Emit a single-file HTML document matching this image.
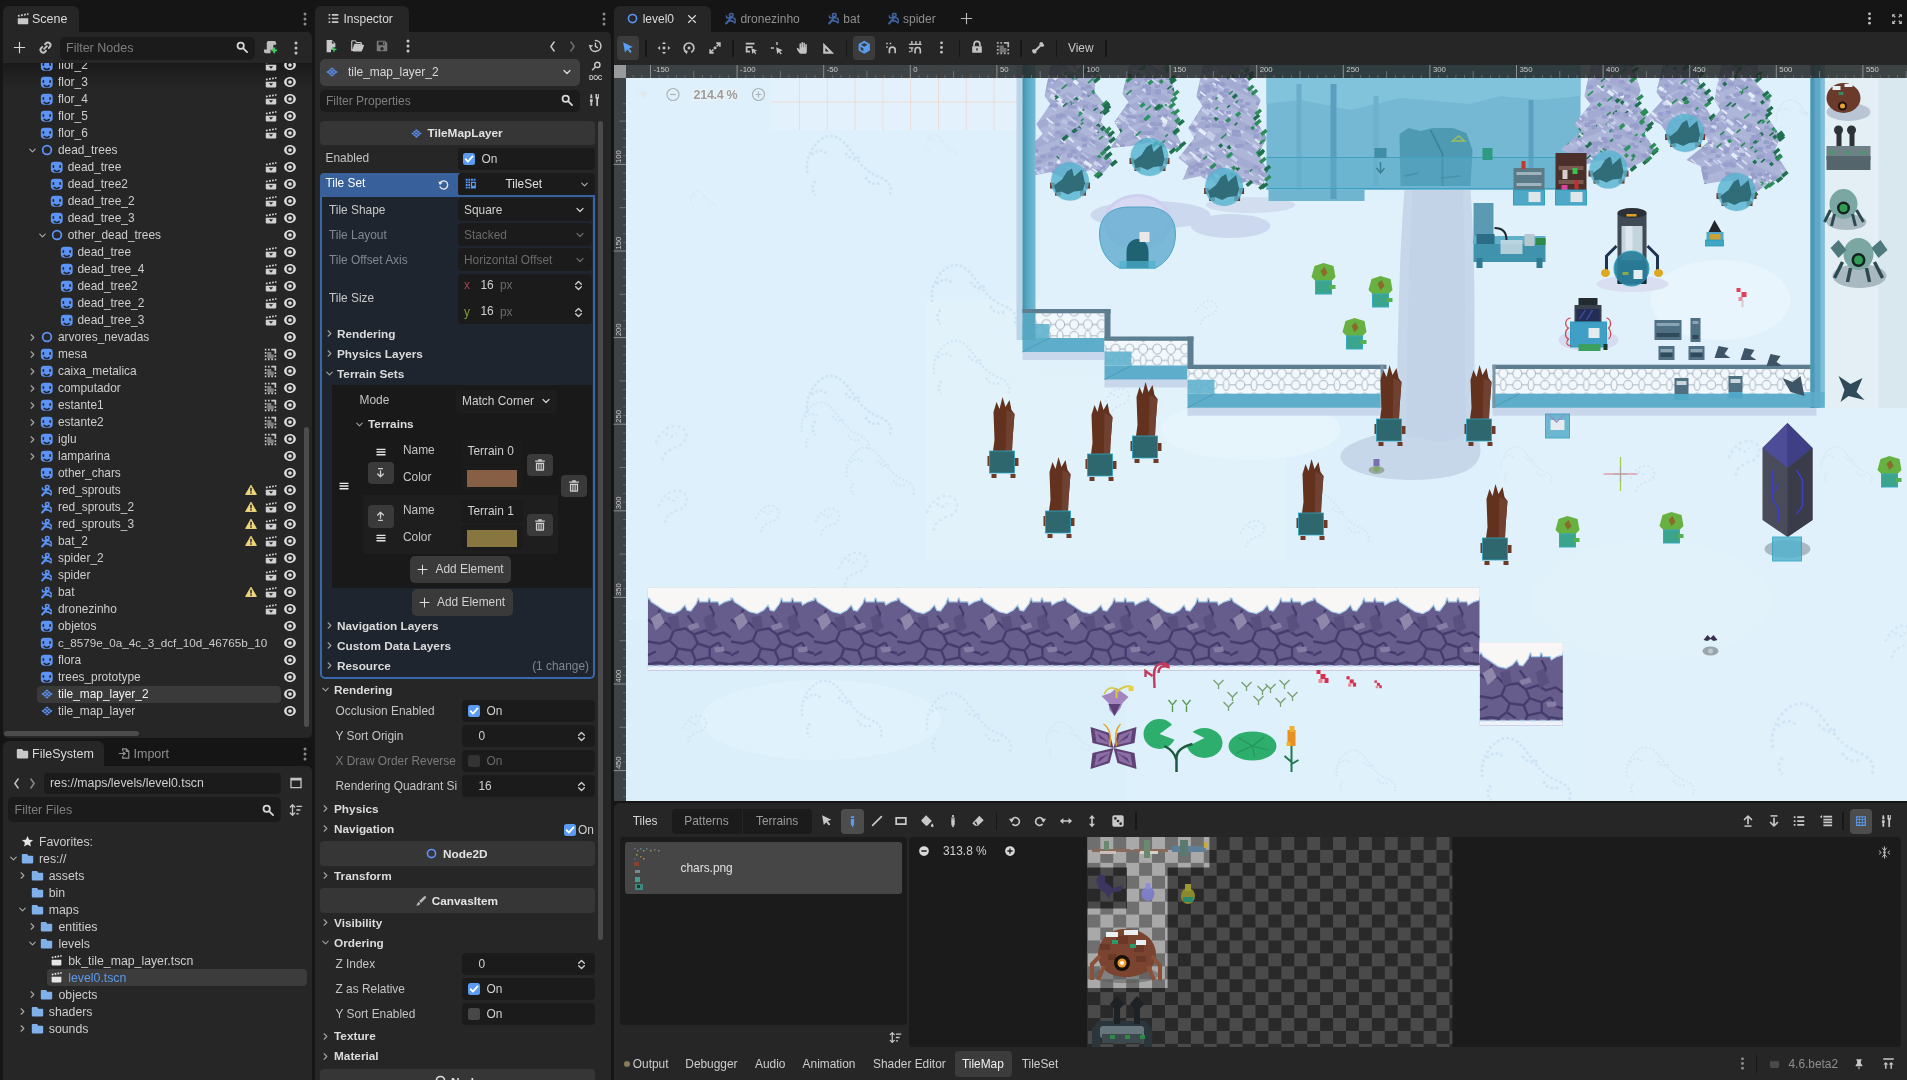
<!DOCTYPE html>
<html><head><meta charset="utf-8"><title>Godot</title>
<style>
html,body{margin:0;padding:0;background:#151515;}
body{width:1907px;height:1080px;overflow:hidden;position:relative;font-family:"Liberation Sans", sans-serif;font-size:12px;color:#d2d2d2;}
body div, body svg{position:absolute;box-sizing:border-box;}
svg text{font-family:"Liberation Sans", sans-serif;}
#root{left:0;top:0;width:1907px;height:1080px;will-change:transform;}
</style></head><body><div id="root">
<div style="left:3px;top:6px;width:76px;height:27px;background:#262626;border-radius:6px 6px 0 0;"></div>
<div style="left:3px;top:32px;width:309px;height:706px;background:#262626;border-radius:0 5px 5px 5px;"></div>
<svg viewBox="0 0 16 16" preserveAspectRatio="none" style="left:15.5px;top:11.5px;width:14px;height:14px;color:#c8c8c8;fill:#c8c8c8;"><path d="M2 7h12v6a1 1 0 0 1-1 1H3a1 1 0 0 1-1-1zM2 3.5l2-.5.5 2-2 .5zM5.5 2.8l2-.5.5 2-2 .5zM9 2.2l2-.5.5 2-2 .5zM12.4 1.6l1.6-.4.5 2-1.6.4z"/></svg>
<div style="left:32px;top:10.5px;height:16px;line-height:16px;font-size:12.5px;color:#dadada;white-space:nowrap;">Scene</div>
<svg viewBox="0 0 16 16" preserveAspectRatio="none" style="left:296.5px;top:10.5px;width:16px;height:16px;color:#8a8a8a;fill:#8a8a8a;"><circle cx="8" cy="3" r="1.5"/><circle cx="8" cy="8" r="1.5"/><circle cx="8" cy="13" r="1.5"/></svg>
<svg viewBox="0 0 16 16" preserveAspectRatio="none" style="left:12px;top:40px;width:15px;height:15px;color:#d8d8d8;fill:#d8d8d8;"><path d="M7.4 2h1.2v5.4H14v1.2H8.6V14H7.4V8.6H2V7.4h5.4z"/></svg>
<svg viewBox="0 0 16 16" preserveAspectRatio="none" style="left:38px;top:40px;width:15px;height:15px;color:#c4c4c4;fill:#c4c4c4;"><g fill="none" stroke="currentColor" stroke-width="2" stroke-linecap="round"><path d="M6.5 9.5l3-3"/><path d="M7.5 4.5l1-1a2.8 2.8 0 0 1 4 4l-1 1"/><path d="M8.5 11.500l-1 1a2.8 2.8 0 0 1-4-4l1-1"/></g></svg>
<div style="left:60px;top:36.5px;width:195px;height:23.5px;background:#1b1b1b;border-radius:5px;"></div>
<div style="left:66px;top:39.5px;height:16px;line-height:16px;font-size:12.5px;color:#7e7e7e;white-space:nowrap;">Filter Nodes</div>
<svg viewBox="0 0 16 16" preserveAspectRatio="none" style="left:235px;top:40px;width:14px;height:14px;color:#d8d8d8;fill:#d8d8d8;"><g fill="none" stroke="currentColor" stroke-width="2" stroke-linecap="round"><circle cx="6.5" cy="6.5" r="3.6"/><path d="M9.5 9.500l4.300 4.300"/></g></svg>
<svg viewBox="0 0 16 16" preserveAspectRatio="none" style="left:263px;top:40px;width:15px;height:15px;color:#cfcfcf;fill:#cfcfcf;"><path d="M6 1a2 2 0 0 0-2 2v7H1v2a2 2 0 0 0 2 2h5v-3.500h3V5h3V3a2 2 0 0 0-2-2z" fill="#bdbdbd"/><path d="M12 9v2h-2v2h2v2h2v-2h2v-2h-2V9z" fill="#45d160" transform="translate(-1 -1)"/></svg>
<svg viewBox="0 0 16 16" preserveAspectRatio="none" style="left:287.5px;top:39.5px;width:16px;height:16px;color:#c4c4c4;fill:#c4c4c4;"><circle cx="8" cy="3" r="1.5"/><circle cx="8" cy="8" r="1.5"/><circle cx="8" cy="13" r="1.5"/></svg>
<div style="left:3px;top:62.500px;width:309px;height:24px;background:linear-gradient(#1a1a1a,#262626);"></div>
<div style="left:3px;top:62.500px;width:309px;height:670px;overflow:hidden;">
<svg viewBox="0 0 16 16" preserveAspectRatio="none" style="left:37px;top:-3.55px;width:13.5px;height:12.5px;color:#cfcfcf;fill:#cfcfcf;"><path fill="#5c93f7" fill-rule="evenodd" d="M5 1a4 4 0 0 0-4 4v6a4 4 0 0 0 4 4h6a4 4 0 0 0 4-4V5a4 4 0 0 0-4-4zM4 5a1 1 0 0 1 1 1v2a1 1 0 0 1-2 0V6a1 1 0 0 1 1-1zm8 0a1 1 0 0 1 1 1v2a1 1 0 0 1-2 0V6a1 1 0 0 1 1-1zM5 11a1 1 0 0 1 .7.300 3.300 3.300 0 0 0 4.600 0 1 1 0 0 1 1.400 1.400 5.300 5.300 0 0 1-7.400 0A1 1 0 0 1 5 11z"/></svg>
<div style="left:55.0px;top:-5.299999999999997px;height:16px;line-height:16px;font-size:11.9px;color:#cdcdcd;white-space:nowrap;">flor_2</div>
<svg viewBox="0 0 16 16" preserveAspectRatio="none" style="left:260.75px;top:-3.8px;width:14px;height:13px;color:#d0d0d0;fill:#d0d0d0;"><path d="M2 7h12v6a1 1 0 0 1-1 1H3a1 1 0 0 1-1-1zm3.5 2L8 12l2.5-3zM2 3.5l2-.5.5 2-2 .5zM5.5 2.8l2-.5.5 2-2 .5zM9 2.2l2-.5.5 2-2 .5zM12.4 1.6l1.6-.4.5 2-1.6.4z" fill-rule="evenodd"/></svg>
<svg viewBox="0 0 16 16" preserveAspectRatio="none" style="left:280px;top:-4.3px;width:14px;height:14px;color:#dcdcdc;fill:#dcdcdc;"><path d="M8 2.300C4.300 2.300 1.300 5 1.300 8s3 5.700 6.700 5.700S14.700 11 14.700 8 11.700 2.300 8 2.300zM8 4.100a3.900 3.900 0 1 1 0 7.800 3.900 3.900 0 0 1 0-7.800zM8 5.900a2.100 2.100 0 1 0 0 4.200 2.100 2.100 0 0 0 0-4.200z" fill-rule="evenodd"/></svg>
<svg viewBox="0 0 16 16" preserveAspectRatio="none" style="left:37px;top:13.45px;width:13.5px;height:12.5px;color:#cfcfcf;fill:#cfcfcf;"><path fill="#5c93f7" fill-rule="evenodd" d="M5 1a4 4 0 0 0-4 4v6a4 4 0 0 0 4 4h6a4 4 0 0 0 4-4V5a4 4 0 0 0-4-4zM4 5a1 1 0 0 1 1 1v2a1 1 0 0 1-2 0V6a1 1 0 0 1 1-1zm8 0a1 1 0 0 1 1 1v2a1 1 0 0 1-2 0V6a1 1 0 0 1 1-1zM5 11a1 1 0 0 1 .7.300 3.300 3.300 0 0 0 4.600 0 1 1 0 0 1 1.400 1.400 5.300 5.300 0 0 1-7.400 0A1 1 0 0 1 5 11z"/></svg>
<div style="left:55.0px;top:11.700000000000003px;height:16px;line-height:16px;font-size:11.9px;color:#cdcdcd;white-space:nowrap;">flor_3</div>
<svg viewBox="0 0 16 16" preserveAspectRatio="none" style="left:260.75px;top:13.2px;width:14px;height:13px;color:#d0d0d0;fill:#d0d0d0;"><path d="M2 7h12v6a1 1 0 0 1-1 1H3a1 1 0 0 1-1-1zm3.5 2L8 12l2.5-3zM2 3.5l2-.5.5 2-2 .5zM5.5 2.8l2-.5.5 2-2 .5zM9 2.2l2-.5.5 2-2 .5zM12.4 1.6l1.6-.4.5 2-1.6.4z" fill-rule="evenodd"/></svg>
<svg viewBox="0 0 16 16" preserveAspectRatio="none" style="left:280px;top:12.7px;width:14px;height:14px;color:#dcdcdc;fill:#dcdcdc;"><path d="M8 2.300C4.300 2.300 1.300 5 1.300 8s3 5.700 6.700 5.700S14.700 11 14.700 8 11.700 2.300 8 2.300zM8 4.100a3.900 3.900 0 1 1 0 7.800 3.900 3.900 0 0 1 0-7.800zM8 5.900a2.100 2.100 0 1 0 0 4.200 2.100 2.100 0 0 0 0-4.200z" fill-rule="evenodd"/></svg>
<svg viewBox="0 0 16 16" preserveAspectRatio="none" style="left:37px;top:30.45px;width:13.5px;height:12.5px;color:#cfcfcf;fill:#cfcfcf;"><path fill="#5c93f7" fill-rule="evenodd" d="M5 1a4 4 0 0 0-4 4v6a4 4 0 0 0 4 4h6a4 4 0 0 0 4-4V5a4 4 0 0 0-4-4zM4 5a1 1 0 0 1 1 1v2a1 1 0 0 1-2 0V6a1 1 0 0 1 1-1zm8 0a1 1 0 0 1 1 1v2a1 1 0 0 1-2 0V6a1 1 0 0 1 1-1zM5 11a1 1 0 0 1 .7.300 3.300 3.300 0 0 0 4.600 0 1 1 0 0 1 1.400 1.400 5.300 5.300 0 0 1-7.400 0A1 1 0 0 1 5 11z"/></svg>
<div style="left:55.0px;top:28.700000000000003px;height:16px;line-height:16px;font-size:11.9px;color:#cdcdcd;white-space:nowrap;">flor_4</div>
<svg viewBox="0 0 16 16" preserveAspectRatio="none" style="left:260.75px;top:30.2px;width:14px;height:13px;color:#d0d0d0;fill:#d0d0d0;"><path d="M2 7h12v6a1 1 0 0 1-1 1H3a1 1 0 0 1-1-1zm3.5 2L8 12l2.5-3zM2 3.5l2-.5.5 2-2 .5zM5.5 2.8l2-.5.5 2-2 .5zM9 2.2l2-.5.5 2-2 .5zM12.4 1.6l1.6-.4.5 2-1.6.4z" fill-rule="evenodd"/></svg>
<svg viewBox="0 0 16 16" preserveAspectRatio="none" style="left:280px;top:29.7px;width:14px;height:14px;color:#dcdcdc;fill:#dcdcdc;"><path d="M8 2.300C4.300 2.300 1.300 5 1.300 8s3 5.700 6.700 5.700S14.700 11 14.700 8 11.700 2.300 8 2.300zM8 4.100a3.900 3.900 0 1 1 0 7.800 3.900 3.900 0 0 1 0-7.800zM8 5.900a2.100 2.100 0 1 0 0 4.200 2.100 2.100 0 0 0 0-4.200z" fill-rule="evenodd"/></svg>
<svg viewBox="0 0 16 16" preserveAspectRatio="none" style="left:37px;top:47.45px;width:13.5px;height:12.5px;color:#cfcfcf;fill:#cfcfcf;"><path fill="#5c93f7" fill-rule="evenodd" d="M5 1a4 4 0 0 0-4 4v6a4 4 0 0 0 4 4h6a4 4 0 0 0 4-4V5a4 4 0 0 0-4-4zM4 5a1 1 0 0 1 1 1v2a1 1 0 0 1-2 0V6a1 1 0 0 1 1-1zm8 0a1 1 0 0 1 1 1v2a1 1 0 0 1-2 0V6a1 1 0 0 1 1-1zM5 11a1 1 0 0 1 .7.300 3.300 3.300 0 0 0 4.600 0 1 1 0 0 1 1.400 1.400 5.300 5.300 0 0 1-7.400 0A1 1 0 0 1 5 11z"/></svg>
<div style="left:55.0px;top:45.7px;height:16px;line-height:16px;font-size:11.9px;color:#cdcdcd;white-space:nowrap;">flor_5</div>
<svg viewBox="0 0 16 16" preserveAspectRatio="none" style="left:260.75px;top:47.2px;width:14px;height:13px;color:#d0d0d0;fill:#d0d0d0;"><path d="M2 7h12v6a1 1 0 0 1-1 1H3a1 1 0 0 1-1-1zm3.5 2L8 12l2.5-3zM2 3.5l2-.5.5 2-2 .5zM5.5 2.8l2-.5.5 2-2 .5zM9 2.2l2-.5.5 2-2 .5zM12.4 1.6l1.6-.4.5 2-1.6.4z" fill-rule="evenodd"/></svg>
<svg viewBox="0 0 16 16" preserveAspectRatio="none" style="left:280px;top:46.7px;width:14px;height:14px;color:#dcdcdc;fill:#dcdcdc;"><path d="M8 2.300C4.300 2.300 1.300 5 1.300 8s3 5.700 6.700 5.700S14.700 11 14.700 8 11.700 2.300 8 2.300zM8 4.100a3.900 3.900 0 1 1 0 7.800 3.900 3.900 0 0 1 0-7.800zM8 5.900a2.100 2.100 0 1 0 0 4.200 2.100 2.100 0 0 0 0-4.200z" fill-rule="evenodd"/></svg>
<svg viewBox="0 0 16 16" preserveAspectRatio="none" style="left:37px;top:64.45px;width:13.5px;height:12.5px;color:#cfcfcf;fill:#cfcfcf;"><path fill="#5c93f7" fill-rule="evenodd" d="M5 1a4 4 0 0 0-4 4v6a4 4 0 0 0 4 4h6a4 4 0 0 0 4-4V5a4 4 0 0 0-4-4zM4 5a1 1 0 0 1 1 1v2a1 1 0 0 1-2 0V6a1 1 0 0 1 1-1zm8 0a1 1 0 0 1 1 1v2a1 1 0 0 1-2 0V6a1 1 0 0 1 1-1zM5 11a1 1 0 0 1 .7.300 3.300 3.300 0 0 0 4.600 0 1 1 0 0 1 1.400 1.400 5.300 5.300 0 0 1-7.400 0A1 1 0 0 1 5 11z"/></svg>
<div style="left:55.0px;top:62.69999999999999px;height:16px;line-height:16px;font-size:11.9px;color:#cdcdcd;white-space:nowrap;">flor_6</div>
<svg viewBox="0 0 16 16" preserveAspectRatio="none" style="left:260.75px;top:64.2px;width:14px;height:13px;color:#d0d0d0;fill:#d0d0d0;"><path d="M2 7h12v6a1 1 0 0 1-1 1H3a1 1 0 0 1-1-1zm3.5 2L8 12l2.5-3zM2 3.5l2-.5.5 2-2 .5zM5.5 2.8l2-.5.5 2-2 .5zM9 2.2l2-.5.5 2-2 .5zM12.4 1.6l1.6-.4.5 2-1.6.4z" fill-rule="evenodd"/></svg>
<svg viewBox="0 0 16 16" preserveAspectRatio="none" style="left:280px;top:63.7px;width:14px;height:14px;color:#dcdcdc;fill:#dcdcdc;"><path d="M8 2.300C4.300 2.300 1.300 5 1.300 8s3 5.700 6.700 5.700S14.700 11 14.700 8 11.700 2.300 8 2.300zM8 4.100a3.900 3.900 0 1 1 0 7.800 3.900 3.900 0 0 1 0-7.800zM8 5.900a2.100 2.100 0 1 0 0 4.200 2.100 2.100 0 0 0 0-4.200z" fill-rule="evenodd"/></svg>
<svg viewBox="0 0 16 16" preserveAspectRatio="none" style="left:23.75px;top:82.2px;width:11px;height:11px;color:#a8a8a8;fill:#a8a8a8;"><path d="M4 6l4 4 4-4" fill="none" stroke="currentColor" stroke-width="1.600" stroke-linecap="round" stroke-linejoin="round"/></svg>
<svg viewBox="0 0 16 16" preserveAspectRatio="none" style="left:36.75px;top:80.7px;width:14px;height:14px;color:#cfcfcf;fill:#cfcfcf;"><circle cx="8" cy="8" r="5" fill="none" stroke="#5c93f7" stroke-width="2"/></svg>
<div style="left:55.0px;top:79.69999999999999px;height:16px;line-height:16px;font-size:11.9px;color:#cdcdcd;white-space:nowrap;">dead_trees</div>
<svg viewBox="0 0 16 16" preserveAspectRatio="none" style="left:280px;top:80.7px;width:14px;height:14px;color:#dcdcdc;fill:#dcdcdc;"><path d="M8 2.300C4.300 2.300 1.300 5 1.300 8s3 5.700 6.700 5.700S14.700 11 14.700 8 11.700 2.300 8 2.300zM8 4.100a3.900 3.900 0 1 1 0 7.800 3.900 3.900 0 0 1 0-7.800zM8 5.900a2.100 2.100 0 1 0 0 4.200 2.100 2.100 0 0 0 0-4.200z" fill-rule="evenodd"/></svg>
<svg viewBox="0 0 16 16" preserveAspectRatio="none" style="left:46.75px;top:98.45px;width:13.5px;height:12.5px;color:#cfcfcf;fill:#cfcfcf;"><path fill="#5c93f7" fill-rule="evenodd" d="M5 1a4 4 0 0 0-4 4v6a4 4 0 0 0 4 4h6a4 4 0 0 0 4-4V5a4 4 0 0 0-4-4zM4 5a1 1 0 0 1 1 1v2a1 1 0 0 1-2 0V6a1 1 0 0 1 1-1zm8 0a1 1 0 0 1 1 1v2a1 1 0 0 1-2 0V6a1 1 0 0 1 1-1zM5 11a1 1 0 0 1 .7.300 3.300 3.300 0 0 0 4.600 0 1 1 0 0 1 1.400 1.400 5.300 5.300 0 0 1-7.400 0A1 1 0 0 1 5 11z"/></svg>
<div style="left:64.75px;top:96.69999999999999px;height:16px;line-height:16px;font-size:11.9px;color:#cdcdcd;white-space:nowrap;">dead_tree</div>
<svg viewBox="0 0 16 16" preserveAspectRatio="none" style="left:260.75px;top:98.2px;width:14px;height:13px;color:#d0d0d0;fill:#d0d0d0;"><path d="M2 7h12v6a1 1 0 0 1-1 1H3a1 1 0 0 1-1-1zm3.5 2L8 12l2.5-3zM2 3.5l2-.5.5 2-2 .5zM5.5 2.8l2-.5.5 2-2 .5zM9 2.2l2-.5.5 2-2 .5zM12.4 1.6l1.6-.4.5 2-1.6.4z" fill-rule="evenodd"/></svg>
<svg viewBox="0 0 16 16" preserveAspectRatio="none" style="left:280px;top:97.7px;width:14px;height:14px;color:#dcdcdc;fill:#dcdcdc;"><path d="M8 2.300C4.300 2.300 1.300 5 1.300 8s3 5.700 6.700 5.700S14.700 11 14.700 8 11.700 2.300 8 2.300zM8 4.100a3.900 3.900 0 1 1 0 7.800 3.900 3.900 0 0 1 0-7.800zM8 5.900a2.100 2.100 0 1 0 0 4.200 2.100 2.100 0 0 0 0-4.200z" fill-rule="evenodd"/></svg>
<svg viewBox="0 0 16 16" preserveAspectRatio="none" style="left:46.75px;top:115.45px;width:13.5px;height:12.5px;color:#cfcfcf;fill:#cfcfcf;"><path fill="#5c93f7" fill-rule="evenodd" d="M5 1a4 4 0 0 0-4 4v6a4 4 0 0 0 4 4h6a4 4 0 0 0 4-4V5a4 4 0 0 0-4-4zM4 5a1 1 0 0 1 1 1v2a1 1 0 0 1-2 0V6a1 1 0 0 1 1-1zm8 0a1 1 0 0 1 1 1v2a1 1 0 0 1-2 0V6a1 1 0 0 1 1-1zM5 11a1 1 0 0 1 .7.300 3.300 3.300 0 0 0 4.600 0 1 1 0 0 1 1.400 1.400 5.300 5.300 0 0 1-7.400 0A1 1 0 0 1 5 11z"/></svg>
<div style="left:64.75px;top:113.69999999999999px;height:16px;line-height:16px;font-size:11.9px;color:#cdcdcd;white-space:nowrap;">dead_tree2</div>
<svg viewBox="0 0 16 16" preserveAspectRatio="none" style="left:260.75px;top:115.2px;width:14px;height:13px;color:#d0d0d0;fill:#d0d0d0;"><path d="M2 7h12v6a1 1 0 0 1-1 1H3a1 1 0 0 1-1-1zm3.5 2L8 12l2.5-3zM2 3.5l2-.5.5 2-2 .5zM5.5 2.8l2-.5.5 2-2 .5zM9 2.2l2-.5.5 2-2 .5zM12.4 1.6l1.6-.4.5 2-1.6.4z" fill-rule="evenodd"/></svg>
<svg viewBox="0 0 16 16" preserveAspectRatio="none" style="left:280px;top:114.7px;width:14px;height:14px;color:#dcdcdc;fill:#dcdcdc;"><path d="M8 2.300C4.300 2.300 1.300 5 1.300 8s3 5.700 6.700 5.700S14.700 11 14.700 8 11.700 2.300 8 2.300zM8 4.100a3.900 3.900 0 1 1 0 7.800 3.900 3.900 0 0 1 0-7.800zM8 5.900a2.100 2.100 0 1 0 0 4.200 2.100 2.100 0 0 0 0-4.200z" fill-rule="evenodd"/></svg>
<svg viewBox="0 0 16 16" preserveAspectRatio="none" style="left:46.75px;top:132.45px;width:13.5px;height:12.5px;color:#cfcfcf;fill:#cfcfcf;"><path fill="#5c93f7" fill-rule="evenodd" d="M5 1a4 4 0 0 0-4 4v6a4 4 0 0 0 4 4h6a4 4 0 0 0 4-4V5a4 4 0 0 0-4-4zM4 5a1 1 0 0 1 1 1v2a1 1 0 0 1-2 0V6a1 1 0 0 1 1-1zm8 0a1 1 0 0 1 1 1v2a1 1 0 0 1-2 0V6a1 1 0 0 1 1-1zM5 11a1 1 0 0 1 .7.300 3.300 3.300 0 0 0 4.600 0 1 1 0 0 1 1.400 1.400 5.300 5.300 0 0 1-7.400 0A1 1 0 0 1 5 11z"/></svg>
<div style="left:64.75px;top:130.7px;height:16px;line-height:16px;font-size:11.9px;color:#cdcdcd;white-space:nowrap;">dead_tree_2</div>
<svg viewBox="0 0 16 16" preserveAspectRatio="none" style="left:260.75px;top:132.2px;width:14px;height:13px;color:#d0d0d0;fill:#d0d0d0;"><path d="M2 7h12v6a1 1 0 0 1-1 1H3a1 1 0 0 1-1-1zm3.5 2L8 12l2.5-3zM2 3.5l2-.5.5 2-2 .5zM5.5 2.8l2-.5.5 2-2 .5zM9 2.2l2-.5.5 2-2 .5zM12.4 1.6l1.6-.4.5 2-1.6.4z" fill-rule="evenodd"/></svg>
<svg viewBox="0 0 16 16" preserveAspectRatio="none" style="left:280px;top:131.7px;width:14px;height:14px;color:#dcdcdc;fill:#dcdcdc;"><path d="M8 2.300C4.300 2.300 1.300 5 1.300 8s3 5.700 6.700 5.700S14.700 11 14.700 8 11.700 2.300 8 2.300zM8 4.100a3.900 3.900 0 1 1 0 7.800 3.900 3.900 0 0 1 0-7.800zM8 5.900a2.100 2.100 0 1 0 0 4.200 2.100 2.100 0 0 0 0-4.200z" fill-rule="evenodd"/></svg>
<svg viewBox="0 0 16 16" preserveAspectRatio="none" style="left:46.75px;top:149.45px;width:13.5px;height:12.5px;color:#cfcfcf;fill:#cfcfcf;"><path fill="#5c93f7" fill-rule="evenodd" d="M5 1a4 4 0 0 0-4 4v6a4 4 0 0 0 4 4h6a4 4 0 0 0 4-4V5a4 4 0 0 0-4-4zM4 5a1 1 0 0 1 1 1v2a1 1 0 0 1-2 0V6a1 1 0 0 1 1-1zm8 0a1 1 0 0 1 1 1v2a1 1 0 0 1-2 0V6a1 1 0 0 1 1-1zM5 11a1 1 0 0 1 .7.300 3.300 3.300 0 0 0 4.600 0 1 1 0 0 1 1.400 1.400 5.300 5.300 0 0 1-7.400 0A1 1 0 0 1 5 11z"/></svg>
<div style="left:64.75px;top:147.7px;height:16px;line-height:16px;font-size:11.9px;color:#cdcdcd;white-space:nowrap;">dead_tree_3</div>
<svg viewBox="0 0 16 16" preserveAspectRatio="none" style="left:260.75px;top:149.2px;width:14px;height:13px;color:#d0d0d0;fill:#d0d0d0;"><path d="M2 7h12v6a1 1 0 0 1-1 1H3a1 1 0 0 1-1-1zm3.5 2L8 12l2.5-3zM2 3.5l2-.5.5 2-2 .5zM5.5 2.8l2-.5.5 2-2 .5zM9 2.2l2-.5.5 2-2 .5zM12.4 1.6l1.6-.4.5 2-1.6.4z" fill-rule="evenodd"/></svg>
<svg viewBox="0 0 16 16" preserveAspectRatio="none" style="left:280px;top:148.7px;width:14px;height:14px;color:#dcdcdc;fill:#dcdcdc;"><path d="M8 2.300C4.300 2.300 1.300 5 1.300 8s3 5.700 6.700 5.700S14.700 11 14.700 8 11.700 2.300 8 2.300zM8 4.100a3.900 3.900 0 1 1 0 7.800 3.900 3.900 0 0 1 0-7.800zM8 5.900a2.100 2.100 0 1 0 0 4.200 2.100 2.100 0 0 0 0-4.200z" fill-rule="evenodd"/></svg>
<svg viewBox="0 0 16 16" preserveAspectRatio="none" style="left:33.5px;top:167.2px;width:11px;height:11px;color:#a8a8a8;fill:#a8a8a8;"><path d="M4 6l4 4 4-4" fill="none" stroke="currentColor" stroke-width="1.600" stroke-linecap="round" stroke-linejoin="round"/></svg>
<svg viewBox="0 0 16 16" preserveAspectRatio="none" style="left:46.5px;top:165.7px;width:14px;height:14px;color:#cfcfcf;fill:#cfcfcf;"><circle cx="8" cy="8" r="5" fill="none" stroke="#5c93f7" stroke-width="2"/></svg>
<div style="left:64.75px;top:164.7px;height:16px;line-height:16px;font-size:11.9px;color:#cdcdcd;white-space:nowrap;">other_dead_trees</div>
<svg viewBox="0 0 16 16" preserveAspectRatio="none" style="left:280px;top:165.7px;width:14px;height:14px;color:#dcdcdc;fill:#dcdcdc;"><path d="M8 2.300C4.300 2.300 1.300 5 1.300 8s3 5.700 6.700 5.700S14.700 11 14.700 8 11.700 2.300 8 2.300zM8 4.100a3.900 3.900 0 1 1 0 7.800 3.900 3.900 0 0 1 0-7.800zM8 5.900a2.100 2.100 0 1 0 0 4.200 2.100 2.100 0 0 0 0-4.200z" fill-rule="evenodd"/></svg>
<svg viewBox="0 0 16 16" preserveAspectRatio="none" style="left:56.5px;top:183.45px;width:13.5px;height:12.5px;color:#cfcfcf;fill:#cfcfcf;"><path fill="#5c93f7" fill-rule="evenodd" d="M5 1a4 4 0 0 0-4 4v6a4 4 0 0 0 4 4h6a4 4 0 0 0 4-4V5a4 4 0 0 0-4-4zM4 5a1 1 0 0 1 1 1v2a1 1 0 0 1-2 0V6a1 1 0 0 1 1-1zm8 0a1 1 0 0 1 1 1v2a1 1 0 0 1-2 0V6a1 1 0 0 1 1-1zM5 11a1 1 0 0 1 .7.300 3.300 3.300 0 0 0 4.600 0 1 1 0 0 1 1.400 1.400 5.300 5.300 0 0 1-7.400 0A1 1 0 0 1 5 11z"/></svg>
<div style="left:74.5px;top:181.7px;height:16px;line-height:16px;font-size:11.9px;color:#cdcdcd;white-space:nowrap;">dead_tree</div>
<svg viewBox="0 0 16 16" preserveAspectRatio="none" style="left:260.75px;top:183.2px;width:14px;height:13px;color:#d0d0d0;fill:#d0d0d0;"><path d="M2 7h12v6a1 1 0 0 1-1 1H3a1 1 0 0 1-1-1zm3.5 2L8 12l2.5-3zM2 3.5l2-.5.5 2-2 .5zM5.5 2.8l2-.5.5 2-2 .5zM9 2.2l2-.5.5 2-2 .5zM12.4 1.6l1.6-.4.5 2-1.6.4z" fill-rule="evenodd"/></svg>
<svg viewBox="0 0 16 16" preserveAspectRatio="none" style="left:280px;top:182.7px;width:14px;height:14px;color:#dcdcdc;fill:#dcdcdc;"><path d="M8 2.300C4.300 2.300 1.300 5 1.300 8s3 5.700 6.700 5.700S14.700 11 14.700 8 11.700 2.300 8 2.300zM8 4.100a3.900 3.900 0 1 1 0 7.800 3.900 3.900 0 0 1 0-7.800zM8 5.900a2.100 2.100 0 1 0 0 4.200 2.100 2.100 0 0 0 0-4.200z" fill-rule="evenodd"/></svg>
<svg viewBox="0 0 16 16" preserveAspectRatio="none" style="left:56.5px;top:200.45px;width:13.5px;height:12.5px;color:#cfcfcf;fill:#cfcfcf;"><path fill="#5c93f7" fill-rule="evenodd" d="M5 1a4 4 0 0 0-4 4v6a4 4 0 0 0 4 4h6a4 4 0 0 0 4-4V5a4 4 0 0 0-4-4zM4 5a1 1 0 0 1 1 1v2a1 1 0 0 1-2 0V6a1 1 0 0 1 1-1zm8 0a1 1 0 0 1 1 1v2a1 1 0 0 1-2 0V6a1 1 0 0 1 1-1zM5 11a1 1 0 0 1 .7.300 3.300 3.300 0 0 0 4.600 0 1 1 0 0 1 1.400 1.400 5.300 5.300 0 0 1-7.400 0A1 1 0 0 1 5 11z"/></svg>
<div style="left:74.5px;top:198.7px;height:16px;line-height:16px;font-size:11.9px;color:#cdcdcd;white-space:nowrap;">dead_tree_4</div>
<svg viewBox="0 0 16 16" preserveAspectRatio="none" style="left:260.75px;top:200.2px;width:14px;height:13px;color:#d0d0d0;fill:#d0d0d0;"><path d="M2 7h12v6a1 1 0 0 1-1 1H3a1 1 0 0 1-1-1zm3.5 2L8 12l2.5-3zM2 3.5l2-.5.5 2-2 .5zM5.5 2.8l2-.5.5 2-2 .5zM9 2.2l2-.5.5 2-2 .5zM12.4 1.6l1.6-.4.5 2-1.6.4z" fill-rule="evenodd"/></svg>
<svg viewBox="0 0 16 16" preserveAspectRatio="none" style="left:280px;top:199.7px;width:14px;height:14px;color:#dcdcdc;fill:#dcdcdc;"><path d="M8 2.300C4.300 2.300 1.300 5 1.300 8s3 5.700 6.700 5.700S14.700 11 14.700 8 11.700 2.300 8 2.300zM8 4.100a3.900 3.900 0 1 1 0 7.800 3.900 3.900 0 0 1 0-7.800zM8 5.900a2.100 2.100 0 1 0 0 4.200 2.100 2.100 0 0 0 0-4.200z" fill-rule="evenodd"/></svg>
<svg viewBox="0 0 16 16" preserveAspectRatio="none" style="left:56.5px;top:217.45px;width:13.5px;height:12.5px;color:#cfcfcf;fill:#cfcfcf;"><path fill="#5c93f7" fill-rule="evenodd" d="M5 1a4 4 0 0 0-4 4v6a4 4 0 0 0 4 4h6a4 4 0 0 0 4-4V5a4 4 0 0 0-4-4zM4 5a1 1 0 0 1 1 1v2a1 1 0 0 1-2 0V6a1 1 0 0 1 1-1zm8 0a1 1 0 0 1 1 1v2a1 1 0 0 1-2 0V6a1 1 0 0 1 1-1zM5 11a1 1 0 0 1 .7.300 3.300 3.300 0 0 0 4.600 0 1 1 0 0 1 1.400 1.400 5.300 5.300 0 0 1-7.400 0A1 1 0 0 1 5 11z"/></svg>
<div style="left:74.5px;top:215.7px;height:16px;line-height:16px;font-size:11.9px;color:#cdcdcd;white-space:nowrap;">dead_tree2</div>
<svg viewBox="0 0 16 16" preserveAspectRatio="none" style="left:260.75px;top:217.2px;width:14px;height:13px;color:#d0d0d0;fill:#d0d0d0;"><path d="M2 7h12v6a1 1 0 0 1-1 1H3a1 1 0 0 1-1-1zm3.5 2L8 12l2.5-3zM2 3.5l2-.5.5 2-2 .5zM5.5 2.8l2-.5.5 2-2 .5zM9 2.2l2-.5.5 2-2 .5zM12.4 1.6l1.6-.4.5 2-1.6.4z" fill-rule="evenodd"/></svg>
<svg viewBox="0 0 16 16" preserveAspectRatio="none" style="left:280px;top:216.7px;width:14px;height:14px;color:#dcdcdc;fill:#dcdcdc;"><path d="M8 2.300C4.300 2.300 1.300 5 1.300 8s3 5.700 6.700 5.700S14.700 11 14.700 8 11.700 2.300 8 2.300zM8 4.100a3.900 3.900 0 1 1 0 7.800 3.900 3.900 0 0 1 0-7.800zM8 5.900a2.100 2.100 0 1 0 0 4.200 2.100 2.100 0 0 0 0-4.200z" fill-rule="evenodd"/></svg>
<svg viewBox="0 0 16 16" preserveAspectRatio="none" style="left:56.5px;top:234.45px;width:13.5px;height:12.5px;color:#cfcfcf;fill:#cfcfcf;"><path fill="#5c93f7" fill-rule="evenodd" d="M5 1a4 4 0 0 0-4 4v6a4 4 0 0 0 4 4h6a4 4 0 0 0 4-4V5a4 4 0 0 0-4-4zM4 5a1 1 0 0 1 1 1v2a1 1 0 0 1-2 0V6a1 1 0 0 1 1-1zm8 0a1 1 0 0 1 1 1v2a1 1 0 0 1-2 0V6a1 1 0 0 1 1-1zM5 11a1 1 0 0 1 .7.300 3.300 3.300 0 0 0 4.600 0 1 1 0 0 1 1.400 1.400 5.300 5.300 0 0 1-7.400 0A1 1 0 0 1 5 11z"/></svg>
<div style="left:74.5px;top:232.7px;height:16px;line-height:16px;font-size:11.9px;color:#cdcdcd;white-space:nowrap;">dead_tree_2</div>
<svg viewBox="0 0 16 16" preserveAspectRatio="none" style="left:260.75px;top:234.2px;width:14px;height:13px;color:#d0d0d0;fill:#d0d0d0;"><path d="M2 7h12v6a1 1 0 0 1-1 1H3a1 1 0 0 1-1-1zm3.5 2L8 12l2.5-3zM2 3.5l2-.5.5 2-2 .5zM5.5 2.8l2-.5.5 2-2 .5zM9 2.2l2-.5.5 2-2 .5zM12.4 1.6l1.6-.4.5 2-1.6.4z" fill-rule="evenodd"/></svg>
<svg viewBox="0 0 16 16" preserveAspectRatio="none" style="left:280px;top:233.7px;width:14px;height:14px;color:#dcdcdc;fill:#dcdcdc;"><path d="M8 2.300C4.300 2.300 1.300 5 1.300 8s3 5.700 6.700 5.700S14.700 11 14.700 8 11.700 2.300 8 2.300zM8 4.100a3.900 3.900 0 1 1 0 7.800 3.900 3.900 0 0 1 0-7.800zM8 5.900a2.100 2.100 0 1 0 0 4.200 2.100 2.100 0 0 0 0-4.200z" fill-rule="evenodd"/></svg>
<svg viewBox="0 0 16 16" preserveAspectRatio="none" style="left:56.5px;top:251.45px;width:13.5px;height:12.5px;color:#cfcfcf;fill:#cfcfcf;"><path fill="#5c93f7" fill-rule="evenodd" d="M5 1a4 4 0 0 0-4 4v6a4 4 0 0 0 4 4h6a4 4 0 0 0 4-4V5a4 4 0 0 0-4-4zM4 5a1 1 0 0 1 1 1v2a1 1 0 0 1-2 0V6a1 1 0 0 1 1-1zm8 0a1 1 0 0 1 1 1v2a1 1 0 0 1-2 0V6a1 1 0 0 1 1-1zM5 11a1 1 0 0 1 .7.300 3.300 3.300 0 0 0 4.600 0 1 1 0 0 1 1.400 1.400 5.300 5.300 0 0 1-7.400 0A1 1 0 0 1 5 11z"/></svg>
<div style="left:74.5px;top:249.7px;height:16px;line-height:16px;font-size:11.9px;color:#cdcdcd;white-space:nowrap;">dead_tree_3</div>
<svg viewBox="0 0 16 16" preserveAspectRatio="none" style="left:260.75px;top:251.2px;width:14px;height:13px;color:#d0d0d0;fill:#d0d0d0;"><path d="M2 7h12v6a1 1 0 0 1-1 1H3a1 1 0 0 1-1-1zm3.5 2L8 12l2.5-3zM2 3.5l2-.5.5 2-2 .5zM5.5 2.8l2-.5.5 2-2 .5zM9 2.2l2-.5.5 2-2 .5zM12.4 1.6l1.6-.4.5 2-1.6.4z" fill-rule="evenodd"/></svg>
<svg viewBox="0 0 16 16" preserveAspectRatio="none" style="left:280px;top:250.7px;width:14px;height:14px;color:#dcdcdc;fill:#dcdcdc;"><path d="M8 2.300C4.300 2.300 1.300 5 1.300 8s3 5.700 6.700 5.700S14.700 11 14.700 8 11.700 2.300 8 2.300zM8 4.100a3.900 3.900 0 1 1 0 7.800 3.900 3.900 0 0 1 0-7.800zM8 5.900a2.100 2.100 0 1 0 0 4.200 2.100 2.100 0 0 0 0-4.200z" fill-rule="evenodd"/></svg>
<svg viewBox="0 0 16 16" preserveAspectRatio="none" style="left:23.75px;top:269.2px;width:11px;height:11px;color:#a8a8a8;fill:#a8a8a8;"><path d="M6 4l4 4-4 4" fill="none" stroke="currentColor" stroke-width="1.600" stroke-linecap="round" stroke-linejoin="round"/></svg>
<svg viewBox="0 0 16 16" preserveAspectRatio="none" style="left:36.75px;top:267.7px;width:14px;height:14px;color:#cfcfcf;fill:#cfcfcf;"><circle cx="8" cy="8" r="5" fill="none" stroke="#5c93f7" stroke-width="2"/></svg>
<div style="left:55.0px;top:266.7px;height:16px;line-height:16px;font-size:11.9px;color:#cdcdcd;white-space:nowrap;">arvores_nevadas</div>
<svg viewBox="0 0 16 16" preserveAspectRatio="none" style="left:280px;top:267.7px;width:14px;height:14px;color:#dcdcdc;fill:#dcdcdc;"><path d="M8 2.300C4.300 2.300 1.300 5 1.300 8s3 5.700 6.700 5.700S14.700 11 14.700 8 11.700 2.300 8 2.300zM8 4.100a3.900 3.900 0 1 1 0 7.800 3.900 3.900 0 0 1 0-7.800zM8 5.900a2.100 2.100 0 1 0 0 4.200 2.100 2.100 0 0 0 0-4.200z" fill-rule="evenodd"/></svg>
<svg viewBox="0 0 16 16" preserveAspectRatio="none" style="left:23.75px;top:286.2px;width:11px;height:11px;color:#a8a8a8;fill:#a8a8a8;"><path d="M6 4l4 4-4 4" fill="none" stroke="currentColor" stroke-width="1.600" stroke-linecap="round" stroke-linejoin="round"/></svg>
<svg viewBox="0 0 16 16" preserveAspectRatio="none" style="left:37px;top:285.45px;width:13.5px;height:12.5px;color:#cfcfcf;fill:#cfcfcf;"><path fill="#5c93f7" fill-rule="evenodd" d="M5 1a4 4 0 0 0-4 4v6a4 4 0 0 0 4 4h6a4 4 0 0 0 4-4V5a4 4 0 0 0-4-4zM4 5a1 1 0 0 1 1 1v2a1 1 0 0 1-2 0V6a1 1 0 0 1 1-1zm8 0a1 1 0 0 1 1 1v2a1 1 0 0 1-2 0V6a1 1 0 0 1 1-1zM5 11a1 1 0 0 1 .7.300 3.300 3.300 0 0 0 4.600 0 1 1 0 0 1 1.400 1.400 5.300 5.300 0 0 1-7.400 0A1 1 0 0 1 5 11z"/></svg>
<div style="left:55.0px;top:283.7px;height:16px;line-height:16px;font-size:11.9px;color:#cdcdcd;white-space:nowrap;">mesa</div>
<svg viewBox="0 0 16 16" preserveAspectRatio="none" style="left:261.25px;top:285.2px;width:13px;height:13px;color:#c9c9c9;fill:#c9c9c9;"><path d="M1 1h2v2H1zM5 1h2v2H5zM9 1h6v6h-2V3H9zM1 5h2v2H1zM1 9h2v2H1zM13 9h2v2h-2zM1 13h2v2H1zM5 13h2v2H5zM9 13h2v2H9zM13 13h2v2h-2z"/><path d="M4 5h5v3h3v5H4z" opacity=".55"/></svg>
<svg viewBox="0 0 16 16" preserveAspectRatio="none" style="left:280px;top:284.7px;width:14px;height:14px;color:#dcdcdc;fill:#dcdcdc;"><path d="M8 2.300C4.300 2.300 1.300 5 1.300 8s3 5.700 6.700 5.700S14.700 11 14.700 8 11.700 2.300 8 2.300zM8 4.100a3.900 3.900 0 1 1 0 7.800 3.900 3.900 0 0 1 0-7.800zM8 5.900a2.100 2.100 0 1 0 0 4.200 2.100 2.100 0 0 0 0-4.200z" fill-rule="evenodd"/></svg>
<svg viewBox="0 0 16 16" preserveAspectRatio="none" style="left:23.75px;top:303.2px;width:11px;height:11px;color:#a8a8a8;fill:#a8a8a8;"><path d="M6 4l4 4-4 4" fill="none" stroke="currentColor" stroke-width="1.600" stroke-linecap="round" stroke-linejoin="round"/></svg>
<svg viewBox="0 0 16 16" preserveAspectRatio="none" style="left:37px;top:302.45px;width:13.5px;height:12.5px;color:#cfcfcf;fill:#cfcfcf;"><path fill="#5c93f7" fill-rule="evenodd" d="M5 1a4 4 0 0 0-4 4v6a4 4 0 0 0 4 4h6a4 4 0 0 0 4-4V5a4 4 0 0 0-4-4zM4 5a1 1 0 0 1 1 1v2a1 1 0 0 1-2 0V6a1 1 0 0 1 1-1zm8 0a1 1 0 0 1 1 1v2a1 1 0 0 1-2 0V6a1 1 0 0 1 1-1zM5 11a1 1 0 0 1 .7.300 3.300 3.300 0 0 0 4.600 0 1 1 0 0 1 1.400 1.400 5.300 5.300 0 0 1-7.400 0A1 1 0 0 1 5 11z"/></svg>
<div style="left:55.0px;top:300.7px;height:16px;line-height:16px;font-size:11.9px;color:#cdcdcd;white-space:nowrap;">caixa_metalica</div>
<svg viewBox="0 0 16 16" preserveAspectRatio="none" style="left:261.25px;top:302.2px;width:13px;height:13px;color:#c9c9c9;fill:#c9c9c9;"><path d="M1 1h2v2H1zM5 1h2v2H5zM9 1h6v6h-2V3H9zM1 5h2v2H1zM1 9h2v2H1zM13 9h2v2h-2zM1 13h2v2H1zM5 13h2v2H5zM9 13h2v2H9zM13 13h2v2h-2z"/><path d="M4 5h5v3h3v5H4z" opacity=".55"/></svg>
<svg viewBox="0 0 16 16" preserveAspectRatio="none" style="left:280px;top:301.7px;width:14px;height:14px;color:#dcdcdc;fill:#dcdcdc;"><path d="M8 2.300C4.300 2.300 1.300 5 1.300 8s3 5.700 6.700 5.700S14.700 11 14.700 8 11.700 2.300 8 2.300zM8 4.100a3.900 3.900 0 1 1 0 7.800 3.900 3.900 0 0 1 0-7.800zM8 5.900a2.100 2.100 0 1 0 0 4.200 2.100 2.100 0 0 0 0-4.200z" fill-rule="evenodd"/></svg>
<svg viewBox="0 0 16 16" preserveAspectRatio="none" style="left:23.75px;top:320.2px;width:11px;height:11px;color:#a8a8a8;fill:#a8a8a8;"><path d="M6 4l4 4-4 4" fill="none" stroke="currentColor" stroke-width="1.600" stroke-linecap="round" stroke-linejoin="round"/></svg>
<svg viewBox="0 0 16 16" preserveAspectRatio="none" style="left:37px;top:319.45px;width:13.5px;height:12.5px;color:#cfcfcf;fill:#cfcfcf;"><path fill="#5c93f7" fill-rule="evenodd" d="M5 1a4 4 0 0 0-4 4v6a4 4 0 0 0 4 4h6a4 4 0 0 0 4-4V5a4 4 0 0 0-4-4zM4 5a1 1 0 0 1 1 1v2a1 1 0 0 1-2 0V6a1 1 0 0 1 1-1zm8 0a1 1 0 0 1 1 1v2a1 1 0 0 1-2 0V6a1 1 0 0 1 1-1zM5 11a1 1 0 0 1 .7.300 3.300 3.300 0 0 0 4.600 0 1 1 0 0 1 1.400 1.400 5.300 5.300 0 0 1-7.400 0A1 1 0 0 1 5 11z"/></svg>
<div style="left:55.0px;top:317.7px;height:16px;line-height:16px;font-size:11.9px;color:#cdcdcd;white-space:nowrap;">computador</div>
<svg viewBox="0 0 16 16" preserveAspectRatio="none" style="left:261.25px;top:319.2px;width:13px;height:13px;color:#c9c9c9;fill:#c9c9c9;"><path d="M1 1h2v2H1zM5 1h2v2H5zM9 1h6v6h-2V3H9zM1 5h2v2H1zM1 9h2v2H1zM13 9h2v2h-2zM1 13h2v2H1zM5 13h2v2H5zM9 13h2v2H9zM13 13h2v2h-2z"/><path d="M4 5h5v3h3v5H4z" opacity=".55"/></svg>
<svg viewBox="0 0 16 16" preserveAspectRatio="none" style="left:280px;top:318.7px;width:14px;height:14px;color:#dcdcdc;fill:#dcdcdc;"><path d="M8 2.300C4.300 2.300 1.300 5 1.300 8s3 5.700 6.700 5.700S14.700 11 14.700 8 11.700 2.300 8 2.300zM8 4.100a3.900 3.900 0 1 1 0 7.800 3.900 3.900 0 0 1 0-7.800zM8 5.900a2.100 2.100 0 1 0 0 4.200 2.100 2.100 0 0 0 0-4.200z" fill-rule="evenodd"/></svg>
<svg viewBox="0 0 16 16" preserveAspectRatio="none" style="left:23.75px;top:337.2px;width:11px;height:11px;color:#a8a8a8;fill:#a8a8a8;"><path d="M6 4l4 4-4 4" fill="none" stroke="currentColor" stroke-width="1.600" stroke-linecap="round" stroke-linejoin="round"/></svg>
<svg viewBox="0 0 16 16" preserveAspectRatio="none" style="left:37px;top:336.45px;width:13.5px;height:12.5px;color:#cfcfcf;fill:#cfcfcf;"><path fill="#5c93f7" fill-rule="evenodd" d="M5 1a4 4 0 0 0-4 4v6a4 4 0 0 0 4 4h6a4 4 0 0 0 4-4V5a4 4 0 0 0-4-4zM4 5a1 1 0 0 1 1 1v2a1 1 0 0 1-2 0V6a1 1 0 0 1 1-1zm8 0a1 1 0 0 1 1 1v2a1 1 0 0 1-2 0V6a1 1 0 0 1 1-1zM5 11a1 1 0 0 1 .7.300 3.300 3.300 0 0 0 4.600 0 1 1 0 0 1 1.400 1.400 5.300 5.300 0 0 1-7.400 0A1 1 0 0 1 5 11z"/></svg>
<div style="left:55.0px;top:334.7px;height:16px;line-height:16px;font-size:11.9px;color:#cdcdcd;white-space:nowrap;">estante1</div>
<svg viewBox="0 0 16 16" preserveAspectRatio="none" style="left:261.25px;top:336.2px;width:13px;height:13px;color:#c9c9c9;fill:#c9c9c9;"><path d="M1 1h2v2H1zM5 1h2v2H5zM9 1h6v6h-2V3H9zM1 5h2v2H1zM1 9h2v2H1zM13 9h2v2h-2zM1 13h2v2H1zM5 13h2v2H5zM9 13h2v2H9zM13 13h2v2h-2z"/><path d="M4 5h5v3h3v5H4z" opacity=".55"/></svg>
<svg viewBox="0 0 16 16" preserveAspectRatio="none" style="left:280px;top:335.7px;width:14px;height:14px;color:#dcdcdc;fill:#dcdcdc;"><path d="M8 2.300C4.300 2.300 1.300 5 1.300 8s3 5.700 6.700 5.700S14.700 11 14.700 8 11.700 2.300 8 2.300zM8 4.100a3.900 3.900 0 1 1 0 7.800 3.900 3.900 0 0 1 0-7.800zM8 5.900a2.100 2.100 0 1 0 0 4.200 2.100 2.100 0 0 0 0-4.200z" fill-rule="evenodd"/></svg>
<svg viewBox="0 0 16 16" preserveAspectRatio="none" style="left:23.75px;top:354.2px;width:11px;height:11px;color:#a8a8a8;fill:#a8a8a8;"><path d="M6 4l4 4-4 4" fill="none" stroke="currentColor" stroke-width="1.600" stroke-linecap="round" stroke-linejoin="round"/></svg>
<svg viewBox="0 0 16 16" preserveAspectRatio="none" style="left:37px;top:353.45px;width:13.5px;height:12.5px;color:#cfcfcf;fill:#cfcfcf;"><path fill="#5c93f7" fill-rule="evenodd" d="M5 1a4 4 0 0 0-4 4v6a4 4 0 0 0 4 4h6a4 4 0 0 0 4-4V5a4 4 0 0 0-4-4zM4 5a1 1 0 0 1 1 1v2a1 1 0 0 1-2 0V6a1 1 0 0 1 1-1zm8 0a1 1 0 0 1 1 1v2a1 1 0 0 1-2 0V6a1 1 0 0 1 1-1zM5 11a1 1 0 0 1 .7.300 3.300 3.300 0 0 0 4.600 0 1 1 0 0 1 1.400 1.400 5.300 5.300 0 0 1-7.400 0A1 1 0 0 1 5 11z"/></svg>
<div style="left:55.0px;top:351.7px;height:16px;line-height:16px;font-size:11.9px;color:#cdcdcd;white-space:nowrap;">estante2</div>
<svg viewBox="0 0 16 16" preserveAspectRatio="none" style="left:261.25px;top:353.2px;width:13px;height:13px;color:#c9c9c9;fill:#c9c9c9;"><path d="M1 1h2v2H1zM5 1h2v2H5zM9 1h6v6h-2V3H9zM1 5h2v2H1zM1 9h2v2H1zM13 9h2v2h-2zM1 13h2v2H1zM5 13h2v2H5zM9 13h2v2H9zM13 13h2v2h-2z"/><path d="M4 5h5v3h3v5H4z" opacity=".55"/></svg>
<svg viewBox="0 0 16 16" preserveAspectRatio="none" style="left:280px;top:352.7px;width:14px;height:14px;color:#dcdcdc;fill:#dcdcdc;"><path d="M8 2.300C4.300 2.300 1.300 5 1.300 8s3 5.700 6.700 5.700S14.700 11 14.700 8 11.700 2.300 8 2.300zM8 4.100a3.900 3.900 0 1 1 0 7.800 3.900 3.900 0 0 1 0-7.800zM8 5.900a2.100 2.100 0 1 0 0 4.200 2.100 2.100 0 0 0 0-4.200z" fill-rule="evenodd"/></svg>
<svg viewBox="0 0 16 16" preserveAspectRatio="none" style="left:23.75px;top:371.2px;width:11px;height:11px;color:#a8a8a8;fill:#a8a8a8;"><path d="M6 4l4 4-4 4" fill="none" stroke="currentColor" stroke-width="1.600" stroke-linecap="round" stroke-linejoin="round"/></svg>
<svg viewBox="0 0 16 16" preserveAspectRatio="none" style="left:37px;top:370.45px;width:13.5px;height:12.5px;color:#cfcfcf;fill:#cfcfcf;"><path fill="#5c93f7" fill-rule="evenodd" d="M5 1a4 4 0 0 0-4 4v6a4 4 0 0 0 4 4h6a4 4 0 0 0 4-4V5a4 4 0 0 0-4-4zM4 5a1 1 0 0 1 1 1v2a1 1 0 0 1-2 0V6a1 1 0 0 1 1-1zm8 0a1 1 0 0 1 1 1v2a1 1 0 0 1-2 0V6a1 1 0 0 1 1-1zM5 11a1 1 0 0 1 .7.300 3.300 3.300 0 0 0 4.600 0 1 1 0 0 1 1.400 1.400 5.300 5.300 0 0 1-7.400 0A1 1 0 0 1 5 11z"/></svg>
<div style="left:55.0px;top:368.7px;height:16px;line-height:16px;font-size:11.9px;color:#cdcdcd;white-space:nowrap;">iglu</div>
<svg viewBox="0 0 16 16" preserveAspectRatio="none" style="left:261.25px;top:370.2px;width:13px;height:13px;color:#c9c9c9;fill:#c9c9c9;"><path d="M1 1h2v2H1zM5 1h2v2H5zM9 1h6v6h-2V3H9zM1 5h2v2H1zM1 9h2v2H1zM13 9h2v2h-2zM1 13h2v2H1zM5 13h2v2H5zM9 13h2v2H9zM13 13h2v2h-2z"/><path d="M4 5h5v3h3v5H4z" opacity=".55"/></svg>
<svg viewBox="0 0 16 16" preserveAspectRatio="none" style="left:280px;top:369.7px;width:14px;height:14px;color:#dcdcdc;fill:#dcdcdc;"><path d="M8 2.300C4.300 2.300 1.300 5 1.300 8s3 5.700 6.700 5.700S14.700 11 14.700 8 11.700 2.300 8 2.300zM8 4.100a3.900 3.900 0 1 1 0 7.800 3.900 3.900 0 0 1 0-7.800zM8 5.900a2.100 2.100 0 1 0 0 4.200 2.100 2.100 0 0 0 0-4.200z" fill-rule="evenodd"/></svg>
<svg viewBox="0 0 16 16" preserveAspectRatio="none" style="left:23.75px;top:388.2px;width:11px;height:11px;color:#a8a8a8;fill:#a8a8a8;"><path d="M6 4l4 4-4 4" fill="none" stroke="currentColor" stroke-width="1.600" stroke-linecap="round" stroke-linejoin="round"/></svg>
<svg viewBox="0 0 16 16" preserveAspectRatio="none" style="left:37px;top:387.45px;width:13.5px;height:12.5px;color:#cfcfcf;fill:#cfcfcf;"><path fill="#5c93f7" fill-rule="evenodd" d="M5 1a4 4 0 0 0-4 4v6a4 4 0 0 0 4 4h6a4 4 0 0 0 4-4V5a4 4 0 0 0-4-4zM4 5a1 1 0 0 1 1 1v2a1 1 0 0 1-2 0V6a1 1 0 0 1 1-1zm8 0a1 1 0 0 1 1 1v2a1 1 0 0 1-2 0V6a1 1 0 0 1 1-1zM5 11a1 1 0 0 1 .7.300 3.300 3.300 0 0 0 4.600 0 1 1 0 0 1 1.400 1.400 5.300 5.300 0 0 1-7.400 0A1 1 0 0 1 5 11z"/></svg>
<div style="left:55.0px;top:385.7px;height:16px;line-height:16px;font-size:11.9px;color:#cdcdcd;white-space:nowrap;">lamparina</div>
<svg viewBox="0 0 16 16" preserveAspectRatio="none" style="left:280px;top:386.7px;width:14px;height:14px;color:#dcdcdc;fill:#dcdcdc;"><path d="M8 2.300C4.300 2.300 1.300 5 1.300 8s3 5.700 6.700 5.700S14.700 11 14.700 8 11.700 2.300 8 2.300zM8 4.100a3.900 3.900 0 1 1 0 7.800 3.900 3.900 0 0 1 0-7.800zM8 5.900a2.100 2.100 0 1 0 0 4.200 2.100 2.100 0 0 0 0-4.200z" fill-rule="evenodd"/></svg>
<svg viewBox="0 0 16 16" preserveAspectRatio="none" style="left:37px;top:404.45px;width:13.5px;height:12.5px;color:#cfcfcf;fill:#cfcfcf;"><path fill="#5c93f7" fill-rule="evenodd" d="M5 1a4 4 0 0 0-4 4v6a4 4 0 0 0 4 4h6a4 4 0 0 0 4-4V5a4 4 0 0 0-4-4zM4 5a1 1 0 0 1 1 1v2a1 1 0 0 1-2 0V6a1 1 0 0 1 1-1zm8 0a1 1 0 0 1 1 1v2a1 1 0 0 1-2 0V6a1 1 0 0 1 1-1zM5 11a1 1 0 0 1 .7.300 3.300 3.300 0 0 0 4.600 0 1 1 0 0 1 1.400 1.400 5.300 5.300 0 0 1-7.400 0A1 1 0 0 1 5 11z"/></svg>
<div style="left:55.0px;top:402.7px;height:16px;line-height:16px;font-size:11.9px;color:#cdcdcd;white-space:nowrap;">other_chars</div>
<svg viewBox="0 0 16 16" preserveAspectRatio="none" style="left:280px;top:403.7px;width:14px;height:14px;color:#dcdcdc;fill:#dcdcdc;"><path d="M8 2.300C4.300 2.300 1.300 5 1.300 8s3 5.700 6.700 5.700S14.700 11 14.700 8 11.700 2.300 8 2.300zM8 4.100a3.900 3.900 0 1 1 0 7.800 3.900 3.900 0 0 1 0-7.800zM8 5.900a2.100 2.100 0 1 0 0 4.200 2.100 2.100 0 0 0 0-4.200z" fill-rule="evenodd"/></svg>
<svg viewBox="0 0 16 16" preserveAspectRatio="none" style="left:36.25px;top:420.2px;width:15px;height:15px;color:#cfcfcf;fill:#cfcfcf;"><g fill="none" stroke="#5c93f7" stroke-linecap="round" stroke-linejoin="round"><rect x="7" y="2.600" width="3.600" height="3.400" rx="1.200" stroke-width="1.700"/><path d="M8.300 7L6.200 10.200 3.300 13.300" stroke-width="2.200"/><path d="M7.400 7.300L4 7.300 3.600 5.300" stroke-width="1.600"/><path d="M9.300 7.300l2.700.300 1 1.500" stroke-width="1.600"/><path d="M7 10.300l3.200.500 2.600 1.700" stroke-width="1.700"/><path d="M12.800 9.200c.700 1.200.600 2.300-.200 3.300" stroke-width="1.200"/></g></svg>
<div style="left:55.0px;top:419.7px;height:16px;line-height:16px;font-size:11.9px;color:#cdcdcd;white-space:nowrap;">red_sprouts</div>
<svg viewBox="0 0 16 16" preserveAspectRatio="none" style="left:242px;top:421.7px;width:12px;height:12px;color:#cfcfcf;fill:#cfcfcf;"><path d="M8 1.500L.800 14h14.400z" fill="#f0d67c" stroke="#f0d67c" stroke-width="1.200" stroke-linejoin="round"/><path d="M7 5h2v5H7zM7 11h2v2H7z" fill="#262626"/></svg>
<svg viewBox="0 0 16 16" preserveAspectRatio="none" style="left:260.75px;top:421.2px;width:14px;height:13px;color:#d0d0d0;fill:#d0d0d0;"><path d="M2 7h12v6a1 1 0 0 1-1 1H3a1 1 0 0 1-1-1zm3.5 2L8 12l2.5-3zM2 3.5l2-.5.5 2-2 .5zM5.5 2.8l2-.5.5 2-2 .5zM9 2.2l2-.5.5 2-2 .5zM12.4 1.6l1.6-.4.5 2-1.6.4z" fill-rule="evenodd"/></svg>
<svg viewBox="0 0 16 16" preserveAspectRatio="none" style="left:280px;top:420.7px;width:14px;height:14px;color:#dcdcdc;fill:#dcdcdc;"><path d="M8 2.300C4.300 2.300 1.300 5 1.300 8s3 5.700 6.700 5.700S14.700 11 14.700 8 11.700 2.300 8 2.300zM8 4.100a3.900 3.900 0 1 1 0 7.800 3.900 3.900 0 0 1 0-7.800zM8 5.900a2.100 2.100 0 1 0 0 4.200 2.100 2.100 0 0 0 0-4.200z" fill-rule="evenodd"/></svg>
<svg viewBox="0 0 16 16" preserveAspectRatio="none" style="left:36.25px;top:437.2px;width:15px;height:15px;color:#cfcfcf;fill:#cfcfcf;"><g fill="none" stroke="#5c93f7" stroke-linecap="round" stroke-linejoin="round"><rect x="7" y="2.600" width="3.600" height="3.400" rx="1.200" stroke-width="1.700"/><path d="M8.300 7L6.200 10.200 3.300 13.300" stroke-width="2.200"/><path d="M7.400 7.300L4 7.300 3.600 5.300" stroke-width="1.600"/><path d="M9.300 7.300l2.700.300 1 1.500" stroke-width="1.600"/><path d="M7 10.300l3.200.500 2.600 1.700" stroke-width="1.700"/><path d="M12.800 9.200c.700 1.200.600 2.300-.200 3.300" stroke-width="1.200"/></g></svg>
<div style="left:55.0px;top:436.7px;height:16px;line-height:16px;font-size:11.9px;color:#cdcdcd;white-space:nowrap;">red_sprouts_2</div>
<svg viewBox="0 0 16 16" preserveAspectRatio="none" style="left:242px;top:438.7px;width:12px;height:12px;color:#cfcfcf;fill:#cfcfcf;"><path d="M8 1.500L.800 14h14.400z" fill="#f0d67c" stroke="#f0d67c" stroke-width="1.200" stroke-linejoin="round"/><path d="M7 5h2v5H7zM7 11h2v2H7z" fill="#262626"/></svg>
<svg viewBox="0 0 16 16" preserveAspectRatio="none" style="left:260.75px;top:438.2px;width:14px;height:13px;color:#d0d0d0;fill:#d0d0d0;"><path d="M2 7h12v6a1 1 0 0 1-1 1H3a1 1 0 0 1-1-1zm3.5 2L8 12l2.5-3zM2 3.5l2-.5.5 2-2 .5zM5.5 2.8l2-.5.5 2-2 .5zM9 2.2l2-.5.5 2-2 .5zM12.4 1.6l1.6-.4.5 2-1.6.4z" fill-rule="evenodd"/></svg>
<svg viewBox="0 0 16 16" preserveAspectRatio="none" style="left:280px;top:437.7px;width:14px;height:14px;color:#dcdcdc;fill:#dcdcdc;"><path d="M8 2.300C4.300 2.300 1.300 5 1.300 8s3 5.700 6.700 5.700S14.700 11 14.700 8 11.700 2.300 8 2.300zM8 4.100a3.900 3.900 0 1 1 0 7.800 3.900 3.900 0 0 1 0-7.800zM8 5.900a2.100 2.100 0 1 0 0 4.200 2.100 2.100 0 0 0 0-4.200z" fill-rule="evenodd"/></svg>
<svg viewBox="0 0 16 16" preserveAspectRatio="none" style="left:36.25px;top:454.2px;width:15px;height:15px;color:#cfcfcf;fill:#cfcfcf;"><g fill="none" stroke="#5c93f7" stroke-linecap="round" stroke-linejoin="round"><rect x="7" y="2.600" width="3.600" height="3.400" rx="1.200" stroke-width="1.700"/><path d="M8.300 7L6.200 10.200 3.300 13.300" stroke-width="2.200"/><path d="M7.400 7.300L4 7.300 3.600 5.300" stroke-width="1.600"/><path d="M9.300 7.300l2.700.300 1 1.500" stroke-width="1.600"/><path d="M7 10.300l3.200.500 2.600 1.700" stroke-width="1.700"/><path d="M12.800 9.200c.700 1.200.600 2.300-.200 3.300" stroke-width="1.200"/></g></svg>
<div style="left:55.0px;top:453.70000000000005px;height:16px;line-height:16px;font-size:11.9px;color:#cdcdcd;white-space:nowrap;">red_sprouts_3</div>
<svg viewBox="0 0 16 16" preserveAspectRatio="none" style="left:242px;top:455.7px;width:12px;height:12px;color:#cfcfcf;fill:#cfcfcf;"><path d="M8 1.500L.800 14h14.400z" fill="#f0d67c" stroke="#f0d67c" stroke-width="1.200" stroke-linejoin="round"/><path d="M7 5h2v5H7zM7 11h2v2H7z" fill="#262626"/></svg>
<svg viewBox="0 0 16 16" preserveAspectRatio="none" style="left:260.75px;top:455.2px;width:14px;height:13px;color:#d0d0d0;fill:#d0d0d0;"><path d="M2 7h12v6a1 1 0 0 1-1 1H3a1 1 0 0 1-1-1zm3.5 2L8 12l2.5-3zM2 3.5l2-.5.5 2-2 .5zM5.5 2.8l2-.5.5 2-2 .5zM9 2.2l2-.5.5 2-2 .5zM12.4 1.6l1.6-.4.5 2-1.6.4z" fill-rule="evenodd"/></svg>
<svg viewBox="0 0 16 16" preserveAspectRatio="none" style="left:280px;top:454.7px;width:14px;height:14px;color:#dcdcdc;fill:#dcdcdc;"><path d="M8 2.300C4.300 2.300 1.300 5 1.300 8s3 5.700 6.700 5.700S14.700 11 14.700 8 11.700 2.300 8 2.300zM8 4.100a3.900 3.900 0 1 1 0 7.800 3.900 3.900 0 0 1 0-7.800zM8 5.900a2.100 2.100 0 1 0 0 4.200 2.100 2.100 0 0 0 0-4.200z" fill-rule="evenodd"/></svg>
<svg viewBox="0 0 16 16" preserveAspectRatio="none" style="left:36.25px;top:471.2px;width:15px;height:15px;color:#cfcfcf;fill:#cfcfcf;"><g fill="none" stroke="#5c93f7" stroke-linecap="round" stroke-linejoin="round"><rect x="7" y="2.600" width="3.600" height="3.400" rx="1.200" stroke-width="1.700"/><path d="M8.300 7L6.200 10.200 3.300 13.300" stroke-width="2.200"/><path d="M7.400 7.300L4 7.300 3.600 5.300" stroke-width="1.600"/><path d="M9.300 7.300l2.700.300 1 1.500" stroke-width="1.600"/><path d="M7 10.300l3.200.500 2.600 1.700" stroke-width="1.700"/><path d="M12.800 9.200c.700 1.200.600 2.300-.200 3.300" stroke-width="1.200"/></g></svg>
<div style="left:55.0px;top:470.70000000000005px;height:16px;line-height:16px;font-size:11.9px;color:#cdcdcd;white-space:nowrap;">bat_2</div>
<svg viewBox="0 0 16 16" preserveAspectRatio="none" style="left:242px;top:472.7px;width:12px;height:12px;color:#cfcfcf;fill:#cfcfcf;"><path d="M8 1.500L.800 14h14.400z" fill="#f0d67c" stroke="#f0d67c" stroke-width="1.200" stroke-linejoin="round"/><path d="M7 5h2v5H7zM7 11h2v2H7z" fill="#262626"/></svg>
<svg viewBox="0 0 16 16" preserveAspectRatio="none" style="left:260.75px;top:472.2px;width:14px;height:13px;color:#d0d0d0;fill:#d0d0d0;"><path d="M2 7h12v6a1 1 0 0 1-1 1H3a1 1 0 0 1-1-1zm3.5 2L8 12l2.5-3zM2 3.5l2-.5.5 2-2 .5zM5.5 2.8l2-.5.5 2-2 .5zM9 2.2l2-.5.5 2-2 .5zM12.4 1.6l1.6-.4.5 2-1.6.4z" fill-rule="evenodd"/></svg>
<svg viewBox="0 0 16 16" preserveAspectRatio="none" style="left:280px;top:471.7px;width:14px;height:14px;color:#dcdcdc;fill:#dcdcdc;"><path d="M8 2.300C4.300 2.300 1.300 5 1.300 8s3 5.700 6.700 5.700S14.700 11 14.700 8 11.700 2.300 8 2.300zM8 4.100a3.900 3.900 0 1 1 0 7.800 3.900 3.900 0 0 1 0-7.800zM8 5.900a2.100 2.100 0 1 0 0 4.200 2.100 2.100 0 0 0 0-4.200z" fill-rule="evenodd"/></svg>
<svg viewBox="0 0 16 16" preserveAspectRatio="none" style="left:36.25px;top:488.2px;width:15px;height:15px;color:#cfcfcf;fill:#cfcfcf;"><g fill="none" stroke="#5c93f7" stroke-linecap="round" stroke-linejoin="round"><rect x="7" y="2.600" width="3.600" height="3.400" rx="1.200" stroke-width="1.700"/><path d="M8.300 7L6.200 10.200 3.300 13.300" stroke-width="2.200"/><path d="M7.400 7.300L4 7.300 3.600 5.300" stroke-width="1.600"/><path d="M9.300 7.300l2.700.300 1 1.500" stroke-width="1.600"/><path d="M7 10.300l3.200.500 2.600 1.700" stroke-width="1.700"/><path d="M12.800 9.200c.700 1.200.600 2.300-.200 3.300" stroke-width="1.200"/></g></svg>
<div style="left:55.0px;top:487.70000000000005px;height:16px;line-height:16px;font-size:11.9px;color:#cdcdcd;white-space:nowrap;">spider_2</div>
<svg viewBox="0 0 16 16" preserveAspectRatio="none" style="left:260.75px;top:489.2px;width:14px;height:13px;color:#d0d0d0;fill:#d0d0d0;"><path d="M2 7h12v6a1 1 0 0 1-1 1H3a1 1 0 0 1-1-1zm3.5 2L8 12l2.5-3zM2 3.5l2-.5.5 2-2 .5zM5.5 2.8l2-.5.5 2-2 .5zM9 2.2l2-.5.5 2-2 .5zM12.4 1.6l1.6-.4.5 2-1.6.4z" fill-rule="evenodd"/></svg>
<svg viewBox="0 0 16 16" preserveAspectRatio="none" style="left:280px;top:488.7px;width:14px;height:14px;color:#dcdcdc;fill:#dcdcdc;"><path d="M8 2.300C4.300 2.300 1.300 5 1.300 8s3 5.700 6.700 5.700S14.700 11 14.700 8 11.700 2.300 8 2.300zM8 4.100a3.900 3.900 0 1 1 0 7.800 3.900 3.900 0 0 1 0-7.800zM8 5.900a2.100 2.100 0 1 0 0 4.200 2.100 2.100 0 0 0 0-4.200z" fill-rule="evenodd"/></svg>
<svg viewBox="0 0 16 16" preserveAspectRatio="none" style="left:36.25px;top:505.2px;width:15px;height:15px;color:#cfcfcf;fill:#cfcfcf;"><g fill="none" stroke="#5c93f7" stroke-linecap="round" stroke-linejoin="round"><rect x="7" y="2.600" width="3.600" height="3.400" rx="1.200" stroke-width="1.700"/><path d="M8.300 7L6.200 10.200 3.300 13.300" stroke-width="2.200"/><path d="M7.400 7.300L4 7.300 3.600 5.300" stroke-width="1.600"/><path d="M9.300 7.300l2.700.300 1 1.500" stroke-width="1.600"/><path d="M7 10.300l3.200.500 2.600 1.700" stroke-width="1.700"/><path d="M12.800 9.200c.700 1.200.600 2.300-.200 3.300" stroke-width="1.200"/></g></svg>
<div style="left:55.0px;top:504.70000000000005px;height:16px;line-height:16px;font-size:11.9px;color:#cdcdcd;white-space:nowrap;">spider</div>
<svg viewBox="0 0 16 16" preserveAspectRatio="none" style="left:260.75px;top:506.2px;width:14px;height:13px;color:#d0d0d0;fill:#d0d0d0;"><path d="M2 7h12v6a1 1 0 0 1-1 1H3a1 1 0 0 1-1-1zm3.5 2L8 12l2.5-3zM2 3.5l2-.5.5 2-2 .5zM5.5 2.8l2-.5.5 2-2 .5zM9 2.2l2-.5.5 2-2 .5zM12.4 1.6l1.6-.4.5 2-1.6.4z" fill-rule="evenodd"/></svg>
<svg viewBox="0 0 16 16" preserveAspectRatio="none" style="left:280px;top:505.7px;width:14px;height:14px;color:#dcdcdc;fill:#dcdcdc;"><path d="M8 2.300C4.300 2.300 1.300 5 1.300 8s3 5.700 6.700 5.700S14.700 11 14.700 8 11.700 2.300 8 2.300zM8 4.100a3.900 3.900 0 1 1 0 7.800 3.900 3.900 0 0 1 0-7.800zM8 5.900a2.100 2.100 0 1 0 0 4.200 2.100 2.100 0 0 0 0-4.200z" fill-rule="evenodd"/></svg>
<svg viewBox="0 0 16 16" preserveAspectRatio="none" style="left:36.25px;top:522.2px;width:15px;height:15px;color:#cfcfcf;fill:#cfcfcf;"><g fill="none" stroke="#5c93f7" stroke-linecap="round" stroke-linejoin="round"><rect x="7" y="2.600" width="3.600" height="3.400" rx="1.200" stroke-width="1.700"/><path d="M8.300 7L6.200 10.200 3.300 13.300" stroke-width="2.200"/><path d="M7.400 7.300L4 7.300 3.600 5.300" stroke-width="1.600"/><path d="M9.300 7.300l2.700.300 1 1.500" stroke-width="1.600"/><path d="M7 10.300l3.200.500 2.600 1.700" stroke-width="1.700"/><path d="M12.800 9.200c.700 1.200.600 2.300-.200 3.300" stroke-width="1.200"/></g></svg>
<div style="left:55.0px;top:521.7px;height:16px;line-height:16px;font-size:11.9px;color:#cdcdcd;white-space:nowrap;">bat</div>
<svg viewBox="0 0 16 16" preserveAspectRatio="none" style="left:242px;top:523.7px;width:12px;height:12px;color:#cfcfcf;fill:#cfcfcf;"><path d="M8 1.500L.800 14h14.400z" fill="#f0d67c" stroke="#f0d67c" stroke-width="1.200" stroke-linejoin="round"/><path d="M7 5h2v5H7zM7 11h2v2H7z" fill="#262626"/></svg>
<svg viewBox="0 0 16 16" preserveAspectRatio="none" style="left:260.75px;top:523.2px;width:14px;height:13px;color:#d0d0d0;fill:#d0d0d0;"><path d="M2 7h12v6a1 1 0 0 1-1 1H3a1 1 0 0 1-1-1zm3.5 2L8 12l2.5-3zM2 3.5l2-.5.5 2-2 .5zM5.5 2.8l2-.5.5 2-2 .5zM9 2.2l2-.5.5 2-2 .5zM12.4 1.6l1.6-.4.5 2-1.6.4z" fill-rule="evenodd"/></svg>
<svg viewBox="0 0 16 16" preserveAspectRatio="none" style="left:280px;top:522.7px;width:14px;height:14px;color:#dcdcdc;fill:#dcdcdc;"><path d="M8 2.300C4.300 2.300 1.300 5 1.300 8s3 5.700 6.700 5.700S14.700 11 14.700 8 11.700 2.300 8 2.300zM8 4.100a3.900 3.900 0 1 1 0 7.800 3.900 3.900 0 0 1 0-7.800zM8 5.900a2.100 2.100 0 1 0 0 4.200 2.100 2.100 0 0 0 0-4.200z" fill-rule="evenodd"/></svg>
<svg viewBox="0 0 16 16" preserveAspectRatio="none" style="left:36.25px;top:539.2px;width:15px;height:15px;color:#cfcfcf;fill:#cfcfcf;"><g fill="none" stroke="#5c93f7" stroke-linecap="round" stroke-linejoin="round"><rect x="7" y="2.600" width="3.600" height="3.400" rx="1.200" stroke-width="1.700"/><path d="M8.300 7L6.200 10.200 3.300 13.300" stroke-width="2.200"/><path d="M7.400 7.300L4 7.300 3.600 5.300" stroke-width="1.600"/><path d="M9.300 7.300l2.700.300 1 1.500" stroke-width="1.600"/><path d="M7 10.300l3.200.500 2.600 1.700" stroke-width="1.700"/><path d="M12.800 9.200c.700 1.200.600 2.300-.200 3.300" stroke-width="1.200"/></g></svg>
<div style="left:55.0px;top:538.7px;height:16px;line-height:16px;font-size:11.9px;color:#cdcdcd;white-space:nowrap;">dronezinho</div>
<svg viewBox="0 0 16 16" preserveAspectRatio="none" style="left:260.75px;top:540.2px;width:14px;height:13px;color:#d0d0d0;fill:#d0d0d0;"><path d="M2 7h12v6a1 1 0 0 1-1 1H3a1 1 0 0 1-1-1zm3.5 2L8 12l2.5-3zM2 3.5l2-.5.5 2-2 .5zM5.5 2.8l2-.5.5 2-2 .5zM9 2.2l2-.5.5 2-2 .5zM12.4 1.6l1.6-.4.5 2-1.6.4z" fill-rule="evenodd"/></svg>
<svg viewBox="0 0 16 16" preserveAspectRatio="none" style="left:280px;top:539.7px;width:14px;height:14px;color:#dcdcdc;fill:#dcdcdc;"><path d="M8 2.300C4.300 2.300 1.300 5 1.300 8s3 5.700 6.700 5.700S14.700 11 14.700 8 11.700 2.300 8 2.300zM8 4.100a3.900 3.900 0 1 1 0 7.800 3.900 3.900 0 0 1 0-7.800zM8 5.900a2.100 2.100 0 1 0 0 4.200 2.100 2.100 0 0 0 0-4.200z" fill-rule="evenodd"/></svg>
<svg viewBox="0 0 16 16" preserveAspectRatio="none" style="left:37px;top:557.45px;width:13.5px;height:12.5px;color:#cfcfcf;fill:#cfcfcf;"><path fill="#5c93f7" fill-rule="evenodd" d="M5 1a4 4 0 0 0-4 4v6a4 4 0 0 0 4 4h6a4 4 0 0 0 4-4V5a4 4 0 0 0-4-4zM4 5a1 1 0 0 1 1 1v2a1 1 0 0 1-2 0V6a1 1 0 0 1 1-1zm8 0a1 1 0 0 1 1 1v2a1 1 0 0 1-2 0V6a1 1 0 0 1 1-1zM5 11a1 1 0 0 1 .7.300 3.300 3.300 0 0 0 4.600 0 1 1 0 0 1 1.400 1.400 5.300 5.300 0 0 1-7.400 0A1 1 0 0 1 5 11z"/></svg>
<div style="left:55.0px;top:555.7px;height:16px;line-height:16px;font-size:11.9px;color:#cdcdcd;white-space:nowrap;">objetos</div>
<svg viewBox="0 0 16 16" preserveAspectRatio="none" style="left:280px;top:556.7px;width:14px;height:14px;color:#dcdcdc;fill:#dcdcdc;"><path d="M8 2.300C4.300 2.300 1.300 5 1.300 8s3 5.700 6.700 5.700S14.700 11 14.700 8 11.700 2.300 8 2.300zM8 4.100a3.900 3.900 0 1 1 0 7.800 3.900 3.900 0 0 1 0-7.800zM8 5.900a2.100 2.100 0 1 0 0 4.200 2.100 2.100 0 0 0 0-4.200z" fill-rule="evenodd"/></svg>
<svg viewBox="0 0 16 16" preserveAspectRatio="none" style="left:37px;top:574.45px;width:13.5px;height:12.5px;color:#cfcfcf;fill:#cfcfcf;"><path fill="#5c93f7" fill-rule="evenodd" d="M5 1a4 4 0 0 0-4 4v6a4 4 0 0 0 4 4h6a4 4 0 0 0 4-4V5a4 4 0 0 0-4-4zM4 5a1 1 0 0 1 1 1v2a1 1 0 0 1-2 0V6a1 1 0 0 1 1-1zm8 0a1 1 0 0 1 1 1v2a1 1 0 0 1-2 0V6a1 1 0 0 1 1-1zM5 11a1 1 0 0 1 .7.300 3.300 3.300 0 0 0 4.600 0 1 1 0 0 1 1.400 1.400 5.300 5.300 0 0 1-7.400 0A1 1 0 0 1 5 11z"/></svg>
<div style="left:55.0px;top:572.7px;height:16px;line-height:16px;font-size:11.7px;color:#cdcdcd;white-space:nowrap;">c_8579e_0a_4c_3_dcf_10d_46765b_10</div>
<svg viewBox="0 0 16 16" preserveAspectRatio="none" style="left:280px;top:573.7px;width:14px;height:14px;color:#dcdcdc;fill:#dcdcdc;"><path d="M8 2.300C4.300 2.300 1.300 5 1.300 8s3 5.700 6.700 5.700S14.700 11 14.700 8 11.700 2.300 8 2.300zM8 4.100a3.900 3.900 0 1 1 0 7.800 3.900 3.900 0 0 1 0-7.800zM8 5.900a2.100 2.100 0 1 0 0 4.200 2.100 2.100 0 0 0 0-4.200z" fill-rule="evenodd"/></svg>
<svg viewBox="0 0 16 16" preserveAspectRatio="none" style="left:37px;top:591.45px;width:13.5px;height:12.5px;color:#cfcfcf;fill:#cfcfcf;"><path fill="#5c93f7" fill-rule="evenodd" d="M5 1a4 4 0 0 0-4 4v6a4 4 0 0 0 4 4h6a4 4 0 0 0 4-4V5a4 4 0 0 0-4-4zM4 5a1 1 0 0 1 1 1v2a1 1 0 0 1-2 0V6a1 1 0 0 1 1-1zm8 0a1 1 0 0 1 1 1v2a1 1 0 0 1-2 0V6a1 1 0 0 1 1-1zM5 11a1 1 0 0 1 .7.300 3.300 3.300 0 0 0 4.600 0 1 1 0 0 1 1.400 1.400 5.300 5.300 0 0 1-7.400 0A1 1 0 0 1 5 11z"/></svg>
<div style="left:55.0px;top:589.7px;height:16px;line-height:16px;font-size:11.9px;color:#cdcdcd;white-space:nowrap;">flora</div>
<svg viewBox="0 0 16 16" preserveAspectRatio="none" style="left:280px;top:590.7px;width:14px;height:14px;color:#dcdcdc;fill:#dcdcdc;"><path d="M8 2.300C4.300 2.300 1.300 5 1.300 8s3 5.700 6.700 5.700S14.700 11 14.700 8 11.700 2.300 8 2.300zM8 4.100a3.900 3.900 0 1 1 0 7.800 3.900 3.900 0 0 1 0-7.800zM8 5.900a2.100 2.100 0 1 0 0 4.200 2.100 2.100 0 0 0 0-4.200z" fill-rule="evenodd"/></svg>
<svg viewBox="0 0 16 16" preserveAspectRatio="none" style="left:37px;top:608.45px;width:13.5px;height:12.5px;color:#cfcfcf;fill:#cfcfcf;"><path fill="#5c93f7" fill-rule="evenodd" d="M5 1a4 4 0 0 0-4 4v6a4 4 0 0 0 4 4h6a4 4 0 0 0 4-4V5a4 4 0 0 0-4-4zM4 5a1 1 0 0 1 1 1v2a1 1 0 0 1-2 0V6a1 1 0 0 1 1-1zm8 0a1 1 0 0 1 1 1v2a1 1 0 0 1-2 0V6a1 1 0 0 1 1-1zM5 11a1 1 0 0 1 .7.300 3.300 3.300 0 0 0 4.600 0 1 1 0 0 1 1.400 1.400 5.300 5.300 0 0 1-7.400 0A1 1 0 0 1 5 11z"/></svg>
<div style="left:55.0px;top:606.7px;height:16px;line-height:16px;font-size:11.9px;color:#cdcdcd;white-space:nowrap;">trees_prototype</div>
<svg viewBox="0 0 16 16" preserveAspectRatio="none" style="left:280px;top:607.7px;width:14px;height:14px;color:#dcdcdc;fill:#dcdcdc;"><path d="M8 2.300C4.300 2.300 1.300 5 1.300 8s3 5.700 6.700 5.700S14.700 11 14.700 8 11.700 2.300 8 2.300zM8 4.100a3.900 3.900 0 1 1 0 7.800 3.900 3.900 0 0 1 0-7.800zM8 5.900a2.100 2.100 0 1 0 0 4.200 2.100 2.100 0 0 0 0-4.200z" fill-rule="evenodd"/></svg>
<div style="left:34px;top:623.2px;width:243.5px;height:17px;background:#3a3a3a;border-radius:4px;"></div>
<svg viewBox="0 0 16 16" preserveAspectRatio="none" style="left:35.75px;top:623.7px;width:16px;height:16px;color:#cfcfcf;fill:#cfcfcf;"><path fill="#5c93f7" d="M6.25 4.6L8 3.45L9.75 4.6L8 5.75zM4.30 6.3L6.05 5.15L7.80 6.3L6.05 7.45zM8.20 6.3L9.95 5.15L11.70 6.3L9.95 7.45zM2.35 8L4.1 6.85L5.85 8L4.1 9.15zM6.25 8L8 6.85L9.75 8L8 9.15zM10.15 8L11.9 6.85L13.65 8L11.9 9.15zM4.30 9.7L6.05 8.55L7.80 9.7L6.05 10.85zM8.20 9.7L9.95 8.55L11.70 9.7L9.95 10.85zM6.25 11.4L8 10.25L9.75 11.4L8 12.55z"/></svg>
<div style="left:55.0px;top:623.7px;height:16px;line-height:16px;font-size:11.9px;color:#f0f0f0;white-space:nowrap;">tile_map_layer_2</div>
<svg viewBox="0 0 16 16" preserveAspectRatio="none" style="left:280px;top:624.7px;width:14px;height:14px;color:#dcdcdc;fill:#dcdcdc;"><path d="M8 2.300C4.300 2.300 1.300 5 1.300 8s3 5.700 6.700 5.700S14.700 11 14.700 8 11.700 2.300 8 2.300zM8 4.100a3.900 3.900 0 1 1 0 7.800 3.900 3.900 0 0 1 0-7.800zM8 5.900a2.100 2.100 0 1 0 0 4.200 2.100 2.100 0 0 0 0-4.200z" fill-rule="evenodd"/></svg>
<svg viewBox="0 0 16 16" preserveAspectRatio="none" style="left:35.75px;top:640.7px;width:16px;height:16px;color:#cfcfcf;fill:#cfcfcf;"><path fill="#5c93f7" d="M6.25 4.6L8 3.45L9.75 4.6L8 5.75zM4.30 6.3L6.05 5.15L7.80 6.3L6.05 7.45zM8.20 6.3L9.95 5.15L11.70 6.3L9.95 7.45zM2.35 8L4.1 6.85L5.85 8L4.1 9.15zM6.25 8L8 6.85L9.75 8L8 9.15zM10.15 8L11.9 6.85L13.65 8L11.9 9.15zM4.30 9.7L6.05 8.55L7.80 9.7L6.05 10.85zM8.20 9.7L9.95 8.55L11.70 9.7L9.95 10.85zM6.25 11.4L8 10.25L9.75 11.4L8 12.55z"/></svg>
<div style="left:55.0px;top:640.7px;height:16px;line-height:16px;font-size:11.9px;color:#cdcdcd;white-space:nowrap;">tile_map_layer</div>
<svg viewBox="0 0 16 16" preserveAspectRatio="none" style="left:280px;top:641.7px;width:14px;height:14px;color:#dcdcdc;fill:#dcdcdc;"><path d="M8 2.300C4.300 2.300 1.300 5 1.300 8s3 5.700 6.700 5.700S14.700 11 14.700 8 11.700 2.300 8 2.300zM8 4.100a3.900 3.900 0 1 1 0 7.800 3.900 3.900 0 0 1 0-7.800zM8 5.900a2.100 2.100 0 1 0 0 4.200 2.100 2.100 0 0 0 0-4.200z" fill-rule="evenodd"/></svg>
</div>
<div style="left:303.8px;top:427px;width:5px;height:300px;background:#4d4d4d;border-radius:2.5px;"></div>
<div style="left:3.5px;top:730.5px;width:135px;height:5px;background:#4b4b4b;border-radius:2.5px;"></div>
<div style="left:3px;top:741px;width:101px;height:26px;background:#262626;border-radius:6px 6px 0 0;"></div>
<div style="left:3px;top:766px;width:309px;height:320px;background:#262626;border-radius:0 5px 0 0;"></div>
<svg viewBox="0 0 16 16" preserveAspectRatio="none" style="left:16px;top:747px;width:13px;height:13px;color:#c8c8c8;fill:#c8c8c8;"><path d="M2 2.500a1 1 0 0 0-1 1V13a1 1 0 0 0 1 1h12a1 1 0 0 0 1-1V5.500a1 1 0 0 0-1-1H9l-1.500-2z"/></svg>
<div style="left:32px;top:745.5px;height:16px;line-height:16px;font-size:12.5px;color:#dadada;white-space:nowrap;">FileSystem</div>
<svg viewBox="0 0 16 16" preserveAspectRatio="none" style="left:117.5px;top:747px;width:13px;height:13px;color:#8f8f8f;fill:#8f8f8f;"><path d="M5 1.500h5.500L14 5v9.500H5V11h1.500v2h6V6h-3V3h-3v2H5z"/><path d="M1 7.300h5V5l4 3-4 3V8.700H1z"/></svg>
<div style="left:133.5px;top:745.5px;height:16px;line-height:16px;font-size:12.5px;color:#8f8f8f;white-space:nowrap;">Import</div>
<svg viewBox="0 0 16 16" preserveAspectRatio="none" style="left:296.5px;top:745.5px;width:16px;height:16px;color:#8a8a8a;fill:#8a8a8a;"><circle cx="8" cy="3" r="1.5"/><circle cx="8" cy="8" r="1.5"/><circle cx="8" cy="13" r="1.5"/></svg>
<svg viewBox="0 0 16 16" preserveAspectRatio="none" style="left:10px;top:776.5px;width:13px;height:13px;color:#c4c4c4;fill:#c4c4c4;"><path d="M10 2.500L6 8l4 5.500" fill="none" stroke="currentColor" stroke-width="1.800" stroke-linecap="round" stroke-linejoin="round"/></svg>
<svg viewBox="0 0 16 16" preserveAspectRatio="none" style="left:25.5px;top:776.5px;width:13px;height:13px;color:#8a8a8a;fill:#8a8a8a;"><path d="M6 2.500L10 8l-4 5.500" fill="none" stroke="currentColor" stroke-width="1.800" stroke-linecap="round" stroke-linejoin="round"/></svg>
<div style="left:44px;top:772.5px;width:236.5px;height:21.5px;background:#1b1b1b;border-radius:4px;"></div>
<div style="left:50px;top:775px;height:16px;line-height:16px;font-size:12.3px;color:#cfcfcf;white-space:nowrap;">res://maps/levels/level0.tscn</div>
<svg viewBox="0 0 16 16" preserveAspectRatio="none" style="left:288.5px;top:776px;width:14px;height:14px;color:#c4c4c4;fill:#c4c4c4;"><path d="M1.500 2h13v12h-13zM3 5v7.500h10V5z" fill-rule="evenodd"/></svg>
<div style="left:8px;top:797px;width:273px;height:25px;background:#1b1b1b;border-radius:5px;"></div>
<div style="left:14.5px;top:801.5px;height:16px;line-height:16px;font-size:12.5px;color:#7e7e7e;white-space:nowrap;">Filter Files</div>
<svg viewBox="0 0 16 16" preserveAspectRatio="none" style="left:261px;top:802.5px;width:14px;height:14px;color:#d8d8d8;fill:#d8d8d8;"><g fill="none" stroke="currentColor" stroke-width="2" stroke-linecap="round"><circle cx="6.5" cy="6.5" r="3.6"/><path d="M9.5 9.500l4.300 4.300"/></g></svg>
<svg viewBox="0 0 16 16" preserveAspectRatio="none" style="left:288.5px;top:802.5px;width:14px;height:14px;color:#c4c4c4;fill:#c4c4c4;"><path d="M4 2v12M1.500 4.500L4 2l2.500 2.500M1.500 11.500L4 14l2.500-2.500" fill="none" stroke="currentColor" stroke-width="1.500" stroke-linecap="round" stroke-linejoin="round"/><path d="M8.500 3h6.500v1.600H8.500zM8.500 7.200h4.500v1.600H8.500zM8.500 11.400h2.500V13H8.500z"/></svg>
<svg viewBox="0 0 16 16" preserveAspectRatio="none" style="left:20.8px;top:835px;width:13px;height:13px;color:#e6e6e6;fill:#e6e6e6;"><path d="M8 1.300l2 4.400 4.800.500-3.600 3.200 1 4.700L8 11.700l-4.200 2.400 1-4.700L1.200 6.200 6 5.700z"/></svg>
<div style="left:39.0px;top:833.5px;height:16px;line-height:16px;font-size:12.3px;color:#cdcdcd;white-space:nowrap;">Favorites:</div>
<svg viewBox="0 0 16 16" preserveAspectRatio="none" style="left:7.5px;top:853px;width:11px;height:11px;color:#a8a8a8;fill:#a8a8a8;"><path d="M4 6l4 4 4-4" fill="none" stroke="currentColor" stroke-width="1.600" stroke-linecap="round" stroke-linejoin="round"/></svg>
<svg viewBox="0 0 16 16" preserveAspectRatio="none" style="left:20.8px;top:852px;width:13px;height:13px;color:#7fb0ea;fill:#7fb0ea;"><path d="M2 2.500a1 1 0 0 0-1 1V13a1 1 0 0 0 1 1h12a1 1 0 0 0 1-1V5.500a1 1 0 0 0-1-1H9l-1.500-2z"/></svg>
<div style="left:39.0px;top:850.5px;height:16px;line-height:16px;font-size:12.3px;color:#cdcdcd;white-space:nowrap;">res://</div>
<svg viewBox="0 0 16 16" preserveAspectRatio="none" style="left:17.25px;top:870px;width:11px;height:11px;color:#a8a8a8;fill:#a8a8a8;"><path d="M6 4l4 4-4 4" fill="none" stroke="currentColor" stroke-width="1.600" stroke-linecap="round" stroke-linejoin="round"/></svg>
<svg viewBox="0 0 16 16" preserveAspectRatio="none" style="left:30.55px;top:869px;width:13px;height:13px;color:#7fb0ea;fill:#7fb0ea;"><path d="M2 2.500a1 1 0 0 0-1 1V13a1 1 0 0 0 1 1h12a1 1 0 0 0 1-1V5.500a1 1 0 0 0-1-1H9l-1.500-2z"/></svg>
<div style="left:48.75px;top:867.5px;height:16px;line-height:16px;font-size:12.3px;color:#cdcdcd;white-space:nowrap;">assets</div>
<svg viewBox="0 0 16 16" preserveAspectRatio="none" style="left:30.55px;top:886px;width:13px;height:13px;color:#7fb0ea;fill:#7fb0ea;"><path d="M2 2.500a1 1 0 0 0-1 1V13a1 1 0 0 0 1 1h12a1 1 0 0 0 1-1V5.500a1 1 0 0 0-1-1H9l-1.500-2z"/></svg>
<div style="left:48.75px;top:884.5px;height:16px;line-height:16px;font-size:12.3px;color:#cdcdcd;white-space:nowrap;">bin</div>
<svg viewBox="0 0 16 16" preserveAspectRatio="none" style="left:17.25px;top:904px;width:11px;height:11px;color:#a8a8a8;fill:#a8a8a8;"><path d="M4 6l4 4 4-4" fill="none" stroke="currentColor" stroke-width="1.600" stroke-linecap="round" stroke-linejoin="round"/></svg>
<svg viewBox="0 0 16 16" preserveAspectRatio="none" style="left:30.55px;top:903px;width:13px;height:13px;color:#7fb0ea;fill:#7fb0ea;"><path d="M2 2.500a1 1 0 0 0-1 1V13a1 1 0 0 0 1 1h12a1 1 0 0 0 1-1V5.500a1 1 0 0 0-1-1H9l-1.500-2z"/></svg>
<div style="left:48.75px;top:901.5px;height:16px;line-height:16px;font-size:12.3px;color:#cdcdcd;white-space:nowrap;">maps</div>
<svg viewBox="0 0 16 16" preserveAspectRatio="none" style="left:27px;top:921px;width:11px;height:11px;color:#a8a8a8;fill:#a8a8a8;"><path d="M6 4l4 4-4 4" fill="none" stroke="currentColor" stroke-width="1.600" stroke-linecap="round" stroke-linejoin="round"/></svg>
<svg viewBox="0 0 16 16" preserveAspectRatio="none" style="left:40.3px;top:920px;width:13px;height:13px;color:#7fb0ea;fill:#7fb0ea;"><path d="M2 2.500a1 1 0 0 0-1 1V13a1 1 0 0 0 1 1h12a1 1 0 0 0 1-1V5.500a1 1 0 0 0-1-1H9l-1.500-2z"/></svg>
<div style="left:58.5px;top:918.5px;height:16px;line-height:16px;font-size:12.3px;color:#cdcdcd;white-space:nowrap;">entities</div>
<svg viewBox="0 0 16 16" preserveAspectRatio="none" style="left:27px;top:938px;width:11px;height:11px;color:#a8a8a8;fill:#a8a8a8;"><path d="M4 6l4 4 4-4" fill="none" stroke="currentColor" stroke-width="1.600" stroke-linecap="round" stroke-linejoin="round"/></svg>
<svg viewBox="0 0 16 16" preserveAspectRatio="none" style="left:40.3px;top:937px;width:13px;height:13px;color:#7fb0ea;fill:#7fb0ea;"><path d="M2 2.500a1 1 0 0 0-1 1V13a1 1 0 0 0 1 1h12a1 1 0 0 0 1-1V5.500a1 1 0 0 0-1-1H9l-1.500-2z"/></svg>
<div style="left:58.5px;top:935.5px;height:16px;line-height:16px;font-size:12.3px;color:#cdcdcd;white-space:nowrap;">levels</div>
<svg viewBox="0 0 16 16" preserveAspectRatio="none" style="left:50.05px;top:954px;width:13px;height:13px;color:#e6e6e6;fill:#e6e6e6;"><path d="M2 7h12v6a1 1 0 0 1-1 1H3a1 1 0 0 1-1-1zM2 3.5l2-.5.5 2-2 .5zM5.5 2.8l2-.5.5 2-2 .5zM9 2.2l2-.5.5 2-2 .5zM12.4 1.6l1.6-.4.5 2-1.6.4z"/></svg>
<div style="left:68.25px;top:952.5px;height:16px;line-height:16px;font-size:12.3px;color:#cdcdcd;white-space:nowrap;">bk_tile_map_layer.tscn</div>
<div style="left:47px;top:969.0px;width:260px;height:17px;background:#3c3c3c;border-radius:4px;"></div>
<svg viewBox="0 0 16 16" preserveAspectRatio="none" style="left:50.05px;top:971px;width:13px;height:13px;color:#e6e6e6;fill:#e6e6e6;"><path d="M2 7h12v6a1 1 0 0 1-1 1H3a1 1 0 0 1-1-1zM2 3.5l2-.5.5 2-2 .5zM5.5 2.8l2-.5.5 2-2 .5zM9 2.2l2-.5.5 2-2 .5zM12.4 1.6l1.6-.4.5 2-1.6.4z"/></svg>
<div style="left:68.25px;top:969.5px;height:16px;line-height:16px;font-size:12.3px;color:#5c9ae8;white-space:nowrap;">level0.tscn</div>
<svg viewBox="0 0 16 16" preserveAspectRatio="none" style="left:27px;top:989px;width:11px;height:11px;color:#a8a8a8;fill:#a8a8a8;"><path d="M6 4l4 4-4 4" fill="none" stroke="currentColor" stroke-width="1.600" stroke-linecap="round" stroke-linejoin="round"/></svg>
<svg viewBox="0 0 16 16" preserveAspectRatio="none" style="left:40.3px;top:988px;width:13px;height:13px;color:#7fb0ea;fill:#7fb0ea;"><path d="M2 2.500a1 1 0 0 0-1 1V13a1 1 0 0 0 1 1h12a1 1 0 0 0 1-1V5.500a1 1 0 0 0-1-1H9l-1.500-2z"/></svg>
<div style="left:58.5px;top:986.5px;height:16px;line-height:16px;font-size:12.3px;color:#cdcdcd;white-space:nowrap;">objects</div>
<svg viewBox="0 0 16 16" preserveAspectRatio="none" style="left:17.25px;top:1006px;width:11px;height:11px;color:#a8a8a8;fill:#a8a8a8;"><path d="M6 4l4 4-4 4" fill="none" stroke="currentColor" stroke-width="1.600" stroke-linecap="round" stroke-linejoin="round"/></svg>
<svg viewBox="0 0 16 16" preserveAspectRatio="none" style="left:30.55px;top:1005px;width:13px;height:13px;color:#7fb0ea;fill:#7fb0ea;"><path d="M2 2.500a1 1 0 0 0-1 1V13a1 1 0 0 0 1 1h12a1 1 0 0 0 1-1V5.500a1 1 0 0 0-1-1H9l-1.500-2z"/></svg>
<div style="left:48.75px;top:1003.5px;height:16px;line-height:16px;font-size:12.3px;color:#cdcdcd;white-space:nowrap;">shaders</div>
<svg viewBox="0 0 16 16" preserveAspectRatio="none" style="left:17.25px;top:1023px;width:11px;height:11px;color:#a8a8a8;fill:#a8a8a8;"><path d="M6 4l4 4-4 4" fill="none" stroke="currentColor" stroke-width="1.600" stroke-linecap="round" stroke-linejoin="round"/></svg>
<svg viewBox="0 0 16 16" preserveAspectRatio="none" style="left:30.55px;top:1022px;width:13px;height:13px;color:#7fb0ea;fill:#7fb0ea;"><path d="M2 2.500a1 1 0 0 0-1 1V13a1 1 0 0 0 1 1h12a1 1 0 0 0 1-1V5.500a1 1 0 0 0-1-1H9l-1.500-2z"/></svg>
<div style="left:48.75px;top:1020.5px;height:16px;line-height:16px;font-size:12.3px;color:#cdcdcd;white-space:nowrap;">sounds</div>
<div style="left:315px;top:6px;width:94px;height:27px;background:#262626;border-radius:6px 6px 0 0;"></div>
<div style="left:315px;top:32px;width:296px;height:1060px;background:#262626;border-radius:0 5px 0 0;"></div>
<svg viewBox="0 0 16 16" preserveAspectRatio="none" style="left:327px;top:12px;width:13px;height:13px;color:#c8c8c8;fill:#c8c8c8;"><path d="M2 2.500h2v2H2zM6 2.500h8v2H6zM2 7h2v2H2zM6 7h8v2H6zM2 11.500h2v2H2zM6 11.500h8v2H6z"/></svg>
<div style="left:343.5px;top:10.5px;height:16px;line-height:16px;font-size:12px;color:#dadada;white-space:nowrap;">Inspector</div>
<svg viewBox="0 0 16 16" preserveAspectRatio="none" style="left:595.5px;top:10.5px;width:16px;height:16px;color:#8a8a8a;fill:#8a8a8a;"><circle cx="8" cy="3" r="1.5"/><circle cx="8" cy="8" r="1.5"/><circle cx="8" cy="13" r="1.5"/></svg>
<svg viewBox="0 0 16 16" preserveAspectRatio="none" style="left:324px;top:39px;width:14px;height:14px;color:#c8c8c8;fill:#c8c8c8;"><path d="M3 1h6l4 4v4h-3v3H8v3H3zM9 2v3h3z" fill-rule="evenodd"/><path d="M12 10v2h-2v1.600h2v2h1.600v-2h2V12h-2v-2z" fill="#45d160" transform="translate(-1.500 -1)"/></svg>
<svg viewBox="0 0 16 16" preserveAspectRatio="none" style="left:349.5px;top:39px;width:14px;height:14px;color:#c8c8c8;fill:#c8c8c8;"><path d="M2 3a1 1 0 0 1 1-1h3l1.500 2H12a1 1 0 0 1 1 1v1H5.500L3.200 13H2zM6.300 7.200H15.500L13 13.500H4z" fill="none" stroke="currentColor" stroke-width="1.300" stroke-linejoin="round"/><path d="M6.300 7.200H15.500L13 13.500H4z"/></svg>
<svg viewBox="0 0 16 16" preserveAspectRatio="none" style="left:375px;top:39px;width:14px;height:14px;color:#7a7a7a;fill:#7a7a7a;"><path d="M2 3a1 1 0 0 1 1-1h8.500L14 4.500V13a1 1 0 0 1-1 1H3a1 1 0 0 1-1-1zm2 0v4h7V3zm5 .700h1.400v2.600H9zM8 9a2 2 0 1 0 0 4 2 2 0 0 0 0-4z" fill-rule="evenodd"/></svg>
<svg viewBox="0 0 16 16" preserveAspectRatio="none" style="left:400px;top:38px;width:16px;height:16px;color:#c8c8c8;fill:#c8c8c8;"><circle cx="8" cy="3" r="1.5"/><circle cx="8" cy="8" r="1.5"/><circle cx="8" cy="13" r="1.5"/></svg>
<svg viewBox="0 0 16 16" preserveAspectRatio="none" style="left:546px;top:39.5px;width:13px;height:13px;color:#c8c8c8;fill:#c8c8c8;"><path d="M10 2.500L6 8l4 5.500" fill="none" stroke="currentColor" stroke-width="1.800" stroke-linecap="round" stroke-linejoin="round"/></svg>
<svg viewBox="0 0 16 16" preserveAspectRatio="none" style="left:565.5px;top:39.5px;width:13px;height:13px;color:#6e6e6e;fill:#6e6e6e;"><path d="M6 2.500L10 8l-4 5.500" fill="none" stroke="currentColor" stroke-width="1.800" stroke-linecap="round" stroke-linejoin="round"/></svg>
<svg viewBox="0 0 16 16" preserveAspectRatio="none" style="left:588px;top:39px;width:14px;height:14px;color:#c8c8c8;fill:#c8c8c8;"><path d="M8.500 1.800a6.200 6.200 0 1 1-6 7.700" fill="none" stroke="currentColor" stroke-width="1.700" stroke-linecap="round"/><path d="M.500 6.500l2.300 3.600 3.200-2.800z"/><path d="M8.500 4.800V8.500l2.300 1.400" fill="none" stroke="currentColor" stroke-width="1.600" stroke-linecap="round"/></svg>
<div style="left:319.5px;top:59px;width:260.5px;height:27px;background:#404040;border-radius:5px;"></div>
<svg viewBox="0 0 16 16" preserveAspectRatio="none" style="left:324px;top:64px;width:16px;height:16px;color:#cfcfcf;fill:#cfcfcf;"><path fill="#5c93f7" d="M6.25 4.6L8 3.45L9.75 4.6L8 5.75zM4.30 6.3L6.05 5.15L7.80 6.3L6.05 7.45zM8.20 6.3L9.95 5.15L11.70 6.3L9.95 7.45zM2.35 8L4.1 6.85L5.85 8L4.1 9.15zM6.25 8L8 6.85L9.75 8L8 9.15zM10.15 8L11.9 6.85L13.65 8L11.9 9.15zM4.30 9.7L6.05 8.55L7.80 9.7L6.05 10.85zM8.20 9.7L9.95 8.55L11.70 9.7L9.95 10.85zM6.25 11.4L8 10.25L9.75 11.4L8 12.55z"/></svg>
<div style="left:348px;top:64px;height:16px;line-height:16px;font-size:11.9px;color:#d8d8d8;white-space:nowrap;">tile_map_layer_2</div>
<svg viewBox="0 0 16 16" preserveAspectRatio="none" style="left:561px;top:66px;width:12px;height:12px;color:#e0e0e0;fill:#e0e0e0;stroke-width:2;"><path d="M4 6l4 4 4-4" fill="none" stroke="currentColor" stroke-width="1.600" stroke-linecap="round" stroke-linejoin="round"/></svg>
<svg viewBox="0 0 16 16" preserveAspectRatio="none" style="left:588.5px;top:61px;width:14px;height:14px;color:#c8c8c8;fill:#c8c8c8;"><g fill="none" stroke="currentColor" stroke-width="1.700" stroke-linecap="round"><circle cx="9.500" cy="4.500" r="3"/><path d="M7.300 6.800L4 10"/></g></svg>
<div style="left:585.5px;top:70px;height:16px;line-height:16px;font-size:6.3px;color:#c8c8c8;white-space:nowrap;font-weight:bold;width:20px;text-align:center;letter-spacing:-.3px;">DOC</div>
<div style="left:319.5px;top:89.5px;width:260.5px;height:22.5px;background:#1b1b1b;border-radius:5px;"></div>
<div style="left:326px;top:92.5px;height:16px;line-height:16px;font-size:12px;color:#7e7e7e;white-space:nowrap;">Filter Properties</div>
<svg viewBox="0 0 16 16" preserveAspectRatio="none" style="left:560px;top:93px;width:14px;height:14px;color:#d8d8d8;fill:#d8d8d8;"><g fill="none" stroke="currentColor" stroke-width="2" stroke-linecap="round"><circle cx="6.5" cy="6.5" r="3.6"/><path d="M9.5 9.500l4.300 4.300"/></g></svg>
<svg viewBox="0 0 16 16" preserveAspectRatio="none" style="left:588px;top:93px;width:14px;height:14px;color:#c8c8c8;fill:#c8c8c8;"><path d="M3.200 1v4.500a1.800 1.800 0 0 0 1 1.600V14a1 1 0 0 0 2 0V7.100a1.800 1.800 0 0 0 1-1.600V1h-1v3.500h-1V1z" transform="translate(5.300 0)"/><path d="M3.800 1.500h1.600L6 6H3.200zM3 7h3.200v2.500A1.600 1.600 0 0 1 3 9.500zM3.600 11h2v3.500h-2z" transform="translate(-.8 0)"/></svg>
<div style="left:597.5px;top:121px;width:5px;height:819px;background:#4b4b4b;border-radius:2.5px;"></div>
<div style="left:319.5px;top:120.75px;width:275.5px;height:24.5px;background:#363636;border-radius:4px;"></div>
<svg viewBox="0 0 16 16" preserveAspectRatio="none" style="left:409px;top:125.5px;width:15px;height:15px;color:#cfcfcf;fill:#cfcfcf;"><path fill="#5c93f7" d="M6.25 4.6L8 3.45L9.75 4.6L8 5.75zM4.30 6.3L6.05 5.15L7.80 6.3L6.05 7.45zM8.20 6.3L9.95 5.15L11.70 6.3L9.95 7.45zM2.35 8L4.1 6.85L5.85 8L4.1 9.15zM6.25 8L8 6.85L9.75 8L8 9.15zM10.15 8L11.9 6.85L13.65 8L11.9 9.15zM4.30 9.7L6.05 8.55L7.80 9.7L6.05 10.85zM8.20 9.7L9.95 8.55L11.70 9.7L9.95 10.85zM6.25 11.4L8 10.25L9.75 11.4L8 12.55z"/></svg>
<div style="left:427.5px;top:125px;height:16px;line-height:16px;font-size:11.8px;color:#e2e2e2;white-space:nowrap;font-weight:bold;">TileMapLayer</div>
<div style="left:325.5px;top:149.5px;height:16px;line-height:16px;font-size:11.9px;color:#c4c4c4;white-space:nowrap;">Enabled</div>
<div style="left:457.5px;top:147.5px;width:137.5px;height:22.5px;background:#1b1b1b;border-radius:4px;"></div>
<div style="left:462.75px;top:152.5px;width:12px;height:12px;background:#5a9cf2;border-radius:2.5px;"></div>
<svg viewBox="0 0 12 12" style="left:462.75px;top:152.5px;width:12px;height:12px;"><path d="M2.600 6.200l2.300 2.400 4.600-5.200" fill="none" stroke="#fff" stroke-width="1.800" stroke-linecap="round" stroke-linejoin="round"/></svg>
<div style="left:481.5px;top:150.5px;height:16px;line-height:16px;font-size:11.9px;color:#d0d0d0;white-space:nowrap;">On</div>
<div style="left:319.5px;top:172.5px;width:140px;height:23.5px;background:#38609a;border-radius:4px 0 0 0;"></div>
<div style="left:325.5px;top:174.5px;height:16px;line-height:16px;font-size:11.9px;color:#ffffff;white-space:nowrap;">Tile Set</div>
<svg viewBox="0 0 16 16" preserveAspectRatio="none" style="left:437.25px;top:177.5px;width:13px;height:13px;color:#e8e8e8;fill:#e8e8e8;"><path d="M3.300 8.500a5 5 0 1 1 1.600 3.600" fill="none" stroke="currentColor" stroke-width="1.700" stroke-linecap="round" transform="rotate(20 8 8)"/><path d="M.800 5.500l3 4 2.800-3.500z" transform="rotate(10 8 8)"/></svg>
<div style="left:457.5px;top:172.5px;width:137.5px;height:23px;background:#1b1b1b;border-radius:4px;"></div>
<svg viewBox="0 0 16 16" preserveAspectRatio="none" style="left:464.5px;top:177.5px;width:12px;height:12px;color:#cfcfcf;fill:#cfcfcf;"><path fill="#5c93f7" d="M1 1h2.500v2.500H1zM4.500 1H7v2.500H4.500zM8 1h2.500v2.500H8zM11.500 1H14v2.500h-2.500zM1 4.500h2.500V7H1zM4.500 4.500H7V7H4.500zM1 8h2.500v2.500H1zM1 11.500h2.500V14H1zM4.500 8H7v2.500H4.500zM4.500 11.500H7V14H4.500z"/><path fill="#5a9cf2" d="M8 5h6.500v9H8zm1.500 1.500v3l1.700 1.500 1.800-1.500v-3z" fill-rule="evenodd"/></svg>
<div style="left:505.5px;top:175.5px;height:16px;line-height:16px;font-size:11.9px;color:#e0e0e0;white-space:nowrap;">TileSet</div>
<svg viewBox="0 0 16 16" preserveAspectRatio="none" style="left:578.5px;top:178.5px;width:11px;height:11px;color:#b0b0b0;fill:#b0b0b0;"><path d="M4 6l4 4 4-4" fill="none" stroke="currentColor" stroke-width="1.600" stroke-linecap="round" stroke-linejoin="round"/></svg>
<div style="left:319.5px;top:195.5px;width:275.5px;height:483.5px;background:#1e252e;border:2px solid #3768ad;border-top:none;border-radius:0 0 5px 5px;"></div>
<div style="left:319.5px;top:195px;width:275.5px;height:1.8px;background:#38609a;"></div>
<div style="left:329px;top:201.5px;height:16px;line-height:16px;font-size:11.9px;color:#c8c8c8;white-space:nowrap;">Tile Shape</div>
<div style="left:457.5px;top:198.0px;width:134.5px;height:23px;background:#1b1b1b;border-radius:4px;"></div>
<div style="left:464px;top:202.0px;height:16px;line-height:16px;font-size:11.9px;color:#d0d0d0;white-space:nowrap;">Square</div>
<svg viewBox="0 0 16 16" preserveAspectRatio="none" style="left:574px;top:204px;width:12px;height:12px;color:#d0d0d0;fill:#d0d0d0;"><path d="M4 6l4 4 4-4" fill="none" stroke="currentColor" stroke-width="1.600" stroke-linecap="round" stroke-linejoin="round"/></svg>
<div style="left:329px;top:226.5px;height:16px;line-height:16px;font-size:11.9px;color:#808891;white-space:nowrap;">Tile Layout</div>
<div style="left:457.5px;top:223.0px;width:134.5px;height:23px;background:#1b1b1b;border-radius:4px;"></div>
<div style="left:464px;top:227.0px;height:16px;line-height:16px;font-size:11.9px;color:#6a6a6a;white-space:nowrap;">Stacked</div>
<svg viewBox="0 0 16 16" preserveAspectRatio="none" style="left:574px;top:229px;width:12px;height:12px;color:#6a6a6a;fill:#6a6a6a;"><path d="M4 6l4 4 4-4" fill="none" stroke="currentColor" stroke-width="1.600" stroke-linecap="round" stroke-linejoin="round"/></svg>
<div style="left:329px;top:251.5px;height:16px;line-height:16px;font-size:11.9px;color:#808891;white-space:nowrap;">Tile Offset Axis</div>
<div style="left:457.5px;top:248.0px;width:134.5px;height:23px;background:#1b1b1b;border-radius:4px;"></div>
<div style="left:464px;top:252.0px;height:16px;line-height:16px;font-size:11.9px;color:#6a6a6a;white-space:nowrap;">Horizontal Offset</div>
<svg viewBox="0 0 16 16" preserveAspectRatio="none" style="left:574px;top:254px;width:12px;height:12px;color:#6a6a6a;fill:#6a6a6a;"><path d="M4 6l4 4 4-4" fill="none" stroke="currentColor" stroke-width="1.600" stroke-linecap="round" stroke-linejoin="round"/></svg>
<div style="left:329px;top:289.5px;height:16px;line-height:16px;font-size:11.9px;color:#c8c8c8;white-space:nowrap;">Tile Size</div>
<div style="left:457.5px;top:273.75px;width:134.5px;height:50px;background:#1b1b1b;border-radius:4px;"></div>
<div style="left:464px;top:277px;height:16px;line-height:16px;font-size:11.9px;color:#a3474d;white-space:nowrap;">x</div>
<div style="left:480.5px;top:276.5px;height:16px;line-height:16px;font-size:11.9px;color:#d0d0d0;white-space:nowrap;">16</div>
<div style="left:500px;top:277px;height:16px;line-height:16px;font-size:11.9px;color:#6a6a6a;white-space:nowrap;">px</div>
<svg viewBox="0 0 16 16" preserveAspectRatio="none" style="left:572.25px;top:279px;width:13px;height:13px;color:#d0d0d0;fill:#d0d0d0;"><path d="M4.500 6.500L8 3l3.500 3.500M4.500 9.500L8 13l3.500-3.500" fill="none" stroke="currentColor" stroke-width="1.600" stroke-linecap="round" stroke-linejoin="round"/></svg>
<div style="left:464px;top:303.5px;height:16px;line-height:16px;font-size:11.9px;color:#7d9a3a;white-space:nowrap;">y</div>
<div style="left:480.5px;top:303.0px;height:16px;line-height:16px;font-size:11.9px;color:#d0d0d0;white-space:nowrap;">16</div>
<div style="left:500px;top:303.5px;height:16px;line-height:16px;font-size:11.9px;color:#6a6a6a;white-space:nowrap;">px</div>
<svg viewBox="0 0 16 16" preserveAspectRatio="none" style="left:572.25px;top:305.5px;width:13px;height:13px;color:#d0d0d0;fill:#d0d0d0;"><path d="M4.500 6.500L8 3l3.500 3.500M4.500 9.500L8 13l3.500-3.500" fill="none" stroke="currentColor" stroke-width="1.600" stroke-linecap="round" stroke-linejoin="round"/></svg>
<svg viewBox="0 0 16 16" preserveAspectRatio="none" style="left:323.5px;top:328.25px;width:11px;height:11px;color:#a0a0a0;fill:#a0a0a0;"><path d="M6 4l4 4-4 4" fill="none" stroke="currentColor" stroke-width="1.600" stroke-linecap="round" stroke-linejoin="round"/></svg>
<div style="left:337px;top:325.75px;height:16px;line-height:16px;font-size:11.8px;color:#dcdcdc;white-space:nowrap;font-weight:bold;">Rendering</div>
<svg viewBox="0 0 16 16" preserveAspectRatio="none" style="left:323.5px;top:348.25px;width:11px;height:11px;color:#a0a0a0;fill:#a0a0a0;"><path d="M6 4l4 4-4 4" fill="none" stroke="currentColor" stroke-width="1.600" stroke-linecap="round" stroke-linejoin="round"/></svg>
<div style="left:337px;top:345.75px;height:16px;line-height:16px;font-size:11.8px;color:#dcdcdc;white-space:nowrap;font-weight:bold;">Physics Layers</div>
<svg viewBox="0 0 16 16" preserveAspectRatio="none" style="left:323.5px;top:368.25px;width:11px;height:11px;color:#a0a0a0;fill:#a0a0a0;"><path d="M4 6l4 4 4-4" fill="none" stroke="currentColor" stroke-width="1.600" stroke-linecap="round" stroke-linejoin="round"/></svg>
<div style="left:337px;top:365.75px;height:16px;line-height:16px;font-size:11.8px;color:#dcdcdc;white-space:nowrap;font-weight:bold;">Terrain Sets</div>
<div style="left:332px;top:385px;width:260px;height:203px;background:#191919;"></div>
<div style="left:359.5px;top:392px;height:16px;line-height:16px;font-size:11.9px;color:#c4c4c4;white-space:nowrap;">Mode</div>
<div style="left:456px;top:390px;width:101px;height:22.5px;background:#1d1d1d;border-radius:4px;"></div>
<div style="left:462px;top:392.5px;height:16px;line-height:16px;font-size:11.9px;color:#d0d0d0;white-space:nowrap;">Match Corner</div>
<svg viewBox="0 0 16 16" preserveAspectRatio="none" style="left:540px;top:394.5px;width:12px;height:12px;color:#d0d0d0;fill:#d0d0d0;"><path d="M4 6l4 4 4-4" fill="none" stroke="currentColor" stroke-width="1.600" stroke-linecap="round" stroke-linejoin="round"/></svg>
<svg viewBox="0 0 16 16" preserveAspectRatio="none" style="left:354px;top:418.8px;width:11px;height:11px;color:#a0a0a0;fill:#a0a0a0;"><path d="M4 6l4 4 4-4" fill="none" stroke="currentColor" stroke-width="1.600" stroke-linecap="round" stroke-linejoin="round"/></svg>
<div style="left:368px;top:416.3px;height:16px;line-height:16px;font-size:11.8px;color:#dcdcdc;white-space:nowrap;font-weight:bold;">Terrains</div>
<svg viewBox="0 0 16 16" preserveAspectRatio="none" style="left:374.75px;top:445.5px;width:12px;height:12px;color:#e8e8e8;fill:#e8e8e8;"><path d="M2 3.500h12v1.800H2zM2 7.100h12v1.800H2zM2 10.700h12v1.800H2z"/></svg>
<div style="left:368px;top:461.75px;width:25.75px;height:22px;background:#3a3a3a;border-radius:4px;"></div>
<svg viewBox="0 0 16 16" preserveAspectRatio="none" style="left:374.25px;top:466px;width:13px;height:13px;color:#d0d0d0;fill:#d0d0d0;"><path d="M5 2.500h6v1.500H5z"/><path d="M8 6v7M4.500 9.800L8 13.300l3.500-3.500" fill="none" stroke="currentColor" stroke-width="1.600" stroke-linecap="round" stroke-linejoin="round"/></svg>
<div style="left:403px;top:442px;height:16px;line-height:16px;font-size:11.9px;color:#c4c4c4;white-space:nowrap;">Name</div>
<div style="left:461px;top:440px;width:62px;height:22.5px;background:#1b1b1b;border-radius:4px;"></div>
<div style="left:467.5px;top:442.5px;height:16px;line-height:16px;font-size:11.9px;color:#d0d0d0;white-space:nowrap;">Terrain 0</div>
<div style="left:403px;top:469px;height:16px;line-height:16px;font-size:11.9px;color:#c4c4c4;white-space:nowrap;">Color</div>
<div style="left:461px;top:465px;width:62px;height:25px;background:#1b1b1b;border-radius:4px;"></div>
<div style="left:467px;top:469.5px;width:50px;height:17.25px;background:#865f44;"></div>
<div style="left:527px;top:453.75px;width:26px;height:22px;background:#3a3a3a;border-radius:4px;"></div>
<svg viewBox="0 0 16 16" preserveAspectRatio="none" style="left:533px;top:457.75px;width:14px;height:14px;color:#d0d0d0;fill:#d0d0d0;"><path d="M6 1.500h4v1.300h3.500v1.600h-11V2.800H6z"/><path d="M3.300 5.500h9.400v8a1 1 0 0 1-1 1H4.300a1 1 0 0 1-1-1zm1.500 1.300v6.400h1.300V6.800zm2.550 0v6.400h1.300V6.800zm2.550 0v6.400h1.300V6.800z" fill-rule="evenodd"/></svg>
<div style="left:561px;top:474.5px;width:25.75px;height:22.25px;background:#3a3a3a;border-radius:4px;"></div>
<svg viewBox="0 0 16 16" preserveAspectRatio="none" style="left:567px;top:478.5px;width:14px;height:14px;color:#d0d0d0;fill:#d0d0d0;"><path d="M6 1.500h4v1.300h3.500v1.600h-11V2.800H6z"/><path d="M3.300 5.500h9.400v8a1 1 0 0 1-1 1H4.300a1 1 0 0 1-1-1zm1.500 1.300v6.400h1.300V6.800zm2.550 0v6.400h1.300V6.800zm2.550 0v6.400h1.300V6.800z" fill-rule="evenodd"/></svg>
<svg viewBox="0 0 16 16" preserveAspectRatio="none" style="left:337.75px;top:479.75px;width:12px;height:12px;color:#e8e8e8;fill:#e8e8e8;"><path d="M2 3.500h12v1.800H2zM2 7.100h12v1.800H2zM2 10.700h12v1.800H2z"/></svg>
<div style="left:363px;top:495px;width:194.5px;height:58.75px;background:#1e1e1e;"></div>
<div style="left:368px;top:505px;width:25.75px;height:22.5px;background:#3a3a3a;border-radius:4px;"></div>
<svg viewBox="0 0 16 16" preserveAspectRatio="none" style="left:374.25px;top:509.5px;width:13px;height:13px;color:#d0d0d0;fill:#d0d0d0;"><path d="M5 12h6v1.500H5z"/><path d="M8 10V3M4.500 6.200L8 2.700l3.500 3.500" fill="none" stroke="currentColor" stroke-width="1.600" stroke-linecap="round" stroke-linejoin="round"/></svg>
<svg viewBox="0 0 16 16" preserveAspectRatio="none" style="left:374.75px;top:531.5px;width:12px;height:12px;color:#e8e8e8;fill:#e8e8e8;"><path d="M2 3.500h12v1.800H2zM2 7.100h12v1.800H2zM2 10.700h12v1.800H2z"/></svg>
<div style="left:403px;top:502px;height:16px;line-height:16px;font-size:11.9px;color:#c4c4c4;white-space:nowrap;">Name</div>
<div style="left:461px;top:500px;width:62px;height:22.5px;background:#1b1b1b;border-radius:4px;"></div>
<div style="left:467.5px;top:502.5px;height:16px;line-height:16px;font-size:11.9px;color:#d0d0d0;white-space:nowrap;">Terrain 1</div>
<div style="left:403px;top:529px;height:16px;line-height:16px;font-size:11.9px;color:#c4c4c4;white-space:nowrap;">Color</div>
<div style="left:461px;top:525px;width:62px;height:25px;background:#1b1b1b;border-radius:4px;"></div>
<div style="left:467px;top:529.5px;width:50px;height:17px;background:#887641;"></div>
<div style="left:527px;top:513.75px;width:26px;height:22px;background:#3a3a3a;border-radius:4px;"></div>
<svg viewBox="0 0 16 16" preserveAspectRatio="none" style="left:533px;top:517.75px;width:14px;height:14px;color:#d0d0d0;fill:#d0d0d0;"><path d="M6 1.500h4v1.300h3.500v1.600h-11V2.800H6z"/><path d="M3.300 5.500h9.400v8a1 1 0 0 1-1 1H4.300a1 1 0 0 1-1-1zm1.500 1.300v6.400h1.300V6.800zm2.550 0v6.400h1.300V6.800zm2.550 0v6.400h1.300V6.800z" fill-rule="evenodd"/></svg>
<div style="left:410px;top:556px;width:100.75px;height:26.5px;background:#3a3a3a;border-radius:5px;"></div>
<svg viewBox="0 0 16 16" preserveAspectRatio="none" style="left:416px;top:562.5px;width:13px;height:13px;color:#e0e0e0;fill:#e0e0e0;"><path d="M7.4 2h1.2v5.4H14v1.2H8.6V14H7.4V8.6H2V7.4h5.4z"/></svg>
<div style="left:435.5px;top:561px;height:16px;line-height:16px;font-size:11.9px;color:#d0d0d0;white-space:nowrap;">Add Element</div>
<div style="left:411.5px;top:589px;width:101px;height:26.5px;background:#3a3a3a;border-radius:5px;"></div>
<svg viewBox="0 0 16 16" preserveAspectRatio="none" style="left:417.5px;top:595.5px;width:13px;height:13px;color:#e0e0e0;fill:#e0e0e0;"><path d="M7.4 2h1.2v5.4H14v1.2H8.6V14H7.4V8.6H2V7.4h5.4z"/></svg>
<div style="left:437.0px;top:594px;height:16px;line-height:16px;font-size:11.9px;color:#d0d0d0;white-space:nowrap;">Add Element</div>
<svg viewBox="0 0 16 16" preserveAspectRatio="none" style="left:323.5px;top:620.25px;width:11px;height:11px;color:#a0a0a0;fill:#a0a0a0;"><path d="M6 4l4 4-4 4" fill="none" stroke="currentColor" stroke-width="1.600" stroke-linecap="round" stroke-linejoin="round"/></svg>
<div style="left:337px;top:617.75px;height:16px;line-height:16px;font-size:11.8px;color:#dcdcdc;white-space:nowrap;font-weight:bold;">Navigation Layers</div>
<svg viewBox="0 0 16 16" preserveAspectRatio="none" style="left:323.5px;top:640.25px;width:11px;height:11px;color:#a0a0a0;fill:#a0a0a0;"><path d="M6 4l4 4-4 4" fill="none" stroke="currentColor" stroke-width="1.600" stroke-linecap="round" stroke-linejoin="round"/></svg>
<div style="left:337px;top:637.75px;height:16px;line-height:16px;font-size:11.8px;color:#dcdcdc;white-space:nowrap;font-weight:bold;">Custom Data Layers</div>
<svg viewBox="0 0 16 16" preserveAspectRatio="none" style="left:323.5px;top:660.25px;width:11px;height:11px;color:#a0a0a0;fill:#a0a0a0;"><path d="M6 4l4 4-4 4" fill="none" stroke="currentColor" stroke-width="1.600" stroke-linecap="round" stroke-linejoin="round"/></svg>
<div style="left:337px;top:657.75px;height:16px;line-height:16px;font-size:11.8px;color:#dcdcdc;white-space:nowrap;font-weight:bold;">Resource</div>
<div style="left:489px;top:658px;height:16px;line-height:16px;font-size:11.9px;color:#7d858e;white-space:nowrap;width:100px;text-align:right;">(1 change)</div>
<svg viewBox="0 0 16 16" preserveAspectRatio="none" style="left:320px;top:684px;width:11px;height:11px;color:#a0a0a0;fill:#a0a0a0;"><path d="M4 6l4 4 4-4" fill="none" stroke="currentColor" stroke-width="1.600" stroke-linecap="round" stroke-linejoin="round"/></svg>
<div style="left:334px;top:681.5px;height:16px;line-height:16px;font-size:11.8px;color:#dcdcdc;white-space:nowrap;font-weight:bold;">Rendering</div>
<div style="left:335.5px;top:702.8px;height:16px;line-height:16px;font-size:11.9px;color:#c4c4c4;white-space:nowrap;">Occlusion Enabled</div>
<div style="left:462px;top:699.5px;width:133px;height:22.5px;background:#1b1b1b;border-radius:4px;"></div>
<div style="left:467.75px;top:705.0px;width:12px;height:12px;background:#5a9cf2;border-radius:2.5px;"></div>
<svg viewBox="0 0 12 12" style="left:467.75px;top:705.0px;width:12px;height:12px;"><path d="M2.600 6.200l2.300 2.400 4.600-5.200" fill="none" stroke="#fff" stroke-width="1.800" stroke-linecap="round" stroke-linejoin="round"/></svg>
<div style="left:486.5px;top:703.0px;height:16px;line-height:16px;font-size:11.9px;color:#d0d0d0;white-space:nowrap;">On</div>
<div style="left:335.5px;top:727.8px;height:16px;line-height:16px;font-size:11.9px;color:#c4c4c4;white-space:nowrap;">Y Sort Origin</div>
<div style="left:462px;top:724.5px;width:133px;height:22.5px;background:#1b1b1b;border-radius:4px;"></div>
<div style="left:478.5px;top:727.5px;height:16px;line-height:16px;font-size:11.9px;color:#d0d0d0;white-space:nowrap;">0</div>
<svg viewBox="0 0 16 16" preserveAspectRatio="none" style="left:575.25px;top:729.5px;width:13px;height:13px;color:#d0d0d0;fill:#d0d0d0;"><path d="M4.500 6.500L8 3l3.500 3.500M4.500 9.500L8 13l3.500-3.500" fill="none" stroke="currentColor" stroke-width="1.600" stroke-linecap="round" stroke-linejoin="round"/></svg>
<div style="left:335.5px;top:752.8px;height:16px;line-height:16px;font-size:11.9px;color:#7a7a7a;white-space:nowrap;">X Draw Order Reverse</div>
<div style="left:462px;top:749.5px;width:133px;height:22.5px;background:#1b1b1b;border-radius:4px;"></div>
<div style="left:467.75px;top:755.0px;width:12px;height:12px;background:#333333;border-radius:2.5px;"></div>
<div style="left:486.5px;top:753.0px;height:16px;line-height:16px;font-size:11.9px;color:#6a6a6a;white-space:nowrap;">On</div>
<div style="left:335.5px;top:777.8px;height:16px;line-height:16px;font-size:11.9px;color:#c4c4c4;white-space:nowrap;">Rendering Quadrant Si</div>
<div style="left:462px;top:774.5px;width:133px;height:22.5px;background:#1b1b1b;border-radius:4px;"></div>
<div style="left:478.5px;top:777.5px;height:16px;line-height:16px;font-size:11.9px;color:#d0d0d0;white-space:nowrap;">16</div>
<svg viewBox="0 0 16 16" preserveAspectRatio="none" style="left:575.25px;top:779.5px;width:13px;height:13px;color:#d0d0d0;fill:#d0d0d0;"><path d="M4.500 6.500L8 3l3.500 3.500M4.500 9.500L8 13l3.500-3.500" fill="none" stroke="currentColor" stroke-width="1.600" stroke-linecap="round" stroke-linejoin="round"/></svg>
<svg viewBox="0 0 16 16" preserveAspectRatio="none" style="left:320px;top:803px;width:11px;height:11px;color:#a0a0a0;fill:#a0a0a0;"><path d="M6 4l4 4-4 4" fill="none" stroke="currentColor" stroke-width="1.600" stroke-linecap="round" stroke-linejoin="round"/></svg>
<div style="left:334px;top:800.5px;height:16px;line-height:16px;font-size:11.8px;color:#dcdcdc;white-space:nowrap;font-weight:bold;">Physics</div>
<svg viewBox="0 0 16 16" preserveAspectRatio="none" style="left:320px;top:823.25px;width:11px;height:11px;color:#a0a0a0;fill:#a0a0a0;"><path d="M6 4l4 4-4 4" fill="none" stroke="currentColor" stroke-width="1.600" stroke-linecap="round" stroke-linejoin="round"/></svg>
<div style="left:334px;top:820.75px;height:16px;line-height:16px;font-size:11.8px;color:#dcdcdc;white-space:nowrap;font-weight:bold;">Navigation</div>
<div style="left:563.5px;top:823.5px;width:12px;height:12px;background:#5a9cf2;border-radius:2.5px;"></div>
<svg viewBox="0 0 12 12" style="left:563.5px;top:823.5px;width:12px;height:12px;"><path d="M2.600 6.200l2.300 2.400 4.600-5.200" fill="none" stroke="#fff" stroke-width="1.800" stroke-linecap="round" stroke-linejoin="round"/></svg>
<div style="left:578px;top:821.5px;height:16px;line-height:16px;font-size:11.9px;color:#d0d0d0;white-space:nowrap;">On</div>
<div style="left:319.5px;top:841px;width:275.5px;height:24.5px;background:#363636;border-radius:4px;"></div>
<svg viewBox="0 0 16 16" preserveAspectRatio="none" style="left:425.25px;top:847px;width:13px;height:13px;color:#cfcfcf;fill:#cfcfcf;"><circle cx="8" cy="8" r="5" fill="none" stroke="#5c93f7" stroke-width="2"/></svg>
<div style="left:443px;top:845.5px;height:16px;line-height:16px;font-size:11.8px;color:#e2e2e2;white-space:nowrap;font-weight:bold;">Node2D</div>
<svg viewBox="0 0 16 16" preserveAspectRatio="none" style="left:320px;top:870px;width:11px;height:11px;color:#a0a0a0;fill:#a0a0a0;"><path d="M6 4l4 4-4 4" fill="none" stroke="currentColor" stroke-width="1.600" stroke-linecap="round" stroke-linejoin="round"/></svg>
<div style="left:334px;top:867.5px;height:16px;line-height:16px;font-size:11.8px;color:#dcdcdc;white-space:nowrap;font-weight:bold;">Transform</div>
<div style="left:319.5px;top:888px;width:275.5px;height:24.5px;background:#363636;border-radius:4px;"></div>
<svg viewBox="0 0 16 16" preserveAspectRatio="none" style="left:414.5px;top:894.5px;width:12px;height:12px;color:#b8b8b8;fill:#b8b8b8;"><path d="M13.500 1.500a1.500 1.500 0 0 1 1 2.500L8 10.500 5.500 8 12 2a1.500 1.500 0 0 1 1.500-.5zM4.800 9l2.200 2.200c-.5 2-2.500 3-5.500 2.800 1.500-1 1.500-3.500 3.300-5z"/></svg>
<div style="left:431.75px;top:892.5px;height:16px;line-height:16px;font-size:11.8px;color:#e2e2e2;white-space:nowrap;font-weight:bold;">CanvasItem</div>
<svg viewBox="0 0 16 16" preserveAspectRatio="none" style="left:320px;top:917px;width:11px;height:11px;color:#a0a0a0;fill:#a0a0a0;"><path d="M6 4l4 4-4 4" fill="none" stroke="currentColor" stroke-width="1.600" stroke-linecap="round" stroke-linejoin="round"/></svg>
<div style="left:334px;top:914.5px;height:16px;line-height:16px;font-size:11.8px;color:#dcdcdc;white-space:nowrap;font-weight:bold;">Visibility</div>
<svg viewBox="0 0 16 16" preserveAspectRatio="none" style="left:320px;top:937px;width:11px;height:11px;color:#a0a0a0;fill:#a0a0a0;"><path d="M4 6l4 4 4-4" fill="none" stroke="currentColor" stroke-width="1.600" stroke-linecap="round" stroke-linejoin="round"/></svg>
<div style="left:334px;top:934.5px;height:16px;line-height:16px;font-size:11.8px;color:#dcdcdc;white-space:nowrap;font-weight:bold;">Ordering</div>
<div style="left:335.5px;top:955.8px;height:16px;line-height:16px;font-size:11.9px;color:#c4c4c4;white-space:nowrap;">Z Index</div>
<div style="left:462px;top:952.5px;width:133px;height:22.5px;background:#1b1b1b;border-radius:4px;"></div>
<div style="left:478.5px;top:955.5px;height:16px;line-height:16px;font-size:11.9px;color:#d0d0d0;white-space:nowrap;">0</div>
<svg viewBox="0 0 16 16" preserveAspectRatio="none" style="left:575.25px;top:957.5px;width:13px;height:13px;color:#d0d0d0;fill:#d0d0d0;"><path d="M4.500 6.500L8 3l3.500 3.500M4.500 9.500L8 13l3.500-3.500" fill="none" stroke="currentColor" stroke-width="1.600" stroke-linecap="round" stroke-linejoin="round"/></svg>
<div style="left:335.5px;top:980.8px;height:16px;line-height:16px;font-size:11.9px;color:#c4c4c4;white-space:nowrap;">Z as Relative</div>
<div style="left:462px;top:977.5px;width:133px;height:22.5px;background:#1b1b1b;border-radius:4px;"></div>
<div style="left:467.75px;top:983.0px;width:12px;height:12px;background:#5a9cf2;border-radius:2.5px;"></div>
<svg viewBox="0 0 12 12" style="left:467.75px;top:983.0px;width:12px;height:12px;"><path d="M2.600 6.200l2.300 2.400 4.600-5.200" fill="none" stroke="#fff" stroke-width="1.800" stroke-linecap="round" stroke-linejoin="round"/></svg>
<div style="left:486.5px;top:981.0px;height:16px;line-height:16px;font-size:11.9px;color:#d0d0d0;white-space:nowrap;">On</div>
<div style="left:335.5px;top:1005.8px;height:16px;line-height:16px;font-size:11.9px;color:#c4c4c4;white-space:nowrap;">Y Sort Enabled</div>
<div style="left:462px;top:1002.5px;width:133px;height:22.5px;background:#1b1b1b;border-radius:4px;"></div>
<div style="left:467.75px;top:1008.0px;width:12px;height:12px;background:#474747;border-radius:2.5px;"></div>
<div style="left:486.5px;top:1006.0px;height:16px;line-height:16px;font-size:11.9px;color:#d0d0d0;white-space:nowrap;">On</div>
<svg viewBox="0 0 16 16" preserveAspectRatio="none" style="left:320px;top:1030.5px;width:11px;height:11px;color:#a0a0a0;fill:#a0a0a0;"><path d="M6 4l4 4-4 4" fill="none" stroke="currentColor" stroke-width="1.600" stroke-linecap="round" stroke-linejoin="round"/></svg>
<div style="left:334px;top:1028px;height:16px;line-height:16px;font-size:11.8px;color:#dcdcdc;white-space:nowrap;font-weight:bold;">Texture</div>
<svg viewBox="0 0 16 16" preserveAspectRatio="none" style="left:320px;top:1050.5px;width:11px;height:11px;color:#a0a0a0;fill:#a0a0a0;"><path d="M6 4l4 4-4 4" fill="none" stroke="currentColor" stroke-width="1.600" stroke-linecap="round" stroke-linejoin="round"/></svg>
<div style="left:334px;top:1048px;height:16px;line-height:16px;font-size:11.8px;color:#dcdcdc;white-space:nowrap;font-weight:bold;">Material</div>
<div style="left:319.5px;top:1068.75px;width:275.5px;height:24.5px;background:#363636;border-radius:4px;"></div>
<svg viewBox="0 0 16 16" style="left:433.500px;top:1073.500px;width:13px;height:13px;"><circle cx="8" cy="8" r="5" fill="none" stroke="#e0e0e0" stroke-width="2"/></svg>
<div style="left:451px;top:1073.5px;height:16px;line-height:16px;font-size:11.8px;color:#e2e2e2;white-space:nowrap;font-weight:bold;">Node</div>
<div style="left:613.5px;top:6px;width:97.5px;height:27px;background:#262626;border-radius:6px 6px 0 0;"></div>
<div style="left:613.5px;top:32px;width:1300px;height:34px;background:#262626;border-radius:0 0 0 0;"></div>
<svg viewBox="0 0 16 16" preserveAspectRatio="none" style="left:626px;top:12px;width:13px;height:13px;color:#cfcfcf;fill:#cfcfcf;"><circle cx="8" cy="8" r="5" fill="none" stroke="#5c93f7" stroke-width="2"/></svg>
<div style="left:642.7px;top:10.5px;height:16px;line-height:16px;font-size:12px;color:#dadada;white-space:nowrap;">level0</div>
<svg viewBox="0 0 16 16" preserveAspectRatio="none" style="left:686px;top:12.5px;width:12px;height:12px;color:#e8e8e8;fill:#e8e8e8;"><path d="M3.500 3.500l9 9M12.500 3.500l-9 9" fill="none" stroke="currentColor" stroke-width="1.800" stroke-linecap="round"/></svg>
<svg viewBox="0 0 16 16" preserveAspectRatio="none" style="left:723px;top:11px;width:15px;height:15px;color:#cfcfcf;fill:#cfcfcf;opacity:.62;"><g fill="none" stroke="#5c93f7" stroke-linecap="round" stroke-linejoin="round"><rect x="7" y="2.600" width="3.600" height="3.400" rx="1.200" stroke-width="1.700"/><path d="M8.300 7L6.200 10.200 3.300 13.300" stroke-width="2.200"/><path d="M7.400 7.300L4 7.300 3.600 5.300" stroke-width="1.600"/><path d="M9.300 7.300l2.700.300 1 1.500" stroke-width="1.600"/><path d="M7 10.300l3.200.500 2.600 1.700" stroke-width="1.700"/><path d="M12.800 9.200c.700 1.200.600 2.300-.200 3.300" stroke-width="1.200"/></g></svg>
<div style="left:740.4px;top:10.5px;height:16px;line-height:16px;font-size:12px;color:#8f8f8f;white-space:nowrap;">dronezinho</div>
<svg viewBox="0 0 16 16" preserveAspectRatio="none" style="left:825.5px;top:11px;width:15px;height:15px;color:#cfcfcf;fill:#cfcfcf;opacity:.62;"><g fill="none" stroke="#5c93f7" stroke-linecap="round" stroke-linejoin="round"><rect x="7" y="2.600" width="3.600" height="3.400" rx="1.200" stroke-width="1.700"/><path d="M8.300 7L6.200 10.200 3.300 13.300" stroke-width="2.200"/><path d="M7.400 7.300L4 7.300 3.600 5.300" stroke-width="1.600"/><path d="M9.300 7.300l2.700.300 1 1.500" stroke-width="1.600"/><path d="M7 10.300l3.200.500 2.600 1.700" stroke-width="1.700"/><path d="M12.800 9.200c.700 1.200.600 2.300-.200 3.300" stroke-width="1.200"/></g></svg>
<div style="left:843.3px;top:10.5px;height:16px;line-height:16px;font-size:12px;color:#8f8f8f;white-space:nowrap;">bat</div>
<svg viewBox="0 0 16 16" preserveAspectRatio="none" style="left:885.5px;top:11px;width:15px;height:15px;color:#cfcfcf;fill:#cfcfcf;opacity:.62;"><g fill="none" stroke="#5c93f7" stroke-linecap="round" stroke-linejoin="round"><rect x="7" y="2.600" width="3.600" height="3.400" rx="1.200" stroke-width="1.700"/><path d="M8.300 7L6.200 10.200 3.300 13.300" stroke-width="2.200"/><path d="M7.400 7.300L4 7.300 3.600 5.300" stroke-width="1.600"/><path d="M9.300 7.300l2.700.300 1 1.500" stroke-width="1.600"/><path d="M7 10.300l3.200.500 2.600 1.700" stroke-width="1.700"/><path d="M12.800 9.200c.700 1.200.600 2.300-.200 3.300" stroke-width="1.200"/></g></svg>
<div style="left:903px;top:10.5px;height:16px;line-height:16px;font-size:12px;color:#8f8f8f;white-space:nowrap;">spider</div>
<svg viewBox="0 0 16 16" preserveAspectRatio="none" style="left:958.5px;top:11px;width:15px;height:15px;color:#b8b8b8;fill:#b8b8b8;"><path d="M7.4 2h1.2v5.4H14v1.2H8.6V14H7.4V8.6H2V7.4h5.4z"/></svg>
<svg viewBox="0 0 16 16" preserveAspectRatio="none" style="left:1862px;top:11px;width:15px;height:15px;color:#c2c2c2;fill:#c2c2c2;"><circle cx="8" cy="3" r="1.5"/><circle cx="8" cy="8" r="1.5"/><circle cx="8" cy="13" r="1.5"/></svg>
<svg viewBox="0 0 16 16" preserveAspectRatio="none" style="left:1891px;top:12.5px;width:12px;height:12px;color:#c2c2c2;fill:#c2c2c2;"><path d="M1.500 1.500h4.300L4.200 3.100l2 2L5.100 6.200l-2-2-1.600 1.600zM14.500 1.500v4.300l-1.600-1.600-2 2-1.100-1.100 2-2-1.600-1.600zM1.500 14.500v-4.300l1.600 1.600 2-2 1.100 1.100-2 2 1.600 1.600zM14.500 14.500h-4.300l1.600-1.600-2-2 1.100-1.100 2 2 1.600-1.600z"/></svg>
<div style="left:617px;top:36.3px;width:22.3px;height:23.4px;background:#3c3c3c;border-radius:4px;"></div>
<svg viewBox="0 0 16 16" preserveAspectRatio="none" style="left:621px;top:40.7px;width:14px;height:14px;color:#5a9cf2;fill:#5a9cf2;"><path d="M2.500 1.500l11 5.300-4.300 1.600 3 4-1.800 1.300-3-4-2.900 3.300z"/></svg>
<div style="left:645.2px;top:39.5px;width:1.6px;height:17px;background:#171717;"></div>
<div style="left:732.4000000000001px;top:39.5px;width:1.6px;height:17px;background:#171717;"></div>
<div style="left:845.9000000000001px;top:39.5px;width:1.6px;height:17px;background:#171717;"></div>
<div style="left:958.8000000000001px;top:39.5px;width:1.6px;height:17px;background:#171717;"></div>
<div style="left:1020.2px;top:39.5px;width:1.6px;height:17px;background:#171717;"></div>
<div style="left:1055.9px;top:39.5px;width:1.6px;height:17px;background:#171717;"></div>
<div style="left:1105.0px;top:39.5px;width:1.6px;height:17px;background:#171717;"></div>
<svg viewBox="0 0 16 16" preserveAspectRatio="none" style="left:656.5px;top:40.7px;width:14px;height:14px;color:#c2c2c2;fill:#c2c2c2;"><circle cx="8" cy="8" r="1.700"/><path d="M8 .8l2.300 2.700H5.700zM8 15.200l-2.300-2.700h4.600zM.8 8l2.700-2.300v4.600zM15.200 8l-2.700 2.300V5.700z"/></svg>
<svg viewBox="0 0 16 16" preserveAspectRatio="none" style="left:682px;top:40.7px;width:14px;height:14px;color:#c2c2c2;fill:#c2c2c2;"><path d="M4.800 12.500a5.600 5.600 0 1 1 6.400 0" fill="none" stroke="currentColor" stroke-width="1.900" stroke-linecap="round"/><circle cx="8" cy="8" r="1.700"/><path d="M2 11.200h4.600l-1 3.800z"/></svg>
<svg viewBox="0 0 16 16" preserveAspectRatio="none" style="left:708px;top:40.7px;width:14px;height:14px;color:#c2c2c2;fill:#c2c2c2;"><circle cx="8" cy="8" r="1.700"/><path d="M9.500 1.500h5v5h-1.800V4.600l-2.200 2.200-1.300-1.300 2.200-2.200H9.500zM6.500 14.500h-5v-5h1.800v1.900l2.200-2.200 1.300 1.300-2.200 2.200h1.900z"/></svg>
<svg viewBox="0 0 16 16" preserveAspectRatio="none" style="left:743.5px;top:40.7px;width:14px;height:14px;color:#c2c2c2;fill:#c2c2c2;"><path d="M2 2h10v2H2zM2 6h8v2H4v3h3v2H2zM8.500 8l6.500 3-2.600 1 1.700 2.300-1.200.900-1.700-2.300-1.700 2z"/></svg>
<svg viewBox="0 0 16 16" preserveAspectRatio="none" style="left:770px;top:40.7px;width:14px;height:14px;color:#c2c2c2;fill:#c2c2c2;"><path d="M7.200 1h1.600v3.500H7.200zM1 7.200h3.500v1.600H1zM7 7l7.500 3.500-3 1.100 2 2.700-1.300 1-2-2.700-2 2.300z"/></svg>
<svg viewBox="0 0 16 16" preserveAspectRatio="none" style="left:795.8px;top:40.7px;width:14px;height:14px;color:#c2c2c2;fill:#c2c2c2;"><path d="M5 14.500c-1.500-1-3.500-4-4-5.500-.3-.9.900-1.400 1.500-.600L4 10V3.500a.9.900 0 0 1 1.800 0V7h.400V2a.9.900 0 0 1 1.800 0v5h.400V2.600a.9.900 0 0 1 1.800 0V7h.400V4.200a.9.900 0 0 1 1.800 0V11c0 1.500-.5 2.600-1 3.500z"/></svg>
<svg viewBox="0 0 16 16" preserveAspectRatio="none" style="left:821px;top:40.7px;width:14px;height:14px;color:#c2c2c2;fill:#c2c2c2;"><path d="M2.500 2v12.500H15zM5 8l4 4H5z" fill-rule="evenodd"/></svg>
<div style="left:852.7px;top:36.3px;width:22.3px;height:23.4px;background:#3c3c3c;border-radius:4px;"></div>
<svg viewBox="0 0 16 16" preserveAspectRatio="none" style="left:856.65px;top:40.45px;width:14.5px;height:14.5px;color:#5a9cf2;fill:#5a9cf2;"><path d="M8 .800l6.200 3.500v7.400L8 15.200l-6.200-3.500V4.300zM8 3.200L4.300 5.300 8 7.400l3.700-2.100zM7 9.200l-3-1.700v3.200l3 1.700z" fill-rule="evenodd"/></svg>
<svg viewBox="0 0 16 16" preserveAspectRatio="none" style="left:884px;top:41px;width:14px;height:14px;color:#c2c2c2;fill:#c2c2c2;"><path d="M2.500 2h1.800v1.800H2.500zM6.500 2h1.800v1.800H6.500zM2.500 6h1.800v1.800H2.500z"/><path d="M6.200 14V10.300a3.300 3.300 0 0 1 6.600 0V14" fill="none" stroke="currentColor" stroke-width="1.900"/></svg>
<svg viewBox="0 0 16 16" preserveAspectRatio="none" style="left:908.15px;top:40.45px;width:14.5px;height:14.5px;color:#c2c2c2;fill:#c2c2c2;"><path d="M3.500 1h1.500v3h3V1h1.500v3h3V1h1.500v3H15v1.500H1V4h2.500zM1 8h5v1.500H5V13H3.500V9.500H1zM1 12h2v1.500H1z"/><path d="M7.800 15v-3.800a2.900 2.900 0 0 1 5.800 0V15" fill="none" stroke="currentColor" stroke-width="1.800"/></svg>
<svg viewBox="0 0 16 16" preserveAspectRatio="none" style="left:933.8px;top:40.2px;width:15px;height:15px;color:#c2c2c2;fill:#c2c2c2;"><circle cx="8" cy="3" r="1.5"/><circle cx="8" cy="8" r="1.5"/><circle cx="8" cy="13" r="1.5"/></svg>
<svg viewBox="0 0 16 16" preserveAspectRatio="none" style="left:969.8px;top:40.3px;width:14px;height:14px;color:#c2c2c2;fill:#c2c2c2;"><path d="M4.600 7V5a3.400 3.400 0 0 1 6.800 0v2" fill="none" stroke="currentColor" stroke-width="1.900"/><path d="M2.500 7h11v7.500h-11zM7.200 9.500v2.600h1.600V9.500z" fill-rule="evenodd"/></svg>
<svg viewBox="0 0 16 16" preserveAspectRatio="none" style="left:995.7px;top:40.7px;width:14px;height:14px;color:#b0b0b0;fill:#b0b0b0;"><path d="M1 1h2v2H1zM5 1h2v2H5zM9 1h6v6h-2V3H9zM1 5h2v2H1zM1 9h2v2H1zM13 9h2v2h-2zM1 13h2v2H1zM5 13h2v2H5zM9 13h2v2H9zM13 13h2v2h-2z"/><path d="M4 5h5v3h3v5H4z" opacity=".55"/></svg>
<svg viewBox="0 0 16 16" preserveAspectRatio="none" style="left:1031.3px;top:40.7px;width:14px;height:14px;color:#c2c2c2;fill:#c2c2c2;"><path d="M11.800 1.200a2.300 2.300 0 0 0-2 3.400L4.600 9.800a2.300 2.300 0 1 0 1.600 1.600l5.200-5.200a2.300 2.300 0 1 0 .400-5z"/><circle cx="13.300" cy="5" r="1.700"/><circle cx="3" cy="11" r="1.700"/></svg>
<div style="left:1068px;top:39.7px;height:16px;line-height:16px;font-size:11.9px;color:#c8c8c8;white-space:nowrap;">View</div>
<svg viewBox="613.5 65 1293.5 736" style="left:613.5px;top:65px;width:1293.5px;height:736px;" shape-rendering="auto"><defs><g id="wallt"><path d="M0 32l8 6 10-3 8 8-4 10 8 8-3 9 9 6M26 43l12-2 8 6 12-4 8 5 10-3 7 5M22 53l-10 3-12-2M30 61l14 2 6-7-4-9M50 56l12 4 9-5M71 55l5 9 7 2M27 70l-8 6 3 6M8 64l-8 4M44 63l4 10-5 9M48 73l14-3 8 6-2 6M62 60v10M0 77l10-2 9 1M70 75l13 2M62 18l4 8-3 12M40 28l6 8M12 22l-2 8" fill="none" stroke="#443d6e" stroke-width="2.400" stroke-linejoin="round"/><polygon points="3,31 12,25 17,35 8,43" fill="#8f88ab"/><polygon points="40,38 50,35 52,40 42,43" fill="#857ea4"/><polygon points="66,60 76,59 77,64 68,65" fill="#857ea4"/><polygon points="20,30 30,28 32,40 24,44" fill="#5a5080"/><polygon points="56,30 64,26 70,40 60,46" fill="#5a5080"/><polygon points="0,-1 83.200,-1 83.200,12.600 77.200,14.300 71.600,17.600 70.500,14.300 63,14.300 61.600,9.200 60,14.300 52,14.300 50.700,10 48.700,16 43.100,23.500 39.400,22.700 37.200,17.600 32.700,22.700 26.300,26 18.500,24.300 10,18.500 3.400,14.300 1,9.200 0,12.600" fill="#f8f7f6" stroke="#a5cdec" stroke-width="1.200"/></g><pattern id="lat" width="27.700" height="24.500" patternUnits="userSpaceOnUse"><rect width="27.700" height="24.500" fill="#f3f8fc"/><g fill="none" stroke="#a9b8c4" stroke-width="1"><ellipse cx="7" cy="6" rx="4.500" ry="5"/><ellipse cx="21" cy="6" rx="4.500" ry="5"/><path d="M11.500 6h5M0 6h2.500M25.500 6h2.200"/><ellipse cx="7" cy="17.500" rx="3" ry="5.500"/><ellipse cx="21" cy="17.500" rx="4.500" ry="4.500"/><path d="M10 17.500h6.500M0 17.500h4M25.500 17.500h2.200"/></g></pattern><g id="sq" fill="none" stroke="#c4ddf1" stroke-width="2.600" stroke-dasharray="2.600 2.200"><path d="M2 40c-3-12 4-30 18-36 10-4 18 4 24 12 8 10 14 22 30 28 10 4 14 12 10 18"/><path d="M6 22c6-6 12-6 16 0M40 20c4 6 10 8 14 4M60 44c2 6 8 8 14 6M10 48c-4 4-4 10 0 14"/></g><g id="sq2" fill="none" stroke="#c6def2" stroke-width="2.200" stroke-dasharray="2.400 2.200"><path d="M0 14c4-10 12-16 20-12 6 3 4 12-2 14-8 3-14 6-12 14"/><path d="M8 6c2 4 6 4 8 0"/></g></defs><rect x="613.5" y="65.0" width="1293.5" height="736.0" fill="#ddf0fb" /><rect x="926.0" y="300.0" width="360.0" height="260.0" fill="#e1f2fb" /><rect x="1040.0" y="200.0" width="770.0" height="170.0" fill="#e0f1fb" /><rect x="1500.0" y="400.0" width="407.0" height="401.0" fill="#e0f1fb" /><rect x="626.0" y="620.0" width="500.0" height="181.0" fill="#dbeffa" /><rect x="1286.0" y="560.0" width="300.0" height="241.0" fill="#dff1fb" /><rect x="1825.0" y="64.0" width="82.0" height="344.0" fill="#e4eff5" /><rect x="1878.0" y="64.0" width="29.0" height="344.0" fill="#d9e8ee" /><ellipse cx="1250.0" cy="430.0" rx="90.0" ry="30.0" fill="#e6f4fc" /><ellipse cx="1650.0" cy="600.0" rx="120.0" ry="60.0" fill="#e2f2fb" /><ellipse cx="820.0" cy="720.0" rx="120.0" ry="40.0" fill="#e0f2fc" /><ellipse cx="1720.0" cy="300.0" rx="70.0" ry="40.0" fill="#e8f5fc" /><rect x="770.0" y="64.0" width="250.0" height="66.0" fill="#e2f1fb" /><path d="M799.0 64V130" stroke="#f1d6c8" stroke-width="1" opacity=".75"/><path d="M826.8 64V130" stroke="#f1d6c8" stroke-width="1" opacity=".75"/><path d="M854.6 64V130" stroke="#f1d6c8" stroke-width="1" opacity=".75"/><path d="M882.4 64V130" stroke="#f1d6c8" stroke-width="1" opacity=".75"/><path d="M910.2 64V130" stroke="#f1d6c8" stroke-width="1" opacity=".75"/><path d="M938.0 64V130" stroke="#f1d6c8" stroke-width="1" opacity=".75"/><path d="M965.8 64V130" stroke="#f1d6c8" stroke-width="1" opacity=".75"/><path d="M993.6 64V130" stroke="#f1d6c8" stroke-width="1" opacity=".75"/><path d="M770 102H1020" stroke="#f1d6c8" stroke-width="1" opacity=".75"/><use href="#sq" transform="translate(805,133) scale(1)" opacity="0.64"/><use href="#sq" transform="translate(930,262) scale(1)" opacity="0.64"/><use href="#sq" transform="translate(932,338) scale(0.9)" opacity="0.56"/><use href="#sq" transform="translate(805,373) scale(1)" opacity="0.64"/><use href="#sq" transform="translate(925,133) scale(0.35)" opacity="0.64"/><use href="#sq" transform="translate(690,190) scale(0.3)" opacity="0.64"/><use href="#sq" transform="translate(800,400) scale(0.8)" opacity="0.48"/><use href="#sq" transform="translate(845,445) scale(0.8)" opacity="0.48"/><use href="#sq" transform="translate(800,678) scale(0.95)" opacity="0.60"/><use href="#sq" transform="translate(925,690) scale(1)" opacity="0.56"/><use href="#sq" transform="translate(1480,735) scale(1.05)" opacity="0.64"/><use href="#sq" transform="translate(1770,700) scale(1.2)" opacity="0.56"/><use href="#sq" transform="translate(1625,745) scale(0.8)" opacity="0.48"/><use href="#sq" transform="translate(1335,748) scale(0.7)" opacity="0.48"/><use href="#sq" transform="translate(1500,445) scale(0.6)" opacity="0.48"/><use href="#sq" transform="translate(1300,492) scale(0.8)" opacity="0.40"/><use href="#sq" transform="translate(1820,445) scale(0.6)" opacity="0.48"/><use href="#sq" transform="translate(1775,98) scale(0.6)" opacity="0.48"/><use href="#sq" transform="translate(1045,720) scale(0.6)" opacity="0.48"/><use href="#sq2" transform="translate(655,425) scale(1.3)" opacity=".5"/><use href="#sq2" transform="translate(658,490) scale(1.2)" opacity=".5"/><use href="#sq2" transform="translate(755,505) scale(1)" opacity=".5"/><use href="#sq2" transform="translate(815,508) scale(1)" opacity=".5"/><use href="#sq2" transform="translate(926,495) scale(1.3)" opacity=".5"/><use href="#sq2" transform="translate(838,552) scale(1.2)" opacity=".5"/><use href="#sq2" transform="translate(682,715) scale(1)" opacity=".5"/><use href="#sq2" transform="translate(1105,388) scale(1)" opacity=".5"/><use href="#sq2" transform="translate(1630,465) scale(1)" opacity=".5"/><use href="#sq2" transform="translate(1728,440) scale(1.3)" opacity=".5"/><use href="#sq2" transform="translate(1240,520) scale(1)" opacity=".5"/><use href="#sq2" transform="translate(1195,300) scale(0.9)" opacity=".5"/><use href="#sq2" transform="translate(1885,625) scale(1.2)" opacity=".5"/><use href="#sq2" transform="translate(1160,912) scale(1)" opacity=".5"/><path d="M1404 190C1398 260 1397 360 1396 430C1370 436 1338 444 1340 458C1344 476 1400 484 1440 478C1470 474 1486 462 1478 440C1470 380 1478 300 1470 190Z" fill="#c7d7ea"/><path d="M1412 190C1408 260 1406 360 1406 436C1440 446 1462 440 1466 430C1462 380 1468 300 1462 190Z" fill="#c2d3e8"/><ellipse cx="1150.0" cy="215.0" rx="60.0" ry="14.0" fill="#ccd8ee" /><ellipse cx="1230.0" cy="226.0" rx="40.0" ry="12.0" fill="#ccd8ee" /><ellipse cx="1250.0" cy="205.0" rx="45.0" ry="8.0" fill="#d3ddf0" /><rect x="1266.0" y="64.0" width="314.0" height="126.0" fill="#74b8d3" /><polygon points="1266.0,64.0 1580.0,64.0 1580.0,96.0 1540.0,100.0 1500.0,96.0 1470.0,104.0 1400.0,98.0 1350.0,110.0 1300.0,100.0 1266.0,104.0" fill="#80c3da" /><rect x="1268.0" y="190.0" width="96.0" height="11.0" fill="#6fb5d0" /><rect x="1330.0" y="84.0" width="6.0" height="115.0" fill="#5a9fbe" /><rect x="1296.0" y="84.0" width="5.0" height="106.0" fill="#6aaecb" /><rect x="1528.0" y="100.0" width="5.0" height="88.0" fill="#5a9fbe" /><rect x="1373.0" y="96.0" width="5.0" height="90.0" fill="#6cb1cd" /><polygon points="1399.0,134.0 1408.0,128.0 1420.0,131.0 1432.0,128.0 1452.0,128.0 1466.0,133.0 1472.0,150.0 1470.0,186.0 1400.0,186.0" fill="#4d9ab2" /><path d="M1430 130l12 24v32M1404 176l14-3M1440 178l20-2" fill="none" stroke="#3b8198" stroke-width="1.500"/><path d="M1452 141l6-5 6 5z" fill="none" stroke="#9dbf58" stroke-width="1.500"/><rect x="1266.0" y="157.5" width="314.0" height="31.0" fill="#5fb0cd" opacity=".35"/><path d="M1266 157.500H1556M1266 188.500H1556" stroke="#3fa1c2" stroke-width="1"/><rect x="1374.0" y="148.0" width="12.0" height="10.0" fill="#3f8ea8" /><rect x="1482.0" y="148.0" width="10.0" height="12.0" fill="#2d9a82" /><path d="M1380 162v10m-4-4l4 5 4-5" stroke="#3b7f95" stroke-width="1.500" fill="none"/><clipPath id="vclip"><rect x="613.5" y="65" width="1293.5" height="736"/></clipPath><g clip-path="url(#vclip)"><clipPath id="tc1"><polygon points="1130.0,58.0 1122.0,94.0 1128.0,102.0 1114.0,122.0 1120.0,132.0 1110.0,148.0 1130.0,146.0 1150.0,142.0 1170.0,150.0 1182.0,146.0 1174.0,130.0 1180.0,120.0 1170.0,104.0 1174.0,92.0 1166.0,58.0"/></clipPath><polygon points="1130.0,58.0 1122.0,94.0 1128.0,102.0 1114.0,122.0 1120.0,132.0 1110.0,148.0 1130.0,146.0 1150.0,142.0 1170.0,150.0 1182.0,146.0 1174.0,130.0 1180.0,120.0 1170.0,104.0 1174.0,92.0 1166.0,58.0" fill="#adb5d8"/><g clip-path="url(#tc1)"><polygon points="1110,76 1146,58 1182,80 1182,88 1146,66 1110,84" fill="#9aa2cc" opacity=".5"/><polygon points="1110,89 1146,71 1182,93 1182,101 1146,79 1110,97" fill="#9aa2cc" opacity=".5"/><polygon points="1110,102 1146,84 1182,106 1182,114 1146,92 1110,110" fill="#9aa2cc" opacity=".5"/><polygon points="1110,115 1146,97 1182,119 1182,127 1146,105 1110,123" fill="#9aa2cc" opacity=".5"/><polygon points="1110,129 1146,111 1182,133 1182,141 1146,119 1110,137" fill="#9aa2cc" opacity=".5"/><polygon points="1110,142 1146,124 1182,146 1182,154 1146,132 1110,150" fill="#9aa2cc" opacity=".5"/><polygon points="1110,155 1146,137 1182,159 1182,167 1146,145 1110,163" fill="#9aa2cc" opacity=".5"/><rect x="1178.8" y="145.2" width="5.2" height="1.7" fill="#2d8c5a" transform="rotate(-40 1178.8 145.2)"/><rect x="1163.0" y="119.6" width="5.2" height="3.5" fill="#e4ecf8" transform="rotate(38 1163.0 119.6)"/><rect x="1151.8" y="72.6" width="8.7" height="3.5" fill="#c6cdea" transform="rotate(38 1151.8 72.6)"/><rect x="1149.2" y="98.9" width="3.5" height="1.7" fill="#c6cdea" transform="rotate(38 1149.2 98.9)"/><rect x="1143.5" y="87.3" width="5.2" height="3.5" fill="#d3daf0" transform="rotate(38 1143.5 87.3)"/><rect x="1127.0" y="60.2" width="5.2" height="3.5" fill="#c6cdea" transform="rotate(38 1127.0 60.2)"/><rect x="1181.9" y="120.1" width="5.2" height="3.5" fill="#1f7050" transform="rotate(-40 1181.9 120.1)"/><rect x="1166.9" y="90.5" width="5.200" height="3.500" fill="#979ecb"/><rect x="1179.3" y="72.8" width="5.200" height="3.500" fill="#979ecb"/><rect x="1161.5" y="100.4" width="8.7" height="1.7" fill="#bcc3e2" transform="rotate(38 1161.5 100.4)"/><rect x="1146.1" y="134.5" width="8.7" height="1.7" fill="#c6cdea" transform="rotate(38 1146.1 134.5)"/><rect x="1150.9" y="142.7" width="5.200" height="3.500" fill="#979ecb"/><rect x="1145.0" y="78.4" width="5.2" height="3.5" fill="#c6cdea" transform="rotate(38 1145.0 78.4)"/><rect x="1165.7" y="102.1" width="8.7" height="1.7" fill="#d3daf0" transform="rotate(38 1165.7 102.1)"/><rect x="1145.2" y="91.7" width="5.200" height="3.500" fill="#979ecb"/><rect x="1173.5" y="130.2" width="3.5" height="1.7" fill="#e4ecf8" transform="rotate(38 1173.5 130.2)"/><rect x="1114.2" y="118.1" width="5.2" height="3.5" fill="#e4ecf8" transform="rotate(38 1114.2 118.1)"/><rect x="1164.3" y="70.6" width="3.5" height="3.5" fill="#2d8c5a" transform="rotate(-40 1164.3 70.6)"/><rect x="1174.7" y="127.9" width="3.5" height="1.7" fill="#1f7050" transform="rotate(-40 1174.7 127.9)"/><rect x="1158.4" y="65.6" width="5.200" height="3.500" fill="#979ecb"/><rect x="1111.8" y="125.1" width="3.5" height="1.7" fill="#1f7050" transform="rotate(-40 1111.8 125.1)"/><rect x="1162.9" y="106.1" width="3.5" height="1.7" fill="#2a9460" transform="rotate(-40 1162.9 106.1)"/><rect x="1120.9" y="61.3" width="3.5" height="1.7" fill="#c6cdea" transform="rotate(38 1120.9 61.3)"/><rect x="1145.2" y="86.4" width="5.200" height="3.500" fill="#979ecb"/><rect x="1153.6" y="62.2" width="8.7" height="3.5" fill="#d3daf0" transform="rotate(38 1153.6 62.2)"/><rect x="1144.0" y="78.7" width="5.200" height="3.500" fill="#979ecb"/><rect x="1132.8" y="67.4" width="5.2" height="3.5" fill="#bcc3e2" transform="rotate(38 1132.8 67.4)"/><rect x="1145.1" y="88.2" width="5.200" height="3.500" fill="#979ecb"/><rect x="1134.6" y="82.1" width="5.200" height="3.500" fill="#979ecb"/><rect x="1157.0" y="122.4" width="5.200" height="3.500" fill="#979ecb"/><rect x="1158.3" y="81.3" width="3.5" height="3.5" fill="#2d8c5a" transform="rotate(-40 1158.3 81.3)"/><rect x="1155.7" y="104.8" width="5.200" height="3.500" fill="#979ecb"/><rect x="1177.3" y="149.5" width="3.5" height="3.5" fill="#1f7050" transform="rotate(-40 1177.3 149.5)"/><rect x="1115.8" y="79.0" width="5.200" height="3.500" fill="#979ecb"/><rect x="1154.9" y="91.1" width="5.200" height="3.500" fill="#979ecb"/><rect x="1130.1" y="127.1" width="8.7" height="1.7" fill="#d3daf0" transform="rotate(38 1130.1 127.1)"/><rect x="1118.0" y="124.6" width="3.5" height="1.7" fill="#d3daf0" transform="rotate(38 1118.0 124.6)"/><rect x="1164.0" y="67.7" width="5.2" height="3.5" fill="#2a9460" transform="rotate(-40 1164.0 67.7)"/><rect x="1132.3" y="117.0" width="5.2" height="3.5" fill="#bcc3e2" transform="rotate(38 1132.3 117.0)"/><rect x="1140.6" y="60.0" width="5.200" height="3.500" fill="#979ecb"/><rect x="1173.5" y="143.5" width="5.200" height="3.500" fill="#979ecb"/><rect x="1176.3" y="119.0" width="3.5" height="3.5" fill="#e4ecf8" transform="rotate(38 1176.3 119.0)"/><rect x="1154.0" y="84.6" width="5.200" height="3.500" fill="#979ecb"/><rect x="1136.8" y="59.8" width="5.200" height="3.500" fill="#979ecb"/><rect x="1117.3" y="86.1" width="5.200" height="3.500" fill="#979ecb"/><rect x="1158.4" y="59.4" width="8.7" height="3.5" fill="#bcc3e2" transform="rotate(38 1158.4 59.4)"/><rect x="1143.4" y="139.8" width="5.200" height="3.500" fill="#979ecb"/><rect x="1110.4" y="60.2" width="3.5" height="1.7" fill="#bcc3e2" transform="rotate(38 1110.4 60.2)"/><rect x="1123.8" y="110.6" width="8.7" height="1.7" fill="#c6cdea" transform="rotate(38 1123.8 110.6)"/><rect x="1138.4" y="69.2" width="6.9" height="3.5" fill="#2d8c5a" transform="rotate(-40 1138.4 69.2)"/><rect x="1156.2" y="146.3" width="5.200" height="3.500" fill="#979ecb"/><rect x="1111.8" y="118.6" width="5.200" height="3.500" fill="#979ecb"/><rect x="1162.1" y="103.8" width="8.7" height="1.7" fill="#c6cdea" transform="rotate(38 1162.1 103.8)"/><rect x="1129.4" y="106.4" width="8.7" height="1.7" fill="#c6cdea" transform="rotate(38 1129.4 106.4)"/><rect x="1138.4" y="72.4" width="5.200" height="3.500" fill="#979ecb"/><rect x="1149.5" y="122.0" width="5.200" height="3.500" fill="#979ecb"/><rect x="1116.1" y="125.0" width="5.200" height="3.500" fill="#979ecb"/><rect x="1115.1" y="74.2" width="8.7" height="1.7" fill="#e4ecf8" transform="rotate(38 1115.1 74.2)"/><rect x="1175.6" y="120.7" width="5.200" height="3.500" fill="#979ecb"/><rect x="1112.7" y="147.6" width="7" height="1.7" fill="#d3daf0" transform="rotate(38 1112.7 147.6)"/><rect x="1147.7" y="68.3" width="8.7" height="1.7" fill="#c6cdea" transform="rotate(38 1147.7 68.3)"/><rect x="1147.2" y="123.8" width="5.2" height="1.7" fill="#d3daf0" transform="rotate(38 1147.2 123.8)"/><rect x="1139.1" y="149.6" width="5.200" height="3.500" fill="#979ecb"/><rect x="1151.3" y="71.3" width="3.5" height="3.5" fill="#bcc3e2" transform="rotate(38 1151.3 71.3)"/><rect x="1173.5" y="74.6" width="8.7" height="1.7" fill="#bcc3e2" transform="rotate(38 1173.5 74.6)"/><rect x="1128.3" y="125.3" width="8.7" height="1.7" fill="#c6cdea" transform="rotate(38 1128.3 125.3)"/><rect x="1161.4" y="141.9" width="3.5" height="1.7" fill="#2a9460" transform="rotate(-40 1161.4 141.9)"/><rect x="1139.0" y="119.4" width="5.200" height="3.500" fill="#979ecb"/><rect x="1155.7" y="59.1" width="8.7" height="3.5" fill="#d3daf0" transform="rotate(38 1155.7 59.1)"/><rect x="1168.8" y="59.6" width="5.200" height="3.500" fill="#979ecb"/><rect x="1162.5" y="113.8" width="5.200" height="3.500" fill="#979ecb"/><rect x="1173.7" y="67.2" width="5.200" height="3.500" fill="#979ecb"/><rect x="1165.2" y="76.4" width="5.200" height="3.500" fill="#979ecb"/><rect x="1152.2" y="75.6" width="5.200" height="3.500" fill="#979ecb"/><rect x="1119.9" y="114.3" width="7" height="3.5" fill="#d3daf0" transform="rotate(38 1119.9 114.3)"/><rect x="1143.6" y="76.9" width="5.200" height="3.500" fill="#979ecb"/><rect x="1115.2" y="58.3" width="3.5" height="3.5" fill="#bcc3e2" transform="rotate(38 1115.2 58.3)"/><rect x="1176.6" y="142.8" width="8.7" height="1.7" fill="#e4ecf8" transform="rotate(38 1176.6 142.8)"/><rect x="1154.2" y="90.0" width="5.200" height="3.500" fill="#979ecb"/><rect x="1177.6" y="149.8" width="6.9" height="1.7" fill="#2a9460" transform="rotate(-40 1177.6 149.8)"/><rect x="1113.9" y="104.0" width="5.200" height="3.500" fill="#979ecb"/><rect x="1158.6" y="72.3" width="8.7" height="1.7" fill="#c6cdea" transform="rotate(38 1158.6 72.3)"/><rect x="1112.4" y="136.2" width="5.200" height="3.500" fill="#979ecb"/><rect x="1124.7" y="120.2" width="5.2" height="1.7" fill="#c6cdea" transform="rotate(38 1124.7 120.2)"/><rect x="1115.5" y="133.8" width="7" height="3.5" fill="#bcc3e2" transform="rotate(38 1115.5 133.8)"/><rect x="1147.3" y="142.7" width="5.2" height="1.7" fill="#d3daf0" transform="rotate(38 1147.3 142.7)"/><rect x="1167.4" y="115.9" width="5.2" height="1.7" fill="#d3daf0" transform="rotate(38 1167.4 115.9)"/><rect x="1147.6" y="63.6" width="5.2" height="3.5" fill="#2a9460" transform="rotate(-40 1147.6 63.6)"/><rect x="1125.4" y="90.8" width="7" height="1.7" fill="#bcc3e2" transform="rotate(38 1125.4 90.8)"/><rect x="1141.8" y="84.9" width="5.200" height="3.500" fill="#979ecb"/><rect x="1176.4" y="98.7" width="5.200" height="3.500" fill="#979ecb"/><rect x="1176.9" y="88.0" width="5.2" height="1.7" fill="#2d8c5a" transform="rotate(-40 1176.9 88.0)"/><rect x="1164.2" y="135.9" width="3.5" height="1.7" fill="#2d8c5a" transform="rotate(-40 1164.2 135.9)"/><rect x="1129.3" y="108.7" width="7" height="1.7" fill="#c6cdea" transform="rotate(38 1129.3 108.7)"/><rect x="1163.5" y="127.1" width="5.200" height="3.500" fill="#979ecb"/><rect x="1177.4" y="127.3" width="5.200" height="3.500" fill="#979ecb"/><rect x="1131.0" y="115.3" width="5.200" height="3.500" fill="#979ecb"/><rect x="1136.5" y="94.4" width="7" height="1.7" fill="#bcc3e2" transform="rotate(38 1136.5 94.4)"/><rect x="1116.3" y="143.0" width="8.7" height="1.7" fill="#e4ecf8" transform="rotate(38 1116.3 143.0)"/><rect x="1117.5" y="73.4" width="6.9" height="3.5" fill="#2a9460" transform="rotate(-40 1117.5 73.4)"/><rect x="1110.6" y="87.5" width="5.200" height="3.500" fill="#979ecb"/><rect x="1152.8" y="107.8" width="5.2" height="1.7" fill="#c6cdea" transform="rotate(38 1152.8 107.8)"/><rect x="1124.6" y="103.9" width="5.200" height="3.500" fill="#979ecb"/><rect x="1166.4" y="88.5" width="5.2" height="1.7" fill="#1f7050" transform="rotate(-40 1166.4 88.5)"/><rect x="1134.7" y="80.7" width="3.5" height="1.7" fill="#c6cdea" transform="rotate(38 1134.7 80.7)"/><rect x="1156.7" y="114.3" width="5.200" height="3.500" fill="#979ecb"/><rect x="1122.8" y="63.8" width="7" height="1.7" fill="#c6cdea" transform="rotate(38 1122.8 63.8)"/><rect x="1147.7" y="135.8" width="8.7" height="1.7" fill="#e4ecf8" transform="rotate(38 1147.7 135.8)"/><rect x="1138.2" y="101.6" width="5.200" height="3.500" fill="#979ecb"/><rect x="1132.8" y="135.1" width="5.200" height="3.500" fill="#979ecb"/><rect x="1152.3" y="107.5" width="5.200" height="3.500" fill="#979ecb"/><rect x="1181.2" y="135.4" width="8.7" height="1.7" fill="#bcc3e2" transform="rotate(38 1181.2 135.4)"/><rect x="1113.3" y="68.0" width="5.200" height="3.500" fill="#979ecb"/><rect x="1119.2" y="144.2" width="5.200" height="3.500" fill="#979ecb"/><rect x="1175.9" y="65.1" width="3.5" height="3.5" fill="#2a9460" transform="rotate(-40 1175.9 65.1)"/><rect x="1117.6" y="90.3" width="5.2" height="1.7" fill="#e4ecf8" transform="rotate(38 1117.6 90.3)"/><rect x="1134.2" y="133.4" width="8.7" height="1.7" fill="#e4ecf8" transform="rotate(38 1134.2 133.4)"/><rect x="1144.7" y="109.4" width="6.9" height="1.7" fill="#2a9460" transform="rotate(-40 1144.7 109.4)"/><rect x="1113.5" y="108.2" width="5.2" height="1.7" fill="#2a9460" transform="rotate(-40 1113.5 108.2)"/><rect x="1120.1" y="103.3" width="3.5" height="1.7" fill="#e4ecf8" transform="rotate(38 1120.1 103.3)"/><rect x="1143.6" y="131.4" width="5.200" height="3.500" fill="#979ecb"/><rect x="1155.1" y="89.0" width="5.200" height="3.500" fill="#979ecb"/><rect x="1138.4" y="144.0" width="5.2" height="3.5" fill="#e4ecf8" transform="rotate(38 1138.4 144.0)"/><rect x="1170.0" y="71.9" width="5.200" height="3.500" fill="#979ecb"/><rect x="1122.5" y="76.6" width="5.2" height="1.7" fill="#d3daf0" transform="rotate(38 1122.5 76.6)"/><rect x="1138.7" y="131.4" width="5.200" height="3.500" fill="#979ecb"/><rect x="1150.5" y="101.5" width="8.7" height="1.7" fill="#d3daf0" transform="rotate(38 1150.5 101.5)"/><rect x="1140.3" y="70.7" width="3.5" height="1.7" fill="#d3daf0" transform="rotate(38 1140.3 70.7)"/><rect x="1125.3" y="94.0" width="6.9" height="1.7" fill="#2d8c5a" transform="rotate(-40 1125.3 94.0)"/><rect x="1163.4" y="122.6" width="3.5" height="3.5" fill="#d3daf0" transform="rotate(38 1163.4 122.6)"/><rect x="1170.2" y="113.0" width="3.5" height="1.7" fill="#2d8c5a" transform="rotate(-40 1170.2 113.0)"/><rect x="1155.8" y="108.1" width="6.9" height="3.5" fill="#2d8c5a" transform="rotate(-40 1155.8 108.1)"/><rect x="1155.3" y="146.6" width="6.9" height="3.5" fill="#1f7050" transform="rotate(-40 1155.3 146.6)"/><rect x="1171.2" y="105.7" width="6.9" height="1.7" fill="#1f7050" transform="rotate(-40 1171.2 105.7)"/><rect x="1142.8" y="118.7" width="6.9" height="3.5" fill="#2a9460" transform="rotate(-40 1142.8 118.7)"/><rect x="1178.0" y="59.4" width="7" height="3.5" fill="#bcc3e2" transform="rotate(38 1178.0 59.4)"/><rect x="1152.7" y="126.8" width="5.200" height="3.500" fill="#979ecb"/><rect x="1140.9" y="69.8" width="8.7" height="1.7" fill="#c6cdea" transform="rotate(38 1140.9 69.8)"/><rect x="1137.6" y="114.4" width="5.200" height="3.500" fill="#979ecb"/><rect x="1151.8" y="98.9" width="5.200" height="3.500" fill="#979ecb"/><rect x="1171.2" y="89.1" width="6.9" height="3.5" fill="#1f7050" transform="rotate(-40 1171.2 89.1)"/><rect x="1126.0" y="114.6" width="5.200" height="3.500" fill="#979ecb"/><rect x="1173.7" y="120.8" width="6.9" height="3.5" fill="#2d8c5a" transform="rotate(-40 1173.7 120.8)"/><rect x="1117.1" y="130.6" width="3.5" height="3.5" fill="#1f7050" transform="rotate(-40 1117.1 130.6)"/><rect x="1148.4" y="130.9" width="5.200" height="3.500" fill="#979ecb"/><rect x="1169.2" y="64.6" width="3.5" height="1.7" fill="#d3daf0" transform="rotate(38 1169.2 64.6)"/><rect x="1125.3" y="72.9" width="5.200" height="3.500" fill="#979ecb"/><rect x="1161.9" y="116.3" width="7" height="3.5" fill="#e4ecf8" transform="rotate(38 1161.9 116.3)"/><rect x="1145.7" y="131.7" width="5.200" height="3.500" fill="#979ecb"/><rect x="1120.9" y="85.5" width="5.200" height="3.500" fill="#979ecb"/><rect x="1176.7" y="76.7" width="5.200" height="3.500" fill="#979ecb"/><rect x="1173.0" y="112.4" width="5.200" height="3.500" fill="#979ecb"/><rect x="1147.7" y="79.6" width="3.5" height="1.7" fill="#d3daf0" transform="rotate(38 1147.7 79.6)"/><rect x="1120.0" y="115.2" width="8.7" height="1.7" fill="#bcc3e2" transform="rotate(38 1120.0 115.2)"/><rect x="1138.2" y="101.7" width="5.2" height="1.7" fill="#d3daf0" transform="rotate(38 1138.2 101.7)"/><rect x="1114.0" y="106.3" width="5.200" height="3.500" fill="#979ecb"/><rect x="1153.4" y="108.0" width="6.9" height="3.5" fill="#1f7050" transform="rotate(-40 1153.4 108.0)"/><rect x="1138.9" y="105.4" width="5.2" height="3.5" fill="#2a9460" transform="rotate(-40 1138.9 105.4)"/><rect x="1151.8" y="122.8" width="5.200" height="3.500" fill="#979ecb"/><rect x="1125.9" y="60.3" width="5.2" height="3.5" fill="#d3daf0" transform="rotate(38 1125.9 60.3)"/><rect x="1124.9" y="80.2" width="6.9" height="3.5" fill="#2d8c5a" transform="rotate(-40 1124.9 80.2)"/><rect x="1177.9" y="67.4" width="5.200" height="3.500" fill="#979ecb"/><rect x="1116.2" y="119.6" width="5.2" height="1.7" fill="#c6cdea" transform="rotate(38 1116.2 119.6)"/><rect x="1146.8" y="82.7" width="5.2" height="3.5" fill="#2a9460" transform="rotate(-40 1146.8 82.7)"/><rect x="1159.4" y="67.0" width="7" height="1.7" fill="#c6cdea" transform="rotate(38 1159.4 67.0)"/><rect x="1168.0" y="140.4" width="5.2" height="1.7" fill="#e4ecf8" transform="rotate(38 1168.0 140.4)"/><rect x="1134.5" y="135.1" width="6.9" height="1.7" fill="#2a9460" transform="rotate(-40 1134.5 135.1)"/><rect x="1172.1" y="65.1" width="8.7" height="1.7" fill="#bcc3e2" transform="rotate(38 1172.1 65.1)"/><rect x="1127.3" y="74.7" width="5.200" height="3.500" fill="#979ecb"/><rect x="1111.1" y="127.9" width="5.200" height="3.500" fill="#979ecb"/><rect x="1135.4" y="74.7" width="3.5" height="1.7" fill="#2d8c5a" transform="rotate(-40 1135.4 74.7)"/><rect x="1139.0" y="141.6" width="3.5" height="1.7" fill="#2a9460" transform="rotate(-40 1139.0 141.6)"/><rect x="1126.8" y="75.5" width="3.5" height="3.5" fill="#1f7050" transform="rotate(-40 1126.8 75.5)"/><rect x="1151.9" y="78.4" width="8.7" height="1.7" fill="#d3daf0" transform="rotate(38 1151.9 78.4)"/></g><rect x="1150.1" y="143.2" width="6.900" height="3.500" fill="#1f7050" transform="rotate(-40 1153.1 143.2)"/><rect x="1156.2" y="145.7" width="6.900" height="3.500" fill="#2d8c5a" transform="rotate(-40 1159.2 145.7)"/><rect x="1167.6" y="149.8" width="6.900" height="3.500" fill="#1f7050" transform="rotate(-40 1170.6 149.8)"/><rect x="1173.2" y="147.9" width="6.900" height="3.500" fill="#2d8c5a" transform="rotate(-40 1176.2 147.9)"/><rect x="1171.4" y="130.9" width="6.900" height="3.500" fill="#2d8c5a" transform="rotate(-40 1174.4 130.9)"/><rect x="1177.7" y="143.4" width="6.900" height="3.500" fill="#1f7050" transform="rotate(-40 1180.7 143.4)"/><rect x="1176.1" y="121.5" width="6.900" height="3.500" fill="#1f7050" transform="rotate(-40 1179.1 121.5)"/><rect x="1171.1" y="129.8" width="6.900" height="3.500" fill="#1f7050" transform="rotate(-40 1174.1 129.8)"/><rect x="1167.2" y="104.4" width="6.900" height="3.500" fill="#2d8c5a" transform="rotate(-40 1170.2 104.4)"/><rect x="1171.3" y="110.9" width="6.900" height="3.500" fill="#2d8c5a" transform="rotate(-40 1174.3 110.9)"/><rect x="1170.9" y="92.2" width="6.900" height="3.500" fill="#2d8c5a" transform="rotate(-40 1173.9 92.2)"/><rect x="1168.9" y="98.4" width="6.900" height="3.500" fill="#2d8c5a" transform="rotate(-40 1171.9 98.4)"/><rect x="1167.5" y="77.2" width="6.900" height="3.500" fill="#1f7050" transform="rotate(-40 1170.5 77.2)"/><rect x="1168.2" y="80.0" width="6.900" height="3.500" fill="#1f7050" transform="rotate(-40 1171.2 80.0)"/><clipPath id="tc2"><polygon points="1052.0,58.0 1044.0,96.0 1050.0,104.0 1036.0,124.0 1042.0,134.0 1024.0,152.0 1034.0,160.0 1030.0,176.0 1050.0,172.0 1062.0,178.0 1090.0,170.0 1100.0,176.0 1112.0,162.0 1104.0,150.0 1112.0,136.0 1100.0,122.0 1106.0,106.0 1094.0,92.0 1096.0,58.0"/></clipPath><polygon points="1052.0,58.0 1044.0,96.0 1050.0,104.0 1036.0,124.0 1042.0,134.0 1024.0,152.0 1034.0,160.0 1030.0,176.0 1050.0,172.0 1062.0,178.0 1090.0,170.0 1100.0,176.0 1112.0,162.0 1104.0,150.0 1112.0,136.0 1100.0,122.0 1106.0,106.0 1094.0,92.0 1096.0,58.0" fill="#adb5d8"/><g clip-path="url(#tc2)"><polygon points="1024,76 1068,58 1112,80 1112,88 1068,66 1024,84" fill="#9aa2cc" opacity=".5"/><polygon points="1024,93 1068,75 1112,97 1112,105 1068,83 1024,101" fill="#9aa2cc" opacity=".5"/><polygon points="1024,110 1068,92 1112,114 1112,122 1068,100 1024,118" fill="#9aa2cc" opacity=".5"/><polygon points="1024,127 1068,109 1112,131 1112,139 1068,117 1024,135" fill="#9aa2cc" opacity=".5"/><polygon points="1024,145 1068,127 1112,149 1112,157 1068,135 1024,153" fill="#9aa2cc" opacity=".5"/><polygon points="1024,162 1068,144 1112,166 1112,174 1068,152 1024,170" fill="#9aa2cc" opacity=".5"/><polygon points="1024,179 1068,161 1112,183 1112,191 1068,169 1024,187" fill="#9aa2cc" opacity=".5"/><rect x="1035.8" y="159.7" width="5.200" height="3.500" fill="#979ecb"/><rect x="1046.4" y="117.5" width="8.7" height="1.7" fill="#e4ecf8" transform="rotate(38 1046.4 117.5)"/><rect x="1066.9" y="165.2" width="3.5" height="3.5" fill="#bcc3e2" transform="rotate(38 1066.9 165.2)"/><rect x="1047.4" y="154.2" width="5.200" height="3.500" fill="#979ecb"/><rect x="1033.0" y="96.1" width="6.9" height="1.7" fill="#2a9460" transform="rotate(-40 1033.0 96.1)"/><rect x="1106.6" y="103.7" width="6.9" height="1.7" fill="#1f7050" transform="rotate(-40 1106.6 103.7)"/><rect x="1070.4" y="149.6" width="5.200" height="3.500" fill="#979ecb"/><rect x="1072.7" y="99.5" width="5.200" height="3.500" fill="#979ecb"/><rect x="1091.0" y="172.3" width="5.200" height="3.500" fill="#979ecb"/><rect x="1060.6" y="168.0" width="5.200" height="3.500" fill="#979ecb"/><rect x="1032.8" y="133.5" width="5.200" height="3.500" fill="#979ecb"/><rect x="1050.1" y="147.2" width="5.200" height="3.500" fill="#979ecb"/><rect x="1109.6" y="118.1" width="5.200" height="3.500" fill="#979ecb"/><rect x="1068.7" y="167.2" width="7" height="3.5" fill="#bcc3e2" transform="rotate(38 1068.7 167.2)"/><rect x="1098.5" y="118.6" width="5.200" height="3.500" fill="#979ecb"/><rect x="1027.0" y="87.1" width="5.200" height="3.500" fill="#979ecb"/><rect x="1060.5" y="78.8" width="7" height="1.7" fill="#bcc3e2" transform="rotate(38 1060.5 78.8)"/><rect x="1082.4" y="71.0" width="5.2" height="3.5" fill="#1f7050" transform="rotate(-40 1082.4 71.0)"/><rect x="1088.5" y="114.3" width="8.7" height="3.5" fill="#d3daf0" transform="rotate(38 1088.5 114.3)"/><rect x="1038.8" y="85.2" width="6.9" height="1.7" fill="#2d8c5a" transform="rotate(-40 1038.8 85.2)"/><rect x="1059.6" y="99.3" width="5.200" height="3.500" fill="#979ecb"/><rect x="1055.1" y="167.2" width="5.200" height="3.500" fill="#979ecb"/><rect x="1077.6" y="145.5" width="5.2" height="3.5" fill="#d3daf0" transform="rotate(38 1077.6 145.5)"/><rect x="1061.5" y="64.7" width="5.200" height="3.500" fill="#979ecb"/><rect x="1074.2" y="82.0" width="8.7" height="1.7" fill="#bcc3e2" transform="rotate(38 1074.2 82.0)"/><rect x="1054.5" y="122.6" width="5.200" height="3.500" fill="#979ecb"/><rect x="1077.9" y="113.0" width="6.9" height="1.7" fill="#2d8c5a" transform="rotate(-40 1077.9 113.0)"/><rect x="1072.5" y="79.7" width="5.2" height="1.7" fill="#2a9460" transform="rotate(-40 1072.5 79.7)"/><rect x="1098.1" y="138.8" width="5.2" height="1.7" fill="#2d8c5a" transform="rotate(-40 1098.1 138.8)"/><rect x="1090.4" y="91.7" width="3.5" height="3.5" fill="#2a9460" transform="rotate(-40 1090.4 91.7)"/><rect x="1049.5" y="78.1" width="5.2" height="3.5" fill="#c6cdea" transform="rotate(38 1049.5 78.1)"/><rect x="1081.0" y="93.3" width="5.200" height="3.500" fill="#979ecb"/><rect x="1067.7" y="71.7" width="7" height="1.7" fill="#d3daf0" transform="rotate(38 1067.7 71.7)"/><rect x="1046.7" y="88.4" width="5.200" height="3.500" fill="#979ecb"/><rect x="1110.0" y="173.9" width="3.5" height="1.7" fill="#e4ecf8" transform="rotate(38 1110.0 173.9)"/><rect x="1059.0" y="62.2" width="5.200" height="3.500" fill="#979ecb"/><rect x="1063.2" y="118.8" width="5.2" height="3.5" fill="#bcc3e2" transform="rotate(38 1063.2 118.8)"/><rect x="1043.6" y="135.8" width="7" height="3.5" fill="#bcc3e2" transform="rotate(38 1043.6 135.8)"/><rect x="1029.2" y="93.8" width="5.200" height="3.500" fill="#979ecb"/><rect x="1101.0" y="94.8" width="5.200" height="3.500" fill="#979ecb"/><rect x="1051.3" y="170.7" width="5.200" height="3.500" fill="#979ecb"/><rect x="1060.6" y="88.3" width="6.9" height="1.7" fill="#2d8c5a" transform="rotate(-40 1060.6 88.3)"/><rect x="1108.7" y="126.4" width="6.9" height="1.7" fill="#2a9460" transform="rotate(-40 1108.7 126.4)"/><rect x="1057.3" y="99.6" width="8.7" height="3.5" fill="#d3daf0" transform="rotate(38 1057.3 99.6)"/><rect x="1067.3" y="170.6" width="8.7" height="1.7" fill="#c6cdea" transform="rotate(38 1067.3 170.6)"/><rect x="1077.9" y="106.3" width="5.2" height="1.7" fill="#c6cdea" transform="rotate(38 1077.9 106.3)"/><rect x="1095.4" y="125.6" width="3.5" height="3.5" fill="#1f7050" transform="rotate(-40 1095.4 125.6)"/><rect x="1083.4" y="158.5" width="5.200" height="3.500" fill="#979ecb"/><rect x="1054.3" y="163.9" width="5.200" height="3.500" fill="#979ecb"/><rect x="1066.6" y="176.3" width="3.5" height="1.7" fill="#d3daf0" transform="rotate(38 1066.6 176.3)"/><rect x="1038.9" y="167.3" width="7" height="3.5" fill="#c6cdea" transform="rotate(38 1038.9 167.3)"/><rect x="1056.4" y="98.8" width="8.7" height="1.7" fill="#e4ecf8" transform="rotate(38 1056.4 98.8)"/><rect x="1052.2" y="106.8" width="5.2" height="1.7" fill="#c6cdea" transform="rotate(38 1052.2 106.8)"/><rect x="1034.1" y="128.5" width="5.200" height="3.500" fill="#979ecb"/><rect x="1030.7" y="124.0" width="5.200" height="3.500" fill="#979ecb"/><rect x="1107.8" y="101.8" width="3.5" height="3.5" fill="#2a9460" transform="rotate(-40 1107.8 101.8)"/><rect x="1102.9" y="70.9" width="3.5" height="1.7" fill="#1f7050" transform="rotate(-40 1102.9 70.9)"/><rect x="1032.1" y="71.8" width="5.200" height="3.500" fill="#979ecb"/><rect x="1027.5" y="86.8" width="5.200" height="3.500" fill="#979ecb"/><rect x="1061.0" y="71.9" width="5.2" height="1.7" fill="#e4ecf8" transform="rotate(38 1061.0 71.9)"/><rect x="1062.3" y="173.8" width="5.200" height="3.500" fill="#979ecb"/><rect x="1071.8" y="156.2" width="5.200" height="3.500" fill="#979ecb"/><rect x="1086.6" y="95.7" width="3.5" height="1.7" fill="#1f7050" transform="rotate(-40 1086.6 95.7)"/><rect x="1024.9" y="175.9" width="7" height="1.7" fill="#bcc3e2" transform="rotate(38 1024.9 175.9)"/><rect x="1051.6" y="65.6" width="5.200" height="3.500" fill="#979ecb"/><rect x="1109.3" y="174.4" width="6.9" height="3.5" fill="#2d8c5a" transform="rotate(-40 1109.3 174.4)"/><rect x="1082.2" y="89.1" width="7" height="1.7" fill="#d3daf0" transform="rotate(38 1082.2 89.1)"/><rect x="1055.7" y="156.4" width="3.5" height="3.5" fill="#1f7050" transform="rotate(-40 1055.7 156.4)"/><rect x="1106.8" y="104.9" width="3.5" height="3.5" fill="#1f7050" transform="rotate(-40 1106.8 104.9)"/><rect x="1093.8" y="127.5" width="5.200" height="3.500" fill="#979ecb"/><rect x="1045.6" y="70.1" width="5.200" height="3.500" fill="#979ecb"/><rect x="1095.1" y="69.0" width="5.2" height="1.7" fill="#2d8c5a" transform="rotate(-40 1095.1 69.0)"/><rect x="1047.6" y="162.1" width="5.200" height="3.500" fill="#979ecb"/><rect x="1025.9" y="59.2" width="5.200" height="3.500" fill="#979ecb"/><rect x="1055.6" y="114.3" width="5.200" height="3.500" fill="#979ecb"/><rect x="1032.9" y="151.3" width="5.2" height="1.7" fill="#d3daf0" transform="rotate(38 1032.9 151.3)"/><rect x="1110.7" y="156.6" width="6.9" height="3.5" fill="#2d8c5a" transform="rotate(-40 1110.7 156.6)"/><rect x="1035.1" y="82.8" width="3.5" height="1.7" fill="#d3daf0" transform="rotate(38 1035.1 82.8)"/><rect x="1039.7" y="109.9" width="5.2" height="1.7" fill="#e4ecf8" transform="rotate(38 1039.7 109.9)"/><rect x="1084.0" y="111.6" width="7" height="3.5" fill="#bcc3e2" transform="rotate(38 1084.0 111.6)"/><rect x="1098.9" y="112.4" width="7" height="1.7" fill="#c6cdea" transform="rotate(38 1098.9 112.4)"/><rect x="1066.7" y="153.2" width="5.200" height="3.500" fill="#979ecb"/><rect x="1109.9" y="60.3" width="5.200" height="3.500" fill="#979ecb"/><rect x="1075.0" y="129.2" width="5.2" height="3.5" fill="#1f7050" transform="rotate(-40 1075.0 129.2)"/><rect x="1039.2" y="68.7" width="5.2" height="3.5" fill="#c6cdea" transform="rotate(38 1039.2 68.7)"/><rect x="1068.1" y="135.9" width="5.2" height="1.7" fill="#c6cdea" transform="rotate(38 1068.1 135.9)"/><rect x="1067.6" y="115.5" width="8.7" height="1.7" fill="#c6cdea" transform="rotate(38 1067.6 115.5)"/><rect x="1109.6" y="84.3" width="5.200" height="3.500" fill="#979ecb"/><rect x="1091.2" y="135.4" width="5.2" height="1.7" fill="#c6cdea" transform="rotate(38 1091.2 135.4)"/><rect x="1084.9" y="159.9" width="8.7" height="3.5" fill="#e4ecf8" transform="rotate(38 1084.9 159.9)"/><rect x="1099.4" y="165.6" width="5.200" height="3.500" fill="#979ecb"/><rect x="1074.3" y="79.2" width="5.2" height="3.5" fill="#e4ecf8" transform="rotate(38 1074.3 79.2)"/><rect x="1067.6" y="105.2" width="5.200" height="3.500" fill="#979ecb"/><rect x="1057.8" y="159.5" width="3.5" height="3.5" fill="#e4ecf8" transform="rotate(38 1057.8 159.5)"/><rect x="1095.1" y="133.4" width="3.5" height="1.7" fill="#2d8c5a" transform="rotate(-40 1095.1 133.4)"/><rect x="1063.2" y="168.9" width="5.200" height="3.500" fill="#979ecb"/><rect x="1057.6" y="154.3" width="5.2" height="1.7" fill="#bcc3e2" transform="rotate(38 1057.6 154.3)"/><rect x="1035.1" y="167.1" width="5.200" height="3.500" fill="#979ecb"/><rect x="1034.5" y="130.1" width="3.5" height="3.5" fill="#c6cdea" transform="rotate(38 1034.5 130.1)"/><rect x="1048.4" y="103.5" width="5.200" height="3.500" fill="#979ecb"/><rect x="1108.5" y="121.4" width="5.200" height="3.500" fill="#979ecb"/><rect x="1026.7" y="174.8" width="7" height="1.7" fill="#d3daf0" transform="rotate(38 1026.7 174.8)"/><rect x="1049.1" y="123.1" width="7" height="3.5" fill="#bcc3e2" transform="rotate(38 1049.1 123.1)"/><rect x="1093.6" y="155.0" width="5.200" height="3.500" fill="#979ecb"/><rect x="1072.0" y="116.9" width="5.200" height="3.500" fill="#979ecb"/><rect x="1091.7" y="126.5" width="7" height="1.7" fill="#e4ecf8" transform="rotate(38 1091.7 126.5)"/><rect x="1034.4" y="147.7" width="5.2" height="1.7" fill="#c6cdea" transform="rotate(38 1034.4 147.7)"/><rect x="1074.4" y="95.4" width="7" height="3.5" fill="#c6cdea" transform="rotate(38 1074.4 95.4)"/><rect x="1024.1" y="111.1" width="7" height="3.5" fill="#bcc3e2" transform="rotate(38 1024.1 111.1)"/><rect x="1053.9" y="145.7" width="5.200" height="3.500" fill="#979ecb"/><rect x="1034.0" y="168.1" width="3.5" height="1.7" fill="#d3daf0" transform="rotate(38 1034.0 168.1)"/><rect x="1110.9" y="113.4" width="5.200" height="3.500" fill="#979ecb"/><rect x="1060.0" y="147.4" width="5.200" height="3.500" fill="#979ecb"/><rect x="1050.9" y="78.4" width="5.200" height="3.500" fill="#979ecb"/><rect x="1070.7" y="101.1" width="6.9" height="3.5" fill="#1f7050" transform="rotate(-40 1070.7 101.1)"/><rect x="1109.4" y="98.3" width="5.200" height="3.500" fill="#979ecb"/><rect x="1109.8" y="141.9" width="5.200" height="3.500" fill="#979ecb"/><rect x="1030.0" y="176.5" width="7" height="3.5" fill="#e4ecf8" transform="rotate(38 1030.0 176.5)"/><rect x="1059.8" y="133.5" width="5.200" height="3.500" fill="#979ecb"/><rect x="1106.5" y="151.9" width="5.200" height="3.500" fill="#979ecb"/><rect x="1091.5" y="155.8" width="5.200" height="3.500" fill="#979ecb"/><rect x="1054.8" y="89.7" width="5.200" height="3.500" fill="#979ecb"/><rect x="1100.9" y="123.3" width="5.2" height="1.7" fill="#1f7050" transform="rotate(-40 1100.9 123.3)"/><rect x="1065.1" y="63.4" width="8.7" height="1.7" fill="#c6cdea" transform="rotate(38 1065.1 63.4)"/><rect x="1029.9" y="111.1" width="5.2" height="3.5" fill="#e4ecf8" transform="rotate(38 1029.9 111.1)"/><rect x="1059.4" y="140.7" width="5.200" height="3.500" fill="#979ecb"/><rect x="1042.4" y="82.9" width="5.200" height="3.500" fill="#979ecb"/><rect x="1047.7" y="67.0" width="5.200" height="3.500" fill="#979ecb"/><rect x="1070.0" y="102.2" width="3.5" height="1.7" fill="#c6cdea" transform="rotate(38 1070.0 102.2)"/><rect x="1081.5" y="143.6" width="5.200" height="3.500" fill="#979ecb"/><rect x="1047.7" y="131.2" width="8.7" height="1.7" fill="#bcc3e2" transform="rotate(38 1047.7 131.2)"/><rect x="1093.5" y="162.0" width="5.2" height="1.7" fill="#d3daf0" transform="rotate(38 1093.5 162.0)"/><rect x="1098.3" y="61.7" width="5.200" height="3.500" fill="#979ecb"/><rect x="1078.8" y="96.0" width="5.2" height="1.7" fill="#d3daf0" transform="rotate(38 1078.8 96.0)"/><rect x="1030.4" y="145.9" width="5.200" height="3.500" fill="#979ecb"/><rect x="1075.0" y="127.8" width="5.200" height="3.500" fill="#979ecb"/><rect x="1037.0" y="171.5" width="5.2" height="1.7" fill="#d3daf0" transform="rotate(38 1037.0 171.5)"/><rect x="1102.7" y="110.9" width="3.5" height="1.7" fill="#1f7050" transform="rotate(-40 1102.7 110.9)"/><rect x="1087.2" y="144.2" width="3.5" height="1.7" fill="#bcc3e2" transform="rotate(38 1087.2 144.2)"/><rect x="1052.3" y="169.4" width="5.200" height="3.500" fill="#979ecb"/><rect x="1028.0" y="155.1" width="6.9" height="1.7" fill="#2d8c5a" transform="rotate(-40 1028.0 155.1)"/><rect x="1067.5" y="121.4" width="5.200" height="3.500" fill="#979ecb"/><rect x="1102.1" y="111.1" width="5.200" height="3.500" fill="#979ecb"/><rect x="1048.2" y="131.6" width="5.2" height="1.7" fill="#d3daf0" transform="rotate(38 1048.2 131.6)"/><rect x="1067.6" y="103.3" width="3.5" height="3.5" fill="#2d8c5a" transform="rotate(-40 1067.6 103.3)"/><rect x="1064.7" y="127.6" width="7" height="1.7" fill="#bcc3e2" transform="rotate(38 1064.7 127.6)"/><rect x="1076.2" y="167.1" width="5.200" height="3.500" fill="#979ecb"/><rect x="1028.1" y="153.7" width="5.200" height="3.500" fill="#979ecb"/><rect x="1052.1" y="104.0" width="5.200" height="3.500" fill="#979ecb"/><rect x="1104.9" y="106.0" width="5.200" height="3.500" fill="#979ecb"/><rect x="1090.8" y="76.3" width="5.200" height="3.500" fill="#979ecb"/><rect x="1025.3" y="75.4" width="5.200" height="3.500" fill="#979ecb"/><rect x="1029.0" y="103.5" width="8.7" height="3.5" fill="#c6cdea" transform="rotate(38 1029.0 103.5)"/><rect x="1103.7" y="62.3" width="3.5" height="3.5" fill="#2d8c5a" transform="rotate(-40 1103.7 62.3)"/><rect x="1092.7" y="109.9" width="6.9" height="1.7" fill="#1f7050" transform="rotate(-40 1092.7 109.9)"/><rect x="1089.5" y="140.4" width="5.200" height="3.500" fill="#979ecb"/><rect x="1082.3" y="104.8" width="5.200" height="3.500" fill="#979ecb"/><rect x="1109.3" y="135.0" width="6.9" height="1.7" fill="#2d8c5a" transform="rotate(-40 1109.3 135.0)"/><rect x="1054.8" y="130.6" width="5.200" height="3.500" fill="#979ecb"/><rect x="1070.0" y="65.3" width="8.7" height="3.5" fill="#d3daf0" transform="rotate(38 1070.0 65.3)"/><rect x="1086.6" y="122.4" width="5.200" height="3.500" fill="#979ecb"/><rect x="1030.2" y="90.1" width="5.200" height="3.500" fill="#979ecb"/><rect x="1109.6" y="66.7" width="3.5" height="1.7" fill="#2d8c5a" transform="rotate(-40 1109.6 66.7)"/><rect x="1104.8" y="160.5" width="5.200" height="3.500" fill="#979ecb"/><rect x="1028.6" y="68.9" width="5.200" height="3.500" fill="#979ecb"/><rect x="1065.3" y="102.4" width="5.200" height="3.500" fill="#979ecb"/><rect x="1027.5" y="121.8" width="5.2" height="1.7" fill="#bcc3e2" transform="rotate(38 1027.5 121.8)"/><rect x="1026.2" y="120.9" width="3.5" height="3.5" fill="#1f7050" transform="rotate(-40 1026.2 120.9)"/><rect x="1027.0" y="104.1" width="5.200" height="3.500" fill="#979ecb"/><rect x="1051.6" y="73.6" width="5.200" height="3.500" fill="#979ecb"/><rect x="1095.0" y="160.7" width="8.7" height="1.7" fill="#d3daf0" transform="rotate(38 1095.0 160.7)"/><rect x="1053.0" y="98.6" width="5.200" height="3.500" fill="#979ecb"/><rect x="1108.2" y="128.1" width="5.2" height="1.7" fill="#2a9460" transform="rotate(-40 1108.2 128.1)"/><rect x="1102.9" y="157.8" width="3.5" height="3.5" fill="#2d8c5a" transform="rotate(-40 1102.9 157.8)"/><rect x="1058.3" y="96.9" width="5.2" height="3.5" fill="#e4ecf8" transform="rotate(38 1058.3 96.9)"/><rect x="1027.8" y="155.8" width="5.200" height="3.500" fill="#979ecb"/><rect x="1051.6" y="93.8" width="7" height="3.5" fill="#e4ecf8" transform="rotate(38 1051.6 93.8)"/><rect x="1070.3" y="75.9" width="5.200" height="3.500" fill="#979ecb"/><rect x="1052.7" y="97.3" width="5.2" height="3.5" fill="#1f7050" transform="rotate(-40 1052.7 97.3)"/><rect x="1104.3" y="169.3" width="5.200" height="3.500" fill="#979ecb"/><rect x="1095.8" y="169.1" width="5.200" height="3.500" fill="#979ecb"/><rect x="1094.5" y="74.1" width="7" height="1.7" fill="#c6cdea" transform="rotate(38 1094.5 74.1)"/><rect x="1055.8" y="171.1" width="5.200" height="3.500" fill="#979ecb"/><rect x="1059.4" y="113.7" width="5.200" height="3.500" fill="#979ecb"/><rect x="1070.8" y="78.1" width="3.5" height="1.7" fill="#2a9460" transform="rotate(-40 1070.8 78.1)"/><rect x="1103.8" y="80.2" width="3.5" height="1.7" fill="#c6cdea" transform="rotate(38 1103.8 80.2)"/><rect x="1086.9" y="82.5" width="6.9" height="1.7" fill="#2a9460" transform="rotate(-40 1086.9 82.5)"/><rect x="1099.3" y="153.3" width="6.9" height="3.5" fill="#2d8c5a" transform="rotate(-40 1099.3 153.3)"/><rect x="1025.9" y="102.2" width="5.200" height="3.500" fill="#979ecb"/><rect x="1086.5" y="92.1" width="5.200" height="3.500" fill="#979ecb"/><rect x="1076.6" y="161.9" width="5.200" height="3.500" fill="#979ecb"/><rect x="1061.4" y="139.1" width="5.2" height="1.7" fill="#e4ecf8" transform="rotate(38 1061.4 139.1)"/><rect x="1095.6" y="177.8" width="3.5" height="3.5" fill="#2d8c5a" transform="rotate(-40 1095.6 177.8)"/><rect x="1069.3" y="116.4" width="8.7" height="1.7" fill="#c6cdea" transform="rotate(38 1069.3 116.4)"/><rect x="1098.9" y="113.0" width="6.9" height="1.7" fill="#1f7050" transform="rotate(-40 1098.9 113.0)"/><rect x="1071.6" y="156.6" width="7" height="3.5" fill="#c6cdea" transform="rotate(38 1071.6 156.6)"/><rect x="1070.3" y="123.0" width="5.200" height="3.500" fill="#979ecb"/><rect x="1107.9" y="107.0" width="5.200" height="3.500" fill="#979ecb"/><rect x="1051.1" y="94.2" width="5.2" height="3.5" fill="#d3daf0" transform="rotate(38 1051.1 94.2)"/><rect x="1046.2" y="59.2" width="3.5" height="1.7" fill="#bcc3e2" transform="rotate(38 1046.2 59.2)"/><rect x="1059.4" y="170.4" width="5.200" height="3.500" fill="#979ecb"/><rect x="1082.9" y="165.8" width="5.200" height="3.500" fill="#979ecb"/><rect x="1098.5" y="104.0" width="7" height="3.5" fill="#bcc3e2" transform="rotate(38 1098.5 104.0)"/><rect x="1091.6" y="104.6" width="5.200" height="3.500" fill="#979ecb"/><rect x="1066.6" y="75.4" width="5.2" height="3.5" fill="#2d8c5a" transform="rotate(-40 1066.6 75.4)"/><rect x="1099.5" y="128.7" width="5.2" height="3.5" fill="#1f7050" transform="rotate(-40 1099.5 128.7)"/><rect x="1089.1" y="141.0" width="8.7" height="1.7" fill="#bcc3e2" transform="rotate(38 1089.1 141.0)"/><rect x="1107.5" y="106.2" width="3.5" height="1.7" fill="#d3daf0" transform="rotate(38 1107.5 106.2)"/><rect x="1109.1" y="85.5" width="3.5" height="3.5" fill="#1f7050" transform="rotate(-40 1109.1 85.5)"/><rect x="1092.2" y="69.9" width="5.200" height="3.500" fill="#979ecb"/><rect x="1040.5" y="58.4" width="3.5" height="3.5" fill="#d3daf0" transform="rotate(38 1040.5 58.4)"/><rect x="1071.0" y="99.6" width="5.200" height="3.500" fill="#979ecb"/><rect x="1109.3" y="70.4" width="5.200" height="3.500" fill="#979ecb"/><rect x="1060.9" y="138.6" width="6.9" height="3.5" fill="#1f7050" transform="rotate(-40 1060.9 138.6)"/><rect x="1039.8" y="154.6" width="5.200" height="3.500" fill="#979ecb"/><rect x="1028.2" y="83.7" width="5.200" height="3.500" fill="#979ecb"/><rect x="1100.2" y="72.9" width="8.7" height="1.7" fill="#e4ecf8" transform="rotate(38 1100.2 72.9)"/><rect x="1077.3" y="115.5" width="6.9" height="1.7" fill="#2a9460" transform="rotate(-40 1077.3 115.5)"/><rect x="1038.7" y="88.9" width="5.200" height="3.500" fill="#979ecb"/><rect x="1106.3" y="122.4" width="5.200" height="3.500" fill="#979ecb"/><rect x="1079.8" y="155.2" width="5.200" height="3.500" fill="#979ecb"/><rect x="1093.4" y="132.8" width="5.200" height="3.500" fill="#979ecb"/><rect x="1033.1" y="148.9" width="5.200" height="3.500" fill="#979ecb"/><rect x="1054.5" y="164.2" width="5.200" height="3.500" fill="#979ecb"/><rect x="1029.0" y="133.1" width="3.5" height="1.7" fill="#c6cdea" transform="rotate(38 1029.0 133.1)"/><rect x="1047.8" y="87.6" width="7" height="1.7" fill="#bcc3e2" transform="rotate(38 1047.8 87.6)"/><rect x="1073.4" y="129.8" width="5.200" height="3.500" fill="#979ecb"/><rect x="1070.9" y="131.1" width="5.2" height="3.5" fill="#1f7050" transform="rotate(-40 1070.9 131.1)"/><rect x="1066.3" y="94.7" width="8.7" height="1.7" fill="#bcc3e2" transform="rotate(38 1066.3 94.7)"/><rect x="1045.3" y="79.1" width="5.200" height="3.500" fill="#979ecb"/><rect x="1089.1" y="127.7" width="5.2" height="1.7" fill="#c6cdea" transform="rotate(38 1089.1 127.7)"/><rect x="1070.5" y="74.2" width="5.200" height="3.500" fill="#979ecb"/><rect x="1111.0" y="83.6" width="5.200" height="3.500" fill="#979ecb"/><rect x="1066.3" y="72.2" width="5.200" height="3.500" fill="#979ecb"/><rect x="1085.5" y="85.0" width="5.200" height="3.500" fill="#979ecb"/><rect x="1097.0" y="64.0" width="3.5" height="1.7" fill="#2d8c5a" transform="rotate(-40 1097.0 64.0)"/><rect x="1068.3" y="137.2" width="7" height="1.7" fill="#e4ecf8" transform="rotate(38 1068.3 137.2)"/><rect x="1096.3" y="156.7" width="3.5" height="3.5" fill="#2a9460" transform="rotate(-40 1096.3 156.7)"/><rect x="1083.9" y="176.2" width="8.7" height="1.7" fill="#e4ecf8" transform="rotate(38 1083.9 176.2)"/><rect x="1053.0" y="74.7" width="5.2" height="3.5" fill="#e4ecf8" transform="rotate(38 1053.0 74.7)"/><rect x="1054.5" y="69.0" width="5.200" height="3.500" fill="#979ecb"/><rect x="1050.4" y="87.9" width="7" height="1.7" fill="#e4ecf8" transform="rotate(38 1050.4 87.9)"/><rect x="1036.2" y="105.9" width="5.200" height="3.500" fill="#979ecb"/><rect x="1080.2" y="87.0" width="5.200" height="3.500" fill="#979ecb"/><rect x="1048.1" y="119.8" width="3.5" height="1.7" fill="#d3daf0" transform="rotate(38 1048.1 119.8)"/><rect x="1077.3" y="162.4" width="8.7" height="3.5" fill="#bcc3e2" transform="rotate(38 1077.3 162.4)"/><rect x="1071.1" y="105.3" width="5.200" height="3.500" fill="#979ecb"/><rect x="1079.7" y="123.9" width="3.5" height="1.7" fill="#2a9460" transform="rotate(-40 1079.7 123.9)"/><rect x="1045.2" y="165.7" width="3.5" height="1.7" fill="#c6cdea" transform="rotate(38 1045.2 165.7)"/><rect x="1107.1" y="89.4" width="3.5" height="3.5" fill="#2a9460" transform="rotate(-40 1107.1 89.4)"/><rect x="1030.1" y="175.3" width="3.5" height="3.5" fill="#c6cdea" transform="rotate(38 1030.1 175.3)"/><rect x="1063.2" y="73.9" width="3.5" height="1.7" fill="#2a9460" transform="rotate(-40 1063.2 73.9)"/><rect x="1066.6" y="154.1" width="5.200" height="3.500" fill="#979ecb"/><rect x="1056.1" y="93.1" width="8.7" height="1.7" fill="#bcc3e2" transform="rotate(38 1056.1 93.1)"/><rect x="1034.4" y="130.1" width="3.5" height="3.5" fill="#e4ecf8" transform="rotate(38 1034.4 130.1)"/><rect x="1104.9" y="135.2" width="3.5" height="1.7" fill="#e4ecf8" transform="rotate(38 1104.9 135.2)"/><rect x="1092.6" y="129.8" width="7" height="1.7" fill="#bcc3e2" transform="rotate(38 1092.6 129.8)"/><rect x="1077.3" y="64.4" width="3.5" height="3.5" fill="#e4ecf8" transform="rotate(38 1077.3 64.4)"/><rect x="1095.5" y="157.8" width="5.200" height="3.500" fill="#979ecb"/><rect x="1070.7" y="149.6" width="5.200" height="3.500" fill="#979ecb"/><rect x="1092.9" y="126.2" width="5.200" height="3.500" fill="#979ecb"/><rect x="1055.4" y="114.9" width="5.200" height="3.500" fill="#979ecb"/><rect x="1105.6" y="132.6" width="3.5" height="1.7" fill="#1f7050" transform="rotate(-40 1105.6 132.6)"/><rect x="1092.4" y="168.0" width="7" height="1.7" fill="#e4ecf8" transform="rotate(38 1092.4 168.0)"/><rect x="1078.3" y="107.8" width="7" height="1.7" fill="#d3daf0" transform="rotate(38 1078.3 107.8)"/><rect x="1079.9" y="120.3" width="3.5" height="1.7" fill="#2a9460" transform="rotate(-40 1079.9 120.3)"/><rect x="1071.8" y="133.1" width="5.200" height="3.500" fill="#979ecb"/><rect x="1090.7" y="72.6" width="5.200" height="3.500" fill="#979ecb"/><rect x="1066.3" y="83.1" width="5.200" height="3.500" fill="#979ecb"/><rect x="1107.9" y="105.7" width="5.2" height="3.5" fill="#2d8c5a" transform="rotate(-40 1107.9 105.7)"/><rect x="1081.8" y="152.1" width="8.7" height="1.7" fill="#bcc3e2" transform="rotate(38 1081.8 152.1)"/><rect x="1081.3" y="137.6" width="5.200" height="3.500" fill="#979ecb"/><rect x="1062.0" y="105.9" width="5.2" height="1.7" fill="#1f7050" transform="rotate(-40 1062.0 105.9)"/><rect x="1037.2" y="103.1" width="3.5" height="3.5" fill="#e4ecf8" transform="rotate(38 1037.2 103.1)"/><rect x="1106.8" y="113.1" width="7" height="1.7" fill="#d3daf0" transform="rotate(38 1106.8 113.1)"/><rect x="1109.5" y="157.1" width="5.200" height="3.500" fill="#979ecb"/><rect x="1025.7" y="105.6" width="5.200" height="3.500" fill="#979ecb"/></g><rect x="1094.4" y="174.4" width="6.900" height="3.500" fill="#1f7050" transform="rotate(-40 1097.4 174.4)"/><rect x="1092.4" y="173.2" width="6.900" height="3.500" fill="#2d8c5a" transform="rotate(-40 1095.4 173.2)"/><rect x="1108.9" y="162.1" width="6.900" height="3.500" fill="#1f7050" transform="rotate(-40 1111.9 162.1)"/><rect x="1108.8" y="162.2" width="6.900" height="3.500" fill="#1f7050" transform="rotate(-40 1111.8 162.2)"/><rect x="1103.7" y="154.1" width="6.900" height="3.500" fill="#2d8c5a" transform="rotate(-40 1106.7 154.1)"/><rect x="1103.7" y="154.1" width="6.900" height="3.500" fill="#1f7050" transform="rotate(-40 1106.7 154.1)"/><rect x="1107.2" y="139.1" width="6.900" height="3.500" fill="#1f7050" transform="rotate(-40 1110.2 139.1)"/><rect x="1102.4" y="147.5" width="6.900" height="3.500" fill="#1f7050" transform="rotate(-40 1105.4 147.5)"/><rect x="1102.8" y="128.8" width="6.900" height="3.500" fill="#2d8c5a" transform="rotate(-40 1105.8 128.8)"/><rect x="1106.2" y="132.7" width="6.900" height="3.500" fill="#1f7050" transform="rotate(-40 1109.2 132.7)"/><rect x="1102.6" y="107.0" width="6.900" height="3.500" fill="#1f7050" transform="rotate(-40 1105.6 107.0)"/><rect x="1101.2" y="110.8" width="6.900" height="3.500" fill="#1f7050" transform="rotate(-40 1104.2 110.8)"/><rect x="1100.0" y="102.5" width="6.900" height="3.500" fill="#2d8c5a" transform="rotate(-40 1103.0 102.5)"/><rect x="1101.6" y="104.3" width="6.900" height="3.500" fill="#1f7050" transform="rotate(-40 1104.6 104.3)"/><rect x="1091.8" y="78.8" width="6.900" height="3.500" fill="#1f7050" transform="rotate(-40 1094.8 78.8)"/><rect x="1092.3" y="70.2" width="6.900" height="3.500" fill="#2d8c5a" transform="rotate(-40 1095.3 70.2)"/><clipPath id="tc3"><polygon points="1204.0,58.0 1196.0,96.0 1202.0,106.0 1188.0,128.0 1194.0,138.0 1178.0,158.0 1188.0,166.0 1182.0,180.0 1200.0,176.0 1216.0,186.0 1246.0,182.0 1262.0,186.0 1268.0,172.0 1258.0,154.0 1266.0,138.0 1254.0,118.0 1260.0,100.0 1248.0,86.0 1250.0,58.0"/></clipPath><polygon points="1204.0,58.0 1196.0,96.0 1202.0,106.0 1188.0,128.0 1194.0,138.0 1178.0,158.0 1188.0,166.0 1182.0,180.0 1200.0,176.0 1216.0,186.0 1246.0,182.0 1262.0,186.0 1268.0,172.0 1258.0,154.0 1266.0,138.0 1254.0,118.0 1260.0,100.0 1248.0,86.0 1250.0,58.0" fill="#adb5d8"/><g clip-path="url(#tc3)"><polygon points="1178,76 1223,58 1268,80 1268,88 1223,66 1178,84" fill="#9aa2cc" opacity=".5"/><polygon points="1178,94 1223,76 1268,98 1268,106 1223,84 1178,102" fill="#9aa2cc" opacity=".5"/><polygon points="1178,113 1223,95 1268,117 1268,125 1223,103 1178,121" fill="#9aa2cc" opacity=".5"/><polygon points="1178,131 1223,113 1268,135 1268,143 1223,121 1178,139" fill="#9aa2cc" opacity=".5"/><polygon points="1178,149 1223,131 1268,153 1268,161 1223,139 1178,157" fill="#9aa2cc" opacity=".5"/><polygon points="1178,167 1223,149 1268,171 1268,179 1223,157 1178,175" fill="#9aa2cc" opacity=".5"/><polygon points="1178,186 1223,168 1268,190 1268,198 1223,176 1178,194" fill="#9aa2cc" opacity=".5"/><rect x="1199.4" y="127.7" width="8.7" height="3.5" fill="#e4ecf8" transform="rotate(38 1199.4 127.7)"/><rect x="1232.5" y="174.3" width="5.2" height="1.7" fill="#bcc3e2" transform="rotate(38 1232.5 174.3)"/><rect x="1226.7" y="128.4" width="5.2" height="1.7" fill="#d3daf0" transform="rotate(38 1226.7 128.4)"/><rect x="1256.1" y="125.0" width="5.200" height="3.500" fill="#979ecb"/><rect x="1238.4" y="66.2" width="5.200" height="3.500" fill="#979ecb"/><rect x="1231.2" y="96.6" width="5.2" height="3.5" fill="#1f7050" transform="rotate(-40 1231.2 96.6)"/><rect x="1242.3" y="175.9" width="8.7" height="1.7" fill="#c6cdea" transform="rotate(38 1242.3 175.9)"/><rect x="1186.8" y="75.4" width="8.7" height="3.5" fill="#c6cdea" transform="rotate(38 1186.8 75.4)"/><rect x="1215.9" y="164.7" width="5.200" height="3.500" fill="#979ecb"/><rect x="1226.1" y="110.2" width="7" height="3.5" fill="#e4ecf8" transform="rotate(38 1226.1 110.2)"/><rect x="1255.1" y="184.8" width="5.200" height="3.500" fill="#979ecb"/><rect x="1192.7" y="168.2" width="5.200" height="3.500" fill="#979ecb"/><rect x="1259.4" y="130.8" width="5.200" height="3.500" fill="#979ecb"/><rect x="1197.0" y="164.4" width="5.200" height="3.500" fill="#979ecb"/><rect x="1203.6" y="66.1" width="5.200" height="3.500" fill="#979ecb"/><rect x="1267.1" y="69.3" width="5.200" height="3.500" fill="#979ecb"/><rect x="1214.9" y="77.3" width="8.7" height="1.7" fill="#e4ecf8" transform="rotate(38 1214.9 77.3)"/><rect x="1232.4" y="155.5" width="7" height="3.5" fill="#c6cdea" transform="rotate(38 1232.4 155.5)"/><rect x="1223.5" y="185.8" width="3.5" height="1.7" fill="#e4ecf8" transform="rotate(38 1223.5 185.8)"/><rect x="1263.4" y="182.3" width="3.5" height="1.7" fill="#1f7050" transform="rotate(-40 1263.4 182.3)"/><rect x="1266.2" y="101.5" width="5.2" height="3.5" fill="#2d8c5a" transform="rotate(-40 1266.2 101.5)"/><rect x="1219.4" y="124.6" width="5.200" height="3.500" fill="#979ecb"/><rect x="1231.6" y="129.6" width="5.200" height="3.500" fill="#979ecb"/><rect x="1262.7" y="122.9" width="5.2" height="1.7" fill="#bcc3e2" transform="rotate(38 1262.7 122.9)"/><rect x="1266.0" y="124.7" width="3.5" height="1.7" fill="#c6cdea" transform="rotate(38 1266.0 124.7)"/><rect x="1179.8" y="136.8" width="5.200" height="3.500" fill="#979ecb"/><rect x="1183.4" y="138.3" width="7" height="3.5" fill="#c6cdea" transform="rotate(38 1183.4 138.3)"/><rect x="1244.4" y="60.8" width="3.5" height="3.5" fill="#2a9460" transform="rotate(-40 1244.4 60.8)"/><rect x="1200.6" y="116.4" width="5.200" height="3.500" fill="#979ecb"/><rect x="1206.8" y="104.6" width="7" height="3.5" fill="#c6cdea" transform="rotate(38 1206.8 104.6)"/><rect x="1205.0" y="106.3" width="5.200" height="3.500" fill="#979ecb"/><rect x="1180.4" y="130.9" width="5.200" height="3.500" fill="#979ecb"/><rect x="1205.9" y="86.5" width="5.200" height="3.500" fill="#979ecb"/><rect x="1199.5" y="82.0" width="3.5" height="1.7" fill="#c6cdea" transform="rotate(38 1199.5 82.0)"/><rect x="1263.4" y="144.4" width="3.5" height="3.5" fill="#2d8c5a" transform="rotate(-40 1263.4 144.4)"/><rect x="1244.8" y="85.9" width="5.200" height="3.500" fill="#979ecb"/><rect x="1202.4" y="158.7" width="5.2" height="1.7" fill="#2d8c5a" transform="rotate(-40 1202.4 158.7)"/><rect x="1255.7" y="101.5" width="5.200" height="3.500" fill="#979ecb"/><rect x="1185.7" y="137.3" width="5.200" height="3.500" fill="#979ecb"/><rect x="1215.9" y="124.4" width="5.200" height="3.500" fill="#979ecb"/><rect x="1219.8" y="139.2" width="8.7" height="1.7" fill="#bcc3e2" transform="rotate(38 1219.8 139.2)"/><rect x="1192.0" y="58.6" width="5.200" height="3.500" fill="#979ecb"/><rect x="1257.2" y="184.3" width="5.2" height="1.7" fill="#bcc3e2" transform="rotate(38 1257.2 184.3)"/><rect x="1253.3" y="142.9" width="7" height="3.5" fill="#c6cdea" transform="rotate(38 1253.3 142.9)"/><rect x="1258.1" y="168.3" width="5.200" height="3.500" fill="#979ecb"/><rect x="1265.4" y="73.4" width="6.9" height="1.7" fill="#2d8c5a" transform="rotate(-40 1265.4 73.4)"/><rect x="1258.7" y="173.2" width="5.200" height="3.500" fill="#979ecb"/><rect x="1179.2" y="153.4" width="7" height="1.7" fill="#e4ecf8" transform="rotate(38 1179.2 153.4)"/><rect x="1225.2" y="111.0" width="5.200" height="3.500" fill="#979ecb"/><rect x="1233.1" y="101.7" width="8.7" height="1.7" fill="#c6cdea" transform="rotate(38 1233.1 101.7)"/><rect x="1197.9" y="73.6" width="5.200" height="3.500" fill="#979ecb"/><rect x="1188.7" y="88.7" width="5.2" height="1.7" fill="#bcc3e2" transform="rotate(38 1188.7 88.7)"/><rect x="1234.6" y="168.4" width="3.5" height="3.5" fill="#1f7050" transform="rotate(-40 1234.6 168.4)"/><rect x="1233.6" y="124.5" width="3.5" height="1.7" fill="#1f7050" transform="rotate(-40 1233.6 124.5)"/><rect x="1247.8" y="63.9" width="3.5" height="1.7" fill="#1f7050" transform="rotate(-40 1247.8 63.9)"/><rect x="1224.4" y="120.7" width="5.2" height="3.5" fill="#2d8c5a" transform="rotate(-40 1224.4 120.7)"/><rect x="1236.2" y="133.1" width="5.2" height="1.7" fill="#bcc3e2" transform="rotate(38 1236.2 133.1)"/><rect x="1189.1" y="129.1" width="5.200" height="3.500" fill="#979ecb"/><rect x="1212.2" y="68.2" width="7" height="1.7" fill="#bcc3e2" transform="rotate(38 1212.2 68.2)"/><rect x="1235.3" y="63.6" width="5.200" height="3.500" fill="#979ecb"/><rect x="1182.8" y="138.3" width="5.200" height="3.500" fill="#979ecb"/><rect x="1206.3" y="179.6" width="3.5" height="1.7" fill="#d3daf0" transform="rotate(38 1206.3 179.6)"/><rect x="1226.2" y="147.0" width="3.5" height="3.5" fill="#1f7050" transform="rotate(-40 1226.2 147.0)"/><rect x="1189.7" y="61.6" width="7" height="1.7" fill="#bcc3e2" transform="rotate(38 1189.7 61.6)"/><rect x="1240.1" y="178.2" width="5.200" height="3.500" fill="#979ecb"/><rect x="1254.5" y="125.9" width="3.5" height="3.5" fill="#c6cdea" transform="rotate(38 1254.5 125.9)"/><rect x="1228.7" y="71.2" width="5.200" height="3.500" fill="#979ecb"/><rect x="1178.4" y="76.4" width="5.200" height="3.500" fill="#979ecb"/><rect x="1182.0" y="69.8" width="3.5" height="1.7" fill="#1f7050" transform="rotate(-40 1182.0 69.8)"/><rect x="1208.7" y="167.1" width="6.9" height="3.5" fill="#2d8c5a" transform="rotate(-40 1208.7 167.1)"/><rect x="1253.3" y="179.9" width="5.200" height="3.500" fill="#979ecb"/><rect x="1249.9" y="62.6" width="5.200" height="3.500" fill="#979ecb"/><rect x="1224.0" y="149.5" width="3.5" height="1.7" fill="#2a9460" transform="rotate(-40 1224.0 149.5)"/><rect x="1227.5" y="169.3" width="3.5" height="1.7" fill="#2d8c5a" transform="rotate(-40 1227.5 169.3)"/><rect x="1236.1" y="116.1" width="5.200" height="3.500" fill="#979ecb"/><rect x="1262.8" y="90.4" width="5.200" height="3.500" fill="#979ecb"/><rect x="1262.5" y="129.2" width="5.200" height="3.500" fill="#979ecb"/><rect x="1211.8" y="88.1" width="5.200" height="3.500" fill="#979ecb"/><rect x="1253.9" y="181.8" width="8.7" height="1.7" fill="#bcc3e2" transform="rotate(38 1253.9 181.8)"/><rect x="1258.8" y="77.1" width="5.2" height="3.5" fill="#2a9460" transform="rotate(-40 1258.8 77.1)"/><rect x="1230.8" y="167.8" width="3.5" height="3.5" fill="#2d8c5a" transform="rotate(-40 1230.8 167.8)"/><rect x="1262.1" y="167.0" width="7" height="3.5" fill="#bcc3e2" transform="rotate(38 1262.1 167.0)"/><rect x="1231.6" y="132.8" width="5.200" height="3.500" fill="#979ecb"/><rect x="1258.0" y="97.3" width="3.5" height="1.7" fill="#1f7050" transform="rotate(-40 1258.0 97.3)"/><rect x="1229.3" y="88.6" width="5.2" height="1.7" fill="#bcc3e2" transform="rotate(38 1229.3 88.6)"/><rect x="1241.1" y="84.3" width="5.200" height="3.500" fill="#979ecb"/><rect x="1259.2" y="141.5" width="3.5" height="3.5" fill="#2a9460" transform="rotate(-40 1259.2 141.5)"/><rect x="1248.5" y="170.9" width="3.5" height="1.7" fill="#2d8c5a" transform="rotate(-40 1248.5 170.9)"/><rect x="1264.3" y="167.3" width="5.2" height="1.7" fill="#2d8c5a" transform="rotate(-40 1264.3 167.3)"/><rect x="1194.8" y="148.2" width="5.200" height="3.500" fill="#979ecb"/><rect x="1259.0" y="90.6" width="5.200" height="3.500" fill="#979ecb"/><rect x="1206.2" y="112.2" width="5.200" height="3.500" fill="#979ecb"/><rect x="1185.7" y="69.9" width="5.200" height="3.500" fill="#979ecb"/><rect x="1204.3" y="103.7" width="5.200" height="3.500" fill="#979ecb"/><rect x="1238.8" y="58.9" width="8.7" height="1.7" fill="#bcc3e2" transform="rotate(38 1238.8 58.9)"/><rect x="1185.0" y="140.5" width="5.200" height="3.500" fill="#979ecb"/><rect x="1222.1" y="74.1" width="7" height="1.7" fill="#bcc3e2" transform="rotate(38 1222.1 74.1)"/><rect x="1188.1" y="171.6" width="5.200" height="3.500" fill="#979ecb"/><rect x="1186.7" y="178.5" width="7" height="1.7" fill="#c6cdea" transform="rotate(38 1186.7 178.5)"/><rect x="1237.7" y="143.8" width="5.200" height="3.500" fill="#979ecb"/><rect x="1251.6" y="71.7" width="5.200" height="3.500" fill="#979ecb"/><rect x="1208.5" y="130.5" width="8.7" height="3.5" fill="#c6cdea" transform="rotate(38 1208.5 130.5)"/><rect x="1183.4" y="95.7" width="5.200" height="3.500" fill="#979ecb"/><rect x="1244.8" y="140.7" width="5.200" height="3.500" fill="#979ecb"/><rect x="1191.5" y="105.5" width="5.200" height="3.500" fill="#979ecb"/><rect x="1218.9" y="71.9" width="5.200" height="3.500" fill="#979ecb"/><rect x="1260.9" y="140.6" width="5.200" height="3.500" fill="#979ecb"/><rect x="1215.8" y="96.5" width="8.7" height="1.7" fill="#d3daf0" transform="rotate(38 1215.8 96.5)"/><rect x="1241.5" y="71.7" width="6.9" height="3.5" fill="#2a9460" transform="rotate(-40 1241.5 71.7)"/><rect x="1210.3" y="92.0" width="5.2" height="1.7" fill="#bcc3e2" transform="rotate(38 1210.3 92.0)"/><rect x="1223.4" y="89.6" width="5.200" height="3.500" fill="#979ecb"/><rect x="1209.9" y="100.6" width="3.5" height="1.7" fill="#bcc3e2" transform="rotate(38 1209.9 100.6)"/><rect x="1254.2" y="72.4" width="6.9" height="1.7" fill="#2d8c5a" transform="rotate(-40 1254.2 72.4)"/><rect x="1228.8" y="174.5" width="3.5" height="3.5" fill="#2a9460" transform="rotate(-40 1228.8 174.5)"/><rect x="1238.3" y="108.1" width="5.200" height="3.500" fill="#979ecb"/><rect x="1189.6" y="135.8" width="5.200" height="3.500" fill="#979ecb"/><rect x="1249.8" y="127.7" width="3.5" height="3.5" fill="#2d8c5a" transform="rotate(-40 1249.8 127.7)"/><rect x="1211.3" y="95.5" width="5.200" height="3.500" fill="#979ecb"/><rect x="1218.0" y="110.1" width="5.200" height="3.500" fill="#979ecb"/><rect x="1206.4" y="174.0" width="8.7" height="3.5" fill="#c6cdea" transform="rotate(38 1206.4 174.0)"/><rect x="1258.6" y="143.5" width="6.9" height="1.7" fill="#2d8c5a" transform="rotate(-40 1258.6 143.5)"/><rect x="1187.7" y="154.8" width="5.2" height="3.5" fill="#bcc3e2" transform="rotate(38 1187.7 154.8)"/><rect x="1195.9" y="158.1" width="8.7" height="1.7" fill="#c6cdea" transform="rotate(38 1195.9 158.1)"/><rect x="1264.3" y="172.2" width="6.9" height="1.7" fill="#2d8c5a" transform="rotate(-40 1264.3 172.2)"/><rect x="1180.3" y="137.1" width="8.7" height="3.5" fill="#e4ecf8" transform="rotate(38 1180.3 137.1)"/><rect x="1261.7" y="99.4" width="5.200" height="3.500" fill="#979ecb"/><rect x="1240.5" y="75.2" width="5.200" height="3.500" fill="#979ecb"/><rect x="1232.1" y="176.7" width="5.200" height="3.500" fill="#979ecb"/><rect x="1244.6" y="102.0" width="5.200" height="3.500" fill="#979ecb"/><rect x="1261.9" y="168.3" width="5.2" height="1.7" fill="#c6cdea" transform="rotate(38 1261.9 168.3)"/><rect x="1187.8" y="63.5" width="6.9" height="1.7" fill="#2d8c5a" transform="rotate(-40 1187.8 63.5)"/><rect x="1213.2" y="118.6" width="3.5" height="3.5" fill="#1f7050" transform="rotate(-40 1213.2 118.6)"/><rect x="1205.4" y="117.4" width="5.200" height="3.500" fill="#979ecb"/><rect x="1214.1" y="81.1" width="5.200" height="3.500" fill="#979ecb"/><rect x="1242.8" y="105.0" width="7" height="3.5" fill="#bcc3e2" transform="rotate(38 1242.8 105.0)"/><rect x="1198.1" y="58.3" width="7" height="1.7" fill="#bcc3e2" transform="rotate(38 1198.1 58.3)"/><rect x="1226.0" y="78.4" width="5.2" height="1.7" fill="#2a9460" transform="rotate(-40 1226.0 78.4)"/><rect x="1235.3" y="75.8" width="5.200" height="3.500" fill="#979ecb"/><rect x="1217.8" y="81.7" width="5.200" height="3.500" fill="#979ecb"/><rect x="1214.3" y="98.7" width="3.5" height="1.7" fill="#2a9460" transform="rotate(-40 1214.3 98.7)"/><rect x="1214.3" y="108.8" width="3.5" height="1.7" fill="#2d8c5a" transform="rotate(-40 1214.3 108.8)"/><rect x="1213.0" y="82.4" width="3.5" height="1.7" fill="#e4ecf8" transform="rotate(38 1213.0 82.4)"/><rect x="1231.5" y="161.4" width="8.7" height="1.7" fill="#bcc3e2" transform="rotate(38 1231.5 161.4)"/><rect x="1200.5" y="92.0" width="5.200" height="3.500" fill="#979ecb"/><rect x="1234.6" y="102.1" width="5.2" height="1.7" fill="#2a9460" transform="rotate(-40 1234.6 102.1)"/><rect x="1231.3" y="58.5" width="3.5" height="1.7" fill="#2d8c5a" transform="rotate(-40 1231.3 58.5)"/><rect x="1223.3" y="119.7" width="7" height="1.7" fill="#bcc3e2" transform="rotate(38 1223.3 119.7)"/><rect x="1208.6" y="119.3" width="3.5" height="1.7" fill="#c6cdea" transform="rotate(38 1208.6 119.3)"/><rect x="1245.6" y="138.8" width="7" height="1.7" fill="#bcc3e2" transform="rotate(38 1245.6 138.8)"/><rect x="1188.3" y="107.9" width="8.7" height="1.7" fill="#bcc3e2" transform="rotate(38 1188.3 107.9)"/><rect x="1253.2" y="128.8" width="5.200" height="3.500" fill="#979ecb"/><rect x="1210.7" y="111.1" width="8.7" height="1.7" fill="#c6cdea" transform="rotate(38 1210.7 111.1)"/><rect x="1251.9" y="122.9" width="5.200" height="3.500" fill="#979ecb"/><rect x="1260.4" y="147.2" width="5.200" height="3.500" fill="#979ecb"/><rect x="1181.8" y="80.0" width="5.200" height="3.500" fill="#979ecb"/><rect x="1252.1" y="69.8" width="5.200" height="3.500" fill="#979ecb"/><rect x="1237.5" y="99.0" width="5.200" height="3.500" fill="#979ecb"/><rect x="1250.1" y="65.2" width="5.200" height="3.500" fill="#979ecb"/><rect x="1182.3" y="117.7" width="5.200" height="3.500" fill="#979ecb"/><rect x="1236.2" y="185.6" width="5.2" height="1.7" fill="#2d8c5a" transform="rotate(-40 1236.2 185.6)"/><rect x="1208.5" y="97.8" width="5.2" height="1.7" fill="#e4ecf8" transform="rotate(38 1208.5 97.8)"/><rect x="1266.0" y="177.7" width="3.5" height="1.7" fill="#2d8c5a" transform="rotate(-40 1266.0 177.7)"/><rect x="1203.9" y="84.7" width="5.200" height="3.500" fill="#979ecb"/><rect x="1224.4" y="122.6" width="5.200" height="3.500" fill="#979ecb"/><rect x="1206.7" y="171.0" width="5.200" height="3.500" fill="#979ecb"/><rect x="1220.1" y="137.7" width="6.9" height="1.7" fill="#2d8c5a" transform="rotate(-40 1220.1 137.7)"/><rect x="1255.3" y="71.0" width="5.200" height="3.500" fill="#979ecb"/><rect x="1201.0" y="72.0" width="3.5" height="3.5" fill="#bcc3e2" transform="rotate(38 1201.0 72.0)"/><rect x="1246.5" y="169.6" width="8.7" height="1.7" fill="#c6cdea" transform="rotate(38 1246.5 169.6)"/><rect x="1253.2" y="134.1" width="5.200" height="3.500" fill="#979ecb"/><rect x="1196.5" y="127.0" width="3.5" height="1.7" fill="#c6cdea" transform="rotate(38 1196.5 127.0)"/><rect x="1195.3" y="154.5" width="5.200" height="3.500" fill="#979ecb"/><rect x="1239.8" y="104.7" width="5.200" height="3.500" fill="#979ecb"/><rect x="1184.0" y="124.4" width="3.5" height="1.7" fill="#d3daf0" transform="rotate(38 1184.0 124.4)"/><rect x="1216.8" y="68.8" width="5.2" height="3.5" fill="#d3daf0" transform="rotate(38 1216.8 68.8)"/><rect x="1243.4" y="170.0" width="5.200" height="3.500" fill="#979ecb"/><rect x="1233.1" y="177.2" width="8.7" height="1.7" fill="#d3daf0" transform="rotate(38 1233.1 177.2)"/><rect x="1259.3" y="179.5" width="8.7" height="1.7" fill="#e4ecf8" transform="rotate(38 1259.3 179.5)"/><rect x="1204.3" y="177.6" width="3.5" height="1.7" fill="#d3daf0" transform="rotate(38 1204.3 177.6)"/><rect x="1204.5" y="124.5" width="5.200" height="3.500" fill="#979ecb"/><rect x="1181.7" y="153.4" width="8.7" height="1.7" fill="#c6cdea" transform="rotate(38 1181.7 153.4)"/><rect x="1220.1" y="83.2" width="5.200" height="3.500" fill="#979ecb"/><rect x="1190.9" y="114.8" width="5.200" height="3.500" fill="#979ecb"/><rect x="1217.9" y="84.3" width="7" height="1.7" fill="#c6cdea" transform="rotate(38 1217.9 84.3)"/><rect x="1262.9" y="113.2" width="5.200" height="3.500" fill="#979ecb"/><rect x="1220.7" y="185.8" width="7" height="1.7" fill="#e4ecf8" transform="rotate(38 1220.7 185.8)"/><rect x="1219.7" y="171.5" width="5.200" height="3.500" fill="#979ecb"/><rect x="1204.8" y="89.1" width="5.200" height="3.500" fill="#979ecb"/><rect x="1178.9" y="74.8" width="3.5" height="1.7" fill="#e4ecf8" transform="rotate(38 1178.9 74.8)"/><rect x="1178.2" y="183.9" width="5.200" height="3.500" fill="#979ecb"/><rect x="1209.9" y="181.6" width="3.5" height="1.7" fill="#d3daf0" transform="rotate(38 1209.9 181.6)"/><rect x="1199.5" y="93.4" width="5.200" height="3.500" fill="#979ecb"/><rect x="1253.2" y="135.2" width="5.200" height="3.500" fill="#979ecb"/><rect x="1218.5" y="91.5" width="5.200" height="3.500" fill="#979ecb"/><rect x="1222.9" y="150.5" width="3.5" height="1.7" fill="#e4ecf8" transform="rotate(38 1222.9 150.5)"/><rect x="1234.5" y="144.4" width="5.200" height="3.500" fill="#979ecb"/><rect x="1250.8" y="89.7" width="6.9" height="3.5" fill="#1f7050" transform="rotate(-40 1250.8 89.7)"/><rect x="1227.7" y="93.8" width="5.2" height="1.7" fill="#2d8c5a" transform="rotate(-40 1227.7 93.8)"/><rect x="1258.7" y="174.0" width="8.7" height="1.7" fill="#d3daf0" transform="rotate(38 1258.7 174.0)"/><rect x="1204.4" y="67.4" width="3.5" height="1.7" fill="#c6cdea" transform="rotate(38 1204.4 67.4)"/><rect x="1218.0" y="93.6" width="7" height="3.5" fill="#d3daf0" transform="rotate(38 1218.0 93.6)"/><rect x="1229.9" y="75.9" width="3.5" height="3.5" fill="#1f7050" transform="rotate(-40 1229.9 75.9)"/><rect x="1261.8" y="136.4" width="6.9" height="1.7" fill="#2a9460" transform="rotate(-40 1261.8 136.4)"/><rect x="1221.9" y="93.8" width="5.200" height="3.500" fill="#979ecb"/><rect x="1260.0" y="71.1" width="5.200" height="3.500" fill="#979ecb"/><rect x="1211.4" y="123.9" width="5.200" height="3.500" fill="#979ecb"/><rect x="1264.4" y="140.4" width="3.5" height="3.5" fill="#1f7050" transform="rotate(-40 1264.4 140.4)"/><rect x="1262.7" y="108.8" width="3.5" height="3.5" fill="#2d8c5a" transform="rotate(-40 1262.7 108.8)"/><rect x="1206.6" y="108.2" width="5.2" height="1.7" fill="#c6cdea" transform="rotate(38 1206.6 108.2)"/><rect x="1215.2" y="173.1" width="5.2" height="3.5" fill="#e4ecf8" transform="rotate(38 1215.2 173.1)"/><rect x="1240.8" y="72.7" width="5.200" height="3.500" fill="#979ecb"/><rect x="1189.1" y="165.3" width="5.200" height="3.500" fill="#979ecb"/><rect x="1262.8" y="182.7" width="5.200" height="3.500" fill="#979ecb"/><rect x="1216.8" y="183.9" width="7" height="3.5" fill="#e4ecf8" transform="rotate(38 1216.8 183.9)"/><rect x="1193.7" y="120.3" width="5.2" height="3.5" fill="#d3daf0" transform="rotate(38 1193.7 120.3)"/><rect x="1240.1" y="117.8" width="3.5" height="1.7" fill="#bcc3e2" transform="rotate(38 1240.1 117.8)"/><rect x="1182.9" y="155.2" width="5.2" height="3.5" fill="#d3daf0" transform="rotate(38 1182.9 155.2)"/><rect x="1256.7" y="64.2" width="5.200" height="3.500" fill="#979ecb"/><rect x="1226.1" y="106.9" width="3.5" height="1.7" fill="#1f7050" transform="rotate(-40 1226.1 106.9)"/><rect x="1203.3" y="74.8" width="5.2" height="1.7" fill="#c6cdea" transform="rotate(38 1203.3 74.8)"/><rect x="1262.4" y="135.3" width="5.200" height="3.500" fill="#979ecb"/><rect x="1178.7" y="105.5" width="8.7" height="1.7" fill="#e4ecf8" transform="rotate(38 1178.7 105.5)"/><rect x="1209.9" y="179.7" width="7" height="1.7" fill="#e4ecf8" transform="rotate(38 1209.9 179.7)"/><rect x="1244.5" y="126.0" width="5.200" height="3.500" fill="#979ecb"/><rect x="1217.8" y="110.1" width="7" height="1.7" fill="#d3daf0" transform="rotate(38 1217.8 110.1)"/><rect x="1226.1" y="164.6" width="7" height="3.5" fill="#d3daf0" transform="rotate(38 1226.1 164.6)"/><rect x="1205.1" y="167.9" width="5.200" height="3.500" fill="#979ecb"/><rect x="1206.5" y="165.5" width="3.5" height="1.7" fill="#d3daf0" transform="rotate(38 1206.5 165.5)"/><rect x="1188.3" y="59.8" width="5.200" height="3.500" fill="#979ecb"/><rect x="1249.5" y="184.9" width="5.200" height="3.500" fill="#979ecb"/><rect x="1225.3" y="156.1" width="6.9" height="3.5" fill="#2a9460" transform="rotate(-40 1225.3 156.1)"/><rect x="1207.3" y="133.6" width="8.7" height="3.5" fill="#c6cdea" transform="rotate(38 1207.3 133.6)"/><rect x="1235.3" y="133.7" width="5.200" height="3.500" fill="#979ecb"/><rect x="1247.4" y="150.6" width="7" height="1.7" fill="#c6cdea" transform="rotate(38 1247.4 150.6)"/><rect x="1202.3" y="73.8" width="7" height="3.5" fill="#d3daf0" transform="rotate(38 1202.3 73.8)"/><rect x="1203.4" y="181.8" width="8.7" height="1.7" fill="#d3daf0" transform="rotate(38 1203.4 181.8)"/><rect x="1266.8" y="125.6" width="3.5" height="1.7" fill="#bcc3e2" transform="rotate(38 1266.8 125.6)"/><rect x="1216.3" y="166.5" width="5.200" height="3.500" fill="#979ecb"/><rect x="1183.3" y="167.4" width="3.5" height="1.7" fill="#d3daf0" transform="rotate(38 1183.3 167.4)"/><rect x="1183.0" y="121.2" width="8.7" height="3.5" fill="#c6cdea" transform="rotate(38 1183.0 121.2)"/><rect x="1179.1" y="105.6" width="8.7" height="1.7" fill="#e4ecf8" transform="rotate(38 1179.1 105.6)"/><rect x="1230.6" y="76.7" width="7" height="1.7" fill="#e4ecf8" transform="rotate(38 1230.6 76.7)"/><rect x="1190.6" y="68.4" width="7" height="1.7" fill="#e4ecf8" transform="rotate(38 1190.6 68.4)"/><rect x="1180.6" y="151.9" width="8.7" height="3.5" fill="#c6cdea" transform="rotate(38 1180.6 151.9)"/><rect x="1252.6" y="165.2" width="5.200" height="3.500" fill="#979ecb"/><rect x="1217.7" y="145.4" width="3.5" height="3.5" fill="#1f7050" transform="rotate(-40 1217.7 145.4)"/><rect x="1190.5" y="97.3" width="5.200" height="3.500" fill="#979ecb"/><rect x="1188.6" y="80.2" width="5.200" height="3.500" fill="#979ecb"/><rect x="1216.8" y="159.9" width="8.7" height="1.7" fill="#bcc3e2" transform="rotate(38 1216.8 159.9)"/><rect x="1202.7" y="107.8" width="8.7" height="3.5" fill="#c6cdea" transform="rotate(38 1202.7 107.8)"/><rect x="1217.3" y="70.4" width="5.200" height="3.500" fill="#979ecb"/><rect x="1240.2" y="68.7" width="7" height="1.7" fill="#e4ecf8" transform="rotate(38 1240.2 68.7)"/><rect x="1207.2" y="174.8" width="5.200" height="3.500" fill="#979ecb"/><rect x="1186.5" y="142.5" width="5.200" height="3.500" fill="#979ecb"/><rect x="1257.3" y="86.9" width="5.2" height="1.7" fill="#2a9460" transform="rotate(-40 1257.3 86.9)"/><rect x="1182.7" y="124.3" width="5.200" height="3.500" fill="#979ecb"/><rect x="1223.8" y="88.6" width="5.200" height="3.500" fill="#979ecb"/><rect x="1194.2" y="163.1" width="5.200" height="3.500" fill="#979ecb"/><rect x="1260.6" y="108.7" width="6.9" height="1.7" fill="#1f7050" transform="rotate(-40 1260.6 108.7)"/><rect x="1196.2" y="96.2" width="5.200" height="3.500" fill="#979ecb"/><rect x="1190.0" y="126.0" width="5.200" height="3.500" fill="#979ecb"/><rect x="1209.9" y="156.4" width="5.200" height="3.500" fill="#979ecb"/><rect x="1255.2" y="152.5" width="6.9" height="3.5" fill="#2d8c5a" transform="rotate(-40 1255.2 152.5)"/><rect x="1255.2" y="138.6" width="5.2" height="1.7" fill="#e4ecf8" transform="rotate(38 1255.2 138.6)"/><rect x="1262.4" y="73.3" width="5.200" height="3.500" fill="#979ecb"/><rect x="1213.7" y="85.1" width="3.5" height="1.7" fill="#bcc3e2" transform="rotate(38 1213.7 85.1)"/><rect x="1200.2" y="170.6" width="5.200" height="3.500" fill="#979ecb"/><rect x="1243.6" y="88.3" width="5.2" height="1.7" fill="#c6cdea" transform="rotate(38 1243.6 88.3)"/><rect x="1200.6" y="91.7" width="5.200" height="3.500" fill="#979ecb"/><rect x="1208.6" y="72.2" width="8.7" height="1.7" fill="#d3daf0" transform="rotate(38 1208.6 72.2)"/><rect x="1200.1" y="147.6" width="7" height="3.5" fill="#d3daf0" transform="rotate(38 1200.1 147.6)"/><rect x="1193.8" y="154.1" width="8.7" height="3.5" fill="#d3daf0" transform="rotate(38 1193.8 154.1)"/><rect x="1234.5" y="114.6" width="5.2" height="3.5" fill="#2a9460" transform="rotate(-40 1234.5 114.6)"/><rect x="1179.6" y="80.6" width="8.7" height="3.5" fill="#bcc3e2" transform="rotate(38 1179.6 80.6)"/><rect x="1198.0" y="162.6" width="5.200" height="3.500" fill="#979ecb"/><rect x="1209.1" y="185.4" width="5.2" height="1.7" fill="#bcc3e2" transform="rotate(38 1209.1 185.4)"/><rect x="1208.5" y="151.7" width="5.200" height="3.500" fill="#979ecb"/><rect x="1187.7" y="125.6" width="5.200" height="3.500" fill="#979ecb"/><rect x="1221.0" y="127.0" width="5.200" height="3.500" fill="#979ecb"/><rect x="1218.2" y="121.1" width="5.200" height="3.500" fill="#979ecb"/><rect x="1252.1" y="84.0" width="6.9" height="3.5" fill="#2a9460" transform="rotate(-40 1252.1 84.0)"/><rect x="1230.6" y="144.8" width="7" height="1.7" fill="#c6cdea" transform="rotate(38 1230.6 144.8)"/><rect x="1261.1" y="112.1" width="5.200" height="3.500" fill="#979ecb"/><rect x="1246.8" y="112.1" width="5.2" height="1.7" fill="#c6cdea" transform="rotate(38 1246.8 112.1)"/><rect x="1240.8" y="130.0" width="3.5" height="1.7" fill="#d3daf0" transform="rotate(38 1240.8 130.0)"/><rect x="1206.8" y="150.8" width="8.7" height="1.7" fill="#d3daf0" transform="rotate(38 1206.8 150.8)"/><rect x="1259.7" y="128.8" width="3.5" height="3.5" fill="#bcc3e2" transform="rotate(38 1259.7 128.8)"/><rect x="1241.2" y="79.2" width="5.200" height="3.500" fill="#979ecb"/><rect x="1188.7" y="128.7" width="8.7" height="3.5" fill="#c6cdea" transform="rotate(38 1188.7 128.7)"/><rect x="1213.8" y="66.5" width="7" height="1.7" fill="#c6cdea" transform="rotate(38 1213.8 66.5)"/><rect x="1188.5" y="179.3" width="8.7" height="1.7" fill="#c6cdea" transform="rotate(38 1188.5 179.3)"/><rect x="1211.2" y="145.2" width="5.2" height="3.5" fill="#d3daf0" transform="rotate(38 1211.2 145.2)"/><rect x="1200.2" y="91.1" width="7" height="1.7" fill="#e4ecf8" transform="rotate(38 1200.2 91.1)"/><rect x="1256.2" y="75.3" width="5.2" height="1.7" fill="#1f7050" transform="rotate(-40 1256.2 75.3)"/><rect x="1207.4" y="155.6" width="8.7" height="1.7" fill="#d3daf0" transform="rotate(38 1207.4 155.6)"/><rect x="1211.5" y="169.4" width="5.200" height="3.500" fill="#979ecb"/><rect x="1223.4" y="146.0" width="8.7" height="1.7" fill="#c6cdea" transform="rotate(38 1223.4 146.0)"/><rect x="1227.0" y="133.0" width="3.5" height="1.7" fill="#d3daf0" transform="rotate(38 1227.0 133.0)"/><rect x="1216.8" y="58.2" width="5.200" height="3.500" fill="#979ecb"/><rect x="1189.8" y="151.3" width="7" height="1.7" fill="#e4ecf8" transform="rotate(38 1189.8 151.3)"/><rect x="1234.5" y="130.1" width="5.200" height="3.500" fill="#979ecb"/><rect x="1210.2" y="73.1" width="3.5" height="1.7" fill="#bcc3e2" transform="rotate(38 1210.2 73.1)"/><rect x="1244.5" y="77.1" width="5.2" height="1.7" fill="#d3daf0" transform="rotate(38 1244.5 77.1)"/></g><rect x="1244.4" y="182.3" width="6.900" height="3.500" fill="#1f7050" transform="rotate(-40 1247.4 182.3)"/><rect x="1257.1" y="185.5" width="6.900" height="3.500" fill="#1f7050" transform="rotate(-40 1260.1 185.5)"/><rect x="1259.6" y="184.7" width="6.900" height="3.500" fill="#1f7050" transform="rotate(-40 1262.6 184.7)"/><rect x="1262.8" y="177.2" width="6.900" height="3.500" fill="#2d8c5a" transform="rotate(-40 1265.8 177.2)"/><rect x="1257.9" y="159.3" width="6.900" height="3.500" fill="#2d8c5a" transform="rotate(-40 1260.9 159.3)"/><rect x="1262.4" y="167.3" width="6.900" height="3.500" fill="#1f7050" transform="rotate(-40 1265.4 167.3)"/><rect x="1255.6" y="152.9" width="6.900" height="3.500" fill="#2d8c5a" transform="rotate(-40 1258.6 152.9)"/><rect x="1256.4" y="151.3" width="6.900" height="3.500" fill="#1f7050" transform="rotate(-40 1259.4 151.3)"/><rect x="1259.0" y="131.3" width="6.900" height="3.500" fill="#2d8c5a" transform="rotate(-40 1262.0 131.3)"/><rect x="1253.0" y="121.3" width="6.900" height="3.500" fill="#2d8c5a" transform="rotate(-40 1256.0 121.3)"/><rect x="1251.6" y="116.2" width="6.900" height="3.500" fill="#1f7050" transform="rotate(-40 1254.6 116.2)"/><rect x="1253.3" y="111.0" width="6.900" height="3.500" fill="#2d8c5a" transform="rotate(-40 1256.3 111.0)"/><rect x="1245.8" y="86.9" width="6.900" height="3.500" fill="#2d8c5a" transform="rotate(-40 1248.8 86.9)"/><rect x="1249.5" y="91.2" width="6.900" height="3.500" fill="#2d8c5a" transform="rotate(-40 1252.5 91.2)"/><rect x="1245.9" y="73.3" width="6.900" height="3.500" fill="#1f7050" transform="rotate(-40 1248.9 73.3)"/><rect x="1245.7" y="76.3" width="6.900" height="3.500" fill="#1f7050" transform="rotate(-40 1248.7 76.3)"/><clipPath id="tc4"><polygon points="1664.0,58.0 1656.0,92.0 1662.0,100.0 1646.0,118.0 1660.0,124.0 1668.0,136.0 1700.0,132.0 1714.0,122.0 1704.0,106.0 1710.0,96.0 1698.0,82.0 1700.0,58.0"/></clipPath><polygon points="1664.0,58.0 1656.0,92.0 1662.0,100.0 1646.0,118.0 1660.0,124.0 1668.0,136.0 1700.0,132.0 1714.0,122.0 1704.0,106.0 1710.0,96.0 1698.0,82.0 1700.0,58.0" fill="#adb5d8"/><g clip-path="url(#tc4)"><polygon points="1646,76 1680,58 1714,80 1714,88 1680,66 1646,84" fill="#9aa2cc" opacity=".5"/><polygon points="1646,87 1680,69 1714,91 1714,99 1680,77 1646,95" fill="#9aa2cc" opacity=".5"/><polygon points="1646,98 1680,80 1714,102 1714,110 1680,88 1646,106" fill="#9aa2cc" opacity=".5"/><polygon points="1646,109 1680,91 1714,113 1714,121 1680,99 1646,117" fill="#9aa2cc" opacity=".5"/><polygon points="1646,121 1680,103 1714,125 1714,133 1680,111 1646,129" fill="#9aa2cc" opacity=".5"/><polygon points="1646,132 1680,114 1714,136 1714,144 1680,122 1646,140" fill="#9aa2cc" opacity=".5"/><polygon points="1646,143 1680,125 1714,147 1714,155 1680,133 1646,151" fill="#9aa2cc" opacity=".5"/><rect x="1688.4" y="115.9" width="5.200" height="3.500" fill="#979ecb"/><rect x="1710.1" y="115.7" width="5.200" height="3.500" fill="#979ecb"/><rect x="1648.0" y="94.3" width="5.200" height="3.500" fill="#979ecb"/><rect x="1690.1" y="128.3" width="3.5" height="3.5" fill="#1f7050" transform="rotate(-40 1690.1 128.3)"/><rect x="1683.0" y="102.8" width="5.2" height="3.5" fill="#2d8c5a" transform="rotate(-40 1683.0 102.8)"/><rect x="1658.4" y="125.7" width="3.5" height="1.7" fill="#bcc3e2" transform="rotate(38 1658.4 125.7)"/><rect x="1654.6" y="58.1" width="5.200" height="3.500" fill="#979ecb"/><rect x="1660.2" y="74.8" width="5.200" height="3.500" fill="#979ecb"/><rect x="1705.3" y="80.6" width="5.200" height="3.500" fill="#979ecb"/><rect x="1682.7" y="110.9" width="5.2" height="1.7" fill="#c6cdea" transform="rotate(38 1682.7 110.9)"/><rect x="1647.5" y="90.4" width="5.200" height="3.500" fill="#979ecb"/><rect x="1663.9" y="83.9" width="5.200" height="3.500" fill="#979ecb"/><rect x="1685.9" y="104.5" width="5.200" height="3.500" fill="#979ecb"/><rect x="1650.5" y="85.7" width="7" height="1.7" fill="#bcc3e2" transform="rotate(38 1650.5 85.7)"/><rect x="1678.1" y="71.7" width="3.5" height="3.5" fill="#c6cdea" transform="rotate(38 1678.1 71.7)"/><rect x="1703.5" y="59.4" width="5.200" height="3.500" fill="#979ecb"/><rect x="1670.9" y="103.1" width="6.9" height="1.7" fill="#2d8c5a" transform="rotate(-40 1670.9 103.1)"/><rect x="1688.4" y="132.4" width="5.2" height="3.5" fill="#2d8c5a" transform="rotate(-40 1688.4 132.4)"/><rect x="1680.8" y="127.6" width="8.7" height="1.7" fill="#c6cdea" transform="rotate(38 1680.8 127.6)"/><rect x="1704.5" y="60.9" width="5.200" height="3.500" fill="#979ecb"/><rect x="1652.2" y="84.6" width="5.200" height="3.500" fill="#979ecb"/><rect x="1708.4" y="84.5" width="5.200" height="3.500" fill="#979ecb"/><rect x="1683.1" y="82.4" width="5.2" height="1.7" fill="#d3daf0" transform="rotate(38 1683.1 82.4)"/><rect x="1695.0" y="82.1" width="3.5" height="1.7" fill="#bcc3e2" transform="rotate(38 1695.0 82.1)"/><rect x="1648.2" y="115.8" width="7" height="1.7" fill="#bcc3e2" transform="rotate(38 1648.2 115.8)"/><rect x="1655.9" y="134.4" width="5.200" height="3.500" fill="#979ecb"/><rect x="1700.5" y="84.1" width="6.9" height="1.7" fill="#2a9460" transform="rotate(-40 1700.5 84.1)"/><rect x="1688.9" y="119.5" width="5.2" height="1.7" fill="#1f7050" transform="rotate(-40 1688.9 119.5)"/><rect x="1650.0" y="90.8" width="5.2" height="3.5" fill="#bcc3e2" transform="rotate(38 1650.0 90.8)"/><rect x="1711.3" y="111.7" width="5.2" height="3.5" fill="#1f7050" transform="rotate(-40 1711.3 111.7)"/><rect x="1673.5" y="69.4" width="5.2" height="3.5" fill="#bcc3e2" transform="rotate(38 1673.5 69.4)"/><rect x="1705.0" y="72.0" width="7" height="1.7" fill="#c6cdea" transform="rotate(38 1705.0 72.0)"/><rect x="1693.2" y="109.8" width="5.200" height="3.500" fill="#979ecb"/><rect x="1670.7" y="112.9" width="8.7" height="1.7" fill="#c6cdea" transform="rotate(38 1670.7 112.9)"/><rect x="1711.1" y="84.5" width="5.2" height="3.5" fill="#2d8c5a" transform="rotate(-40 1711.1 84.5)"/><rect x="1668.2" y="79.3" width="7" height="1.7" fill="#c6cdea" transform="rotate(38 1668.2 79.3)"/><rect x="1689.8" y="115.6" width="5.200" height="3.500" fill="#979ecb"/><rect x="1669.8" y="123.7" width="5.200" height="3.500" fill="#979ecb"/><rect x="1692.8" y="134.1" width="5.200" height="3.500" fill="#979ecb"/><rect x="1681.2" y="99.3" width="5.2" height="3.5" fill="#1f7050" transform="rotate(-40 1681.2 99.3)"/><rect x="1693.0" y="114.1" width="5.200" height="3.500" fill="#979ecb"/><rect x="1657.7" y="118.9" width="5.200" height="3.500" fill="#979ecb"/><rect x="1691.3" y="90.8" width="5.200" height="3.500" fill="#979ecb"/><rect x="1698.7" y="107.7" width="5.200" height="3.500" fill="#979ecb"/><rect x="1647.9" y="70.5" width="5.2" height="1.7" fill="#d3daf0" transform="rotate(38 1647.9 70.5)"/><rect x="1688.9" y="61.3" width="5.2" height="1.7" fill="#e4ecf8" transform="rotate(38 1688.9 61.3)"/><rect x="1706.6" y="66.6" width="5.200" height="3.500" fill="#979ecb"/><rect x="1678.8" y="100.8" width="7" height="1.7" fill="#e4ecf8" transform="rotate(38 1678.8 100.8)"/><rect x="1686.1" y="76.6" width="5.200" height="3.500" fill="#979ecb"/><rect x="1646.0" y="89.6" width="8.7" height="1.7" fill="#c6cdea" transform="rotate(38 1646.0 89.6)"/><rect x="1711.6" y="100.9" width="6.9" height="3.5" fill="#1f7050" transform="rotate(-40 1711.6 100.9)"/><rect x="1710.7" y="80.9" width="5.2" height="3.5" fill="#2d8c5a" transform="rotate(-40 1710.7 80.9)"/><rect x="1701.3" y="108.1" width="5.2" height="1.7" fill="#bcc3e2" transform="rotate(38 1701.3 108.1)"/><rect x="1684.3" y="132.7" width="5.200" height="3.500" fill="#979ecb"/><rect x="1687.4" y="85.4" width="5.200" height="3.500" fill="#979ecb"/><rect x="1646.1" y="66.4" width="5.200" height="3.500" fill="#979ecb"/><rect x="1687.8" y="69.0" width="5.200" height="3.500" fill="#979ecb"/><rect x="1706.6" y="87.3" width="5.2" height="1.7" fill="#c6cdea" transform="rotate(38 1706.6 87.3)"/><rect x="1678.6" y="113.2" width="5.2" height="3.5" fill="#c6cdea" transform="rotate(38 1678.6 113.2)"/><rect x="1696.4" y="81.5" width="5.2" height="3.5" fill="#2d8c5a" transform="rotate(-40 1696.4 81.5)"/><rect x="1679.4" y="80.3" width="3.5" height="3.5" fill="#bcc3e2" transform="rotate(38 1679.4 80.3)"/><rect x="1662.7" y="61.1" width="8.7" height="1.7" fill="#bcc3e2" transform="rotate(38 1662.7 61.1)"/><rect x="1682.2" y="79.4" width="5.200" height="3.500" fill="#979ecb"/><rect x="1699.2" y="77.2" width="6.9" height="3.5" fill="#2d8c5a" transform="rotate(-40 1699.2 77.2)"/><rect x="1665.9" y="105.4" width="3.5" height="1.7" fill="#d3daf0" transform="rotate(38 1665.9 105.4)"/><rect x="1666.4" y="99.6" width="7" height="3.5" fill="#e4ecf8" transform="rotate(38 1666.4 99.6)"/><rect x="1677.6" y="86.2" width="5.200" height="3.500" fill="#979ecb"/><rect x="1686.2" y="60.8" width="8.7" height="3.5" fill="#e4ecf8" transform="rotate(38 1686.2 60.8)"/><rect x="1706.4" y="100.6" width="6.9" height="3.5" fill="#1f7050" transform="rotate(-40 1706.4 100.6)"/><rect x="1704.4" y="123.6" width="5.2" height="1.7" fill="#bcc3e2" transform="rotate(38 1704.4 123.6)"/><rect x="1702.4" y="63.2" width="5.200" height="3.500" fill="#979ecb"/><rect x="1693.2" y="91.8" width="8.7" height="1.7" fill="#d3daf0" transform="rotate(38 1693.2 91.8)"/><rect x="1657.3" y="112.2" width="5.200" height="3.500" fill="#979ecb"/><rect x="1712.2" y="100.0" width="3.5" height="1.7" fill="#d3daf0" transform="rotate(38 1712.2 100.0)"/><rect x="1664.2" y="64.6" width="5.2" height="3.5" fill="#2d8c5a" transform="rotate(-40 1664.2 64.6)"/><rect x="1712.6" y="135.9" width="5.200" height="3.500" fill="#979ecb"/><rect x="1649.3" y="123.7" width="3.5" height="3.5" fill="#d3daf0" transform="rotate(38 1649.3 123.7)"/><rect x="1713.6" y="113.1" width="5.2" height="3.5" fill="#d3daf0" transform="rotate(38 1713.6 113.1)"/><rect x="1674.1" y="70.6" width="5.200" height="3.500" fill="#979ecb"/><rect x="1649.0" y="66.4" width="3.5" height="1.7" fill="#e4ecf8" transform="rotate(38 1649.0 66.4)"/><rect x="1684.8" y="67.2" width="5.2" height="1.7" fill="#bcc3e2" transform="rotate(38 1684.8 67.2)"/><rect x="1652.2" y="111.5" width="7" height="3.5" fill="#c6cdea" transform="rotate(38 1652.2 111.5)"/><rect x="1708.2" y="68.8" width="6.9" height="3.5" fill="#2a9460" transform="rotate(-40 1708.2 68.8)"/><rect x="1707.9" y="101.3" width="5.200" height="3.500" fill="#979ecb"/><rect x="1663.9" y="101.0" width="7" height="3.5" fill="#d3daf0" transform="rotate(38 1663.9 101.0)"/><rect x="1700.9" y="125.4" width="8.7" height="1.7" fill="#d3daf0" transform="rotate(38 1700.9 125.4)"/><rect x="1694.5" y="109.1" width="3.5" height="1.7" fill="#2a9460" transform="rotate(-40 1694.5 109.1)"/><rect x="1704.7" y="97.5" width="8.7" height="1.7" fill="#bcc3e2" transform="rotate(38 1704.7 97.5)"/><rect x="1711.5" y="66.4" width="8.7" height="1.7" fill="#d3daf0" transform="rotate(38 1711.5 66.4)"/><rect x="1710.2" y="91.5" width="5.200" height="3.500" fill="#979ecb"/><rect x="1697.0" y="64.5" width="5.200" height="3.500" fill="#979ecb"/><rect x="1679.4" y="74.5" width="5.200" height="3.500" fill="#979ecb"/><rect x="1671.6" y="123.2" width="7" height="1.7" fill="#bcc3e2" transform="rotate(38 1671.6 123.2)"/><rect x="1655.3" y="122.8" width="5.200" height="3.500" fill="#979ecb"/><rect x="1700.7" y="91.8" width="5.200" height="3.500" fill="#979ecb"/><rect x="1681.2" y="104.2" width="5.200" height="3.500" fill="#979ecb"/><rect x="1696.3" y="88.8" width="3.5" height="1.7" fill="#2d8c5a" transform="rotate(-40 1696.3 88.8)"/><rect x="1659.3" y="96.2" width="5.200" height="3.500" fill="#979ecb"/><rect x="1691.0" y="85.2" width="7" height="3.5" fill="#bcc3e2" transform="rotate(38 1691.0 85.2)"/><rect x="1668.0" y="94.0" width="5.2" height="1.7" fill="#c6cdea" transform="rotate(38 1668.0 94.0)"/><rect x="1705.1" y="125.8" width="7" height="1.7" fill="#c6cdea" transform="rotate(38 1705.1 125.8)"/><rect x="1701.7" y="116.5" width="5.200" height="3.500" fill="#979ecb"/><rect x="1648.3" y="127.9" width="7" height="1.7" fill="#e4ecf8" transform="rotate(38 1648.3 127.9)"/><rect x="1692.8" y="110.6" width="5.2" height="1.7" fill="#c6cdea" transform="rotate(38 1692.8 110.6)"/><rect x="1665.8" y="110.6" width="5.200" height="3.500" fill="#979ecb"/><rect x="1657.1" y="73.7" width="6.9" height="1.7" fill="#2d8c5a" transform="rotate(-40 1657.1 73.7)"/><rect x="1688.0" y="129.1" width="5.200" height="3.500" fill="#979ecb"/><rect x="1692.3" y="72.4" width="3.5" height="3.5" fill="#bcc3e2" transform="rotate(38 1692.3 72.4)"/><rect x="1657.1" y="76.8" width="5.200" height="3.500" fill="#979ecb"/><rect x="1710.0" y="108.4" width="7" height="1.7" fill="#bcc3e2" transform="rotate(38 1710.0 108.4)"/><rect x="1650.1" y="118.8" width="3.5" height="1.7" fill="#c6cdea" transform="rotate(38 1650.1 118.8)"/><rect x="1709.9" y="113.9" width="3.5" height="3.5" fill="#1f7050" transform="rotate(-40 1709.9 113.9)"/><rect x="1649.7" y="77.0" width="3.5" height="1.7" fill="#1f7050" transform="rotate(-40 1649.7 77.0)"/><rect x="1663.4" y="89.8" width="3.5" height="1.7" fill="#d3daf0" transform="rotate(38 1663.4 89.8)"/><rect x="1658.2" y="97.7" width="5.2" height="1.7" fill="#c6cdea" transform="rotate(38 1658.2 97.7)"/><rect x="1699.8" y="64.8" width="5.200" height="3.500" fill="#979ecb"/><rect x="1657.0" y="63.9" width="5.200" height="3.500" fill="#979ecb"/><rect x="1688.5" y="92.4" width="8.7" height="3.5" fill="#bcc3e2" transform="rotate(38 1688.5 92.4)"/><rect x="1681.5" y="68.4" width="6.9" height="3.5" fill="#1f7050" transform="rotate(-40 1681.5 68.4)"/><rect x="1706.6" y="136.0" width="5.200" height="3.500" fill="#979ecb"/><rect x="1655.4" y="95.7" width="5.200" height="3.500" fill="#979ecb"/><rect x="1663.9" y="89.4" width="3.5" height="1.7" fill="#d3daf0" transform="rotate(38 1663.9 89.4)"/><rect x="1693.4" y="120.3" width="5.200" height="3.500" fill="#979ecb"/><rect x="1691.3" y="79.5" width="5.2" height="1.7" fill="#d3daf0" transform="rotate(38 1691.3 79.5)"/><rect x="1700.1" y="126.8" width="5.200" height="3.500" fill="#979ecb"/><rect x="1650.9" y="118.0" width="3.5" height="1.7" fill="#d3daf0" transform="rotate(38 1650.9 118.0)"/><rect x="1685.1" y="92.5" width="5.200" height="3.500" fill="#979ecb"/><rect x="1690.6" y="132.5" width="5.200" height="3.500" fill="#979ecb"/><rect x="1693.7" y="78.9" width="5.200" height="3.500" fill="#979ecb"/><rect x="1672.0" y="68.2" width="3.5" height="3.5" fill="#2d8c5a" transform="rotate(-40 1672.0 68.2)"/><rect x="1679.8" y="83.2" width="6.9" height="1.7" fill="#2a9460" transform="rotate(-40 1679.8 83.2)"/><rect x="1647.9" y="61.9" width="7" height="1.7" fill="#c6cdea" transform="rotate(38 1647.9 61.9)"/><rect x="1710.5" y="105.7" width="3.5" height="3.5" fill="#1f7050" transform="rotate(-40 1710.5 105.7)"/><rect x="1659.7" y="85.9" width="5.2" height="3.5" fill="#e4ecf8" transform="rotate(38 1659.7 85.9)"/><rect x="1664.2" y="105.3" width="5.200" height="3.500" fill="#979ecb"/><rect x="1655.8" y="117.6" width="8.7" height="1.7" fill="#c6cdea" transform="rotate(38 1655.8 117.6)"/><rect x="1667.6" y="129.4" width="8.7" height="1.7" fill="#bcc3e2" transform="rotate(38 1667.6 129.4)"/><rect x="1649.3" y="110.1" width="8.7" height="1.7" fill="#e4ecf8" transform="rotate(38 1649.3 110.1)"/><rect x="1653.0" y="121.5" width="3.5" height="1.7" fill="#e4ecf8" transform="rotate(38 1653.0 121.5)"/></g><rect x="1697.5" y="131.7" width="6.900" height="3.500" fill="#1f7050" transform="rotate(-40 1700.5 131.7)"/><rect x="1703.7" y="127.2" width="6.900" height="3.500" fill="#2d8c5a" transform="rotate(-40 1706.7 127.2)"/><rect x="1707.1" y="115.7" width="6.900" height="3.500" fill="#1f7050" transform="rotate(-40 1710.1 115.7)"/><rect x="1709.0" y="118.8" width="6.900" height="3.500" fill="#1f7050" transform="rotate(-40 1712.0 118.8)"/><rect x="1702.8" y="103.0" width="6.900" height="3.500" fill="#2d8c5a" transform="rotate(-40 1705.8 103.0)"/><rect x="1705.6" y="98.4" width="6.900" height="3.500" fill="#1f7050" transform="rotate(-40 1708.6 98.4)"/><rect x="1702.6" y="90.9" width="6.900" height="3.500" fill="#1f7050" transform="rotate(-40 1705.6 90.9)"/><rect x="1697.2" y="84.6" width="6.900" height="3.500" fill="#1f7050" transform="rotate(-40 1700.2 84.6)"/><rect x="1696.2" y="67.2" width="6.900" height="3.500" fill="#2d8c5a" transform="rotate(-40 1699.2 67.2)"/><rect x="1695.7" y="73.6" width="6.900" height="3.500" fill="#1f7050" transform="rotate(-40 1698.7 73.6)"/><clipPath id="tc5"><polygon points="1592.0,58.0 1584.0,96.0 1590.0,104.0 1574.0,124.0 1580.0,132.0 1560.0,150.0 1572.0,154.0 1580.0,166.0 1600.0,160.0 1630.0,168.0 1645.0,160.0 1654.0,150.0 1644.0,134.0 1650.0,120.0 1636.0,104.0 1640.0,90.0 1630.0,58.0"/></clipPath><polygon points="1592.0,58.0 1584.0,96.0 1590.0,104.0 1574.0,124.0 1580.0,132.0 1560.0,150.0 1572.0,154.0 1580.0,166.0 1600.0,160.0 1630.0,168.0 1645.0,160.0 1654.0,150.0 1644.0,134.0 1650.0,120.0 1636.0,104.0 1640.0,90.0 1630.0,58.0" fill="#adb5d8"/><g clip-path="url(#tc5)"><polygon points="1560,76 1607,58 1654,80 1654,88 1607,66 1560,84" fill="#9aa2cc" opacity=".5"/><polygon points="1560,92 1607,74 1654,96 1654,104 1607,82 1560,100" fill="#9aa2cc" opacity=".5"/><polygon points="1560,107 1607,89 1654,111 1654,119 1607,97 1560,115" fill="#9aa2cc" opacity=".5"/><polygon points="1560,123 1607,105 1654,127 1654,135 1607,113 1560,131" fill="#9aa2cc" opacity=".5"/><polygon points="1560,139 1607,121 1654,143 1654,151 1607,129 1560,147" fill="#9aa2cc" opacity=".5"/><polygon points="1560,155 1607,137 1654,159 1654,167 1607,145 1560,163" fill="#9aa2cc" opacity=".5"/><polygon points="1560,170 1607,152 1654,174 1654,182 1607,160 1560,178" fill="#9aa2cc" opacity=".5"/><rect x="1582.2" y="69.3" width="5.2" height="1.7" fill="#e4ecf8" transform="rotate(38 1582.2 69.3)"/><rect x="1561.9" y="118.4" width="3.5" height="1.7" fill="#c6cdea" transform="rotate(38 1561.9 118.4)"/><rect x="1586.0" y="77.0" width="3.5" height="3.5" fill="#2d8c5a" transform="rotate(-40 1586.0 77.0)"/><rect x="1635.2" y="79.3" width="7" height="1.7" fill="#c6cdea" transform="rotate(38 1635.2 79.3)"/><rect x="1623.1" y="113.7" width="5.2" height="1.7" fill="#1f7050" transform="rotate(-40 1623.1 113.7)"/><rect x="1648.8" y="148.0" width="5.200" height="3.500" fill="#979ecb"/><rect x="1639.0" y="58.8" width="5.2" height="1.7" fill="#2a9460" transform="rotate(-40 1639.0 58.8)"/><rect x="1598.9" y="123.9" width="5.2" height="1.7" fill="#c6cdea" transform="rotate(38 1598.9 123.9)"/><rect x="1584.4" y="145.7" width="6.9" height="3.5" fill="#1f7050" transform="rotate(-40 1584.4 145.7)"/><rect x="1608.8" y="129.3" width="5.200" height="3.500" fill="#979ecb"/><rect x="1573.6" y="132.1" width="6.9" height="3.5" fill="#2d8c5a" transform="rotate(-40 1573.6 132.1)"/><rect x="1586.0" y="97.1" width="5.200" height="3.500" fill="#979ecb"/><rect x="1590.1" y="119.4" width="5.200" height="3.500" fill="#979ecb"/><rect x="1569.5" y="64.8" width="5.2" height="1.7" fill="#c6cdea" transform="rotate(38 1569.5 64.8)"/><rect x="1647.9" y="90.0" width="6.9" height="1.7" fill="#1f7050" transform="rotate(-40 1647.9 90.0)"/><rect x="1644.2" y="163.0" width="5.200" height="3.500" fill="#979ecb"/><rect x="1650.2" y="60.0" width="6.9" height="3.5" fill="#2d8c5a" transform="rotate(-40 1650.2 60.0)"/><rect x="1641.0" y="153.6" width="5.200" height="3.500" fill="#979ecb"/><rect x="1567.3" y="126.0" width="5.200" height="3.500" fill="#979ecb"/><rect x="1587.4" y="85.5" width="5.200" height="3.500" fill="#979ecb"/><rect x="1574.9" y="121.0" width="8.7" height="1.7" fill="#c6cdea" transform="rotate(38 1574.9 121.0)"/><rect x="1633.7" y="97.9" width="3.5" height="1.7" fill="#d3daf0" transform="rotate(38 1633.7 97.9)"/><rect x="1599.9" y="80.9" width="6.9" height="1.7" fill="#2d8c5a" transform="rotate(-40 1599.9 80.9)"/><rect x="1616.0" y="164.8" width="5.200" height="3.500" fill="#979ecb"/><rect x="1611.3" y="122.1" width="3.5" height="1.7" fill="#c6cdea" transform="rotate(38 1611.3 122.1)"/><rect x="1632.7" y="103.0" width="5.200" height="3.500" fill="#979ecb"/><rect x="1604.9" y="84.6" width="3.5" height="1.7" fill="#bcc3e2" transform="rotate(38 1604.9 84.6)"/><rect x="1601.7" y="129.2" width="5.2" height="1.7" fill="#d3daf0" transform="rotate(38 1601.7 129.2)"/><rect x="1563.0" y="86.0" width="5.2" height="1.7" fill="#bcc3e2" transform="rotate(38 1563.0 86.0)"/><rect x="1641.8" y="73.6" width="6.9" height="1.7" fill="#1f7050" transform="rotate(-40 1641.8 73.6)"/><rect x="1653.1" y="102.3" width="5.200" height="3.500" fill="#979ecb"/><rect x="1621.5" y="145.0" width="5.200" height="3.500" fill="#979ecb"/><rect x="1606.5" y="68.2" width="5.2" height="1.7" fill="#c6cdea" transform="rotate(38 1606.5 68.2)"/><rect x="1621.7" y="145.9" width="5.200" height="3.500" fill="#979ecb"/><rect x="1636.6" y="116.1" width="5.200" height="3.500" fill="#979ecb"/><rect x="1624.5" y="87.5" width="5.200" height="3.500" fill="#979ecb"/><rect x="1649.9" y="66.2" width="5.200" height="3.500" fill="#979ecb"/><rect x="1650.4" y="131.5" width="3.5" height="3.5" fill="#2a9460" transform="rotate(-40 1650.4 131.5)"/><rect x="1622.7" y="64.7" width="5.2" height="3.5" fill="#2a9460" transform="rotate(-40 1622.7 64.7)"/><rect x="1630.2" y="160.0" width="3.5" height="1.7" fill="#2d8c5a" transform="rotate(-40 1630.2 160.0)"/><rect x="1561.2" y="154.4" width="8.7" height="1.7" fill="#e4ecf8" transform="rotate(38 1561.2 154.4)"/><rect x="1642.6" y="80.2" width="5.200" height="3.500" fill="#979ecb"/><rect x="1591.1" y="156.1" width="5.200" height="3.500" fill="#979ecb"/><rect x="1604.3" y="115.9" width="6.9" height="1.7" fill="#2d8c5a" transform="rotate(-40 1604.3 115.9)"/><rect x="1606.0" y="153.1" width="5.200" height="3.500" fill="#979ecb"/><rect x="1573.0" y="97.9" width="5.200" height="3.500" fill="#979ecb"/><rect x="1609.2" y="59.2" width="5.200" height="3.500" fill="#979ecb"/><rect x="1637.8" y="67.4" width="8.7" height="1.7" fill="#c6cdea" transform="rotate(38 1637.8 67.4)"/><rect x="1596.5" y="141.5" width="5.200" height="3.500" fill="#979ecb"/><rect x="1597.6" y="66.5" width="5.200" height="3.500" fill="#979ecb"/><rect x="1635.0" y="98.2" width="5.200" height="3.500" fill="#979ecb"/><rect x="1599.1" y="136.2" width="5.2" height="3.5" fill="#c6cdea" transform="rotate(38 1599.1 136.2)"/><rect x="1647.4" y="110.7" width="3.5" height="3.5" fill="#2a9460" transform="rotate(-40 1647.4 110.7)"/><rect x="1642.2" y="77.4" width="5.2" height="3.5" fill="#1f7050" transform="rotate(-40 1642.2 77.4)"/><rect x="1610.9" y="157.4" width="5.200" height="3.500" fill="#979ecb"/><rect x="1560.5" y="92.3" width="8.7" height="3.5" fill="#bcc3e2" transform="rotate(38 1560.5 92.3)"/><rect x="1609.5" y="115.3" width="7" height="1.7" fill="#d3daf0" transform="rotate(38 1609.5 115.3)"/><rect x="1632.1" y="166.4" width="5.200" height="3.500" fill="#979ecb"/><rect x="1623.6" y="125.0" width="8.7" height="3.5" fill="#c6cdea" transform="rotate(38 1623.6 125.0)"/><rect x="1648.1" y="113.7" width="8.7" height="1.7" fill="#d3daf0" transform="rotate(38 1648.1 113.7)"/><rect x="1583.7" y="123.7" width="5.200" height="3.500" fill="#979ecb"/><rect x="1592.0" y="105.7" width="5.200" height="3.500" fill="#979ecb"/><rect x="1623.5" y="126.4" width="7" height="1.7" fill="#c6cdea" transform="rotate(38 1623.5 126.4)"/><rect x="1623.4" y="155.2" width="3.5" height="3.5" fill="#2a9460" transform="rotate(-40 1623.4 155.2)"/><rect x="1621.5" y="93.9" width="3.5" height="3.5" fill="#e4ecf8" transform="rotate(38 1621.5 93.9)"/><rect x="1609.2" y="141.0" width="3.5" height="1.7" fill="#1f7050" transform="rotate(-40 1609.2 141.0)"/><rect x="1577.1" y="166.6" width="5.200" height="3.500" fill="#979ecb"/><rect x="1653.3" y="66.5" width="5.200" height="3.500" fill="#979ecb"/><rect x="1652.7" y="76.9" width="5.2" height="3.5" fill="#c6cdea" transform="rotate(38 1652.7 76.9)"/><rect x="1640.2" y="133.7" width="5.200" height="3.500" fill="#979ecb"/><rect x="1582.3" y="111.9" width="7" height="1.7" fill="#c6cdea" transform="rotate(38 1582.3 111.9)"/><rect x="1610.5" y="116.3" width="8.7" height="3.5" fill="#bcc3e2" transform="rotate(38 1610.5 116.3)"/><rect x="1651.1" y="92.4" width="3.5" height="1.7" fill="#d3daf0" transform="rotate(38 1651.1 92.4)"/><rect x="1644.4" y="108.4" width="5.200" height="3.500" fill="#979ecb"/><rect x="1637.6" y="102.5" width="3.5" height="1.7" fill="#e4ecf8" transform="rotate(38 1637.6 102.5)"/><rect x="1603.1" y="164.2" width="5.200" height="3.500" fill="#979ecb"/><rect x="1592.7" y="145.6" width="5.200" height="3.500" fill="#979ecb"/><rect x="1631.0" y="111.2" width="5.200" height="3.500" fill="#979ecb"/><rect x="1604.8" y="124.4" width="3.5" height="3.5" fill="#2d8c5a" transform="rotate(-40 1604.8 124.4)"/><rect x="1572.5" y="63.2" width="7" height="1.7" fill="#d3daf0" transform="rotate(38 1572.5 63.2)"/><rect x="1574.8" y="68.6" width="3.5" height="1.7" fill="#1f7050" transform="rotate(-40 1574.8 68.6)"/><rect x="1585.4" y="154.7" width="5.200" height="3.500" fill="#979ecb"/><rect x="1617.3" y="127.5" width="6.9" height="3.5" fill="#2d8c5a" transform="rotate(-40 1617.3 127.5)"/><rect x="1649.5" y="154.6" width="5.200" height="3.500" fill="#979ecb"/><rect x="1612.6" y="134.3" width="5.200" height="3.500" fill="#979ecb"/><rect x="1611.9" y="113.3" width="5.2" height="1.7" fill="#1f7050" transform="rotate(-40 1611.9 113.3)"/><rect x="1595.3" y="76.0" width="5.200" height="3.500" fill="#979ecb"/><rect x="1608.4" y="117.1" width="8.7" height="1.7" fill="#d3daf0" transform="rotate(38 1608.4 117.1)"/><rect x="1596.4" y="104.5" width="3.5" height="3.5" fill="#2a9460" transform="rotate(-40 1596.4 104.5)"/><rect x="1650.2" y="74.8" width="3.5" height="1.7" fill="#2a9460" transform="rotate(-40 1650.2 74.8)"/><rect x="1581.7" y="58.9" width="5.200" height="3.500" fill="#979ecb"/><rect x="1610.0" y="155.4" width="8.7" height="1.7" fill="#d3daf0" transform="rotate(38 1610.0 155.4)"/><rect x="1638.4" y="122.6" width="5.2" height="3.5" fill="#2a9460" transform="rotate(-40 1638.4 122.6)"/><rect x="1647.5" y="149.5" width="3.5" height="3.5" fill="#d3daf0" transform="rotate(38 1647.5 149.5)"/><rect x="1584.0" y="152.4" width="5.200" height="3.500" fill="#979ecb"/><rect x="1588.9" y="156.5" width="5.200" height="3.500" fill="#979ecb"/><rect x="1591.9" y="149.8" width="5.200" height="3.500" fill="#979ecb"/><rect x="1644.0" y="155.2" width="5.200" height="3.500" fill="#979ecb"/><rect x="1625.7" y="124.5" width="7" height="1.7" fill="#d3daf0" transform="rotate(38 1625.7 124.5)"/><rect x="1627.1" y="112.8" width="5.2" height="1.7" fill="#d3daf0" transform="rotate(38 1627.1 112.8)"/><rect x="1623.5" y="95.0" width="5.200" height="3.500" fill="#979ecb"/><rect x="1573.0" y="91.9" width="3.5" height="1.7" fill="#d3daf0" transform="rotate(38 1573.0 91.9)"/><rect x="1618.6" y="126.4" width="3.5" height="1.7" fill="#2a9460" transform="rotate(-40 1618.6 126.4)"/><rect x="1604.9" y="73.9" width="7" height="1.7" fill="#bcc3e2" transform="rotate(38 1604.9 73.9)"/><rect x="1619.4" y="102.3" width="3.5" height="3.5" fill="#1f7050" transform="rotate(-40 1619.4 102.3)"/><rect x="1612.6" y="89.1" width="8.7" height="1.7" fill="#d3daf0" transform="rotate(38 1612.6 89.1)"/><rect x="1580.2" y="110.6" width="7" height="1.7" fill="#bcc3e2" transform="rotate(38 1580.2 110.6)"/><rect x="1649.3" y="160.0" width="5.2" height="1.7" fill="#c6cdea" transform="rotate(38 1649.3 160.0)"/><rect x="1608.0" y="61.3" width="7" height="3.5" fill="#d3daf0" transform="rotate(38 1608.0 61.3)"/><rect x="1617.6" y="92.4" width="5.200" height="3.500" fill="#979ecb"/><rect x="1633.5" y="126.2" width="5.200" height="3.500" fill="#979ecb"/><rect x="1647.8" y="85.9" width="5.2" height="1.7" fill="#2a9460" transform="rotate(-40 1647.8 85.9)"/><rect x="1620.7" y="58.9" width="5.200" height="3.500" fill="#979ecb"/><rect x="1579.2" y="68.3" width="3.5" height="1.7" fill="#c6cdea" transform="rotate(38 1579.2 68.3)"/><rect x="1587.9" y="120.4" width="5.200" height="3.500" fill="#979ecb"/><rect x="1645.3" y="66.3" width="5.200" height="3.500" fill="#979ecb"/><rect x="1576.9" y="137.0" width="6.9" height="1.7" fill="#2d8c5a" transform="rotate(-40 1576.9 137.0)"/><rect x="1584.7" y="123.3" width="5.200" height="3.500" fill="#979ecb"/><rect x="1629.2" y="142.7" width="5.200" height="3.500" fill="#979ecb"/><rect x="1652.7" y="75.9" width="5.200" height="3.500" fill="#979ecb"/><rect x="1564.7" y="63.9" width="3.5" height="3.5" fill="#c6cdea" transform="rotate(38 1564.7 63.9)"/><rect x="1626.2" y="131.5" width="5.200" height="3.500" fill="#979ecb"/><rect x="1569.8" y="80.0" width="8.7" height="3.5" fill="#bcc3e2" transform="rotate(38 1569.8 80.0)"/><rect x="1610.8" y="97.8" width="5.200" height="3.500" fill="#979ecb"/><rect x="1638.8" y="141.4" width="5.2" height="1.7" fill="#2d8c5a" transform="rotate(-40 1638.8 141.4)"/><rect x="1587.9" y="98.0" width="5.200" height="3.500" fill="#979ecb"/><rect x="1648.3" y="132.5" width="3.5" height="1.7" fill="#d3daf0" transform="rotate(38 1648.3 132.5)"/><rect x="1653.6" y="78.4" width="3.5" height="1.7" fill="#e4ecf8" transform="rotate(38 1653.6 78.4)"/><rect x="1578.0" y="148.8" width="5.200" height="3.500" fill="#979ecb"/><rect x="1648.2" y="112.7" width="6.9" height="3.5" fill="#1f7050" transform="rotate(-40 1648.2 112.7)"/><rect x="1575.4" y="167.5" width="5.200" height="3.500" fill="#979ecb"/><rect x="1593.0" y="58.6" width="5.200" height="3.500" fill="#979ecb"/><rect x="1602.1" y="139.8" width="5.200" height="3.500" fill="#979ecb"/><rect x="1627.3" y="81.3" width="3.5" height="1.7" fill="#bcc3e2" transform="rotate(38 1627.3 81.3)"/><rect x="1575.2" y="132.3" width="3.5" height="3.5" fill="#2a9460" transform="rotate(-40 1575.2 132.3)"/><rect x="1616.3" y="137.7" width="3.5" height="1.7" fill="#1f7050" transform="rotate(-40 1616.3 137.7)"/><rect x="1618.4" y="72.7" width="5.200" height="3.500" fill="#979ecb"/><rect x="1582.0" y="139.4" width="7" height="1.7" fill="#c6cdea" transform="rotate(38 1582.0 139.4)"/><rect x="1647.3" y="150.0" width="5.200" height="3.500" fill="#979ecb"/><rect x="1613.8" y="95.9" width="5.200" height="3.500" fill="#979ecb"/><rect x="1650.7" y="61.5" width="3.5" height="3.5" fill="#2a9460" transform="rotate(-40 1650.7 61.5)"/><rect x="1604.3" y="71.1" width="5.200" height="3.500" fill="#979ecb"/><rect x="1616.0" y="166.7" width="3.5" height="1.7" fill="#2a9460" transform="rotate(-40 1616.0 166.7)"/><rect x="1610.6" y="96.1" width="5.200" height="3.500" fill="#979ecb"/><rect x="1626.7" y="63.2" width="5.200" height="3.500" fill="#979ecb"/><rect x="1574.0" y="77.4" width="5.200" height="3.500" fill="#979ecb"/><rect x="1587.7" y="155.1" width="8.7" height="1.7" fill="#e4ecf8" transform="rotate(38 1587.7 155.1)"/><rect x="1643.5" y="89.7" width="3.5" height="1.7" fill="#c6cdea" transform="rotate(38 1643.5 89.7)"/><rect x="1566.8" y="105.7" width="3.5" height="3.5" fill="#1f7050" transform="rotate(-40 1566.8 105.7)"/><rect x="1578.7" y="132.5" width="5.2" height="1.7" fill="#e4ecf8" transform="rotate(38 1578.7 132.5)"/><rect x="1653.9" y="59.2" width="6.9" height="3.5" fill="#1f7050" transform="rotate(-40 1653.9 59.2)"/><rect x="1566.1" y="115.6" width="5.2" height="3.5" fill="#d3daf0" transform="rotate(38 1566.1 115.6)"/><rect x="1608.0" y="118.4" width="5.200" height="3.500" fill="#979ecb"/><rect x="1566.1" y="106.0" width="3.5" height="3.5" fill="#c6cdea" transform="rotate(38 1566.1 106.0)"/><rect x="1608.3" y="131.2" width="3.5" height="1.7" fill="#2a9460" transform="rotate(-40 1608.3 131.2)"/><rect x="1616.6" y="58.6" width="6.9" height="3.5" fill="#1f7050" transform="rotate(-40 1616.6 58.6)"/><rect x="1632.8" y="123.2" width="5.200" height="3.500" fill="#979ecb"/><rect x="1574.3" y="97.9" width="8.7" height="1.7" fill="#bcc3e2" transform="rotate(38 1574.3 97.9)"/><rect x="1653.8" y="121.8" width="6.9" height="1.7" fill="#2a9460" transform="rotate(-40 1653.8 121.8)"/><rect x="1584.6" y="122.6" width="5.200" height="3.500" fill="#979ecb"/><rect x="1616.2" y="134.7" width="5.200" height="3.500" fill="#979ecb"/><rect x="1575.2" y="75.7" width="5.200" height="3.500" fill="#979ecb"/><rect x="1639.9" y="135.6" width="7" height="1.7" fill="#c6cdea" transform="rotate(38 1639.9 135.6)"/><rect x="1640.9" y="76.2" width="5.2" height="1.7" fill="#2d8c5a" transform="rotate(-40 1640.9 76.2)"/><rect x="1576.6" y="68.5" width="5.200" height="3.500" fill="#979ecb"/><rect x="1563.1" y="58.6" width="5.200" height="3.500" fill="#979ecb"/><rect x="1560.2" y="130.1" width="5.200" height="3.500" fill="#979ecb"/><rect x="1580.9" y="85.0" width="5.200" height="3.500" fill="#979ecb"/><rect x="1597.0" y="84.6" width="8.7" height="1.7" fill="#e4ecf8" transform="rotate(38 1597.0 84.6)"/><rect x="1592.3" y="62.8" width="8.7" height="1.7" fill="#bcc3e2" transform="rotate(38 1592.3 62.8)"/><rect x="1653.4" y="105.8" width="5.200" height="3.500" fill="#979ecb"/><rect x="1612.4" y="165.2" width="7" height="3.5" fill="#d3daf0" transform="rotate(38 1612.4 165.2)"/><rect x="1560.1" y="98.0" width="5.200" height="3.500" fill="#979ecb"/><rect x="1613.8" y="111.9" width="5.200" height="3.500" fill="#979ecb"/><rect x="1600.7" y="138.4" width="3.5" height="1.7" fill="#bcc3e2" transform="rotate(38 1600.7 138.4)"/><rect x="1609.3" y="140.6" width="3.5" height="1.7" fill="#2d8c5a" transform="rotate(-40 1609.3 140.6)"/><rect x="1602.9" y="139.2" width="5.200" height="3.500" fill="#979ecb"/><rect x="1643.0" y="92.9" width="5.200" height="3.500" fill="#979ecb"/><rect x="1643.6" y="101.5" width="5.200" height="3.500" fill="#979ecb"/><rect x="1569.7" y="159.3" width="5.200" height="3.500" fill="#979ecb"/><rect x="1652.1" y="149.4" width="5.200" height="3.500" fill="#979ecb"/><rect x="1600.9" y="136.9" width="5.200" height="3.500" fill="#979ecb"/><rect x="1614.1" y="126.4" width="5.200" height="3.500" fill="#979ecb"/><rect x="1586.8" y="94.9" width="6.9" height="1.7" fill="#2a9460" transform="rotate(-40 1586.8 94.9)"/><rect x="1617.7" y="143.3" width="7" height="1.7" fill="#bcc3e2" transform="rotate(38 1617.7 143.3)"/><rect x="1599.3" y="150.9" width="6.9" height="3.5" fill="#2d8c5a" transform="rotate(-40 1599.3 150.9)"/><rect x="1631.8" y="109.7" width="5.200" height="3.500" fill="#979ecb"/><rect x="1586.4" y="73.5" width="7" height="3.5" fill="#bcc3e2" transform="rotate(38 1586.4 73.5)"/><rect x="1632.7" y="145.1" width="5.200" height="3.500" fill="#979ecb"/><rect x="1647.3" y="139.6" width="3.5" height="3.5" fill="#2a9460" transform="rotate(-40 1647.3 139.6)"/><rect x="1583.9" y="126.4" width="5.2" height="1.7" fill="#bcc3e2" transform="rotate(38 1583.9 126.4)"/><rect x="1649.8" y="153.7" width="3.5" height="1.7" fill="#2d8c5a" transform="rotate(-40 1649.8 153.7)"/><rect x="1632.5" y="75.0" width="5.200" height="3.500" fill="#979ecb"/><rect x="1638.8" y="121.2" width="6.9" height="1.7" fill="#2d8c5a" transform="rotate(-40 1638.8 121.2)"/><rect x="1563.4" y="70.2" width="5.200" height="3.500" fill="#979ecb"/><rect x="1582.8" y="110.0" width="5.2" height="1.7" fill="#d3daf0" transform="rotate(38 1582.8 110.0)"/><rect x="1560.5" y="79.3" width="5.200" height="3.500" fill="#979ecb"/><rect x="1580.7" y="59.5" width="7" height="1.7" fill="#bcc3e2" transform="rotate(38 1580.7 59.5)"/><rect x="1614.3" y="135.9" width="5.200" height="3.500" fill="#979ecb"/><rect x="1591.8" y="127.8" width="5.2" height="1.7" fill="#1f7050" transform="rotate(-40 1591.8 127.8)"/><rect x="1565.4" y="165.6" width="5.200" height="3.500" fill="#979ecb"/><rect x="1565.3" y="143.8" width="3.5" height="1.7" fill="#2a9460" transform="rotate(-40 1565.3 143.8)"/><rect x="1606.0" y="100.6" width="6.9" height="1.7" fill="#2a9460" transform="rotate(-40 1606.0 100.6)"/><rect x="1639.5" y="137.8" width="5.200" height="3.500" fill="#979ecb"/><rect x="1626.2" y="105.1" width="5.200" height="3.500" fill="#979ecb"/><rect x="1646.3" y="69.8" width="6.9" height="3.5" fill="#2d8c5a" transform="rotate(-40 1646.3 69.8)"/><rect x="1610.1" y="159.8" width="8.7" height="1.7" fill="#bcc3e2" transform="rotate(38 1610.1 159.8)"/><rect x="1583.2" y="128.4" width="3.5" height="1.7" fill="#bcc3e2" transform="rotate(38 1583.2 128.4)"/><rect x="1624.8" y="94.5" width="5.200" height="3.500" fill="#979ecb"/><rect x="1633.8" y="135.5" width="3.5" height="1.7" fill="#2a9460" transform="rotate(-40 1633.8 135.5)"/><rect x="1625.0" y="100.9" width="5.2" height="3.5" fill="#d3daf0" transform="rotate(38 1625.0 100.9)"/><rect x="1612.9" y="65.9" width="5.200" height="3.500" fill="#979ecb"/><rect x="1636.3" y="61.4" width="3.5" height="3.5" fill="#e4ecf8" transform="rotate(38 1636.3 61.4)"/><rect x="1586.2" y="149.0" width="5.200" height="3.500" fill="#979ecb"/><rect x="1577.6" y="147.3" width="5.200" height="3.500" fill="#979ecb"/><rect x="1585.4" y="158.2" width="5.2" height="1.7" fill="#1f7050" transform="rotate(-40 1585.4 158.2)"/><rect x="1629.2" y="124.1" width="5.200" height="3.500" fill="#979ecb"/><rect x="1649.4" y="140.3" width="5.200" height="3.500" fill="#979ecb"/><rect x="1606.1" y="84.9" width="5.200" height="3.500" fill="#979ecb"/><rect x="1575.8" y="138.6" width="5.200" height="3.500" fill="#979ecb"/><rect x="1577.7" y="117.2" width="5.200" height="3.500" fill="#979ecb"/><rect x="1590.3" y="125.1" width="5.200" height="3.500" fill="#979ecb"/><rect x="1614.4" y="105.3" width="5.200" height="3.500" fill="#979ecb"/><rect x="1594.2" y="166.8" width="5.200" height="3.500" fill="#979ecb"/><rect x="1631.4" y="66.6" width="7" height="1.7" fill="#d3daf0" transform="rotate(38 1631.4 66.6)"/><rect x="1570.5" y="130.3" width="5.200" height="3.500" fill="#979ecb"/><rect x="1644.8" y="159.1" width="8.7" height="3.5" fill="#bcc3e2" transform="rotate(38 1644.8 159.1)"/><rect x="1568.1" y="99.2" width="7" height="3.5" fill="#e4ecf8" transform="rotate(38 1568.1 99.2)"/><rect x="1574.9" y="113.9" width="8.7" height="1.7" fill="#d3daf0" transform="rotate(38 1574.9 113.9)"/><rect x="1563.1" y="82.2" width="5.2" height="1.7" fill="#bcc3e2" transform="rotate(38 1563.1 82.2)"/><rect x="1627.2" y="108.4" width="7" height="1.7" fill="#d3daf0" transform="rotate(38 1627.2 108.4)"/><rect x="1625.4" y="62.0" width="5.200" height="3.500" fill="#979ecb"/><rect x="1565.2" y="155.9" width="3.5" height="3.5" fill="#bcc3e2" transform="rotate(38 1565.2 155.9)"/><rect x="1591.4" y="141.6" width="5.200" height="3.500" fill="#979ecb"/><rect x="1565.4" y="99.2" width="5.200" height="3.500" fill="#979ecb"/><rect x="1597.8" y="146.1" width="8.7" height="1.7" fill="#bcc3e2" transform="rotate(38 1597.8 146.1)"/><rect x="1614.2" y="100.7" width="5.2" height="3.5" fill="#1f7050" transform="rotate(-40 1614.2 100.7)"/><rect x="1632.1" y="137.0" width="5.200" height="3.500" fill="#979ecb"/><rect x="1601.8" y="97.9" width="5.200" height="3.500" fill="#979ecb"/><rect x="1569.7" y="142.3" width="5.2" height="1.7" fill="#bcc3e2" transform="rotate(38 1569.7 142.3)"/><rect x="1623.1" y="149.0" width="6.9" height="3.5" fill="#2a9460" transform="rotate(-40 1623.1 149.0)"/><rect x="1618.7" y="80.1" width="5.200" height="3.500" fill="#979ecb"/><rect x="1600.5" y="87.7" width="3.5" height="1.7" fill="#d3daf0" transform="rotate(38 1600.5 87.7)"/><rect x="1646.7" y="164.6" width="5.200" height="3.500" fill="#979ecb"/><rect x="1585.7" y="107.7" width="5.200" height="3.500" fill="#979ecb"/><rect x="1632.9" y="66.0" width="8.7" height="1.7" fill="#e4ecf8" transform="rotate(38 1632.9 66.0)"/><rect x="1642.2" y="85.9" width="3.5" height="1.7" fill="#1f7050" transform="rotate(-40 1642.2 85.9)"/><rect x="1600.2" y="87.2" width="3.5" height="1.7" fill="#2a9460" transform="rotate(-40 1600.2 87.2)"/><rect x="1606.6" y="124.1" width="3.5" height="1.7" fill="#bcc3e2" transform="rotate(38 1606.6 124.1)"/><rect x="1633.2" y="115.4" width="5.2" height="3.5" fill="#bcc3e2" transform="rotate(38 1633.2 115.4)"/><rect x="1608.4" y="89.4" width="7" height="3.5" fill="#e4ecf8" transform="rotate(38 1608.4 89.4)"/><rect x="1601.4" y="115.0" width="5.200" height="3.500" fill="#979ecb"/><rect x="1640.8" y="134.8" width="6.9" height="3.5" fill="#2a9460" transform="rotate(-40 1640.8 134.8)"/><rect x="1584.5" y="109.5" width="3.5" height="1.7" fill="#bcc3e2" transform="rotate(38 1584.5 109.5)"/><rect x="1595.1" y="151.2" width="5.2" height="1.7" fill="#c6cdea" transform="rotate(38 1595.1 151.2)"/><rect x="1616.2" y="166.9" width="5.200" height="3.500" fill="#979ecb"/><rect x="1599.6" y="107.3" width="5.200" height="3.500" fill="#979ecb"/><rect x="1607.4" y="122.6" width="8.7" height="1.7" fill="#c6cdea" transform="rotate(38 1607.4 122.6)"/><rect x="1630.4" y="155.7" width="3.5" height="3.5" fill="#2d8c5a" transform="rotate(-40 1630.4 155.7)"/><rect x="1569.5" y="112.4" width="7" height="3.5" fill="#e4ecf8" transform="rotate(38 1569.5 112.4)"/><rect x="1574.0" y="101.8" width="5.2" height="1.7" fill="#e4ecf8" transform="rotate(38 1574.0 101.8)"/><rect x="1604.0" y="75.8" width="7" height="1.7" fill="#c6cdea" transform="rotate(38 1604.0 75.8)"/><rect x="1607.8" y="70.0" width="5.200" height="3.500" fill="#979ecb"/><rect x="1623.0" y="113.0" width="5.200" height="3.500" fill="#979ecb"/><rect x="1577.5" y="140.1" width="5.2" height="3.5" fill="#c6cdea" transform="rotate(38 1577.5 140.1)"/><rect x="1603.6" y="145.7" width="5.200" height="3.500" fill="#979ecb"/><rect x="1637.9" y="76.3" width="5.2" height="1.7" fill="#2a9460" transform="rotate(-40 1637.9 76.3)"/><rect x="1619.5" y="72.3" width="6.9" height="1.7" fill="#2d8c5a" transform="rotate(-40 1619.5 72.3)"/><rect x="1616.3" y="94.9" width="5.2" height="1.7" fill="#bcc3e2" transform="rotate(38 1616.3 94.9)"/><rect x="1646.7" y="148.6" width="5.200" height="3.500" fill="#979ecb"/><rect x="1563.7" y="114.2" width="8.7" height="1.7" fill="#c6cdea" transform="rotate(38 1563.7 114.2)"/><rect x="1628.7" y="80.5" width="6.9" height="3.5" fill="#2d8c5a" transform="rotate(-40 1628.7 80.5)"/></g><rect x="1628.4" y="167.3" width="6.900" height="3.500" fill="#1f7050" transform="rotate(-40 1631.4 167.3)"/><rect x="1641.0" y="160.5" width="6.900" height="3.500" fill="#1f7050" transform="rotate(-40 1644.0 160.5)"/><rect x="1643.6" y="158.2" width="6.900" height="3.500" fill="#2d8c5a" transform="rotate(-40 1646.6 158.2)"/><rect x="1649.9" y="151.2" width="6.900" height="3.500" fill="#1f7050" transform="rotate(-40 1652.9 151.2)"/><rect x="1650.5" y="149.2" width="6.900" height="3.500" fill="#2d8c5a" transform="rotate(-40 1653.5 149.2)"/><rect x="1647.8" y="144.9" width="6.900" height="3.500" fill="#2d8c5a" transform="rotate(-40 1650.8 144.9)"/><rect x="1643.8" y="127.4" width="6.900" height="3.500" fill="#1f7050" transform="rotate(-40 1646.8 127.4)"/><rect x="1645.4" y="123.6" width="6.900" height="3.500" fill="#1f7050" transform="rotate(-40 1648.4 123.6)"/><rect x="1640.0" y="112.0" width="6.900" height="3.500" fill="#2d8c5a" transform="rotate(-40 1643.0 112.0)"/><rect x="1638.7" y="110.5" width="6.900" height="3.500" fill="#2d8c5a" transform="rotate(-40 1641.7 110.5)"/><rect x="1633.2" y="103.2" width="6.900" height="3.500" fill="#1f7050" transform="rotate(-40 1636.2 103.2)"/><rect x="1635.1" y="96.5" width="6.900" height="3.500" fill="#2d8c5a" transform="rotate(-40 1638.1 96.5)"/><rect x="1630.3" y="68.7" width="6.900" height="3.500" fill="#1f7050" transform="rotate(-40 1633.3 68.7)"/><rect x="1628.6" y="63.2" width="6.900" height="3.500" fill="#2d8c5a" transform="rotate(-40 1631.6 63.2)"/><clipPath id="tc6"><polygon points="1722.0,58.0 1714.0,100.0 1720.0,110.0 1702.0,132.0 1708.0,142.0 1686.0,160.0 1700.0,166.0 1704.0,184.0 1730.0,180.0 1750.0,196.0 1764.0,186.0 1776.0,180.0 1786.0,170.0 1774.0,152.0 1780.0,136.0 1766.0,116.0 1770.0,100.0 1756.0,84.0 1758.0,58.0"/></clipPath><polygon points="1722.0,58.0 1714.0,100.0 1720.0,110.0 1702.0,132.0 1708.0,142.0 1686.0,160.0 1700.0,166.0 1704.0,184.0 1730.0,180.0 1750.0,196.0 1764.0,186.0 1776.0,180.0 1786.0,170.0 1774.0,152.0 1780.0,136.0 1766.0,116.0 1770.0,100.0 1756.0,84.0 1758.0,58.0" fill="#adb5d8"/><g clip-path="url(#tc6)"><polygon points="1686,76 1736,58 1786,80 1786,88 1736,66 1686,84" fill="#9aa2cc" opacity=".5"/><polygon points="1686,96 1736,78 1786,100 1786,108 1736,86 1686,104" fill="#9aa2cc" opacity=".5"/><polygon points="1686,115 1736,97 1786,119 1786,127 1736,105 1686,123" fill="#9aa2cc" opacity=".5"/><polygon points="1686,135 1736,117 1786,139 1786,147 1736,125 1686,143" fill="#9aa2cc" opacity=".5"/><polygon points="1686,155 1736,137 1786,159 1786,167 1736,145 1686,163" fill="#9aa2cc" opacity=".5"/><polygon points="1686,175 1736,157 1786,179 1786,187 1736,165 1686,183" fill="#9aa2cc" opacity=".5"/><polygon points="1686,194 1736,176 1786,198 1786,206 1736,184 1686,202" fill="#9aa2cc" opacity=".5"/><rect x="1765.3" y="171.4" width="7" height="1.7" fill="#e4ecf8" transform="rotate(38 1765.3 171.4)"/><rect x="1700.6" y="138.9" width="5.200" height="3.500" fill="#979ecb"/><rect x="1759.5" y="102.1" width="3.5" height="3.5" fill="#1f7050" transform="rotate(-40 1759.5 102.1)"/><rect x="1777.1" y="132.4" width="6.9" height="3.5" fill="#2a9460" transform="rotate(-40 1777.1 132.4)"/><rect x="1752.3" y="142.2" width="5.2" height="1.7" fill="#1f7050" transform="rotate(-40 1752.3 142.2)"/><rect x="1722.2" y="114.6" width="3.5" height="1.7" fill="#c6cdea" transform="rotate(38 1722.2 114.6)"/><rect x="1695.8" y="64.3" width="5.200" height="3.500" fill="#979ecb"/><rect x="1768.8" y="183.9" width="5.2" height="3.5" fill="#e4ecf8" transform="rotate(38 1768.8 183.9)"/><rect x="1749.3" y="91.8" width="7" height="3.5" fill="#e4ecf8" transform="rotate(38 1749.3 91.8)"/><rect x="1695.0" y="179.5" width="3.5" height="3.5" fill="#c6cdea" transform="rotate(38 1695.0 179.5)"/><rect x="1717.2" y="85.1" width="5.2" height="3.5" fill="#d3daf0" transform="rotate(38 1717.2 85.1)"/><rect x="1769.4" y="178.9" width="5.2" height="1.7" fill="#e4ecf8" transform="rotate(38 1769.4 178.9)"/><rect x="1750.8" y="135.0" width="5.200" height="3.500" fill="#979ecb"/><rect x="1747.9" y="109.7" width="7" height="1.7" fill="#bcc3e2" transform="rotate(38 1747.9 109.7)"/><rect x="1691.4" y="116.4" width="5.200" height="3.500" fill="#979ecb"/><rect x="1725.8" y="193.4" width="3.5" height="3.5" fill="#bcc3e2" transform="rotate(38 1725.8 193.4)"/><rect x="1730.7" y="172.7" width="5.200" height="3.500" fill="#979ecb"/><rect x="1737.7" y="123.0" width="5.200" height="3.500" fill="#979ecb"/><rect x="1726.9" y="69.9" width="5.200" height="3.500" fill="#979ecb"/><rect x="1712.6" y="125.3" width="5.200" height="3.500" fill="#979ecb"/><rect x="1703.2" y="61.0" width="7" height="1.7" fill="#c6cdea" transform="rotate(38 1703.2 61.0)"/><rect x="1736.3" y="103.5" width="8.7" height="1.7" fill="#bcc3e2" transform="rotate(38 1736.3 103.5)"/><rect x="1712.8" y="123.5" width="5.2" height="3.5" fill="#bcc3e2" transform="rotate(38 1712.8 123.5)"/><rect x="1735.7" y="145.6" width="7" height="3.5" fill="#d3daf0" transform="rotate(38 1735.7 145.6)"/><rect x="1783.1" y="185.4" width="5.2" height="3.5" fill="#2a9460" transform="rotate(-40 1783.1 185.4)"/><rect x="1750.6" y="192.6" width="5.200" height="3.500" fill="#979ecb"/><rect x="1701.8" y="172.2" width="5.200" height="3.500" fill="#979ecb"/><rect x="1748.4" y="191.1" width="6.9" height="1.7" fill="#2a9460" transform="rotate(-40 1748.4 191.1)"/><rect x="1754.2" y="109.2" width="5.200" height="3.500" fill="#979ecb"/><rect x="1735.7" y="139.4" width="5.200" height="3.500" fill="#979ecb"/><rect x="1701.4" y="95.2" width="5.2" height="1.7" fill="#2a9460" transform="rotate(-40 1701.4 95.2)"/><rect x="1732.9" y="71.8" width="5.2" height="3.5" fill="#d3daf0" transform="rotate(38 1732.9 71.8)"/><rect x="1746.7" y="77.9" width="5.200" height="3.500" fill="#979ecb"/><rect x="1695.7" y="72.5" width="5.200" height="3.500" fill="#979ecb"/><rect x="1732.3" y="182.1" width="5.200" height="3.500" fill="#979ecb"/><rect x="1756.1" y="75.5" width="5.200" height="3.500" fill="#979ecb"/><rect x="1694.4" y="143.3" width="5.200" height="3.500" fill="#979ecb"/><rect x="1776.8" y="181.3" width="3.5" height="3.5" fill="#d3daf0" transform="rotate(38 1776.8 181.3)"/><rect x="1767.8" y="84.1" width="5.200" height="3.500" fill="#979ecb"/><rect x="1733.9" y="118.6" width="5.200" height="3.500" fill="#979ecb"/><rect x="1733.7" y="137.9" width="5.200" height="3.500" fill="#979ecb"/><rect x="1715.2" y="108.2" width="3.5" height="1.7" fill="#c6cdea" transform="rotate(38 1715.2 108.2)"/><rect x="1714.0" y="191.3" width="7" height="1.7" fill="#e4ecf8" transform="rotate(38 1714.0 191.3)"/><rect x="1711.0" y="141.4" width="3.5" height="3.5" fill="#d3daf0" transform="rotate(38 1711.0 141.4)"/><rect x="1719.6" y="62.4" width="5.200" height="3.500" fill="#979ecb"/><rect x="1760.0" y="161.7" width="5.2" height="1.7" fill="#1f7050" transform="rotate(-40 1760.0 161.7)"/><rect x="1701.8" y="151.3" width="5.2" height="1.7" fill="#bcc3e2" transform="rotate(38 1701.8 151.3)"/><rect x="1749.9" y="75.7" width="3.5" height="1.7" fill="#d3daf0" transform="rotate(38 1749.9 75.7)"/><rect x="1704.4" y="160.0" width="8.7" height="1.7" fill="#d3daf0" transform="rotate(38 1704.4 160.0)"/><rect x="1755.6" y="156.7" width="3.5" height="3.5" fill="#2a9460" transform="rotate(-40 1755.6 156.7)"/><rect x="1785.3" y="135.4" width="5.2" height="1.7" fill="#2a9460" transform="rotate(-40 1785.3 135.4)"/><rect x="1762.0" y="176.0" width="3.5" height="1.7" fill="#d3daf0" transform="rotate(38 1762.0 176.0)"/><rect x="1757.6" y="147.0" width="5.200" height="3.500" fill="#979ecb"/><rect x="1723.2" y="150.0" width="5.200" height="3.500" fill="#979ecb"/><rect x="1702.4" y="144.3" width="3.5" height="1.7" fill="#e4ecf8" transform="rotate(38 1702.4 144.3)"/><rect x="1733.2" y="66.2" width="5.200" height="3.500" fill="#979ecb"/><rect x="1740.0" y="151.0" width="5.200" height="3.500" fill="#979ecb"/><rect x="1692.0" y="89.0" width="7" height="1.7" fill="#bcc3e2" transform="rotate(38 1692.0 89.0)"/><rect x="1693.7" y="137.1" width="5.2" height="1.7" fill="#2a9460" transform="rotate(-40 1693.7 137.1)"/><rect x="1781.8" y="154.9" width="3.5" height="3.5" fill="#2a9460" transform="rotate(-40 1781.8 154.9)"/><rect x="1751.1" y="97.6" width="5.2" height="3.5" fill="#d3daf0" transform="rotate(38 1751.1 97.6)"/><rect x="1713.8" y="59.8" width="7" height="3.5" fill="#e4ecf8" transform="rotate(38 1713.8 59.8)"/><rect x="1744.5" y="147.1" width="3.5" height="1.7" fill="#e4ecf8" transform="rotate(38 1744.5 147.1)"/><rect x="1722.0" y="153.5" width="3.5" height="1.7" fill="#d3daf0" transform="rotate(38 1722.0 153.5)"/><rect x="1689.0" y="104.4" width="8.7" height="1.7" fill="#e4ecf8" transform="rotate(38 1689.0 104.4)"/><rect x="1753.7" y="143.0" width="5.2" height="1.7" fill="#2d8c5a" transform="rotate(-40 1753.7 143.0)"/><rect x="1710.3" y="149.5" width="5.200" height="3.500" fill="#979ecb"/><rect x="1728.9" y="129.4" width="5.200" height="3.500" fill="#979ecb"/><rect x="1778.9" y="92.9" width="3.5" height="3.5" fill="#2d8c5a" transform="rotate(-40 1778.9 92.9)"/><rect x="1696.5" y="82.3" width="3.5" height="3.5" fill="#d3daf0" transform="rotate(38 1696.5 82.3)"/><rect x="1698.0" y="139.8" width="8.7" height="1.7" fill="#bcc3e2" transform="rotate(38 1698.0 139.8)"/><rect x="1701.4" y="184.8" width="5.200" height="3.500" fill="#979ecb"/><rect x="1771.5" y="104.6" width="5.2" height="3.5" fill="#2d8c5a" transform="rotate(-40 1771.5 104.6)"/><rect x="1744.8" y="151.6" width="7" height="1.7" fill="#e4ecf8" transform="rotate(38 1744.8 151.6)"/><rect x="1726.8" y="143.6" width="3.5" height="1.7" fill="#bcc3e2" transform="rotate(38 1726.8 143.6)"/><rect x="1727.2" y="161.9" width="5.200" height="3.500" fill="#979ecb"/><rect x="1700.8" y="186.2" width="5.2" height="3.5" fill="#2a9460" transform="rotate(-40 1700.8 186.2)"/><rect x="1774.3" y="103.4" width="5.200" height="3.500" fill="#979ecb"/><rect x="1725.0" y="95.7" width="5.200" height="3.500" fill="#979ecb"/><rect x="1782.7" y="94.1" width="6.9" height="1.7" fill="#2a9460" transform="rotate(-40 1782.7 94.1)"/><rect x="1768.0" y="127.9" width="5.200" height="3.500" fill="#979ecb"/><rect x="1762.5" y="191.5" width="3.5" height="1.7" fill="#2a9460" transform="rotate(-40 1762.5 191.5)"/><rect x="1721.1" y="79.8" width="5.200" height="3.500" fill="#979ecb"/><rect x="1777.7" y="82.2" width="3.5" height="3.5" fill="#2a9460" transform="rotate(-40 1777.7 82.2)"/><rect x="1759.9" y="121.2" width="3.5" height="3.5" fill="#2a9460" transform="rotate(-40 1759.9 121.2)"/><rect x="1783.1" y="85.1" width="5.2" height="3.5" fill="#2d8c5a" transform="rotate(-40 1783.1 85.1)"/><rect x="1777.2" y="95.8" width="3.5" height="3.5" fill="#2a9460" transform="rotate(-40 1777.2 95.8)"/><rect x="1785.4" y="120.9" width="6.9" height="1.7" fill="#1f7050" transform="rotate(-40 1785.4 120.9)"/><rect x="1724.4" y="144.1" width="3.5" height="1.7" fill="#1f7050" transform="rotate(-40 1724.4 144.1)"/><rect x="1723.0" y="163.1" width="5.200" height="3.500" fill="#979ecb"/><rect x="1764.8" y="188.5" width="5.200" height="3.500" fill="#979ecb"/><rect x="1701.1" y="194.0" width="5.2" height="3.5" fill="#bcc3e2" transform="rotate(38 1701.1 194.0)"/><rect x="1712.5" y="124.0" width="5.2" height="3.5" fill="#d3daf0" transform="rotate(38 1712.5 124.0)"/><rect x="1729.8" y="93.2" width="7" height="1.7" fill="#c6cdea" transform="rotate(38 1729.8 93.2)"/><rect x="1731.3" y="193.4" width="5.200" height="3.500" fill="#979ecb"/><rect x="1690.6" y="161.1" width="5.200" height="3.500" fill="#979ecb"/><rect x="1748.2" y="58.5" width="5.200" height="3.500" fill="#979ecb"/><rect x="1735.5" y="132.1" width="5.2" height="1.7" fill="#2d8c5a" transform="rotate(-40 1735.5 132.1)"/><rect x="1771.9" y="136.7" width="3.5" height="3.5" fill="#1f7050" transform="rotate(-40 1771.9 136.7)"/><rect x="1758.7" y="154.9" width="5.200" height="3.500" fill="#979ecb"/><rect x="1707.8" y="158.5" width="5.200" height="3.500" fill="#979ecb"/><rect x="1695.0" y="178.8" width="5.2" height="1.7" fill="#d3daf0" transform="rotate(38 1695.0 178.8)"/><rect x="1733.8" y="146.2" width="7" height="1.7" fill="#e4ecf8" transform="rotate(38 1733.8 146.2)"/><rect x="1783.1" y="65.5" width="5.200" height="3.500" fill="#979ecb"/><rect x="1706.4" y="118.6" width="3.5" height="1.7" fill="#c6cdea" transform="rotate(38 1706.4 118.6)"/><rect x="1738.1" y="146.4" width="8.7" height="3.5" fill="#c6cdea" transform="rotate(38 1738.1 146.4)"/><rect x="1695.4" y="163.6" width="5.2" height="1.7" fill="#e4ecf8" transform="rotate(38 1695.4 163.6)"/><rect x="1751.0" y="101.9" width="5.200" height="3.500" fill="#979ecb"/><rect x="1736.8" y="68.8" width="5.2" height="1.7" fill="#1f7050" transform="rotate(-40 1736.8 68.8)"/><rect x="1703.7" y="94.3" width="6.9" height="3.5" fill="#1f7050" transform="rotate(-40 1703.7 94.3)"/><rect x="1720.6" y="113.7" width="5.200" height="3.500" fill="#979ecb"/><rect x="1769.3" y="68.7" width="5.2" height="3.5" fill="#1f7050" transform="rotate(-40 1769.3 68.7)"/><rect x="1775.4" y="91.2" width="6.9" height="3.5" fill="#2d8c5a" transform="rotate(-40 1775.4 91.2)"/><rect x="1701.3" y="166.2" width="5.200" height="3.500" fill="#979ecb"/><rect x="1772.4" y="182.3" width="6.9" height="1.7" fill="#2d8c5a" transform="rotate(-40 1772.4 182.3)"/><rect x="1689.1" y="93.5" width="7" height="1.7" fill="#d3daf0" transform="rotate(38 1689.1 93.5)"/><rect x="1701.4" y="175.9" width="5.200" height="3.500" fill="#979ecb"/><rect x="1745.5" y="181.1" width="5.200" height="3.500" fill="#979ecb"/><rect x="1733.5" y="137.1" width="8.7" height="1.7" fill="#d3daf0" transform="rotate(38 1733.5 137.1)"/><rect x="1739.2" y="88.5" width="5.200" height="3.500" fill="#979ecb"/><rect x="1725.1" y="139.1" width="7" height="3.5" fill="#d3daf0" transform="rotate(38 1725.1 139.1)"/><rect x="1743.0" y="89.2" width="5.2" height="1.7" fill="#2d8c5a" transform="rotate(-40 1743.0 89.2)"/><rect x="1777.8" y="62.7" width="6.9" height="3.5" fill="#1f7050" transform="rotate(-40 1777.8 62.7)"/><rect x="1785.8" y="118.2" width="6.9" height="3.5" fill="#2a9460" transform="rotate(-40 1785.8 118.2)"/><rect x="1744.4" y="65.9" width="5.200" height="3.500" fill="#979ecb"/><rect x="1704.0" y="98.0" width="5.200" height="3.500" fill="#979ecb"/><rect x="1710.1" y="121.6" width="5.200" height="3.500" fill="#979ecb"/><rect x="1722.6" y="117.2" width="5.200" height="3.500" fill="#979ecb"/><rect x="1766.1" y="67.9" width="8.7" height="1.7" fill="#e4ecf8" transform="rotate(38 1766.1 67.9)"/><rect x="1746.7" y="124.4" width="5.200" height="3.500" fill="#979ecb"/><rect x="1750.0" y="172.6" width="5.200" height="3.500" fill="#979ecb"/><rect x="1737.5" y="106.5" width="5.2" height="1.7" fill="#e4ecf8" transform="rotate(38 1737.5 106.5)"/><rect x="1726.6" y="140.7" width="3.5" height="3.5" fill="#2a9460" transform="rotate(-40 1726.6 140.7)"/><rect x="1769.0" y="142.0" width="5.200" height="3.500" fill="#979ecb"/><rect x="1767.1" y="94.5" width="5.200" height="3.500" fill="#979ecb"/><rect x="1722.1" y="188.4" width="5.200" height="3.500" fill="#979ecb"/><rect x="1727.8" y="82.2" width="5.200" height="3.500" fill="#979ecb"/><rect x="1721.3" y="60.2" width="5.200" height="3.500" fill="#979ecb"/><rect x="1686.7" y="64.2" width="3.5" height="3.5" fill="#2a9460" transform="rotate(-40 1686.7 64.2)"/><rect x="1734.3" y="187.0" width="5.2" height="1.7" fill="#d3daf0" transform="rotate(38 1734.3 187.0)"/><rect x="1697.0" y="64.9" width="7" height="1.7" fill="#d3daf0" transform="rotate(38 1697.0 64.9)"/><rect x="1721.7" y="109.0" width="7" height="1.7" fill="#e4ecf8" transform="rotate(38 1721.7 109.0)"/><rect x="1736.2" y="85.7" width="5.200" height="3.500" fill="#979ecb"/><rect x="1738.9" y="184.7" width="5.200" height="3.500" fill="#979ecb"/><rect x="1749.9" y="61.4" width="5.200" height="3.500" fill="#979ecb"/><rect x="1771.5" y="68.5" width="6.9" height="1.7" fill="#2a9460" transform="rotate(-40 1771.5 68.5)"/><rect x="1736.6" y="162.5" width="8.7" height="1.7" fill="#d3daf0" transform="rotate(38 1736.6 162.5)"/><rect x="1730.1" y="163.9" width="5.200" height="3.500" fill="#979ecb"/><rect x="1686.9" y="103.0" width="7" height="1.7" fill="#e4ecf8" transform="rotate(38 1686.9 103.0)"/><rect x="1688.9" y="72.5" width="5.2" height="3.5" fill="#d3daf0" transform="rotate(38 1688.9 72.5)"/><rect x="1758.9" y="134.9" width="8.7" height="1.7" fill="#bcc3e2" transform="rotate(38 1758.9 134.9)"/><rect x="1772.7" y="140.0" width="5.2" height="1.7" fill="#d3daf0" transform="rotate(38 1772.7 140.0)"/><rect x="1749.1" y="175.2" width="8.7" height="3.5" fill="#e4ecf8" transform="rotate(38 1749.1 175.2)"/><rect x="1782.9" y="87.7" width="5.2" height="3.5" fill="#2a9460" transform="rotate(-40 1782.9 87.7)"/><rect x="1761.6" y="148.0" width="7" height="1.7" fill="#bcc3e2" transform="rotate(38 1761.6 148.0)"/><rect x="1721.8" y="114.4" width="5.2" height="3.5" fill="#c6cdea" transform="rotate(38 1721.8 114.4)"/><rect x="1751.6" y="142.2" width="3.5" height="1.7" fill="#e4ecf8" transform="rotate(38 1751.6 142.2)"/><rect x="1708.4" y="93.2" width="5.200" height="3.500" fill="#979ecb"/><rect x="1782.8" y="133.2" width="3.5" height="3.5" fill="#2a9460" transform="rotate(-40 1782.8 133.2)"/><rect x="1724.9" y="106.3" width="6.9" height="1.7" fill="#1f7050" transform="rotate(-40 1724.9 106.3)"/><rect x="1777.7" y="95.3" width="5.200" height="3.500" fill="#979ecb"/><rect x="1699.0" y="145.2" width="6.9" height="3.5" fill="#2a9460" transform="rotate(-40 1699.0 145.2)"/><rect x="1785.4" y="137.8" width="5.200" height="3.500" fill="#979ecb"/><rect x="1710.2" y="144.2" width="3.5" height="1.7" fill="#e4ecf8" transform="rotate(38 1710.2 144.2)"/><rect x="1747.5" y="167.4" width="5.200" height="3.500" fill="#979ecb"/><rect x="1778.5" y="137.6" width="3.5" height="1.7" fill="#d3daf0" transform="rotate(38 1778.5 137.6)"/><rect x="1751.5" y="175.7" width="5.200" height="3.500" fill="#979ecb"/><rect x="1738.4" y="92.3" width="6.9" height="3.5" fill="#2d8c5a" transform="rotate(-40 1738.4 92.3)"/><rect x="1721.3" y="135.8" width="3.5" height="1.7" fill="#bcc3e2" transform="rotate(38 1721.3 135.8)"/><rect x="1691.5" y="69.1" width="5.200" height="3.500" fill="#979ecb"/><rect x="1721.8" y="119.6" width="5.2" height="1.7" fill="#bcc3e2" transform="rotate(38 1721.8 119.6)"/><rect x="1718.7" y="146.1" width="5.2" height="1.7" fill="#e4ecf8" transform="rotate(38 1718.7 146.1)"/><rect x="1772.3" y="180.4" width="5.200" height="3.500" fill="#979ecb"/><rect x="1725.1" y="143.1" width="5.2" height="1.7" fill="#e4ecf8" transform="rotate(38 1725.1 143.1)"/><rect x="1695.9" y="83.9" width="5.2" height="3.5" fill="#e4ecf8" transform="rotate(38 1695.9 83.9)"/><rect x="1721.8" y="83.7" width="3.5" height="3.5" fill="#1f7050" transform="rotate(-40 1721.8 83.7)"/><rect x="1774.4" y="153.8" width="5.200" height="3.500" fill="#979ecb"/><rect x="1762.9" y="142.3" width="3.5" height="1.7" fill="#2d8c5a" transform="rotate(-40 1762.9 142.3)"/><rect x="1733.4" y="146.6" width="5.200" height="3.500" fill="#979ecb"/><rect x="1721.2" y="183.9" width="8.7" height="3.5" fill="#d3daf0" transform="rotate(38 1721.2 183.9)"/><rect x="1718.8" y="154.8" width="3.5" height="3.5" fill="#bcc3e2" transform="rotate(38 1718.8 154.8)"/><rect x="1732.4" y="152.2" width="7" height="3.5" fill="#e4ecf8" transform="rotate(38 1732.4 152.2)"/><rect x="1742.7" y="89.2" width="5.200" height="3.500" fill="#979ecb"/><rect x="1763.2" y="140.4" width="5.200" height="3.500" fill="#979ecb"/><rect x="1713.5" y="117.6" width="5.200" height="3.500" fill="#979ecb"/><rect x="1730.8" y="106.1" width="5.2" height="1.7" fill="#1f7050" transform="rotate(-40 1730.8 106.1)"/><rect x="1709.3" y="128.6" width="5.200" height="3.500" fill="#979ecb"/><rect x="1770.9" y="176.2" width="5.200" height="3.500" fill="#979ecb"/><rect x="1693.8" y="184.9" width="3.5" height="3.5" fill="#c6cdea" transform="rotate(38 1693.8 184.9)"/><rect x="1687.8" y="64.0" width="3.5" height="1.7" fill="#d3daf0" transform="rotate(38 1687.8 64.0)"/><rect x="1771.2" y="188.0" width="6.9" height="1.7" fill="#2d8c5a" transform="rotate(-40 1771.2 188.0)"/><rect x="1755.1" y="59.5" width="5.200" height="3.500" fill="#979ecb"/><rect x="1751.1" y="113.0" width="5.200" height="3.500" fill="#979ecb"/><rect x="1758.5" y="134.0" width="3.5" height="3.5" fill="#1f7050" transform="rotate(-40 1758.5 134.0)"/><rect x="1713.8" y="135.8" width="7" height="3.5" fill="#bcc3e2" transform="rotate(38 1713.8 135.8)"/><rect x="1749.3" y="141.7" width="5.200" height="3.500" fill="#979ecb"/><rect x="1765.2" y="145.1" width="5.200" height="3.500" fill="#979ecb"/><rect x="1782.3" y="192.3" width="5.200" height="3.500" fill="#979ecb"/><rect x="1716.0" y="78.4" width="3.5" height="1.7" fill="#e4ecf8" transform="rotate(38 1716.0 78.4)"/><rect x="1742.8" y="160.1" width="5.2" height="1.7" fill="#bcc3e2" transform="rotate(38 1742.8 160.1)"/><rect x="1768.5" y="163.8" width="3.5" height="3.5" fill="#1f7050" transform="rotate(-40 1768.5 163.8)"/><rect x="1744.1" y="74.2" width="5.2" height="1.7" fill="#bcc3e2" transform="rotate(38 1744.1 74.2)"/><rect x="1773.5" y="155.0" width="6.9" height="1.7" fill="#2d8c5a" transform="rotate(-40 1773.5 155.0)"/><rect x="1767.4" y="101.8" width="3.5" height="1.7" fill="#c6cdea" transform="rotate(38 1767.4 101.8)"/><rect x="1713.7" y="99.1" width="7" height="3.5" fill="#c6cdea" transform="rotate(38 1713.7 99.1)"/><rect x="1782.0" y="193.3" width="5.200" height="3.500" fill="#979ecb"/><rect x="1780.1" y="70.3" width="8.7" height="3.5" fill="#bcc3e2" transform="rotate(38 1780.1 70.3)"/><rect x="1779.6" y="111.0" width="3.5" height="3.5" fill="#2d8c5a" transform="rotate(-40 1779.6 111.0)"/><rect x="1710.4" y="88.3" width="5.200" height="3.500" fill="#979ecb"/><rect x="1782.5" y="110.6" width="5.200" height="3.500" fill="#979ecb"/><rect x="1756.4" y="120.6" width="5.200" height="3.500" fill="#979ecb"/><rect x="1717.5" y="159.4" width="5.2" height="1.7" fill="#d3daf0" transform="rotate(38 1717.5 159.4)"/><rect x="1694.3" y="124.4" width="5.200" height="3.500" fill="#979ecb"/><rect x="1727.2" y="127.1" width="8.7" height="3.5" fill="#e4ecf8" transform="rotate(38 1727.2 127.1)"/><rect x="1770.6" y="150.1" width="5.200" height="3.500" fill="#979ecb"/><rect x="1719.4" y="133.7" width="5.200" height="3.500" fill="#979ecb"/><rect x="1756.7" y="122.6" width="5.2" height="1.7" fill="#1f7050" transform="rotate(-40 1756.7 122.6)"/><rect x="1732.9" y="191.7" width="3.5" height="1.7" fill="#1f7050" transform="rotate(-40 1732.9 191.7)"/><rect x="1697.9" y="70.6" width="5.2" height="1.7" fill="#d3daf0" transform="rotate(38 1697.9 70.6)"/><rect x="1735.3" y="92.4" width="5.200" height="3.500" fill="#979ecb"/><rect x="1745.4" y="128.5" width="5.200" height="3.500" fill="#979ecb"/><rect x="1747.7" y="178.6" width="5.200" height="3.500" fill="#979ecb"/><rect x="1721.8" y="178.8" width="5.200" height="3.500" fill="#979ecb"/><rect x="1688.2" y="103.9" width="5.200" height="3.500" fill="#979ecb"/><rect x="1755.8" y="154.7" width="5.200" height="3.500" fill="#979ecb"/><rect x="1758.6" y="183.1" width="3.5" height="3.5" fill="#2a9460" transform="rotate(-40 1758.6 183.1)"/><rect x="1770.8" y="87.5" width="3.5" height="1.7" fill="#2a9460" transform="rotate(-40 1770.8 87.5)"/><rect x="1698.0" y="75.2" width="5.200" height="3.500" fill="#979ecb"/><rect x="1748.1" y="66.6" width="7" height="3.5" fill="#bcc3e2" transform="rotate(38 1748.1 66.6)"/><rect x="1749.3" y="148.0" width="3.5" height="1.7" fill="#2d8c5a" transform="rotate(-40 1749.3 148.0)"/><rect x="1777.8" y="77.1" width="5.200" height="3.500" fill="#979ecb"/><rect x="1749.4" y="138.3" width="5.200" height="3.500" fill="#979ecb"/><rect x="1726.6" y="174.4" width="5.200" height="3.500" fill="#979ecb"/><rect x="1714.0" y="91.2" width="7" height="1.7" fill="#c6cdea" transform="rotate(38 1714.0 91.2)"/><rect x="1763.7" y="172.6" width="5.200" height="3.500" fill="#979ecb"/><rect x="1697.8" y="111.0" width="5.200" height="3.500" fill="#979ecb"/><rect x="1784.7" y="190.6" width="5.2" height="1.7" fill="#1f7050" transform="rotate(-40 1784.7 190.6)"/><rect x="1703.5" y="115.9" width="8.7" height="1.7" fill="#d3daf0" transform="rotate(38 1703.5 115.9)"/><rect x="1752.3" y="142.5" width="3.5" height="1.7" fill="#1f7050" transform="rotate(-40 1752.3 142.5)"/><rect x="1769.5" y="116.5" width="8.7" height="3.5" fill="#c6cdea" transform="rotate(38 1769.5 116.5)"/><rect x="1734.6" y="85.4" width="5.200" height="3.500" fill="#979ecb"/><rect x="1739.5" y="73.6" width="8.7" height="3.5" fill="#d3daf0" transform="rotate(38 1739.5 73.6)"/><rect x="1700.1" y="126.0" width="5.200" height="3.500" fill="#979ecb"/><rect x="1772.9" y="90.0" width="5.200" height="3.500" fill="#979ecb"/><rect x="1785.6" y="79.1" width="5.200" height="3.500" fill="#979ecb"/><rect x="1705.8" y="64.1" width="5.2" height="1.7" fill="#c6cdea" transform="rotate(38 1705.8 64.1)"/><rect x="1769.3" y="71.3" width="5.200" height="3.500" fill="#979ecb"/><rect x="1765.8" y="190.1" width="5.2" height="1.7" fill="#2d8c5a" transform="rotate(-40 1765.8 190.1)"/><rect x="1770.7" y="128.9" width="3.5" height="3.5" fill="#2a9460" transform="rotate(-40 1770.7 128.9)"/><rect x="1767.7" y="96.2" width="5.200" height="3.500" fill="#979ecb"/><rect x="1740.6" y="158.3" width="8.7" height="1.7" fill="#d3daf0" transform="rotate(38 1740.6 158.3)"/><rect x="1733.1" y="120.3" width="5.200" height="3.500" fill="#979ecb"/><rect x="1763.8" y="179.3" width="5.2" height="1.7" fill="#d3daf0" transform="rotate(38 1763.8 179.3)"/><rect x="1779.4" y="80.3" width="6.9" height="1.7" fill="#2a9460" transform="rotate(-40 1779.4 80.3)"/><rect x="1731.8" y="192.8" width="5.200" height="3.500" fill="#979ecb"/><rect x="1711.3" y="64.4" width="7" height="1.7" fill="#d3daf0" transform="rotate(38 1711.3 64.4)"/><rect x="1770.8" y="96.9" width="5.200" height="3.500" fill="#979ecb"/><rect x="1697.9" y="170.4" width="5.200" height="3.500" fill="#979ecb"/><rect x="1783.3" y="111.6" width="5.200" height="3.500" fill="#979ecb"/><rect x="1734.1" y="69.7" width="5.200" height="3.500" fill="#979ecb"/><rect x="1701.9" y="146.8" width="5.200" height="3.500" fill="#979ecb"/><rect x="1753.0" y="148.2" width="5.200" height="3.500" fill="#979ecb"/><rect x="1754.2" y="65.4" width="5.200" height="3.500" fill="#979ecb"/><rect x="1780.7" y="168.9" width="7" height="1.7" fill="#c6cdea" transform="rotate(38 1780.7 168.9)"/><rect x="1757.8" y="188.4" width="5.200" height="3.500" fill="#979ecb"/><rect x="1704.4" y="89.3" width="5.2" height="1.7" fill="#2d8c5a" transform="rotate(-40 1704.4 89.3)"/><rect x="1704.6" y="75.9" width="3.5" height="1.7" fill="#bcc3e2" transform="rotate(38 1704.6 75.9)"/><rect x="1701.0" y="88.3" width="5.200" height="3.500" fill="#979ecb"/><rect x="1745.1" y="186.0" width="3.5" height="1.7" fill="#2d8c5a" transform="rotate(-40 1745.1 186.0)"/><rect x="1725.2" y="135.7" width="5.200" height="3.500" fill="#979ecb"/><rect x="1735.0" y="72.5" width="6.9" height="1.7" fill="#1f7050" transform="rotate(-40 1735.0 72.5)"/><rect x="1736.2" y="85.9" width="7" height="1.7" fill="#c6cdea" transform="rotate(38 1736.2 85.9)"/><rect x="1776.6" y="99.4" width="5.2" height="1.7" fill="#c6cdea" transform="rotate(38 1776.6 99.4)"/><rect x="1720.3" y="164.6" width="5.2" height="1.7" fill="#bcc3e2" transform="rotate(38 1720.3 164.6)"/><rect x="1779.9" y="118.4" width="5.200" height="3.500" fill="#979ecb"/><rect x="1739.4" y="152.9" width="5.200" height="3.500" fill="#979ecb"/><rect x="1731.4" y="66.4" width="6.9" height="3.5" fill="#2a9460" transform="rotate(-40 1731.4 66.4)"/><rect x="1744.1" y="124.6" width="3.5" height="3.5" fill="#e4ecf8" transform="rotate(38 1744.1 124.6)"/><rect x="1778.0" y="121.2" width="5.2" height="3.5" fill="#2d8c5a" transform="rotate(-40 1778.0 121.2)"/><rect x="1774.1" y="188.3" width="3.5" height="3.5" fill="#1f7050" transform="rotate(-40 1774.1 188.3)"/><rect x="1757.2" y="148.2" width="5.200" height="3.500" fill="#979ecb"/><rect x="1784.0" y="110.9" width="5.200" height="3.500" fill="#979ecb"/><rect x="1765.8" y="122.7" width="5.2" height="1.7" fill="#2d8c5a" transform="rotate(-40 1765.8 122.7)"/><rect x="1701.5" y="59.6" width="7" height="3.5" fill="#c6cdea" transform="rotate(38 1701.5 59.6)"/><rect x="1686.2" y="110.2" width="5.200" height="3.500" fill="#979ecb"/><rect x="1716.4" y="189.9" width="5.200" height="3.500" fill="#979ecb"/><rect x="1693.1" y="99.6" width="5.200" height="3.500" fill="#979ecb"/><rect x="1784.2" y="77.8" width="5.2" height="1.7" fill="#2a9460" transform="rotate(-40 1784.2 77.8)"/><rect x="1704.8" y="65.5" width="5.200" height="3.500" fill="#979ecb"/><rect x="1687.7" y="176.3" width="8.7" height="1.7" fill="#e4ecf8" transform="rotate(38 1687.7 176.3)"/><rect x="1775.6" y="67.4" width="5.2" height="1.7" fill="#1f7050" transform="rotate(-40 1775.6 67.4)"/><rect x="1707.9" y="142.8" width="3.5" height="1.7" fill="#1f7050" transform="rotate(-40 1707.9 142.8)"/><rect x="1695.1" y="167.6" width="7" height="1.7" fill="#c6cdea" transform="rotate(38 1695.1 167.6)"/><rect x="1753.4" y="151.8" width="3.5" height="1.7" fill="#2d8c5a" transform="rotate(-40 1753.4 151.8)"/><rect x="1739.0" y="84.9" width="5.200" height="3.500" fill="#979ecb"/><rect x="1772.7" y="71.6" width="3.5" height="1.7" fill="#2d8c5a" transform="rotate(-40 1772.7 71.6)"/><rect x="1706.5" y="195.6" width="5.2" height="1.7" fill="#1f7050" transform="rotate(-40 1706.5 195.6)"/><rect x="1723.0" y="106.5" width="5.200" height="3.500" fill="#979ecb"/><rect x="1731.9" y="76.8" width="5.2" height="3.5" fill="#2a9460" transform="rotate(-40 1731.9 76.8)"/><rect x="1751.8" y="161.8" width="3.5" height="3.5" fill="#1f7050" transform="rotate(-40 1751.8 161.8)"/><rect x="1764.5" y="118.4" width="3.5" height="1.7" fill="#2d8c5a" transform="rotate(-40 1764.5 118.4)"/><rect x="1743.2" y="117.6" width="6.9" height="1.7" fill="#2a9460" transform="rotate(-40 1743.2 117.6)"/><rect x="1780.4" y="195.2" width="3.5" height="3.5" fill="#2d8c5a" transform="rotate(-40 1780.4 195.2)"/><rect x="1760.3" y="178.4" width="5.200" height="3.500" fill="#979ecb"/><rect x="1750.9" y="76.5" width="3.5" height="1.7" fill="#e4ecf8" transform="rotate(38 1750.9 76.5)"/><rect x="1686.2" y="131.2" width="3.5" height="1.7" fill="#d3daf0" transform="rotate(38 1686.2 131.2)"/><rect x="1736.0" y="157.3" width="5.200" height="3.500" fill="#979ecb"/><rect x="1691.0" y="95.2" width="3.5" height="1.7" fill="#bcc3e2" transform="rotate(38 1691.0 95.2)"/><rect x="1773.6" y="131.5" width="3.5" height="1.7" fill="#2a9460" transform="rotate(-40 1773.6 131.5)"/><rect x="1713.0" y="159.2" width="7" height="1.7" fill="#c6cdea" transform="rotate(38 1713.0 159.2)"/><rect x="1775.4" y="136.7" width="3.5" height="3.5" fill="#2d8c5a" transform="rotate(-40 1775.4 136.7)"/><rect x="1754.0" y="90.6" width="5.200" height="3.500" fill="#979ecb"/><rect x="1755.6" y="125.6" width="5.2" height="1.7" fill="#e4ecf8" transform="rotate(38 1755.6 125.6)"/><rect x="1763.7" y="92.8" width="5.200" height="3.500" fill="#979ecb"/><rect x="1763.7" y="125.6" width="5.200" height="3.500" fill="#979ecb"/><rect x="1784.5" y="172.2" width="5.200" height="3.500" fill="#979ecb"/><rect x="1755.8" y="133.8" width="5.200" height="3.500" fill="#979ecb"/><rect x="1688.1" y="173.0" width="8.7" height="3.5" fill="#bcc3e2" transform="rotate(38 1688.1 173.0)"/><rect x="1759.0" y="190.5" width="5.200" height="3.500" fill="#979ecb"/><rect x="1732.6" y="187.2" width="5.2" height="1.7" fill="#c6cdea" transform="rotate(38 1732.6 187.2)"/><rect x="1756.6" y="172.6" width="5.200" height="3.500" fill="#979ecb"/><rect x="1736.6" y="119.4" width="7" height="1.7" fill="#d3daf0" transform="rotate(38 1736.6 119.4)"/><rect x="1735.4" y="157.4" width="5.200" height="3.500" fill="#979ecb"/><rect x="1715.1" y="154.4" width="5.200" height="3.500" fill="#979ecb"/><rect x="1719.9" y="136.1" width="5.200" height="3.500" fill="#979ecb"/><rect x="1690.7" y="158.6" width="7" height="1.7" fill="#d3daf0" transform="rotate(38 1690.7 158.6)"/><rect x="1731.9" y="154.4" width="7" height="1.7" fill="#e4ecf8" transform="rotate(38 1731.9 154.4)"/><rect x="1724.7" y="171.7" width="5.200" height="3.500" fill="#979ecb"/><rect x="1765.4" y="159.2" width="5.200" height="3.500" fill="#979ecb"/><rect x="1777.3" y="145.5" width="5.200" height="3.500" fill="#979ecb"/><rect x="1708.7" y="71.0" width="5.200" height="3.500" fill="#979ecb"/><rect x="1740.0" y="145.6" width="5.2" height="1.7" fill="#2d8c5a" transform="rotate(-40 1740.0 145.6)"/><rect x="1702.1" y="175.9" width="5.200" height="3.500" fill="#979ecb"/><rect x="1761.3" y="74.7" width="5.200" height="3.500" fill="#979ecb"/><rect x="1777.6" y="63.9" width="3.5" height="1.7" fill="#d3daf0" transform="rotate(38 1777.6 63.9)"/><rect x="1764.2" y="86.4" width="5.200" height="3.500" fill="#979ecb"/><rect x="1725.1" y="188.4" width="5.200" height="3.500" fill="#979ecb"/><rect x="1766.9" y="185.9" width="5.200" height="3.500" fill="#979ecb"/><rect x="1705.5" y="65.8" width="5.200" height="3.500" fill="#979ecb"/><rect x="1721.8" y="76.5" width="5.200" height="3.500" fill="#979ecb"/><rect x="1764.3" y="97.7" width="5.200" height="3.500" fill="#979ecb"/><rect x="1705.7" y="188.8" width="3.5" height="1.7" fill="#c6cdea" transform="rotate(38 1705.7 188.8)"/><rect x="1703.1" y="134.4" width="7" height="3.5" fill="#c6cdea" transform="rotate(38 1703.1 134.4)"/><rect x="1727.0" y="118.3" width="8.7" height="3.5" fill="#d3daf0" transform="rotate(38 1727.0 118.3)"/><rect x="1733.2" y="93.2" width="5.200" height="3.500" fill="#979ecb"/><rect x="1752.3" y="63.6" width="5.2" height="1.7" fill="#1f7050" transform="rotate(-40 1752.3 63.6)"/><rect x="1716.4" y="71.7" width="5.200" height="3.500" fill="#979ecb"/><rect x="1715.4" y="147.1" width="6.9" height="1.7" fill="#2d8c5a" transform="rotate(-40 1715.4 147.1)"/><rect x="1695.3" y="100.4" width="5.200" height="3.500" fill="#979ecb"/><rect x="1723.9" y="147.2" width="5.200" height="3.500" fill="#979ecb"/><rect x="1785.4" y="191.9" width="3.5" height="3.5" fill="#2a9460" transform="rotate(-40 1785.4 191.9)"/><rect x="1783.7" y="104.3" width="7" height="1.7" fill="#c6cdea" transform="rotate(38 1783.7 104.3)"/><rect x="1730.5" y="75.4" width="5.2" height="3.5" fill="#e4ecf8" transform="rotate(38 1730.5 75.4)"/><rect x="1706.8" y="138.1" width="7" height="1.7" fill="#c6cdea" transform="rotate(38 1706.8 138.1)"/><rect x="1730.3" y="66.5" width="5.200" height="3.500" fill="#979ecb"/><rect x="1706.0" y="140.5" width="5.200" height="3.500" fill="#979ecb"/><rect x="1719.3" y="134.2" width="5.2" height="1.7" fill="#2d8c5a" transform="rotate(-40 1719.3 134.2)"/><rect x="1755.6" y="137.2" width="5.200" height="3.500" fill="#979ecb"/><rect x="1768.5" y="135.0" width="5.2" height="1.7" fill="#1f7050" transform="rotate(-40 1768.5 135.0)"/><rect x="1754.7" y="178.3" width="8.7" height="1.7" fill="#bcc3e2" transform="rotate(38 1754.7 178.3)"/><rect x="1695.7" y="88.6" width="3.5" height="1.7" fill="#c6cdea" transform="rotate(38 1695.7 88.6)"/><rect x="1772.5" y="180.6" width="7" height="1.7" fill="#bcc3e2" transform="rotate(38 1772.5 180.6)"/><rect x="1744.9" y="192.5" width="5.2" height="1.7" fill="#d3daf0" transform="rotate(38 1744.9 192.5)"/></g><rect x="1749.4" y="194.3" width="6.900" height="3.500" fill="#2d8c5a" transform="rotate(-40 1752.4 194.3)"/><rect x="1749.6" y="194.2" width="6.900" height="3.500" fill="#1f7050" transform="rotate(-40 1752.6 194.2)"/><rect x="1762.5" y="185.2" width="6.900" height="3.500" fill="#2d8c5a" transform="rotate(-40 1765.5 185.2)"/><rect x="1766.2" y="183.4" width="6.900" height="3.500" fill="#2d8c5a" transform="rotate(-40 1769.2 183.4)"/><rect x="1774.5" y="178.5" width="6.900" height="3.500" fill="#1f7050" transform="rotate(-40 1777.5 178.5)"/><rect x="1779.9" y="173.1" width="6.900" height="3.500" fill="#1f7050" transform="rotate(-40 1782.9 173.1)"/><rect x="1773.6" y="155.9" width="6.900" height="3.500" fill="#1f7050" transform="rotate(-40 1776.6 155.9)"/><rect x="1774.2" y="156.8" width="6.900" height="3.500" fill="#2d8c5a" transform="rotate(-40 1777.2 156.8)"/><rect x="1771.7" y="150.2" width="6.900" height="3.500" fill="#1f7050" transform="rotate(-40 1774.7 150.2)"/><rect x="1776.5" y="137.4" width="6.900" height="3.500" fill="#1f7050" transform="rotate(-40 1779.5 137.4)"/><rect x="1774.9" y="133.0" width="6.900" height="3.500" fill="#1f7050" transform="rotate(-40 1777.9 133.0)"/><rect x="1776.4" y="135.2" width="6.900" height="3.500" fill="#1f7050" transform="rotate(-40 1779.4 135.2)"/><rect x="1763.7" y="113.4" width="6.900" height="3.500" fill="#1f7050" transform="rotate(-40 1766.7 113.4)"/><rect x="1764.9" y="108.2" width="6.900" height="3.500" fill="#1f7050" transform="rotate(-40 1767.9 108.2)"/><rect x="1760.8" y="92.9" width="6.900" height="3.500" fill="#1f7050" transform="rotate(-40 1763.8 92.9)"/><rect x="1763.4" y="95.9" width="6.900" height="3.500" fill="#2d8c5a" transform="rotate(-40 1766.4 95.9)"/><rect x="1753.4" y="78.3" width="6.900" height="3.500" fill="#1f7050" transform="rotate(-40 1756.4 78.3)"/><rect x="1753.8" y="73.6" width="6.900" height="3.500" fill="#2d8c5a" transform="rotate(-40 1756.8 73.6)"/></g><rect x="1049.5" y="182.6" width="5.0" height="6.0" fill="#6b3a28" /><rect x="1084.5" y="182.6" width="5.0" height="6.0" fill="#6b3a28" /><rect x="1054.5" y="190.6" width="6.0" height="5.0" fill="#6b3a28" /><rect x="1079.5" y="190.6" width="6.0" height="5.0" fill="#6b3a28" /><circle cx="1069.5" cy="181.6" r="19.0" fill="#5cb6d2" opacity=".8"/><polygon points="1053.5,185.6 1061.5,179.6 1066.5,171.6 1071.5,168.6 1073.5,176.6 1081.5,169.6 1084.5,183.6 1082.5,190.6 1073.5,191.6 1067.5,194.6 1060.5,191.6 1055.5,192.6" fill="#2c616a" /><circle cx="1069.5" cy="181.6" r="19.0" fill="#4fb0cf" opacity=".15" stroke="#2a9cbd" stroke-width="1"/><rect x="1129.0" y="158.0" width="5.0" height="6.0" fill="#6b3a28" /><rect x="1164.0" y="158.0" width="5.0" height="6.0" fill="#6b3a28" /><rect x="1134.0" y="166.0" width="6.0" height="5.0" fill="#6b3a28" /><rect x="1159.0" y="166.0" width="6.0" height="5.0" fill="#6b3a28" /><circle cx="1149.0" cy="157.0" r="19.0" fill="#5cb6d2" opacity=".8"/><polygon points="1133.0,161.0 1141.0,155.0 1146.0,147.0 1151.0,144.0 1153.0,152.0 1161.0,145.0 1164.0,159.0 1162.0,166.0 1153.0,167.0 1147.0,170.0 1140.0,167.0 1135.0,168.0" fill="#2c616a" /><circle cx="1149.0" cy="157.0" r="19.0" fill="#4fb0cf" opacity=".15" stroke="#2a9cbd" stroke-width="1"/><rect x="1203.6" y="188.0" width="5.0" height="6.0" fill="#6b3a28" /><rect x="1238.6" y="188.0" width="5.0" height="6.0" fill="#6b3a28" /><rect x="1208.6" y="196.0" width="6.0" height="5.0" fill="#6b3a28" /><rect x="1233.6" y="196.0" width="6.0" height="5.0" fill="#6b3a28" /><circle cx="1223.6" cy="187.0" r="19.0" fill="#5cb6d2" opacity=".8"/><polygon points="1207.6,191.0 1215.6,185.0 1220.6,177.0 1225.6,174.0 1227.6,182.0 1235.6,175.0 1238.6,189.0 1236.6,196.0 1227.6,197.0 1221.6,200.0 1214.6,197.0 1209.6,198.0" fill="#2c616a" /><circle cx="1223.6" cy="187.0" r="19.0" fill="#4fb0cf" opacity=".15" stroke="#2a9cbd" stroke-width="1"/><rect x="1588.0" y="170.6" width="5.0" height="6.0" fill="#6b3a28" /><rect x="1623.0" y="170.6" width="5.0" height="6.0" fill="#6b3a28" /><rect x="1593.0" y="178.6" width="6.0" height="5.0" fill="#6b3a28" /><rect x="1618.0" y="178.6" width="6.0" height="5.0" fill="#6b3a28" /><circle cx="1608.0" cy="169.6" r="19.0" fill="#5cb6d2" opacity=".8"/><polygon points="1592.0,173.6 1600.0,167.6 1605.0,159.6 1610.0,156.6 1612.0,164.6 1620.0,157.6 1623.0,171.6 1621.0,178.6 1612.0,179.6 1606.0,182.6 1599.0,179.6 1594.0,180.6" fill="#2c616a" /><circle cx="1608.0" cy="169.6" r="19.0" fill="#4fb0cf" opacity=".15" stroke="#2a9cbd" stroke-width="1"/><rect x="1664.6" y="134.0" width="5.0" height="6.0" fill="#6b3a28" /><rect x="1699.6" y="134.0" width="5.0" height="6.0" fill="#6b3a28" /><rect x="1669.6" y="142.0" width="6.0" height="5.0" fill="#6b3a28" /><rect x="1694.6" y="142.0" width="6.0" height="5.0" fill="#6b3a28" /><circle cx="1684.6" cy="133.0" r="19.0" fill="#5cb6d2" opacity=".8"/><polygon points="1668.6,137.0 1676.6,131.0 1681.6,123.0 1686.6,120.0 1688.6,128.0 1696.6,121.0 1699.6,135.0 1697.6,142.0 1688.6,143.0 1682.6,146.0 1675.6,143.0 1670.6,144.0" fill="#2c616a" /><circle cx="1684.6" cy="133.0" r="19.0" fill="#4fb0cf" opacity=".15" stroke="#2a9cbd" stroke-width="1"/><rect x="1716.0" y="193.0" width="5.0" height="6.0" fill="#6b3a28" /><rect x="1751.0" y="193.0" width="5.0" height="6.0" fill="#6b3a28" /><rect x="1721.0" y="201.0" width="6.0" height="5.0" fill="#6b3a28" /><rect x="1746.0" y="201.0" width="6.0" height="5.0" fill="#6b3a28" /><circle cx="1736.0" cy="192.0" r="19.0" fill="#5cb6d2" opacity=".8"/><polygon points="1720.0,196.0 1728.0,190.0 1733.0,182.0 1738.0,179.0 1740.0,187.0 1748.0,180.0 1751.0,194.0 1749.0,201.0 1740.0,202.0 1734.0,205.0 1727.0,202.0 1722.0,203.0" fill="#2c616a" /><circle cx="1736.0" cy="192.0" r="19.0" fill="#4fb0cf" opacity=".15" stroke="#2a9cbd" stroke-width="1"/><rect x="1016.0" y="64.0" width="6.0" height="276.0" fill="#bcd5e6" /><linearGradient id="post" x1="0" x2="1"><stop offset="0" stop-color="#3f90ab"/><stop offset=".35" stop-color="#58a7c2"/><stop offset="1" stop-color="#74bbd3"/></linearGradient><rect x="1022.0" y="64.0" width="13.0" height="276.0" fill="url(#post)" /><rect x="1022.0" y="351.0" width="88.0" height="9.0" fill="#c8d7ec" /><rect x="1022.0" y="313.0" width="82.0" height="25.0" fill="url(#lat)" /><rect x="1022.0" y="338.0" width="82.0" height="14.0" fill="#5eadca" /><path d="M1022 352L1049 338" stroke="#4a9cba" stroke-width="1"/><rect x="1022.0" y="324.0" width="27.0" height="14.0" fill="#62b1cd" opacity=".9"/><rect x="1022.0" y="309.0" width="88.0" height="4.3" fill="#5d7e90" /><rect x="1104.0" y="309.0" width="6.0" height="31.0" fill="#5d7e90" /><rect x="1022.0" y="313.0" width="13.0" height="27.0" fill="#58a7c2" /><rect x="1104.0" y="378.5" width="89.0" height="9.0" fill="#c8d7ec" /><rect x="1104.0" y="340.5" width="83.0" height="25.0" fill="url(#lat)" /><rect x="1104.0" y="365.5" width="83.0" height="14.0" fill="#5eadca" /><path d="M1104 379.5L1131 365.5" stroke="#4a9cba" stroke-width="1"/><rect x="1104.0" y="351.5" width="27.0" height="14.0" fill="#62b1cd" opacity=".9"/><rect x="1104.0" y="336.5" width="89.0" height="4.3" fill="#5d7e90" /><rect x="1187.0" y="336.5" width="6.0" height="31.0" fill="#5d7e90" /><rect x="1187.0" y="406.7" width="199.0" height="9.0" fill="#c8d7ec" /><rect x="1187.0" y="368.7" width="193.0" height="25.0" fill="url(#lat)" /><rect x="1187.0" y="393.7" width="193.0" height="14.0" fill="#5eadca" /><path d="M1187 407.7L1214 393.7" stroke="#4a9cba" stroke-width="1"/><rect x="1187.0" y="379.7" width="27.0" height="14.0" fill="#62b1cd" opacity=".9"/><rect x="1187.0" y="364.7" width="199.0" height="4.3" fill="#5d7e90" /><rect x="1492.0" y="406.7" width="324.0" height="9.0" fill="#c8d7ec" /><rect x="1492.0" y="368.7" width="318.0" height="25.0" fill="url(#lat)" /><rect x="1492.0" y="393.7" width="318.0" height="14.0" fill="#5eadca" /><path d="M1492 407.7L1519 393.7" stroke="#4a9cba" stroke-width="1"/><rect x="1492.0" y="364.7" width="324.0" height="4.3" fill="#5d7e90" /><rect x="1380.0" y="364.7" width="3.0" height="43.0" fill="#7a94a3" /><rect x="1492.0" y="364.7" width="3.0" height="43.0" fill="#7a94a3" /><rect x="1810.0" y="64.0" width="14.0" height="344.0" fill="#5fa9c6" /><rect x="1810.0" y="64.0" width="4.0" height="344.0" fill="#4b98b6" /><rect x="1820.0" y="64.0" width="4.0" height="344.0" fill="#7ec0d8" /><rect x="1798.0" y="392.0" width="26.0" height="15.0" fill="#5eadca" opacity=".8"/><ellipse cx="1137.0" cy="222.0" rx="34.0" ry="28.0" fill="#cdd0ee" /><ellipse cx="1137.0" cy="220.0" rx="30.0" ry="23.0" fill="#d8daf3" /><path d="M1099 234c0-18 12-27 30-27h16c18 0 30 9 30 27c0 16-8 28-20 34h-36c-12-6-20-18-20-34z" fill="#6fb3d4" stroke="#3c9cc0" stroke-width="1" opacity=".9"/><path d="M1126 268v-16c0-8 5-13 11-13s11 5 11 13v16z" fill="#1f6373"/><rect x="1119.0" y="261.0" width="36.0" height="8.0" fill="#4fb0cf" opacity=".7"/><rect x="1139.0" y="232.0" width="10.0" height="10.0" fill="#e8e8e8" /><polygon points="993.0,412.0 996.0,402.0 999.0,409.0 1002.0,397.0 1005.0,407.0 1009.0,400.0 1011.0,410.0 1014.0,414.0 1012.0,440.0 1011.0,462.0 991.0,462.0 994.0,440.0" fill="#62321f" /><polygon points="1006.0,410.0 1014.0,414.0 1012.0,440.0 1011.0,462.0 1005.0,462.0" fill="#704030" /><rect x="987.0" y="456.0" width="6.0" height="10.0" fill="#6e3926" /><rect x="1013.0" y="458.0" width="5.0" height="8.0" fill="#6e3926" /><rect x="989.0" y="451.0" width="25.0" height="22.0" fill="#2f676e" stroke="#2fa5c0" stroke-width=".8"/><rect x="991.0" y="474.0" width="5.0" height="4.0" fill="#6e3926" /><rect x="1010.0" y="474.0" width="5.0" height="4.0" fill="#6e3926" /><polygon points="1049.0,472.0 1052.0,462.0 1055.0,469.0 1058.0,457.0 1061.0,467.0 1065.0,460.0 1067.0,470.0 1070.0,474.0 1068.0,500.0 1067.0,522.0 1047.0,522.0 1050.0,500.0" fill="#62321f" /><polygon points="1062.0,470.0 1070.0,474.0 1068.0,500.0 1067.0,522.0 1061.0,522.0" fill="#704030" /><rect x="1043.0" y="516.0" width="6.0" height="10.0" fill="#6e3926" /><rect x="1069.0" y="518.0" width="5.0" height="8.0" fill="#6e3926" /><rect x="1045.0" y="511.0" width="25.0" height="22.0" fill="#2f676e" stroke="#2fa5c0" stroke-width=".8"/><rect x="1047.0" y="534.0" width="5.0" height="4.0" fill="#6e3926" /><rect x="1066.0" y="534.0" width="5.0" height="4.0" fill="#6e3926" /><polygon points="1091.0,415.0 1094.0,405.0 1097.0,412.0 1100.0,400.0 1103.0,410.0 1107.0,403.0 1109.0,413.0 1112.0,417.0 1110.0,443.0 1109.0,465.0 1089.0,465.0 1092.0,443.0" fill="#62321f" /><polygon points="1104.0,413.0 1112.0,417.0 1110.0,443.0 1109.0,465.0 1103.0,465.0" fill="#704030" /><rect x="1085.0" y="459.0" width="6.0" height="10.0" fill="#6e3926" /><rect x="1111.0" y="461.0" width="5.0" height="8.0" fill="#6e3926" /><rect x="1087.0" y="454.0" width="25.0" height="22.0" fill="#2f676e" stroke="#2fa5c0" stroke-width=".8"/><rect x="1089.0" y="477.0" width="5.0" height="4.0" fill="#6e3926" /><rect x="1108.0" y="477.0" width="5.0" height="4.0" fill="#6e3926" /><polygon points="1136.0,397.0 1139.0,387.0 1142.0,394.0 1145.0,382.0 1148.0,392.0 1152.0,385.0 1154.0,395.0 1157.0,399.0 1155.0,425.0 1154.0,447.0 1134.0,447.0 1137.0,425.0" fill="#62321f" /><polygon points="1149.0,395.0 1157.0,399.0 1155.0,425.0 1154.0,447.0 1148.0,447.0" fill="#704030" /><rect x="1130.0" y="441.0" width="6.0" height="10.0" fill="#6e3926" /><rect x="1156.0" y="443.0" width="5.0" height="8.0" fill="#6e3926" /><rect x="1132.0" y="436.0" width="25.0" height="22.0" fill="#2f676e" stroke="#2fa5c0" stroke-width=".8"/><rect x="1134.0" y="459.0" width="5.0" height="4.0" fill="#6e3926" /><rect x="1153.0" y="459.0" width="5.0" height="4.0" fill="#6e3926" /><polygon points="1302.0,474.0 1305.0,464.0 1308.0,471.0 1311.0,459.0 1314.0,469.0 1318.0,462.0 1320.0,472.0 1323.0,476.0 1321.0,502.0 1320.0,524.0 1300.0,524.0 1303.0,502.0" fill="#62321f" /><polygon points="1315.0,472.0 1323.0,476.0 1321.0,502.0 1320.0,524.0 1314.0,524.0" fill="#704030" /><rect x="1296.0" y="518.0" width="6.0" height="10.0" fill="#6e3926" /><rect x="1322.0" y="520.0" width="5.0" height="8.0" fill="#6e3926" /><rect x="1298.0" y="513.0" width="25.0" height="22.0" fill="#2f676e" stroke="#2fa5c0" stroke-width=".8"/><rect x="1300.0" y="536.0" width="5.0" height="4.0" fill="#6e3926" /><rect x="1319.0" y="536.0" width="5.0" height="4.0" fill="#6e3926" /><polygon points="1380.0,380.0 1383.0,370.0 1386.0,377.0 1389.0,365.0 1392.0,375.0 1396.0,368.0 1398.0,378.0 1401.0,382.0 1399.0,408.0 1398.0,430.0 1378.0,430.0 1381.0,408.0" fill="#62321f" /><polygon points="1393.0,378.0 1401.0,382.0 1399.0,408.0 1398.0,430.0 1392.0,430.0" fill="#704030" /><rect x="1374.0" y="424.0" width="6.0" height="10.0" fill="#6e3926" /><rect x="1400.0" y="426.0" width="5.0" height="8.0" fill="#6e3926" /><rect x="1376.0" y="419.0" width="25.0" height="22.0" fill="#2f676e" stroke="#2fa5c0" stroke-width=".8"/><rect x="1378.0" y="442.0" width="5.0" height="4.0" fill="#6e3926" /><rect x="1397.0" y="442.0" width="5.0" height="4.0" fill="#6e3926" /><polygon points="1470.0,380.0 1473.0,370.0 1476.0,377.0 1479.0,365.0 1482.0,375.0 1486.0,368.0 1488.0,378.0 1491.0,382.0 1489.0,408.0 1488.0,430.0 1468.0,430.0 1471.0,408.0" fill="#62321f" /><polygon points="1483.0,378.0 1491.0,382.0 1489.0,408.0 1488.0,430.0 1482.0,430.0" fill="#704030" /><rect x="1464.0" y="424.0" width="6.0" height="10.0" fill="#6e3926" /><rect x="1490.0" y="426.0" width="5.0" height="8.0" fill="#6e3926" /><rect x="1466.0" y="419.0" width="25.0" height="22.0" fill="#2f676e" stroke="#2fa5c0" stroke-width=".8"/><rect x="1468.0" y="442.0" width="5.0" height="4.0" fill="#6e3926" /><rect x="1487.0" y="442.0" width="5.0" height="4.0" fill="#6e3926" /><polygon points="1486.0,499.0 1489.0,489.0 1492.0,496.0 1495.0,484.0 1498.0,494.0 1502.0,487.0 1504.0,497.0 1507.0,501.0 1505.0,527.0 1504.0,549.0 1484.0,549.0 1487.0,527.0" fill="#62321f" /><polygon points="1499.0,497.0 1507.0,501.0 1505.0,527.0 1504.0,549.0 1498.0,549.0" fill="#704030" /><rect x="1480.0" y="543.0" width="6.0" height="10.0" fill="#6e3926" /><rect x="1506.0" y="545.0" width="5.0" height="8.0" fill="#6e3926" /><rect x="1482.0" y="538.0" width="25.0" height="22.0" fill="#2f676e" stroke="#2fa5c0" stroke-width=".8"/><rect x="1484.0" y="561.0" width="5.0" height="4.0" fill="#6e3926" /><rect x="1503.0" y="561.0" width="5.0" height="4.0" fill="#6e3926" /><clipPath id="wclip"><rect x="647.200" y="587.500" width="832" height="83.200"/><rect x="1479.200" y="642.300" width="83.200" height="83.200"/></clipPath><g clip-path="url(#wclip)"><rect x="647.2" y="587.5" width="832.0" height="83.2" fill="#675d8c" /><rect x="1479.2" y="642.3" width="83.2" height="83.2" fill="#675d8c" /><use href="#wallt" x="647.2" y="587.500"/><use href="#wallt" x="730.4" y="587.500"/><use href="#wallt" x="813.6" y="587.500"/><use href="#wallt" x="896.8" y="587.500"/><use href="#wallt" x="980.0" y="587.500"/><use href="#wallt" x="1063.2" y="587.500"/><use href="#wallt" x="1146.4" y="587.500"/><use href="#wallt" x="1229.6" y="587.500"/><use href="#wallt" x="1312.8" y="587.500"/><use href="#wallt" x="1396.0" y="587.500"/><use href="#wallt" x="1479.200" y="642.300"/><rect x="647.2" y="587.5" width="834.0" height="10.0" fill="#f8f7f6" /><rect x="1479.2" y="642.3" width="83.2" height="10.0" fill="#f8f7f6" /><rect x="647.2" y="665.7" width="832.0" height="5.0" fill="#eef3fb" /><rect x="1479.2" y="720.5" width="83.2" height="5.0" fill="#eef3fb" /><path d="M647 665.700h832M1479 720.500h84" stroke="#a9c6e6" stroke-width="1.600" stroke-dasharray="6 4"/></g><polygon points="1311.0,277.0 1314.0,266.0 1323.0,263.0 1333.0,266.0 1335.0,277.0 1329.0,283.0 1317.0,283.0" fill="#66b13f" /><polygon points="1320.0,271.0 1324.0,267.0 1327.0,273.0 1323.0,277.0" fill="#8a6a2d" /><rect x="1315.0" y="281.0" width="16.0" height="13.0" fill="#3aa58c" stroke="#35a9c4" stroke-width="1"/><rect x="1329.0" y="285.0" width="6.0" height="4.0" fill="#55b050" /><polygon points="1368.0,290.0 1371.0,279.0 1380.0,276.0 1390.0,279.0 1392.0,290.0 1386.0,296.0 1374.0,296.0" fill="#66b13f" /><polygon points="1377.0,284.0 1381.0,280.0 1384.0,286.0 1380.0,290.0" fill="#8a6a2d" /><rect x="1372.0" y="294.0" width="16.0" height="13.0" fill="#3aa58c" stroke="#35a9c4" stroke-width="1"/><rect x="1386.0" y="298.0" width="6.0" height="4.0" fill="#55b050" /><polygon points="1342.0,332.0 1345.0,321.0 1354.0,318.0 1364.0,321.0 1366.0,332.0 1360.0,338.0 1348.0,338.0" fill="#66b13f" /><polygon points="1351.0,326.0 1355.0,322.0 1358.0,328.0 1354.0,332.0" fill="#8a6a2d" /><rect x="1346.0" y="336.0" width="16.0" height="13.0" fill="#3aa58c" stroke="#35a9c4" stroke-width="1"/><rect x="1360.0" y="340.0" width="6.0" height="4.0" fill="#55b050" /><polygon points="1555.0,530.0 1558.0,519.0 1567.0,516.0 1577.0,519.0 1579.0,530.0 1573.0,536.0 1561.0,536.0" fill="#66b13f" /><polygon points="1564.0,524.0 1568.0,520.0 1571.0,526.0 1567.0,530.0" fill="#8a6a2d" /><rect x="1559.0" y="534.0" width="16.0" height="13.0" fill="#3aa58c" stroke="#35a9c4" stroke-width="1"/><rect x="1573.0" y="538.0" width="6.0" height="4.0" fill="#55b050" /><polygon points="1659.0,526.0 1662.0,515.0 1671.0,512.0 1681.0,515.0 1683.0,526.0 1677.0,532.0 1665.0,532.0" fill="#66b13f" /><polygon points="1668.0,520.0 1672.0,516.0 1675.0,522.0 1671.0,526.0" fill="#8a6a2d" /><rect x="1663.0" y="530.0" width="16.0" height="13.0" fill="#3aa58c" stroke="#35a9c4" stroke-width="1"/><rect x="1677.0" y="534.0" width="6.0" height="4.0" fill="#55b050" /><polygon points="1877.0,470.0 1880.0,459.0 1889.0,456.0 1899.0,459.0 1901.0,470.0 1895.0,476.0 1883.0,476.0" fill="#66b13f" /><polygon points="1886.0,464.0 1890.0,460.0 1893.0,466.0 1889.0,470.0" fill="#8a6a2d" /><rect x="1881.0" y="474.0" width="16.0" height="13.0" fill="#3aa58c" stroke="#35a9c4" stroke-width="1"/><rect x="1895.0" y="478.0" width="6.0" height="4.0" fill="#55b050" /><ellipse cx="1787.0" cy="549.0" rx="23.0" ry="9.0" fill="#aab8c4" /><polygon points="1762.0,448.0 1787.0,423.0 1812.0,448.0 1812.0,520.0 1787.0,537.0 1762.0,520.0" fill="#4a4b5b" /><polygon points="1762.0,448.0 1787.0,423.0 1787.0,468.0" fill="#4d4c96" /><polygon points="1787.0,423.0 1812.0,448.0 1787.0,468.0" fill="#3f3f86" /><polygon points="1787.0,468.0 1812.0,448.0 1812.0,520.0 1787.0,537.0" fill="#3b3c4a" /><path d="M1772 470v30l6 8v14M1796 470l6 10v26l-6 8M1778 484l-4 8" fill="none" stroke="#3c3fc0" stroke-width="1.500"/><rect x="1772.0" y="537.0" width="29.0" height="24.0" fill="#55b3cd" stroke="#2fa3c2" stroke-width="1" opacity=".85"/><ellipse cx="1848.0" cy="112.0" rx="22.0" ry="9.0" fill="#b9c5d4" /><ellipse cx="1843.0" cy="98.0" rx="17.0" ry="15.0" fill="#6c3a2a" /><rect x="1832.0" y="86.0" width="8.0" height="4.0" fill="#e9f1f6" /><rect x="1844.0" y="84.0" width="8.0" height="3.0" fill="#e9f1f6" /><rect x="1838.0" y="92.0" width="5.0" height="3.0" fill="#2c8d62" /><circle cx="1842.0" cy="106.0" r="4.5" fill="#1b1410" /><circle cx="1842.0" cy="106.0" r="2.5" fill="#f0a030" /><rect x="1826.0" y="146.0" width="44.0" height="14.0" fill="#6f8086" /><rect x="1826.0" y="156.0" width="44.0" height="14.0" fill="#55656c" /><rect x="1836.0" y="130.0" width="5.0" height="16.0" fill="#2c3236" /><rect x="1849.0" y="130.0" width="5.0" height="16.0" fill="#2c3236" /><circle cx="1838.0" cy="130.0" r="4.5" fill="#2c3236" /><circle cx="1851.0" cy="130.0" r="4.5" fill="#2c3236" /><rect x="1830.0" y="151.0" width="4.0" height="3.0" fill="#3da060" /><rect x="1846.0" y="151.0" width="4.0" height="3.0" fill="#3da060" /><rect x="1860.0" y="151.0" width="4.0" height="3.0" fill="#3da060" /><ellipse cx="1846.0" cy="222.0" rx="20.0" ry="8.0" fill="#a9b9c1" /><ellipse cx="1843.0" cy="204.0" rx="14.0" ry="15.0" fill="#7aa7a2" /><circle cx="1843.0" cy="208.0" r="6.5" fill="#15231f" /><circle cx="1843.0" cy="208.0" r="4.0" fill="#2f9d57" /><path d="M1830 210l-6 12M1856 210l7 12M1834 214l-3 12M1852 214l3 12" stroke="#2d4a50" stroke-width="3" fill="none"/><ellipse cx="1859.0" cy="276.0" rx="27.0" ry="12.0" fill="#a9b9c1" /><ellipse cx="1858.0" cy="254.0" rx="15.0" ry="16.0" fill="#7aa7a2" /><circle cx="1858.0" cy="260.0" r="7.0" fill="#15231f" /><circle cx="1858.0" cy="260.0" r="4.5" fill="#2f9d57" /><polygon points="1830.0,248.0 1838.0,240.0 1846.0,250.0 1838.0,258.0" fill="#4e7a7c" /><polygon points="1871.0,248.0 1880.0,240.0 1887.0,250.0 1878.0,258.0" fill="#4e7a7c" /><path d="M1842 262l-8 16M1874 262l8 16M1850 268l-3 14M1866 268l3 14" stroke="#2d4a50" stroke-width="3.500" fill="none"/><polygon points="1838.0,376.0 1850.0,384.0 1862.0,378.0 1856.0,392.0 1864.0,400.0 1848.0,396.0 1840.0,402.0 1844.0,390.0" fill="#2f4a5a" /><rect x="1513.0" y="168.0" width="31.0" height="36.0" fill="#5b7a88" /><rect x="1516.0" y="172.0" width="25.0" height="3.0" fill="#9fb3bd" /><rect x="1516.0" y="183.0" width="25.0" height="3.0" fill="#9fb3bd" /><rect x="1513.0" y="190.0" width="31.0" height="15.0" fill="#4fa8c6" stroke="#33a0c0" stroke-width="1"/><rect x="1521.0" y="161.0" width="4.0" height="8.0" fill="#c0392b" /><rect x="1528.0" y="192.0" width="12.0" height="10.0" fill="#dfe6ea" /><rect x="1555.0" y="153.0" width="31.0" height="50.0" fill="#4a2f2a" /><rect x="1558.0" y="166.0" width="25.0" height="4.0" fill="#7a5a50" /><rect x="1558.0" y="180.0" width="25.0" height="4.0" fill="#7a5a50" /><rect x="1562.0" y="170.0" width="5.0" height="9.0" fill="#d8d0c8" /><rect x="1572.0" y="168.0" width="5.0" height="6.0" fill="#3cc050" /><rect x="1574.0" y="180.0" width="4.0" height="9.0" fill="#c03030" /><rect x="1561.0" y="185.0" width="6.0" height="5.0" fill="#e040a0" /><rect x="1555.0" y="190.0" width="31.0" height="15.0" fill="#4fa8c6" stroke="#33a0c0" stroke-width="1"/><rect x="1570.0" y="192.0" width="12.0" height="10.0" fill="#dfe6ea" /><rect x="1473.0" y="203.0" width="20.0" height="40.0" fill="#5a9bb3" /><rect x="1473.0" y="240.0" width="72.0" height="22.0" fill="#3f93ad" /><rect x="1473.0" y="236.0" width="72.0" height="8.0" fill="#5fb0c8" /><rect x="1476.0" y="258.0" width="6.0" height="10.0" fill="#2f7a90" /><rect x="1536.0" y="258.0" width="6.0" height="10.0" fill="#2f7a90" /><rect x="1476.0" y="234.0" width="18.0" height="10.0" fill="#2b6d86" /><rect x="1500.0" y="240.0" width="22.0" height="14.0" fill="#cfdde6" opacity=".8"/><rect x="1524.0" y="234.0" width="10.0" height="12.0" fill="#b8c8d0" /><rect x="1535.0" y="238.0" width="10.0" height="7.0" fill="#2f8a4a" /><path d="M1494 228c8 0 12 4 12 12" stroke="#1f2a30" stroke-width="2" fill="none"/><ellipse cx="1632.0" cy="284.0" rx="36.0" ry="8.0" fill="#d9dff0" /><rect x="1617.0" y="213.0" width="29.0" height="70.0" fill="#414b55" /><rect x="1617.0" y="262.0" width="29.0" height="22.0" fill="#1e2b38" /><ellipse cx="1631.5" cy="213.0" rx="14.5" ry="5.0" fill="#2a3036" /><rect x="1621.0" y="226.0" width="21.0" height="34.0" fill="#c4d4de" /><rect x="1625.0" y="226.0" width="7.0" height="30.0" fill="#dde8ee" /><rect x="1626.0" y="214.0" width="10.0" height="2.5" fill="#e0a020" /><path d="M1616 246l-10 10v18M1647 246l10 10v18" stroke="#1e3350" stroke-width="3" fill="none"/><ellipse cx="1605.0" cy="273.0" rx="4.5" ry="4.0" fill="#dda820" /><ellipse cx="1658.0" cy="273.0" rx="4.5" ry="4.0" fill="#dda820" /><circle cx="1631.0" cy="268.5" r="17.5" fill="#2a7f9c" stroke="#2a9cbd" stroke-width="1" opacity=".93"/><rect x="1633.0" y="270.0" width="9.0" height="9.0" fill="#e4ecf0" /><rect x="1622.0" y="272.0" width="6.0" height="3.0" fill="#8aa850" /><rect x="1706.0" y="232.0" width="17.0" height="14.0" fill="#4fa8c6" /><polygon points="1708.0,232.0 1714.0,220.0 1721.0,232.0" fill="#22262c" /><rect x="1709.0" y="234.0" width="11.0" height="9.0" fill="#c9a23a" /><rect x="1705.0" y="240.0" width="18.0" height="6.0" fill="#3fa6c4" stroke="#2a9cbd" stroke-width=".8"/><ellipse cx="1588.0" cy="340.0" rx="30.0" ry="11.0" fill="#d6dcef" /><rect x="1578.0" y="298.0" width="19.0" height="8.0" fill="#232a30" /><rect x="1574.0" y="305.0" width="27.0" height="18.0" fill="#39424c" /><rect x="1576.0" y="309.0" width="23.0" height="12.0" fill="#232c55" /><path d="M1579 319l6-9M1586 320l6-10" stroke="#3d4a9a" stroke-width="1.500"/><rect x="1570.0" y="322.0" width="36.0" height="25.0" fill="#3f9fc4" stroke="#2f9cc0" stroke-width="1"/><rect x="1578.0" y="344.0" width="22.0" height="7.0" fill="#3aa060" /><rect x="1588.0" y="328.0" width="11.0" height="10.0" fill="#e4ecf0" /><rect x="1603.0" y="344.0" width="4.0" height="6.0" fill="#1a3a2a" /><path d="M1570 318c-6 1-6 8-2 10c-4 3-4 9 0 11c-3 3-2 7 3 7M1606 318c5 1 5 8 2 10c3 3 3 9 0 11" stroke="#d64050" stroke-width="1.200" fill="none"/><rect x="1654.0" y="320.0" width="27.0" height="20.0" fill="#4f6f82" /><rect x="1656.0" y="323.0" width="23.0" height="3.0" fill="#8aa4b4" /><rect x="1656.0" y="333.0" width="23.0" height="4.0" fill="#2f4a5a" /><rect x="1690.0" y="318.0" width="10.0" height="24.0" fill="#4f6f82" /><rect x="1692.0" y="321.0" width="6.0" height="3.0" fill="#8aa4b4" /><rect x="1692.0" y="335.0" width="6.0" height="4.0" fill="#2f4a5a" /><rect x="1658.0" y="346.0" width="16.0" height="14.0" fill="#4f6f82" /><rect x="1660.0" y="349.0" width="12.0" height="3.0" fill="#8aa4b4" /><rect x="1660.0" y="353.0" width="12.0" height="4.0" fill="#2f4a5a" /><rect x="1688.0" y="346.0" width="16.0" height="14.0" fill="#4f6f82" /><rect x="1690.0" y="349.0" width="12.0" height="3.0" fill="#8aa4b4" /><rect x="1690.0" y="353.0" width="12.0" height="4.0" fill="#2f4a5a" /><polygon points="1714.0,358.0 1718.0,346.0 1728.0,348.0 1724.0,354.0 1730.0,358.0" fill="#3d5566" /><polygon points="1740.0,360.0 1744.0,348.0 1754.0,350.0 1750.0,356.0 1756.0,360.0" fill="#3d5566" /><polygon points="1766.0,366.0 1770.0,354.0 1780.0,356.0 1776.0,362.0 1782.0,366.0" fill="#3d5566" /><rect x="1674.0" y="378.0" width="14.0" height="16.0" fill="#4f6f82" /><rect x="1676.0" y="381.0" width="10.0" height="4.0" fill="#c9d6de" /><rect x="1674.0" y="394.0" width="14.0" height="6.0" fill="#4fa8c6" /><rect x="1728.0" y="376.0" width="14.0" height="16.0" fill="#4f6f82" /><rect x="1730.0" y="379.0" width="10.0" height="4.0" fill="#c9d6de" /><rect x="1728.0" y="392.0" width="14.0" height="6.0" fill="#4fa8c6" /><polygon points="1782.0,378.0 1792.0,382.0 1800.0,376.0 1804.0,396.0 1790.0,392.0" fill="#3d5566" /><rect x="1736.0" y="288.0" width="4.0" height="4.0" fill="#e0405a" /><rect x="1741.0" y="292.0" width="5.0" height="5.0" fill="#e0405a" /><rect x="1738.0" y="297.0" width="4.0" height="4.0" fill="#f08aa0" /><rect x="1741.0" y="300.0" width="2.0" height="7.0" fill="#d8c8c8" /><rect x="1545.0" y="414.0" width="24.0" height="24.0" fill="#5fb0cd" opacity=".9" stroke="#35a3bf" stroke-width="1"/><rect x="1550.0" y="420.0" width="14.0" height="10.0" fill="#e4ecf0" /><path d="M1548 414l8 8 8-8" stroke="#9a8fc0" stroke-width="1.500" fill="none"/><ellipse cx="1376.0" cy="470.0" rx="8.0" ry="4.0" fill="#9aa8a0" /><rect x="1373.0" y="459.0" width="6.0" height="7.0" fill="#7a6fb0" /><circle cx="1376.0" cy="469.0" r="3.0" fill="#7fa870" /><path d="M1603 474h34" stroke="#e0788a" stroke-width="1.200"/><path d="M1620 457v34" stroke="#9ccc4a" stroke-width="1.200"/><path d="M1613 474h14M1620 467v14" stroke="#b0a8a0" stroke-width="1.200"/><polygon points="1703.0,640.0 1707.0,635.0 1710.0,638.0 1713.0,635.0 1717.0,640.0 1713.0,641.0 1710.0,639.0 1707.0,641.0" fill="#3a3050" /><ellipse cx="1710.0" cy="651.0" rx="8.0" ry="4.5" fill="#9aa4ac" /><circle cx="1710.0" cy="651.0" r="2.5" fill="#c0c8cc" /><polygon points="1113.0,748.0 1109.0,733.0 1090.0,727.0 1092.0,743.0" fill="#5f4274" /><polygon points="1110.0,745.0 1107.0,735.0 1094.0,730.0 1096.0,742.0" fill="#8c6ea6" /><polygon points="1109.0,743.0 1097.0,733.0 1099.0,738.0" fill="#5f4274" /><polygon points="1113.0,748.0 1117.0,733.0 1136.0,727.0 1134.0,743.0" fill="#5f4274" /><polygon points="1116.0,745.0 1119.0,735.0 1132.0,730.0 1130.0,742.0" fill="#8c6ea6" /><polygon points="1117.0,743.0 1129.0,733.0 1127.0,738.0" fill="#5f4274" /><polygon points="1113.0,748.0 1109.0,763.0 1090.0,769.0 1092.0,753.0" fill="#5f4274" /><polygon points="1110.0,751.0 1107.0,761.0 1094.0,766.0 1096.0,754.0" fill="#8c6ea6" /><polygon points="1109.0,753.0 1097.0,763.0 1099.0,758.0" fill="#5f4274" /><polygon points="1113.0,748.0 1117.0,763.0 1136.0,769.0 1134.0,753.0" fill="#5f4274" /><polygon points="1116.0,751.0 1119.0,761.0 1132.0,766.0 1130.0,754.0" fill="#8c6ea6" /><polygon points="1117.0,753.0 1129.0,763.0 1127.0,758.0" fill="#5f4274" /><path d="M1109 746c2-10 0-18-6-22M1116 746c-2-10 0-18 4-22" stroke="#e8a020" stroke-width="1.500" fill="none"/><polygon points="1101.0,696.0 1110.0,693.0 1116.0,688.0 1128.0,697.0 1122.0,703.0 1120.0,708.0 1114.0,716.0 1109.0,710.0 1108.0,703.0" fill="#a585c0" /><polygon points="1108.0,704.0 1120.0,704.0 1114.0,716.0" fill="#5a3f78" /><path d="M1104 694c2-6 8-8 12-4v8M1116 692c4-4 8-6 14-6" stroke="#d8c848" stroke-width="1.800" fill="none"/><rect x="1128.0" y="686.0" width="5.0" height="5.0" fill="#e8d040" /><path d="M1154 688c0-10-2-18 2-22c4-4 12-3 12 1c-6-2-10 0-10 6M1152 676l-7-5v6" stroke="#c23a5c" stroke-width="2.400" fill="none"/><ellipse cx="1159.0" cy="734.0" rx="16.0" ry="15.0" fill="#2dae6c" /><polygon points="1159.0,734.0 1178.0,720.0 1180.0,742.0" fill="#ddf0fb" /><ellipse cx="1204.0" cy="743.0" rx="18.0" ry="15.0" fill="#2dae6c" /><polygon points="1204.0,738.0 1184.0,728.0 1184.0,748.0" fill="#ddf0fb" /><ellipse cx="1252" cy="746" rx="24" ry="14.500" fill="#2dae6c"/><path d="M1252 746l-14-8M1252 746l12-9M1252 746l2 11M1252 746l-16 7M1252 746l16 4" stroke="#24955c" stroke-width="1.200" fill="none"/><path d="M1176 772v-14c0-8 8-12 16-14M1176 760c-2-8-8-12-12-14" stroke="#1f5a40" stroke-width="2.500" fill="none"/><path d="M1172 712v-8m-4-4l4 5 4-5M1186 712v-8m-4-4l4 5 4-5" stroke="#5a9a50" stroke-width="1.400" fill="none"/><path d="M1218 689v-5m-5-4l5 5 5-5" stroke="#7aa070" stroke-width="1.300" fill="none"/><path d="M1232 701v-5m-5-4l5 5 5-5" stroke="#7aa070" stroke-width="1.300" fill="none"/><path d="M1246 691v-5m-5-4l5 5 5-5" stroke="#7aa070" stroke-width="1.300" fill="none"/><path d="M1258 705v-5m-5-4l5 5 5-5" stroke="#7aa070" stroke-width="1.300" fill="none"/><path d="M1270 693v-5m-5-4l5 5 5-5" stroke="#7aa070" stroke-width="1.300" fill="none"/><path d="M1284 689v-5m-5-4l5 5 5-5" stroke="#7aa070" stroke-width="1.300" fill="none"/><path d="M1228 711v-5m-5-4l5 5 5-5" stroke="#7aa070" stroke-width="1.300" fill="none"/><path d="M1262 695v-5m-5-4l5 5 5-5" stroke="#7aa070" stroke-width="1.300" fill="none"/><path d="M1292 701v-5m-5-4l5 5 5-5" stroke="#7aa070" stroke-width="1.300" fill="none"/><path d="M1280 707v-5m-5-4l5 5 5-5" stroke="#7aa070" stroke-width="1.300" fill="none"/><path d="M1291 772v-28M1291 762l-7-6M1291 764l7-4" stroke="#1f7a50" stroke-width="2" fill="none"/><rect x="1287.0" y="730.0" width="8.0" height="16.0" fill="#e89020" /><rect x="1289.0" y="726.0" width="5.0" height="6.0" fill="#f0b030" /><rect x="1286.0" y="742.0" width="4.0" height="4.0" fill="#f0b030" /><rect x="1316.0" y="670.0" width="4.0" height="4.0" fill="#d83050" /><rect x="1320.0" y="674.0" width="5.0" height="5.0" fill="#d83050" /><rect x="1318.0" y="679.0" width="4.0" height="4.0" fill="#f08a90" /><rect x="1324.0" y="678.0" width="4.0" height="5.0" fill="#d83050" /><rect x="1346.0" y="676.2" width="3.2" height="3.2" fill="#d83050" /><rect x="1349.2" y="679.4" width="4.0" height="4.0" fill="#d83050" /><rect x="1347.6" y="683.4" width="3.2" height="3.2" fill="#f08a90" /><rect x="1352.4" y="682.6" width="3.2" height="4.0" fill="#d83050" /><rect x="1374.0" y="680.4" width="2.4" height="2.4" fill="#d83050" /><rect x="1376.4" y="682.8" width="3.0" height="3.0" fill="#d83050" /><rect x="1375.2" y="685.8" width="2.4" height="2.4" fill="#f08a90" /><rect x="1378.8" y="685.2" width="2.4" height="3.0" fill="#d83050" /><g fill="none" stroke="#aeb4b8" stroke-width="1.200"><circle cx="672.500" cy="94.500" r="6"/><path d="M669.500 94.500h6"/><circle cx="758" cy="94.500" r="6"/><path d="M755 94.500h6M758 91.500v6"/></g><text x="715" y="99" font-size="12.500" text-anchor="middle" fill="#9c9c9c" stroke="#eef3f6" stroke-width="2.200" paint-order="stroke" font-weight="bold" letter-spacing="-.3">214.4 %</text><g stroke="#e6e0dc" stroke-width="1" fill="none" opacity=".8"><path d="M643 89v10M638 94h10M640 91l6 6M646 91l-6 6"/></g></svg>
<div style="left:626px;top:65px;width:1281px;height:13px;background:rgba(35,38,39,.86);"></div>
<div style="left:613.5px;top:65px;width:12.5px;height:736px;background:rgba(35,38,39,.86);"></div>
<div style="left:613.5px;top:65px;width:12.7px;height:12.5px;background:#989a9b;"></div>
<svg viewBox="613 65 1294 736" style="left:613px;top:65px;width:1294px;height:736px;"><path d="M633.2 75v3" stroke="#606466" stroke-width="1"/><path d="M641.8 75v3" stroke="#606466" stroke-width="1"/><path d="M650.5 65v13" stroke="#8b8f91" stroke-width="1"/><text x="653.5" y="72.200" font-size="7.800" fill="#c9c9c9">-150</text><path d="M659.2 75v3" stroke="#606466" stroke-width="1"/><path d="M667.8 75v3" stroke="#606466" stroke-width="1"/><path d="M676.5 75v3" stroke="#606466" stroke-width="1"/><path d="M685.1 75v3" stroke="#606466" stroke-width="1"/><path d="M693.8 71v7" stroke="#6d7174" stroke-width="1"/><path d="M702.5 75v3" stroke="#606466" stroke-width="1"/><path d="M711.1 75v3" stroke="#606466" stroke-width="1"/><path d="M719.8 75v3" stroke="#606466" stroke-width="1"/><path d="M728.4 75v3" stroke="#606466" stroke-width="1"/><path d="M737.1 65v13" stroke="#8b8f91" stroke-width="1"/><text x="740.1" y="72.200" font-size="7.800" fill="#c9c9c9">-100</text><path d="M745.8 75v3" stroke="#606466" stroke-width="1"/><path d="M754.4 75v3" stroke="#606466" stroke-width="1"/><path d="M763.1 75v3" stroke="#606466" stroke-width="1"/><path d="M771.7 75v3" stroke="#606466" stroke-width="1"/><path d="M780.4 71v7" stroke="#6d7174" stroke-width="1"/><path d="M789.1 75v3" stroke="#606466" stroke-width="1"/><path d="M797.7 75v3" stroke="#606466" stroke-width="1"/><path d="M806.4 75v3" stroke="#606466" stroke-width="1"/><path d="M815.0 75v3" stroke="#606466" stroke-width="1"/><path d="M823.7 65v13" stroke="#8b8f91" stroke-width="1"/><text x="826.7" y="72.200" font-size="7.800" fill="#c9c9c9">-50</text><path d="M832.4 75v3" stroke="#606466" stroke-width="1"/><path d="M841.0 75v3" stroke="#606466" stroke-width="1"/><path d="M849.7 75v3" stroke="#606466" stroke-width="1"/><path d="M858.3 75v3" stroke="#606466" stroke-width="1"/><path d="M867.0 71v7" stroke="#6d7174" stroke-width="1"/><path d="M875.7 75v3" stroke="#606466" stroke-width="1"/><path d="M884.3 75v3" stroke="#606466" stroke-width="1"/><path d="M893.0 75v3" stroke="#606466" stroke-width="1"/><path d="M901.6 75v3" stroke="#606466" stroke-width="1"/><path d="M910.3 65v13" stroke="#8b8f91" stroke-width="1"/><text x="913.3" y="72.200" font-size="7.800" fill="#c9c9c9">0</text><path d="M919.0 75v3" stroke="#606466" stroke-width="1"/><path d="M927.6 75v3" stroke="#606466" stroke-width="1"/><path d="M936.3 75v3" stroke="#606466" stroke-width="1"/><path d="M944.9 75v3" stroke="#606466" stroke-width="1"/><path d="M953.6 71v7" stroke="#6d7174" stroke-width="1"/><path d="M962.3 75v3" stroke="#606466" stroke-width="1"/><path d="M970.9 75v3" stroke="#606466" stroke-width="1"/><path d="M979.6 75v3" stroke="#606466" stroke-width="1"/><path d="M988.2 75v3" stroke="#606466" stroke-width="1"/><path d="M996.9 65v13" stroke="#8b8f91" stroke-width="1"/><text x="999.9" y="72.200" font-size="7.800" fill="#c9c9c9">50</text><path d="M1005.6 75v3" stroke="#606466" stroke-width="1"/><path d="M1014.2 75v3" stroke="#606466" stroke-width="1"/><path d="M1022.9 75v3" stroke="#606466" stroke-width="1"/><path d="M1031.5 75v3" stroke="#606466" stroke-width="1"/><path d="M1040.2 71v7" stroke="#6d7174" stroke-width="1"/><path d="M1048.9 75v3" stroke="#606466" stroke-width="1"/><path d="M1057.5 75v3" stroke="#606466" stroke-width="1"/><path d="M1066.2 75v3" stroke="#606466" stroke-width="1"/><path d="M1074.8 75v3" stroke="#606466" stroke-width="1"/><path d="M1083.5 65v13" stroke="#8b8f91" stroke-width="1"/><text x="1086.5" y="72.200" font-size="7.800" fill="#c9c9c9">100</text><path d="M1092.2 75v3" stroke="#606466" stroke-width="1"/><path d="M1100.8 75v3" stroke="#606466" stroke-width="1"/><path d="M1109.5 75v3" stroke="#606466" stroke-width="1"/><path d="M1118.1 75v3" stroke="#606466" stroke-width="1"/><path d="M1126.8 71v7" stroke="#6d7174" stroke-width="1"/><path d="M1135.5 75v3" stroke="#606466" stroke-width="1"/><path d="M1144.1 75v3" stroke="#606466" stroke-width="1"/><path d="M1152.8 75v3" stroke="#606466" stroke-width="1"/><path d="M1161.4 75v3" stroke="#606466" stroke-width="1"/><path d="M1170.1 65v13" stroke="#8b8f91" stroke-width="1"/><text x="1173.1" y="72.200" font-size="7.800" fill="#c9c9c9">150</text><path d="M1178.8 75v3" stroke="#606466" stroke-width="1"/><path d="M1187.4 75v3" stroke="#606466" stroke-width="1"/><path d="M1196.1 75v3" stroke="#606466" stroke-width="1"/><path d="M1204.7 75v3" stroke="#606466" stroke-width="1"/><path d="M1213.4 71v7" stroke="#6d7174" stroke-width="1"/><path d="M1222.1 75v3" stroke="#606466" stroke-width="1"/><path d="M1230.7 75v3" stroke="#606466" stroke-width="1"/><path d="M1239.4 75v3" stroke="#606466" stroke-width="1"/><path d="M1248.0 75v3" stroke="#606466" stroke-width="1"/><path d="M1256.7 65v13" stroke="#8b8f91" stroke-width="1"/><text x="1259.7" y="72.200" font-size="7.800" fill="#c9c9c9">200</text><path d="M1265.4 75v3" stroke="#606466" stroke-width="1"/><path d="M1274.0 75v3" stroke="#606466" stroke-width="1"/><path d="M1282.7 75v3" stroke="#606466" stroke-width="1"/><path d="M1291.3 75v3" stroke="#606466" stroke-width="1"/><path d="M1300.0 71v7" stroke="#6d7174" stroke-width="1"/><path d="M1308.7 75v3" stroke="#606466" stroke-width="1"/><path d="M1317.3 75v3" stroke="#606466" stroke-width="1"/><path d="M1326.0 75v3" stroke="#606466" stroke-width="1"/><path d="M1334.6 75v3" stroke="#606466" stroke-width="1"/><path d="M1343.3 65v13" stroke="#8b8f91" stroke-width="1"/><text x="1346.3" y="72.200" font-size="7.800" fill="#c9c9c9">250</text><path d="M1352.0 75v3" stroke="#606466" stroke-width="1"/><path d="M1360.6 75v3" stroke="#606466" stroke-width="1"/><path d="M1369.3 75v3" stroke="#606466" stroke-width="1"/><path d="M1377.9 75v3" stroke="#606466" stroke-width="1"/><path d="M1386.6 71v7" stroke="#6d7174" stroke-width="1"/><path d="M1395.3 75v3" stroke="#606466" stroke-width="1"/><path d="M1403.9 75v3" stroke="#606466" stroke-width="1"/><path d="M1412.6 75v3" stroke="#606466" stroke-width="1"/><path d="M1421.2 75v3" stroke="#606466" stroke-width="1"/><path d="M1429.9 65v13" stroke="#8b8f91" stroke-width="1"/><text x="1432.9" y="72.200" font-size="7.800" fill="#c9c9c9">300</text><path d="M1438.6 75v3" stroke="#606466" stroke-width="1"/><path d="M1447.2 75v3" stroke="#606466" stroke-width="1"/><path d="M1455.9 75v3" stroke="#606466" stroke-width="1"/><path d="M1464.5 75v3" stroke="#606466" stroke-width="1"/><path d="M1473.2 71v7" stroke="#6d7174" stroke-width="1"/><path d="M1481.9 75v3" stroke="#606466" stroke-width="1"/><path d="M1490.5 75v3" stroke="#606466" stroke-width="1"/><path d="M1499.2 75v3" stroke="#606466" stroke-width="1"/><path d="M1507.8 75v3" stroke="#606466" stroke-width="1"/><path d="M1516.5 65v13" stroke="#8b8f91" stroke-width="1"/><text x="1519.5" y="72.200" font-size="7.800" fill="#c9c9c9">350</text><path d="M1525.2 75v3" stroke="#606466" stroke-width="1"/><path d="M1533.8 75v3" stroke="#606466" stroke-width="1"/><path d="M1542.5 75v3" stroke="#606466" stroke-width="1"/><path d="M1551.1 75v3" stroke="#606466" stroke-width="1"/><path d="M1559.8 71v7" stroke="#6d7174" stroke-width="1"/><path d="M1568.5 75v3" stroke="#606466" stroke-width="1"/><path d="M1577.1 75v3" stroke="#606466" stroke-width="1"/><path d="M1585.8 75v3" stroke="#606466" stroke-width="1"/><path d="M1594.4 75v3" stroke="#606466" stroke-width="1"/><path d="M1603.1 65v13" stroke="#8b8f91" stroke-width="1"/><text x="1606.1" y="72.200" font-size="7.800" fill="#c9c9c9">400</text><path d="M1611.8 75v3" stroke="#606466" stroke-width="1"/><path d="M1620.4 75v3" stroke="#606466" stroke-width="1"/><path d="M1629.1 75v3" stroke="#606466" stroke-width="1"/><path d="M1637.7 75v3" stroke="#606466" stroke-width="1"/><path d="M1646.4 71v7" stroke="#6d7174" stroke-width="1"/><path d="M1655.1 75v3" stroke="#606466" stroke-width="1"/><path d="M1663.7 75v3" stroke="#606466" stroke-width="1"/><path d="M1672.4 75v3" stroke="#606466" stroke-width="1"/><path d="M1681.0 75v3" stroke="#606466" stroke-width="1"/><path d="M1689.7 65v13" stroke="#8b8f91" stroke-width="1"/><text x="1692.7" y="72.200" font-size="7.800" fill="#c9c9c9">450</text><path d="M1698.4 75v3" stroke="#606466" stroke-width="1"/><path d="M1707.0 75v3" stroke="#606466" stroke-width="1"/><path d="M1715.7 75v3" stroke="#606466" stroke-width="1"/><path d="M1724.3 75v3" stroke="#606466" stroke-width="1"/><path d="M1733.0 71v7" stroke="#6d7174" stroke-width="1"/><path d="M1741.7 75v3" stroke="#606466" stroke-width="1"/><path d="M1750.3 75v3" stroke="#606466" stroke-width="1"/><path d="M1759.0 75v3" stroke="#606466" stroke-width="1"/><path d="M1767.6 75v3" stroke="#606466" stroke-width="1"/><path d="M1776.3 65v13" stroke="#8b8f91" stroke-width="1"/><text x="1779.3" y="72.200" font-size="7.800" fill="#c9c9c9">500</text><path d="M1785.0 75v3" stroke="#606466" stroke-width="1"/><path d="M1793.6 75v3" stroke="#606466" stroke-width="1"/><path d="M1802.3 75v3" stroke="#606466" stroke-width="1"/><path d="M1810.9 75v3" stroke="#606466" stroke-width="1"/><path d="M1819.6 71v7" stroke="#6d7174" stroke-width="1"/><path d="M1828.3 75v3" stroke="#606466" stroke-width="1"/><path d="M1836.9 75v3" stroke="#606466" stroke-width="1"/><path d="M1845.6 75v3" stroke="#606466" stroke-width="1"/><path d="M1854.2 75v3" stroke="#606466" stroke-width="1"/><path d="M1862.9 65v13" stroke="#8b8f91" stroke-width="1"/><text x="1865.9" y="72.200" font-size="7.800" fill="#c9c9c9">550</text><path d="M1871.6 75v3" stroke="#606466" stroke-width="1"/><path d="M1880.2 75v3" stroke="#606466" stroke-width="1"/><path d="M1888.9 75v3" stroke="#606466" stroke-width="1"/><path d="M1897.5 75v3" stroke="#606466" stroke-width="1"/><path d="M1906.2 71v7" stroke="#6d7174" stroke-width="1"/><path d="M623 103.8h3" stroke="#606466" stroke-width="1"/><path d="M623 112.4h3" stroke="#606466" stroke-width="1"/><path d="M619.500 121.1h6.500" stroke="#6d7174" stroke-width="1"/><path d="M623 129.8h3" stroke="#606466" stroke-width="1"/><path d="M623 138.4h3" stroke="#606466" stroke-width="1"/><path d="M623 147.1h3" stroke="#606466" stroke-width="1"/><path d="M623 155.7h3" stroke="#606466" stroke-width="1"/><path d="M613.500 164.4h12.500" stroke="#8b8f91" stroke-width="1"/><text transform="translate(620.800 162.9) rotate(-90)" font-size="7.600" fill="#c9c9c9">100</text><path d="M623 173.1h3" stroke="#606466" stroke-width="1"/><path d="M623 181.7h3" stroke="#606466" stroke-width="1"/><path d="M623 190.4h3" stroke="#606466" stroke-width="1"/><path d="M623 199.0h3" stroke="#606466" stroke-width="1"/><path d="M619.500 207.7h6.500" stroke="#6d7174" stroke-width="1"/><path d="M623 216.4h3" stroke="#606466" stroke-width="1"/><path d="M623 225.0h3" stroke="#606466" stroke-width="1"/><path d="M623 233.7h3" stroke="#606466" stroke-width="1"/><path d="M623 242.3h3" stroke="#606466" stroke-width="1"/><path d="M613.500 251.0h12.500" stroke="#8b8f91" stroke-width="1"/><text transform="translate(620.800 249.5) rotate(-90)" font-size="7.600" fill="#c9c9c9">150</text><path d="M623 259.7h3" stroke="#606466" stroke-width="1"/><path d="M623 268.3h3" stroke="#606466" stroke-width="1"/><path d="M623 277.0h3" stroke="#606466" stroke-width="1"/><path d="M623 285.6h3" stroke="#606466" stroke-width="1"/><path d="M619.500 294.3h6.500" stroke="#6d7174" stroke-width="1"/><path d="M623 303.0h3" stroke="#606466" stroke-width="1"/><path d="M623 311.6h3" stroke="#606466" stroke-width="1"/><path d="M623 320.3h3" stroke="#606466" stroke-width="1"/><path d="M623 328.9h3" stroke="#606466" stroke-width="1"/><path d="M613.500 337.6h12.500" stroke="#8b8f91" stroke-width="1"/><text transform="translate(620.800 336.1) rotate(-90)" font-size="7.600" fill="#c9c9c9">200</text><path d="M623 346.3h3" stroke="#606466" stroke-width="1"/><path d="M623 354.9h3" stroke="#606466" stroke-width="1"/><path d="M623 363.6h3" stroke="#606466" stroke-width="1"/><path d="M623 372.2h3" stroke="#606466" stroke-width="1"/><path d="M619.500 380.9h6.500" stroke="#6d7174" stroke-width="1"/><path d="M623 389.6h3" stroke="#606466" stroke-width="1"/><path d="M623 398.2h3" stroke="#606466" stroke-width="1"/><path d="M623 406.9h3" stroke="#606466" stroke-width="1"/><path d="M623 415.5h3" stroke="#606466" stroke-width="1"/><path d="M613.500 424.2h12.500" stroke="#8b8f91" stroke-width="1"/><text transform="translate(620.800 422.7) rotate(-90)" font-size="7.600" fill="#c9c9c9">250</text><path d="M623 432.9h3" stroke="#606466" stroke-width="1"/><path d="M623 441.5h3" stroke="#606466" stroke-width="1"/><path d="M623 450.2h3" stroke="#606466" stroke-width="1"/><path d="M623 458.8h3" stroke="#606466" stroke-width="1"/><path d="M619.500 467.5h6.500" stroke="#6d7174" stroke-width="1"/><path d="M623 476.2h3" stroke="#606466" stroke-width="1"/><path d="M623 484.8h3" stroke="#606466" stroke-width="1"/><path d="M623 493.5h3" stroke="#606466" stroke-width="1"/><path d="M623 502.1h3" stroke="#606466" stroke-width="1"/><path d="M613.500 510.8h12.500" stroke="#8b8f91" stroke-width="1"/><text transform="translate(620.800 509.3) rotate(-90)" font-size="7.600" fill="#c9c9c9">300</text><path d="M623 519.5h3" stroke="#606466" stroke-width="1"/><path d="M623 528.1h3" stroke="#606466" stroke-width="1"/><path d="M623 536.8h3" stroke="#606466" stroke-width="1"/><path d="M623 545.4h3" stroke="#606466" stroke-width="1"/><path d="M619.500 554.1h6.500" stroke="#6d7174" stroke-width="1"/><path d="M623 562.8h3" stroke="#606466" stroke-width="1"/><path d="M623 571.4h3" stroke="#606466" stroke-width="1"/><path d="M623 580.1h3" stroke="#606466" stroke-width="1"/><path d="M623 588.7h3" stroke="#606466" stroke-width="1"/><path d="M613.500 597.4h12.500" stroke="#8b8f91" stroke-width="1"/><text transform="translate(620.800 595.9) rotate(-90)" font-size="7.600" fill="#c9c9c9">350</text><path d="M623 606.1h3" stroke="#606466" stroke-width="1"/><path d="M623 614.7h3" stroke="#606466" stroke-width="1"/><path d="M623 623.4h3" stroke="#606466" stroke-width="1"/><path d="M623 632.0h3" stroke="#606466" stroke-width="1"/><path d="M619.500 640.7h6.500" stroke="#6d7174" stroke-width="1"/><path d="M623 649.4h3" stroke="#606466" stroke-width="1"/><path d="M623 658.0h3" stroke="#606466" stroke-width="1"/><path d="M623 666.7h3" stroke="#606466" stroke-width="1"/><path d="M623 675.3h3" stroke="#606466" stroke-width="1"/><path d="M613.500 684.0h12.500" stroke="#8b8f91" stroke-width="1"/><text transform="translate(620.800 682.5) rotate(-90)" font-size="7.600" fill="#c9c9c9">400</text><path d="M623 692.7h3" stroke="#606466" stroke-width="1"/><path d="M623 701.3h3" stroke="#606466" stroke-width="1"/><path d="M623 710.0h3" stroke="#606466" stroke-width="1"/><path d="M623 718.6h3" stroke="#606466" stroke-width="1"/><path d="M619.500 727.3h6.500" stroke="#6d7174" stroke-width="1"/><path d="M623 736.0h3" stroke="#606466" stroke-width="1"/><path d="M623 744.6h3" stroke="#606466" stroke-width="1"/><path d="M623 753.3h3" stroke="#606466" stroke-width="1"/><path d="M623 761.9h3" stroke="#606466" stroke-width="1"/><path d="M613.500 770.6h12.500" stroke="#8b8f91" stroke-width="1"/><text transform="translate(620.800 769.1) rotate(-90)" font-size="7.600" fill="#c9c9c9">450</text><path d="M623 779.3h3" stroke="#606466" stroke-width="1"/><path d="M623 787.9h3" stroke="#606466" stroke-width="1"/><path d="M623 796.6h3" stroke="#606466" stroke-width="1"/></svg>
<div style="left:613.5px;top:803px;width:1300px;height:290px;background:#262626;border-radius:6px 0 0 0;"></div>
<div style="left:632.8px;top:813px;height:16px;line-height:16px;font-size:11.9px;color:#d6d6d6;white-space:nowrap;">Tiles</div>
<div style="left:672px;top:808.7px;width:140px;height:25px;background:#1b1b1b;border-radius:4px;"></div>
<div style="left:684.3px;top:813px;height:16px;line-height:16px;font-size:11.9px;color:#9a9a9a;white-space:nowrap;">Patterns</div>
<div style="left:756px;top:813px;height:16px;line-height:16px;font-size:11.9px;color:#9a9a9a;white-space:nowrap;">Terrains</div>
<div style="left:741.5px;top:809px;width:1px;height:24.5px;background:#242424;"></div>
<svg viewBox="0 0 16 16" preserveAspectRatio="none" style="left:819.65px;top:814.25px;width:13.5px;height:13.5px;color:#c8c8c8;fill:#c8c8c8;"><path d="M2.500 1.500l11 5.300-4.300 1.600 3 4-1.800 1.300-3-4-2.900 3.300z"/></svg>
<div style="left:841.4px;top:808.7px;width:22.6px;height:25px;background:#4d4d4d;border-radius:4px;"></div>
<svg viewBox="0 0 16 16" preserveAspectRatio="none" style="left:846px;top:814.5px;width:13px;height:13px;color:#5a9cf2;fill:#5a9cf2;"><path d="M6 1.500h4v2.300H6zM6 5h4v6.500L8 15l-2-3.500z"/></svg>
<svg viewBox="0 0 16 16" preserveAspectRatio="none" style="left:870px;top:814px;width:14px;height:14px;color:#c8c8c8;fill:#c8c8c8;"><path d="M3 13L13 3" fill="none" stroke="currentColor" stroke-width="2" stroke-linecap="round"/></svg>
<svg viewBox="0 0 16 16" preserveAspectRatio="none" style="left:893.7px;top:814px;width:14px;height:14px;color:#c8c8c8;fill:#c8c8c8;"><path d="M1.500 3.500h13v9h-13zM3.500 5.500v5h9v-5z" fill-rule="evenodd"/></svg>
<svg viewBox="0 0 16 16" preserveAspectRatio="none" style="left:920px;top:814px;width:14px;height:14px;color:#c8c8c8;fill:#c8c8c8;"><path d="M7 1.500l6.500 6.500-5 5a1.500 1.500 0 0 1-2 0L2 8.500a1.500 1.500 0 0 1 0-2zM14 10.500c.9 1.300 1.500 2.200 1.500 3a1.500 1.500 0 0 1-3 0c0-.8.600-1.700 1.500-3z"/></svg>
<svg viewBox="0 0 16 16" preserveAspectRatio="none" style="left:945.5px;top:814px;width:14px;height:14px;color:#c8c8c8;fill:#c8c8c8;"><path d="M7 1h2v2.500H7zM6 4h4v1.500H6zM6.500 6.200h3V12L8 15l-1.500-3z"/><path d="M6.500 6.200h3V12L8 15l-1.500-3z" fill="none" stroke="currentColor" stroke-width=".8"/></svg>
<svg viewBox="0 0 16 16" preserveAspectRatio="none" style="left:971px;top:814px;width:14px;height:14px;color:#c8c8c8;fill:#c8c8c8;"><path d="M9.500 2l5 5-6.500 6.500H4.500L1.500 10.500zM4 10l2.500 2.500h1L5.700 8.300z" fill-rule="evenodd"/></svg>
<div style="left:995.5px;top:812px;width:1.5px;height:18px;background:#171717;"></div>
<svg viewBox="0 0 16 16" preserveAspectRatio="none" style="left:1007.6px;top:814px;width:14px;height:14px;color:#c8c8c8;fill:#c8c8c8;"><path d="M4 8.500a4.500 4.500 0 1 1 1.500 3.400" fill="none" stroke="currentColor" stroke-width="1.800" stroke-linecap="round"/><path d="M1 5.500l3.300 4.300 2.700-4.300z"/></svg>
<svg viewBox="0 0 16 16" preserveAspectRatio="none" style="left:1033px;top:814px;width:14px;height:14px;color:#c8c8c8;fill:#c8c8c8;"><path d="M12 8.500a4.500 4.500 0 1 0-1.500 3.400" fill="none" stroke="currentColor" stroke-width="1.800" stroke-linecap="round"/><path d="M15 5.500l-3.300 4.300-2.700-4.300z"/></svg>
<svg viewBox="0 0 16 16" preserveAspectRatio="none" style="left:1058.7px;top:814px;width:14px;height:14px;color:#c8c8c8;fill:#c8c8c8;"><path d="M1 8l4-3.500v2.600h6V4.500L15 8l-4 3.500V8.900H5v2.600z"/></svg>
<svg viewBox="0 0 16 16" preserveAspectRatio="none" style="left:1084.6px;top:814px;width:14px;height:14px;color:#c8c8c8;fill:#c8c8c8;"><path d="M8 1l3.500 4H8.900v6h2.600L8 15l-3.500-4h2.600V5H4.500z"/></svg>
<svg viewBox="0 0 16 16" preserveAspectRatio="none" style="left:1110.8px;top:814px;width:14px;height:14px;color:#c8c8c8;fill:#c8c8c8;"><path d="M3.500 1.500h9a2 2 0 0 1 2 2v9a2 2 0 0 1-2 2h-9a2 2 0 0 1-2-2v-9a2 2 0 0 1 2-2zM5 3.500a1.500 1.500 0 1 0 0 3 1.500 1.500 0 0 0 0-3zM8 6.500a1.500 1.500 0 1 0 0 3 1.500 1.500 0 0 0 0-3zM11 9.500a1.500 1.500 0 1 0 0 3 1.500 1.500 0 0 0 0-3z" fill-rule="evenodd"/></svg>
<div style="left:1135px;top:812px;width:1.5px;height:18px;background:#171717;"></div>
<svg viewBox="0 0 16 16" preserveAspectRatio="none" style="left:1740.8px;top:814px;width:14px;height:14px;color:#c8c8c8;fill:#c8c8c8;"><path d="M4 13h8v1.700H4z"/><path d="M8 11V2.500M4 6.300l4-4 4 4" fill="none" stroke="currentColor" stroke-width="1.900" stroke-linecap="round" stroke-linejoin="round"/></svg>
<svg viewBox="0 0 16 16" preserveAspectRatio="none" style="left:1766.6px;top:814px;width:14px;height:14px;color:#c8c8c8;fill:#c8c8c8;"><path d="M4 1.300h8V3H4z"/><path d="M8 5v8.500M4 9.700l4 4 4-4" fill="none" stroke="currentColor" stroke-width="1.900" stroke-linecap="round" stroke-linejoin="round"/></svg>
<svg viewBox="0 0 16 16" preserveAspectRatio="none" style="left:1792.3px;top:814px;width:14px;height:14px;color:#c8c8c8;fill:#c8c8c8;"><path d="M2 2.500h2v2H2zM6 2.500h8v2H6zM2 7h2v2H2zM6 7h8v2H6zM2 11.500h2v2H2zM6 11.500h8v2H6z"/></svg>
<svg viewBox="0 0 16 16" preserveAspectRatio="none" style="left:1818.5px;top:814px;width:14px;height:14px;color:#c8c8c8;fill:#c8c8c8;"><path d="M5 2h10v2H5zM5 5.300h10v2H5zM5 8.700h10v2H5zM5 12h10v2H5zM1 3l2.500-1.800v3.600z"/></svg>
<div style="left:1842.3px;top:812px;width:1.5px;height:18px;background:#171717;"></div>
<div style="left:1850px;top:808.7px;width:22.3px;height:25px;background:#4d4d4d;border-radius:4px;"></div>
<svg viewBox="0 0 16 16" preserveAspectRatio="none" style="left:1855px;top:815px;width:12px;height:12px;color:#5a9cf2;fill:#5a9cf2;"><path d="M1.500 1.500h13v13h-13zM3 3v2.700h2.700V3zM6.700 3v2.700h2.600V3zM10.300 3v2.700H13V3zM3 6.700v2.600h2.700V6.700zM6.700 6.700v2.600h2.600V6.700zM10.300 6.700v2.600H13V6.700zM3 10.300V13h2.700v-2.700zM6.700 10.300V13h2.600v-2.700zM10.300 10.300V13H13v-2.700z" fill-rule="evenodd"/></svg>
<svg viewBox="0 0 16 16" preserveAspectRatio="none" style="left:1879.5px;top:814px;width:14px;height:14px;color:#c8c8c8;fill:#c8c8c8;"><path d="M3.200 1v4.500a1.800 1.800 0 0 0 1 1.600V14a1 1 0 0 0 2 0V7.100a1.800 1.800 0 0 0 1-1.600V1h-1v3.500h-1V1z" transform="translate(5.300 0)"/><path d="M3.800 1.500h1.600L6 6H3.200zM3 7h3.200v2.500A1.600 1.600 0 0 1 3 9.500zM3.600 11h2v3.500h-2z" transform="translate(-.8 0)"/></svg>
<div style="left:620px;top:837px;width:286.5px;height:187.5px;background:#1b1b1b;border-radius:4px;"></div>
<div style="left:625px;top:841.8px;width:276.8px;height:52.5px;background:#464646;border-radius:3px;"></div>
<div style="left:680.5px;top:860px;height:16px;line-height:16px;font-size:11.9px;color:#e0e0e0;white-space:nowrap;">chars.png</div>
<svg viewBox="625 842 60 52" style="left:625px;top:842px;width:60px;height:52px;"><rect x="634" y="848" width="1.500" height="1.500" fill="#6a6a9a"/><rect x="637" y="850" width="1.500" height="1.500" fill="#8a8a5a"/><rect x="640" y="848" width="1.500" height="1.500" fill="#5a8a8a"/><rect x="643" y="850" width="1.500" height="1.500" fill="#9a9a6a"/><rect x="646" y="848" width="1.500" height="1.500" fill="#6a7a9a"/><rect x="650" y="850" width="1.500" height="1.500" fill="#8a9a6a"/><rect x="654" y="849" width="1.500" height="1.500" fill="#7a7a7a"/><rect x="658" y="850" width="1.500" height="1.500" fill="#8a8a6a"/><rect x="636" y="854" width="1.500" height="1.500" fill="#a0a040"/><rect x="640" y="856" width="1.500" height="1.500" fill="#a08040"/><rect x="634" y="858" width="1.500" height="1.500" fill="#6060a0"/><rect x="643" y="858" width="1.500" height="1.500" fill="#a0a040"/><rect x="634" y="862" width="5" height="4" fill="#8a4030"/><rect x="635" y="870" width="5" height="3" fill="#7a8a90"/><rect x="635" y="877" width="5" height="5" fill="#4a9a90"/><rect x="635" y="884" width="8" height="6" fill="#3a8a80"/><rect x="637" y="885" width="3" height="3" fill="#1a3a30"/></svg>
<svg viewBox="0 0 16 16" preserveAspectRatio="none" style="left:888.8px;top:1031.3px;width:13px;height:13px;color:#c8c8c8;fill:#c8c8c8;"><path d="M4 2v12M1.500 4.500L4 2l2.500 2.500M1.500 11.500L4 14l2.500-2.500" fill="none" stroke="currentColor" stroke-width="1.500" stroke-linecap="round" stroke-linejoin="round"/><path d="M8.500 3h6.500v1.600H8.500zM8.500 7.200h4.500v1.600H8.500zM8.500 11.400h2.500V13H8.500z"/></svg>
<div style="left:909px;top:837px;width:991.5px;height:210px;background:#1b1b1b;border-radius:4px;"></div>
<svg viewBox="0 0 16 16" preserveAspectRatio="none" style="left:917.6px;top:845px;width:12px;height:12px;color:#d8d8d8;fill:#d8d8d8;"><path d="M8 1.500a6.500 6.500 0 1 0 0 13 6.500 6.500 0 0 0 0-13zM4.500 7.100h7v1.800h-7z" fill-rule="evenodd"/></svg>
<div style="left:943px;top:843px;height:16px;line-height:16px;font-size:11.9px;color:#d0d0d0;white-space:nowrap;">313.8 %</div>
<svg viewBox="0 0 16 16" preserveAspectRatio="none" style="left:1003.5px;top:845px;width:12px;height:12px;color:#d8d8d8;fill:#d8d8d8;"><path d="M8 1.500a6.500 6.500 0 1 0 0 13 6.500 6.500 0 0 0 0-13zM7.100 4.500h1.800v2.600h2.600v1.800H8.900v2.600H7.100V8.900H4.500V7.100h2.600z" fill-rule="evenodd"/></svg>
<svg viewBox="0 0 16 16" preserveAspectRatio="none" style="left:1877.5px;top:845.5px;width:13px;height:13px;color:#c8c8c8;fill:#c8c8c8;"><circle cx="8" cy="8" r="1.500"/><path d="M8 6L5.500 2.500M8 6l2.500-3.500M8 10l-2.500 3.500M8 10l2.500 3.500M8 1v4M8 11v4M1.500 6l2.500 2-2.500 2M14.500 6L12 8l2.500 2" fill="none" stroke="currentColor" stroke-width="1.100" stroke-linecap="round"/></svg>
<svg viewBox="1087 837 366 210" style="left:1087px;top:837px;width:366px;height:210px;"><defs><pattern id="chk" x="1087.400" y="837" width="25.86" height="25.86" patternUnits="userSpaceOnUse"><rect width="25.86" height="25.86" fill="#4a4a4a"/><rect width="12.93" height="12.93" fill="#292929"/><rect x="12.93" y="12.93" width="12.93" height="12.93" fill="#292929"/></pattern><pattern id="chkl" x="1087.400" y="837" width="25.86" height="25.86" patternUnits="userSpaceOnUse"><rect width="25.86" height="25.86" fill="#a9a9a9"/><rect width="12.93" height="12.93" fill="#6f6f6f"/><rect x="12.93" y="12.93" width="12.93" height="12.93" fill="#6f6f6f"/></pattern></defs><rect x="1087.400" y="837" width="365" height="210" fill="url(#chk)"/><rect x="1087.4" y="837" width="122" height="30.5" fill="url(#chkl)"/><rect x="1127" y="867" width="40.6" height="42" fill="url(#chkl)"/><rect x="1087.4" y="908.5" width="80.2" height="79.5" fill="url(#chkl)"/><g><rect x="1092" y="849" width="38" height="3" fill="#8a6a5a"/><rect x="1100" y="851" width="16" height="3" fill="#c8c0b8"/><rect x="1104" y="841" width="5" height="9" fill="#6a8a70"/><rect x="1134" y="849" width="34" height="3" fill="#8a6a5a"/><rect x="1140" y="851" width="18" height="3" fill="#d8d0c8"/><rect x="1144" y="840" width="6" height="18" fill="#6a8a70"/><rect x="1172" y="846" width="34" height="6" fill="#5f7f98"/><rect x="1180" y="840" width="8" height="16" fill="#5a7a70"/><rect x="1204" y="842" width="3" height="6" fill="#c8a840"/></g><path d="M1096 880l4-6 5 2v6l8 6 10-3-2 6-10 2-2 6-4-6-6-4z" fill="#3b3560"/><ellipse cx="1148" cy="894" rx="6.500" ry="7" fill="#7f7fc8"/><rect x="1145.500" y="883" width="5" height="6" fill="#8f8fd8"/><ellipse cx="1188" cy="896" rx="7" ry="8" fill="#8a8a2a"/><rect x="1185" y="884" width="6" height="7" fill="#9a9a30"/><rect x="1183" y="897" width="10" height="5" fill="#2a8a70"/><ellipse cx="1126" cy="975" rx="33" ry="8" fill="#5a5a5a" opacity=".5"/><path d="M1098 955c0-16 12-26 28-26s30 10 30 26c0 12-12 22-30 22s-28-10-28-22z" fill="#7a4430"/><path d="M1100 956l-8 8v16M1152 956l8 10v14M1104 966l-6 14M1148 966l6 14" stroke="#8a5038" stroke-width="4" fill="none"/><path d="M1100 944h10v6h-10zM1116 936h12v8h-12zM1134 944h10v8h-10zM1108 954h8v6h-8zM1136 956h10v6h-10z" fill="#6a3826"/><rect x="1106" y="932" width="12" height="5" fill="#e8f0f4"/><rect x="1124" y="930" width="14" height="5" fill="#e8f0f4"/><rect x="1136" y="940" width="10" height="5" fill="#e8f0f4"/><rect x="1112" y="940" width="6" height="4" fill="#2a9a68"/><rect x="1130" y="944" width="6" height="4" fill="#2a9a68"/><circle cx="1122" cy="963" r="8" fill="#15100c"/><circle cx="1122" cy="963" r="4.500" fill="#f09a28"/><circle cx="1122" cy="963" r="2" fill="#fff"/><path d="M1092 1047v-18l6-8h48l6 8v18h-8v-8h-44v8z" fill="#2a363c"/><rect x="1100" y="1026" width="44" height="12" rx="3" fill="#66767c"/><rect x="1102" y="1034" width="40" height="9" fill="#3c4a50"/><rect x="1114" y="1004" width="6" height="20" fill="#1c2226"/><rect x="1134" y="1004" width="6" height="20" fill="#1c2226"/><path d="M1117 996l7 8-7 8-7-8zM1137 996l7 8-7 8-7-8z" fill="#1c2226"/><rect x="1110" y="1035" width="5" height="4" fill="#2f8a48"/><rect x="1125" y="1035" width="5" height="4" fill="#2f8a48"/><rect x="1140" y="1035" width="5" height="4" fill="#2f8a48"/></svg>
<div style="left:623.500px;top:1061px;width:6px;height:6px;border-radius:3px;background:#8a7a55;"></div>
<div style="left:632.8px;top:1055.7px;height:16px;line-height:16px;font-size:11.9px;color:#cdcdcd;white-space:nowrap;">Output</div>
<div style="left:685.3px;top:1055.7px;height:16px;line-height:16px;font-size:11.9px;color:#cdcdcd;white-space:nowrap;">Debugger</div>
<div style="left:755px;top:1055.7px;height:16px;line-height:16px;font-size:11.9px;color:#cdcdcd;white-space:nowrap;">Audio</div>
<div style="left:802.6px;top:1055.7px;height:16px;line-height:16px;font-size:11.9px;color:#cdcdcd;white-space:nowrap;">Animation</div>
<div style="left:873px;top:1055.7px;height:16px;line-height:16px;font-size:11.9px;color:#cdcdcd;white-space:nowrap;">Shader Editor</div>
<div style="left:955px;top:1051.4px;width:57px;height:25.6px;background:#3c3c3c;border-radius:4px;"></div>
<div style="left:962px;top:1055.7px;height:16px;line-height:16px;font-size:11.9px;color:#f0f0f0;white-space:nowrap;">TileMap</div>
<div style="left:1021.7px;top:1055.7px;height:16px;line-height:16px;font-size:11.9px;color:#cdcdcd;white-space:nowrap;">TileSet</div>
<svg viewBox="0 0 16 16" preserveAspectRatio="none" style="left:1735.2px;top:1056.2px;width:15px;height:15px;color:#8f8f8f;fill:#8f8f8f;"><circle cx="8" cy="3" r="1.5"/><circle cx="8" cy="8" r="1.5"/><circle cx="8" cy="13" r="1.5"/></svg>
<div style="left:1755.5px;top:1055px;width:1.5px;height:18px;background:#171717;"></div>
<svg viewBox="0 0 16 16" preserveAspectRatio="none" style="left:1768.1px;top:1057.2px;width:13px;height:13px;color:#4a4a4a;fill:#4a4a4a;"><path d="M3 4l2.500 1.500 2.500-1 2.500 1L13 4l1 6-1.500 3.500h-9L2 10z"/></svg>
<div style="left:1788.5px;top:1055.7px;height:16px;line-height:16px;font-size:11.9px;color:#8f8f8f;white-space:nowrap;">4.6.beta2</div>
<svg viewBox="0 0 16 16" preserveAspectRatio="none" style="left:1853.4px;top:1057.7px;width:12px;height:12px;color:#c8c8c8;fill:#c8c8c8;"><path d="M4.500 1.500h7v1.800h-1v4l2 2.200v1.500h-9V9.500l2-2.200v-4h-1zM7.300 11.500h1.400V15H7.300z"/></svg>
<svg viewBox="0 0 16 16" preserveAspectRatio="none" style="left:1881.5px;top:1057.2px;width:13px;height:13px;color:#c8c8c8;fill:#c8c8c8;"><path d="M1.500 1.500h13v2h-13zM4.700 6l3 3.200H5.600V14.500H3.800V9.200H1.700zM11.300 6l3 3.200h-2.100V14.500h-1.800V9.200H8.300z"/></svg>
</div></body></html>
